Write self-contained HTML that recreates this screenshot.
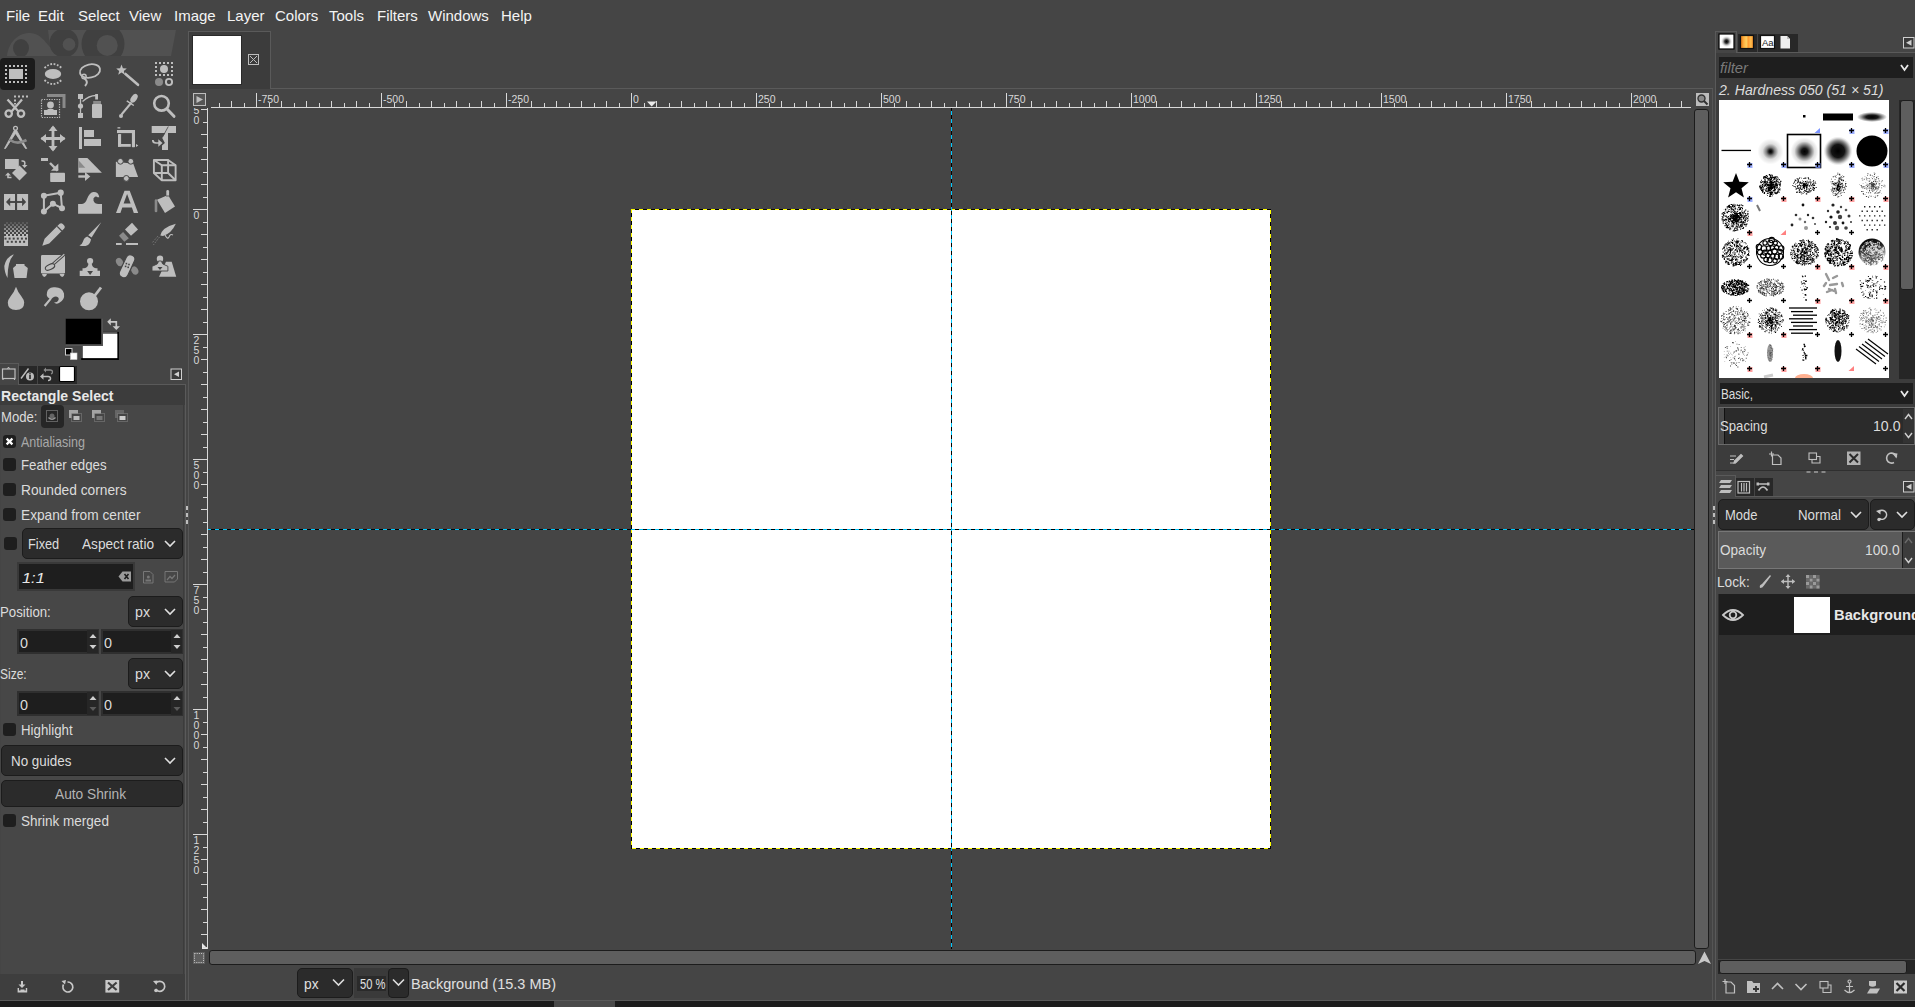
<!DOCTYPE html>
<html><head><meta charset="utf-8">
<style>
*{margin:0;padding:0;box-sizing:border-box}
html,body{width:1915px;height:1007px;overflow:hidden;background:#454545;font-family:"Liberation Sans",sans-serif;color:#dcdcdc;position:relative}
.a{position:absolute}
svg.a{overflow:visible}
.t{position:absolute;white-space:nowrap;font-size:15px;line-height:17px}
.menu span{position:absolute;top:7px;font-size:15px;line-height:18px;color:#f4f4f4}
</style></head><body>
<div class="menu">
<span style="left:6px">File</span>
<span style="left:38px">Edit</span>
<span style="left:78px">Select</span>
<span style="left:129px">View</span>
<span style="left:174px">Image</span>
<span style="left:227px">Layer</span>
<span style="left:275px">Colors</span>
<span style="left:329px">Tools</span>
<span style="left:377px">Filters</span>
<span style="left:428px">Windows</span>
<span style="left:501px">Help</span>
</div>
<div class="a" style="left:185px;top:384px;width:1px;height:616px;background:#5a5a5a"></div>
<div class="a" style="left:188px;top:31px;width:1px;height:969px;background:#575757"></div>

<div class="a" style="left:188px;top:31px;width:83px;height:58px;background:#3c3c3c;border:1px solid #5a5a5a;border-bottom:none"></div><div class="a" style="left:270px;top:88px;width:1443px;height:1px;background:#5a5a5a"></div><div class="a" style="left:193px;top:36px;width:48px;height:48px;background:#fff;box-shadow:0 0 0 1px #2a2a2a"></div><svg class="a" style="left:247px;top:53px" width="13" height="13"><rect x="1.5" y="1.5" width="10" height="10" fill="none" stroke="#bdbdbd" stroke-width="1"/><path d="M3 3L10 10M10 3L3 10" stroke="#bdbdbd" stroke-width="1"/></svg><svg class="a" style="left:193px;top:93px" width="13" height="13"><rect x="0.5" y="0.5" width="12" height="12" fill="#555" stroke="#bdbdbd"/><path d="M3.5 3L10 6.5L3.5 10Z" fill="#bdbdbd"/></svg><svg class="a" style="left:1696px;top:93px" width="13" height="13"><rect x="0" y="0" width="13" height="13" fill="#bdbdbd"/><circle cx="5.5" cy="5.5" r="3.5" fill="#8a8a8a" stroke="#333" stroke-width="1.4"/><path d="M8 8L11.5 11.5" stroke="#333" stroke-width="2"/></svg><svg class="a" style="left:0;top:0" width="1915" height="1007"><path d="M202,943 L208,949 L202,949Z" fill="#e8e8e8"/><path d="M647,101.5 L656.5,101.5 L651.7,106.5Z" fill="#e8e8e8"/><defs><clipPath id="vclip"><rect x="189" y="108" width="20" height="842"/></clipPath></defs><g fill="#d8d8d8"><rect x="219" y="103" width="1" height="4"/><rect x="231" y="101" width="1" height="6"/><rect x="244" y="103" width="1" height="4"/><rect x="256" y="93" width="1" height="14"/><rect x="269" y="103" width="1" height="4"/><rect x="281" y="101" width="1" height="6"/><rect x="294" y="103" width="1" height="4"/><rect x="306" y="101" width="1" height="6"/><rect x="319" y="103" width="1" height="4"/><rect x="331" y="101" width="1" height="6"/><rect x="344" y="103" width="1" height="4"/><rect x="356" y="101" width="1" height="6"/><rect x="369" y="103" width="1" height="4"/><rect x="381" y="93" width="1" height="14"/><rect x="394" y="103" width="1" height="4"/><rect x="406" y="101" width="1" height="6"/><rect x="419" y="103" width="1" height="4"/><rect x="431" y="101" width="1" height="6"/><rect x="444" y="103" width="1" height="4"/><rect x="456" y="101" width="1" height="6"/><rect x="469" y="103" width="1" height="4"/><rect x="481" y="101" width="1" height="6"/><rect x="494" y="103" width="1" height="4"/><rect x="506" y="93" width="1" height="14"/><rect x="519" y="103" width="1" height="4"/><rect x="531" y="101" width="1" height="6"/><rect x="544" y="103" width="1" height="4"/><rect x="556" y="101" width="1" height="6"/><rect x="569" y="103" width="1" height="4"/><rect x="581" y="101" width="1" height="6"/><rect x="594" y="103" width="1" height="4"/><rect x="606" y="101" width="1" height="6"/><rect x="619" y="103" width="1" height="4"/><rect x="631" y="93" width="1" height="14"/><rect x="644" y="103" width="1" height="4"/><rect x="656" y="101" width="1" height="6"/><rect x="669" y="103" width="1" height="4"/><rect x="681" y="101" width="1" height="6"/><rect x="694" y="103" width="1" height="4"/><rect x="706" y="101" width="1" height="6"/><rect x="719" y="103" width="1" height="4"/><rect x="731" y="101" width="1" height="6"/><rect x="744" y="103" width="1" height="4"/><rect x="756" y="93" width="1" height="14"/><rect x="769" y="103" width="1" height="4"/><rect x="781" y="101" width="1" height="6"/><rect x="794" y="103" width="1" height="4"/><rect x="806" y="101" width="1" height="6"/><rect x="819" y="103" width="1" height="4"/><rect x="831" y="101" width="1" height="6"/><rect x="844" y="103" width="1" height="4"/><rect x="856" y="101" width="1" height="6"/><rect x="869" y="103" width="1" height="4"/><rect x="881" y="93" width="1" height="14"/><rect x="894" y="103" width="1" height="4"/><rect x="906" y="101" width="1" height="6"/><rect x="919" y="103" width="1" height="4"/><rect x="931" y="101" width="1" height="6"/><rect x="944" y="103" width="1" height="4"/><rect x="956" y="101" width="1" height="6"/><rect x="969" y="103" width="1" height="4"/><rect x="981" y="101" width="1" height="6"/><rect x="994" y="103" width="1" height="4"/><rect x="1006" y="93" width="1" height="14"/><rect x="1019" y="103" width="1" height="4"/><rect x="1031" y="101" width="1" height="6"/><rect x="1044" y="103" width="1" height="4"/><rect x="1056" y="101" width="1" height="6"/><rect x="1069" y="103" width="1" height="4"/><rect x="1081" y="101" width="1" height="6"/><rect x="1094" y="103" width="1" height="4"/><rect x="1106" y="101" width="1" height="6"/><rect x="1119" y="103" width="1" height="4"/><rect x="1131" y="93" width="1" height="14"/><rect x="1144" y="103" width="1" height="4"/><rect x="1156" y="101" width="1" height="6"/><rect x="1169" y="103" width="1" height="4"/><rect x="1181" y="101" width="1" height="6"/><rect x="1194" y="103" width="1" height="4"/><rect x="1206" y="101" width="1" height="6"/><rect x="1219" y="103" width="1" height="4"/><rect x="1231" y="101" width="1" height="6"/><rect x="1244" y="103" width="1" height="4"/><rect x="1256" y="93" width="1" height="14"/><rect x="1269" y="103" width="1" height="4"/><rect x="1281" y="101" width="1" height="6"/><rect x="1294" y="103" width="1" height="4"/><rect x="1306" y="101" width="1" height="6"/><rect x="1319" y="103" width="1" height="4"/><rect x="1331" y="101" width="1" height="6"/><rect x="1344" y="103" width="1" height="4"/><rect x="1356" y="101" width="1" height="6"/><rect x="1369" y="103" width="1" height="4"/><rect x="1381" y="93" width="1" height="14"/><rect x="1394" y="103" width="1" height="4"/><rect x="1406" y="101" width="1" height="6"/><rect x="1419" y="103" width="1" height="4"/><rect x="1431" y="101" width="1" height="6"/><rect x="1444" y="103" width="1" height="4"/><rect x="1456" y="101" width="1" height="6"/><rect x="1469" y="103" width="1" height="4"/><rect x="1481" y="101" width="1" height="6"/><rect x="1494" y="103" width="1" height="4"/><rect x="1506" y="93" width="1" height="14"/><rect x="1519" y="103" width="1" height="4"/><rect x="1531" y="101" width="1" height="6"/><rect x="1544" y="103" width="1" height="4"/><rect x="1556" y="101" width="1" height="6"/><rect x="1569" y="103" width="1" height="4"/><rect x="1581" y="101" width="1" height="6"/><rect x="1594" y="103" width="1" height="4"/><rect x="1606" y="101" width="1" height="6"/><rect x="1619" y="103" width="1" height="4"/><rect x="1631" y="93" width="1" height="14"/><rect x="1644" y="103" width="1" height="4"/><rect x="1656" y="101" width="1" height="6"/><rect x="1669" y="103" width="1" height="4"/><rect x="1681" y="101" width="1" height="6"/><rect x="211" y="107" width="1480" height="1"/><rect x="201" y="109" width="6" height="1"/><rect x="203" y="122" width="4" height="1"/><rect x="201" y="134" width="6" height="1"/><rect x="203" y="147" width="4" height="1"/><rect x="201" y="159" width="6" height="1"/><rect x="203" y="172" width="4" height="1"/><rect x="201" y="184" width="6" height="1"/><rect x="203" y="197" width="4" height="1"/><rect x="193" y="209" width="14" height="1"/><rect x="203" y="222" width="4" height="1"/><rect x="201" y="234" width="6" height="1"/><rect x="203" y="247" width="4" height="1"/><rect x="201" y="259" width="6" height="1"/><rect x="203" y="272" width="4" height="1"/><rect x="201" y="284" width="6" height="1"/><rect x="203" y="297" width="4" height="1"/><rect x="201" y="309" width="6" height="1"/><rect x="203" y="322" width="4" height="1"/><rect x="193" y="334" width="14" height="1"/><rect x="203" y="347" width="4" height="1"/><rect x="201" y="359" width="6" height="1"/><rect x="203" y="372" width="4" height="1"/><rect x="201" y="384" width="6" height="1"/><rect x="203" y="397" width="4" height="1"/><rect x="201" y="409" width="6" height="1"/><rect x="203" y="422" width="4" height="1"/><rect x="201" y="434" width="6" height="1"/><rect x="203" y="447" width="4" height="1"/><rect x="193" y="459" width="14" height="1"/><rect x="203" y="472" width="4" height="1"/><rect x="201" y="484" width="6" height="1"/><rect x="203" y="497" width="4" height="1"/><rect x="201" y="509" width="6" height="1"/><rect x="203" y="522" width="4" height="1"/><rect x="201" y="534" width="6" height="1"/><rect x="203" y="547" width="4" height="1"/><rect x="201" y="559" width="6" height="1"/><rect x="203" y="572" width="4" height="1"/><rect x="193" y="584" width="14" height="1"/><rect x="203" y="597" width="4" height="1"/><rect x="201" y="609" width="6" height="1"/><rect x="203" y="622" width="4" height="1"/><rect x="201" y="634" width="6" height="1"/><rect x="203" y="647" width="4" height="1"/><rect x="201" y="659" width="6" height="1"/><rect x="203" y="672" width="4" height="1"/><rect x="201" y="684" width="6" height="1"/><rect x="203" y="697" width="4" height="1"/><rect x="193" y="709" width="14" height="1"/><rect x="203" y="722" width="4" height="1"/><rect x="201" y="734" width="6" height="1"/><rect x="203" y="747" width="4" height="1"/><rect x="201" y="759" width="6" height="1"/><rect x="203" y="772" width="4" height="1"/><rect x="201" y="784" width="6" height="1"/><rect x="203" y="797" width="4" height="1"/><rect x="201" y="809" width="6" height="1"/><rect x="203" y="822" width="4" height="1"/><rect x="193" y="834" width="14" height="1"/><rect x="203" y="847" width="4" height="1"/><rect x="201" y="859" width="6" height="1"/><rect x="203" y="872" width="4" height="1"/><rect x="201" y="884" width="6" height="1"/><rect x="203" y="897" width="4" height="1"/><rect x="201" y="909" width="6" height="1"/><rect x="203" y="922" width="4" height="1"/><rect x="201" y="934" width="6" height="1"/><rect x="203" y="947" width="4" height="1"/><rect x="207" y="108" width="1" height="841"/></g><g fill="#d8d8d8" font-family="Liberation Sans" font-size="10.5px"><text x="258" y="103">-750</text><text x="383" y="103">-500</text><text x="508" y="103">-250</text><text x="633" y="103">0</text><text x="758" y="103">250</text><text x="883" y="103">500</text><text x="1008" y="103">750</text><text x="1133" y="103">1000</text><text x="1258" y="103">1250</text><text x="1383" y="103">1500</text><text x="1508" y="103">1750</text><text x="1633" y="103">2000</text><text x="193.5" y="219">0</text><text x="193.5" y="344">2</text><text x="193.5" y="354">5</text><text x="193.5" y="364">0</text><text x="193.5" y="469">5</text><text x="193.5" y="479">0</text><text x="193.5" y="489">0</text><text x="193.5" y="594">7</text><text x="193.5" y="604">5</text><text x="193.5" y="614">0</text><text x="193.5" y="719">1</text><text x="193.5" y="729">0</text><text x="193.5" y="739">0</text><text x="193.5" y="749">0</text><text x="193.5" y="844">1</text><text x="193.5" y="854">2</text><text x="193.5" y="864">5</text><text x="193.5" y="874">0</text><text x="193.5" y="94" clip-path="url(#vclip)">-</text><text x="193.5" y="104" clip-path="url(#vclip)">2</text><text x="193.5" y="114" clip-path="url(#vclip)">5</text><text x="193.5" y="124" clip-path="url(#vclip)">0</text></g></svg><div class="a" style="left:631px;top:209px;width:640px;height:640px;background:#fff"></div><svg class="a" style="left:0;top:0" width="1915" height="1007"><g stroke-width="1" fill="none"><path d="M631,209.5 L1271,209.5 M631.5,209 L631.5,849 M631,848.5 L1271,848.5 M1270.5,209 L1270.5,849" stroke="#ffff00"/><path d="M631,209.5 L1271,209.5 M631.5,209 L631.5,849" stroke="#000" stroke-dasharray="4 4" stroke-dashoffset="4"/><path d="M631,848.5 L1271,848.5 M1270.5,209 L1270.5,849" stroke="#000" stroke-dasharray="4 4" stroke-dashoffset="3"/></g><line x1="951.5" y1="108" x2="951.5" y2="949" stroke="#00c8ff" stroke-width="1"/><line x1="951.5" y1="108" x2="951.5" y2="949" stroke="#000" stroke-width="1" stroke-dasharray="4 4" stroke-dashoffset="1"/><line x1="208" y1="529.5" x2="1694" y2="529.5" stroke="#00c8ff" stroke-width="1"/><line x1="208" y1="529.5" x2="1694" y2="529.5" stroke="#000" stroke-width="1" stroke-dasharray="4 4" stroke-dashoffset="5"/></svg><div class="a" style="left:1694px;top:109px;width:15px;height:840px;background:#5e5e5e;border:1px solid #1c1c1c;border-radius:3px"></div><div class="a" style="left:209px;top:950px;width:1487px;height:15px;background:#5e5e5e;border:1px solid #1c1c1c;border-radius:3px"></div><svg class="a" style="left:193px;top:952px" width="12" height="12"><rect x="0" y="0" width="12" height="12" fill="#5e5e5e"/><rect x="1.5" y="1.5" width="9" height="9" fill="none" stroke="#cfcfcf" stroke-dasharray="1 1.2"/></svg><svg class="a" style="left:1697px;top:951px" width="15" height="14"><path d="M7.5 0.5L14 13L7.5 10L1 13Z" fill="#c8c8c8"/></svg><div class="a" style="left:297px;top:968px;width:56px;height:30px;background:#2b2b2b;border:1px solid #1c1c1c;border-radius:5px"></div><div class="t" style="left:303.5px;top:975.80px;font-size:15px;line-height:15px;color:#e0e0e0;font-weight:400;font-style:normal;transform:scaleX(0.9152);transform-origin:0 0;">px</div><svg class="a" style="left:332px;top:978px" width="13" height="9"><path d="M1 1.5L6.5 7L12 1.5" fill="none" stroke="#dcdcdc" stroke-width="1.6"/></svg><div class="a" style="left:354px;top:968px;width:35px;height:30px;background:#3a3a3a"></div><div class="a" style="left:357px;top:976px;width:29px;height:15px;background:#2a2a2a"></div><div class="t" style="left:359.6px;top:977.15px;font-size:14px;line-height:14px;color:#e0e0e0;font-weight:400;font-style:normal;transform:scaleX(0.7988);transform-origin:0 0;">50 %</div><div class="a" style="left:388px;top:968px;width:21px;height:30px;background:#2b2b2b;border:1px solid #1c1c1c;border-radius:4px"></div><svg class="a" style="left:392px;top:978px" width="13" height="9"><path d="M1 1.5L6.5 7L12 1.5" fill="none" stroke="#dcdcdc" stroke-width="1.6"/></svg><div class="t" style="left:411.1px;top:976.10px;font-size:15px;line-height:15px;color:#e0e0e0;font-weight:400;font-style:normal;transform:scaleX(0.9662);transform-origin:0 0;">Background (15.3 MB)</div><div class="a" style="left:1712px;top:89px;width:1px;height:911px;background:#555"></div>
<svg class="a" style="left:0;top:0" width="190" height="60"><defs><clipPath id="wb"><rect x="0" y="30" width="190" height="26"/></clipPath></defs><g clip-path="url(#wb)"><path d="M7,56 C9,40 20,33 30,33 C40,33 45,42 50,47 L48,30 L176,30 L171,56 Z" fill="#515151"/><ellipse cx="21" cy="48" rx="8" ry="9" fill="#404040"/><circle cx="64" cy="43" r="14.5" fill="#404040"/><circle cx="69" cy="44.4" r="6.3" fill="#515151"/><circle cx="103" cy="44" r="21.5" fill="#404040"/><circle cx="107.2" cy="45.4" r="10.5" fill="#515151"/></g></svg><svg class="a" style="left:0;top:0" width="190" height="320"><rect x="0" y="58" width="35" height="32" rx="4" fill="#1c1c1c"/><g fill="#bebebe"><rect x="5" y="65" width="2" height="2"/><rect x="5" y="81" width="2" height="2"/><rect x="9" y="65" width="2" height="2"/><rect x="9" y="81" width="2" height="2"/><rect x="13" y="65" width="2" height="2"/><rect x="13" y="81" width="2" height="2"/><rect x="17" y="65" width="2" height="2"/><rect x="17" y="81" width="2" height="2"/><rect x="21" y="65" width="2" height="2"/><rect x="21" y="81" width="2" height="2"/><rect x="25" y="65" width="2" height="2"/><rect x="25" y="81" width="2" height="2"/><rect x="5" y="69" width="2" height="2"/><rect x="25" y="69" width="2" height="2"/><rect x="5" y="73" width="2" height="2"/><rect x="25" y="73" width="2" height="2"/><rect x="5" y="77" width="2" height="2"/><rect x="25" y="77" width="2" height="2"/></g><rect x="9" y="69" width="14" height="10" fill="#bebebe"/><path d="M44.5,68 Q53,60 61.5,68 M44.5,80 Q53,88 61.5,80" fill="none" stroke="#bebebe" stroke-width="1.9" stroke-dasharray="1.8 1.6"/><ellipse cx="53" cy="74" rx="8.2" ry="5" fill="#bebebe"/><ellipse cx="90" cy="71" rx="10.2" ry="6.6" transform="rotate(-12 90 71)" fill="none" stroke="#bebebe" stroke-width="1.8"/><circle cx="84" cy="76.5" r="2.2" fill="none" stroke="#bebebe" stroke-width="1.4"/><path d="M84.5,78.5 Q89,82 85,86" fill="none" stroke="#bebebe" stroke-width="2"/><path d="M121.5,64.5 L122.9,68.3 L126.8,68.4 L123.8,70.9 L124.8,74.8 L121.5,72.6 L118.2,74.8 L119.2,70.9 L116.2,68.4 L120.1,68.3Z" fill="#bebebe"/><path d="M125.5,74 L138,84.8" stroke="#bebebe" stroke-width="2.6" stroke-linecap="round"/><g fill="#bebebe"><rect x="155" y="62" width="2" height="2"/><rect x="155" y="74" width="2" height="2"/><rect x="159" y="62" width="2" height="2"/><rect x="159" y="74" width="2" height="2"/><rect x="163" y="62" width="2" height="2"/><rect x="163" y="74" width="2" height="2"/><rect x="167" y="62" width="2" height="2"/><rect x="167" y="74" width="2" height="2"/><rect x="171" y="62" width="2" height="2"/><rect x="171" y="74" width="2" height="2"/><rect x="155" y="66" width="2" height="2"/><rect x="171" y="66" width="2" height="2"/><rect x="155" y="70" width="2" height="2"/><rect x="171" y="70" width="2" height="2"/></g><circle cx="164" cy="69" r="4" fill="#bebebe"/><circle cx="159" cy="82" r="4" fill="#8a8a8a"/><circle cx="169" cy="82" r="3.1" fill="none" stroke="#bebebe" stroke-width="1.9"/><g fill="#bebebe"><rect x="14" y="95.5" width="2" height="2"/><rect x="18" y="95.5" width="2" height="2"/><rect x="22" y="95.5" width="2" height="2"/><rect x="26" y="95.5" width="2" height="2"/><rect x="14" y="99.5" width="2" height="2"/><rect x="14" y="103" width="2" height="1.5"/></g><path d="M7.5,99.5 L18.5,111.5 M22,99.5 L11.5,111.5" stroke="#bebebe" stroke-width="2.3"/><circle cx="8.7" cy="113.6" r="3.2" fill="none" stroke="#bebebe" stroke-width="2.3"/><circle cx="21" cy="113.6" r="3.2" fill="none" stroke="#bebebe" stroke-width="2.3"/><path d="M47,95.5 L64,95.5 L64,108" fill="none" stroke="#8a8a8a" stroke-width="3"/><rect x="41.5" y="99.5" width="18" height="18" fill="none" stroke="#bebebe" stroke-width="1.2" stroke-dasharray="1.2 1.3"/><circle cx="50.5" cy="105" r="3.4" fill="#bebebe"/><path d="M44,115 L44,110 L47.5,110 L47.5,109 L53.5,109 L53.5,110 L57,110 L57,115Z" fill="#bebebe"/><g fill="#bebebe"><rect x="78" y="94" width="5" height="5"/><rect x="78" y="113" width="5" height="5"/><circle cx="80.5" cy="106" r="2.6"/></g><path d="M80.5,98 L80.5,113 M82.5,101.5 Q89,95.5 96,95.5" fill="none" stroke="#bebebe" stroke-width="1.3"/><rect x="95.2" y="94" width="2.8" height="5.5" fill="#bebebe"/><rect x="93.2" y="101" width="7.8" height="3" fill="#8a8a8a"/><rect x="92" y="104" width="10" height="14" rx="1" fill="#bebebe"/><ellipse cx="134" cy="98.3" rx="2.9" ry="4.8" transform="rotate(35 134 98.3)" fill="#bebebe"/><path d="M126.8,100.8 L133.8,105.5" stroke="#bebebe" stroke-width="1.5"/><path d="M131.5,102.5 L121.5,114.5" stroke="#bebebe" stroke-width="2"/><circle cx="121" cy="116" r="2" fill="#bebebe"/><circle cx="161.5" cy="103.3" r="7.3" fill="none" stroke="#bebebe" stroke-width="2.6"/><path d="M167,109 L174,116.3" stroke="#bebebe" stroke-width="3" stroke-linecap="round"/><circle cx="15.5" cy="128.3" r="1.9" fill="none" stroke="#bebebe" stroke-width="1.3"/><path d="M14.3,130.5 L4.5,148.5 L5.5,148.5 L15.5,133.5 L25.5,148.5 L26.7,148.5 L16.7,130.5Z" fill="#bebebe" stroke="#bebebe" stroke-width="0.8"/><path d="M9.5,139.5 Q17,145.5 26.5,140" fill="none" stroke="#8a8a8a" stroke-width="2.6"/><path d="M53,127 L53,150 M41.5,138.5 L64.5,138.5" stroke="#bebebe" stroke-width="2.8"/><path d="M53,125.5 L57.5,131 L48.5,131Z M53,151.5 L57.5,146 L48.5,146Z M40.5,138.5 L46,134 L46,143Z M65.5,138.5 L60,134 L60,143Z" fill="#bebebe"/><g fill="#bebebe"><rect x="79" y="127" width="3" height="22"/><rect x="84" y="130" width="10" height="7"/><rect x="84" y="139" width="17" height="7"/></g><g fill="#bebebe"><rect x="117" y="130" width="18" height="3.1"/><rect x="131.9" y="130" width="3.1" height="17.2" rx="0.6"/><rect x="118" y="134" width="3.1" height="12.8" rx="0.6"/><rect x="118" y="144" width="12.8" height="2.8"/><rect x="117.5" y="127.2" width="2.8" height="1.3"/><path d="M136,144 L138.3,145.5 L136,147Z"/></g><path d="M151.7,126 L176,126 L176,133 L168,133 L168,150 L162,150 L162,145.4 L164.9,142.9 L162.1,137.7 L165.3,133 L151.7,133Z" fill="#bebebe"/><path d="M168.3,126.5 L162.3,137.5" stroke="#454545" stroke-width="0.8"/><path d="M152.8,140 Q152.8,143 156,143 L159,143" fill="none" stroke="#bebebe" stroke-width="1.7"/><path d="M158.3,139.3 L162.5,143 L158.3,146.7Z" fill="#bebebe"/><g fill="#bebebe"><rect x="5" y="159" width="13.8" height="10"/><path d="M19.5,165.5 L27,173 L19.5,180.5 L12,173Z"/></g><path d="M21.5,161 Q26,160.5 24.5,165" fill="none" stroke="#bebebe" stroke-width="1.6"/><path d="M22,165 L27.5,165 L24.5,168Z" fill="#bebebe"/><path d="M11.5,177.5 L8,177.5 L8,175" fill="none" stroke="#bebebe" stroke-width="1.6"/><path d="M5,175.5 L8,172.5 L11,175.5Z" fill="#bebebe"/><g fill="#bebebe"><rect x="41" y="158" width="7" height="3"/><rect x="50.2" y="172.8" width="14.8" height="9.2" rx="0.8"/><path d="M50,163 L57.6,170.6" stroke="#bebebe" stroke-width="2.4"/><path d="M58.3,163.5 L58.3,170.8 L51,170.8Z"/></g><path d="M78.3,158 L87.4,158 L101.9,172.8 L78.3,172.8Z" fill="#bebebe"/><path d="M78.3,160 L85.3,167.8 L78.3,167.8Z" fill="#8a8a8a"/><path d="M78.3,176.5 L86,176.5" stroke="#bebebe" stroke-width="2.4"/><path d="M85,172 L90.3,176.5 L85,181Z" fill="#bebebe"/><path d="M115.9,161.7 L133.3,163.8 L138.1,177 L115.9,177Z" fill="#bebebe"/><g fill="#bebebe" stroke="#454545" stroke-width="1"><circle cx="120.4" cy="161.3" r="2.9"/><circle cx="130.8" cy="161.3" r="2.9"/><circle cx="126.3" cy="178.4" r="2.9"/></g><g fill="none" stroke="#bebebe" stroke-width="1.9" stroke-linejoin="round"><rect x="161.8" y="165.3" width="13.8" height="15"/><rect x="153.9" y="160" width="14.2" height="13"/><path d="M153.9,160 L161.8,165.3 M168.1,160 L175.6,165.3 M153.9,173 L161.8,180.3 M168.1,173 L175.6,180.3"/></g><g fill="#bebebe"><rect x="4" y="194" width="11" height="16"/><rect x="17.1" y="194" width="11" height="16"/></g><path d="M9,202 L23.5,202" stroke="#454545" stroke-width="1.9"/><path d="M6,202 L10.2,197.6 L10.2,206.3Z M26.1,202 L22.1,197.6 L22.1,206.3Z" fill="#454545"/><path d="M43.9,195.7 L60.7,192.7 L62,208.2 L52.9,203.7 L43.9,211.5Z" fill="none" stroke="#bebebe" stroke-width="2"/><g fill="#bebebe"><circle cx="43.9" cy="195.7" r="3"/><circle cx="60.7" cy="192.7" r="3.1"/><circle cx="62" cy="208.2" r="3"/><circle cx="52.9" cy="203.7" r="3"/><circle cx="43.9" cy="211.5" r="3"/></g><path d="M78.1,213.7 L78.1,204 L82,204 Q85.5,203.5 87,199 Q89.5,192.3 93.5,192 Q98.5,191.8 99.3,197.3 L97.5,197.3 Q96.5,196.2 95,196.8 Q92.8,198 93.5,200.8 Q94.8,204 98.5,204 L102,204 L102,213.7Z" fill="#bebebe"/><path d="M116,213 L124.5,190.7 L129.7,190.7 L138.2,213 L133.8,213 L131.9,207.5 L122.3,207.5 L120.4,213Z M123.6,203.5 L130.6,203.5 L127.1,194Z" fill="#bebebe" fill-rule="evenodd"/><path d="M157,199.8 L168,195 L175,206.5 L165,213Z" fill="#bebebe"/><rect x="166.3" y="190" width="2.8" height="12" rx="1.4" fill="#bebebe"/><path d="M166,196 L169.5,196" stroke="#454545" stroke-width="0.8"/><path d="M156,200.5 L156,211" stroke="#8a8a8a" stroke-width="2.6" stroke-linecap="round"/><g fill="#bebebe"><rect x="6" y="222" width="2" height="2" opacity="0.18"/><rect x="10" y="222" width="2" height="2" opacity="0.18"/><rect x="14" y="222" width="2" height="2" opacity="0.18"/><rect x="18" y="222" width="2" height="2" opacity="0.18"/><rect x="22" y="222" width="2" height="2" opacity="0.18"/><rect x="26" y="222" width="2" height="2" opacity="0.18"/><rect x="4" y="224" width="2" height="2" opacity="0.32"/><rect x="8" y="224" width="2" height="2" opacity="0.32"/><rect x="12" y="224" width="2" height="2" opacity="0.32"/><rect x="16" y="224" width="2" height="2" opacity="0.32"/><rect x="20" y="224" width="2" height="2" opacity="0.32"/><rect x="24" y="224" width="2" height="2" opacity="0.32"/><rect x="6" y="226" width="2" height="2" opacity="0.45"/><rect x="10" y="226" width="2" height="2" opacity="0.45"/><rect x="14" y="226" width="2" height="2" opacity="0.45"/><rect x="18" y="226" width="2" height="2" opacity="0.45"/><rect x="22" y="226" width="2" height="2" opacity="0.45"/><rect x="26" y="226" width="2" height="2" opacity="0.45"/><rect x="4" y="228" width="2" height="2" opacity="0.59"/><rect x="8" y="228" width="2" height="2" opacity="0.59"/><rect x="12" y="228" width="2" height="2" opacity="0.59"/><rect x="16" y="228" width="2" height="2" opacity="0.59"/><rect x="20" y="228" width="2" height="2" opacity="0.59"/><rect x="24" y="228" width="2" height="2" opacity="0.59"/><rect x="6" y="230" width="2" height="2" opacity="0.73"/><rect x="10" y="230" width="2" height="2" opacity="0.73"/><rect x="14" y="230" width="2" height="2" opacity="0.73"/><rect x="18" y="230" width="2" height="2" opacity="0.73"/><rect x="22" y="230" width="2" height="2" opacity="0.73"/><rect x="26" y="230" width="2" height="2" opacity="0.73"/><rect x="4" y="232" width="2" height="2" opacity="0.86"/><rect x="8" y="232" width="2" height="2" opacity="0.86"/><rect x="12" y="232" width="2" height="2" opacity="0.86"/><rect x="16" y="232" width="2" height="2" opacity="0.86"/><rect x="20" y="232" width="2" height="2" opacity="0.86"/><rect x="24" y="232" width="2" height="2" opacity="0.86"/><rect x="6" y="234" width="2" height="2" opacity="1.00"/><rect x="10" y="234" width="2" height="2" opacity="1.00"/><rect x="14" y="234" width="2" height="2" opacity="1.00"/><rect x="18" y="234" width="2" height="2" opacity="1.00"/><rect x="22" y="234" width="2" height="2" opacity="1.00"/><rect x="26" y="234" width="2" height="2" opacity="1.00"/></g><rect x="4" y="236" width="24" height="10" rx="0.5" fill="#bebebe"/><g fill="#454545"><rect x="4.5" y="237.6" width="2" height="2"/><rect x="8.6" y="237.6" width="2" height="2"/><rect x="12.7" y="237.6" width="2" height="2"/><rect x="16.8" y="237.6" width="2" height="2"/><rect x="20.9" y="237.6" width="2" height="2"/><rect x="25.0" y="237.6" width="2" height="2"/><rect x="6.7" y="240.8" width="2" height="2"/><rect x="10.8" y="240.8" width="2" height="2"/><rect x="14.9" y="240.8" width="2" height="2"/><rect x="19.0" y="240.8" width="2" height="2"/><rect x="23.1" y="240.8" width="2" height="2"/></g><path d="M42.3,245.7 L44.6,238.8 L59.6,223.8 Q61.2,222.4 62.8,224 L64.2,225.4 Q65.6,227 64.2,228.5 L49.2,243.4Z" fill="#bebebe"/><path d="M57.2,226.4 L61.8,231" stroke="#454545" stroke-width="1.2"/><path d="M101.2,222.3 L91.6,237.6 L88.2,235.3Z" fill="#bebebe"/><path d="M87.3,236.5 L91,239 Q90.5,243.5 87.5,245.2 Q84,246.8 79.4,245.4 Q82.2,244.5 83,241.5 Q84,237.5 87.3,236.5Z" fill="#bebebe"/><path d="M87.6,236 L91,238.4" stroke="#454545" stroke-width="0.9"/><path d="M132,222.8 L138,229.4 L131,235.8 L125,229.4Z" fill="#bebebe"/><path d="M123.1,232 L128.8,238.3 L124.4,241.8 L119,235.8Z" fill="#8a8a8a"/><g fill="#bebebe"><rect x="116" y="243" width="5.7" height="2"/><rect x="126" y="243" width="12" height="2"/></g><path d="M160.3,235.5 Q162,227.5 175.8,223.8 Q171.5,233.5 163,236Z" fill="#bebebe"/><path d="M165,235 Q167.5,240 169,237 Q170,233.5 173,235" fill="none" stroke="#bebebe" stroke-width="1.1"/><path d="M159.5,237 L153,245.5 M158,236 L152,243" stroke="#bebebe" stroke-width="0.7" stroke-dasharray="1 1.2" opacity="0.7"/><path d="M14,254.2 Q6,257 4.3,266 Q4.5,273 7.5,277.9 Q7.5,270 9,264 Q10.5,258 14,254.2Z" fill="#bebebe"/><path d="M16,263.9 L24.5,263.9 L24.5,265.5 L27.8,268 L26.5,277.9 L14.5,277.9 L13,268 L16,265.5Z" fill="#bebebe"/><rect x="41" y="255" width="24" height="18.5" rx="1.2" fill="#bebebe"/><g fill="#bebebe"><path d="M42,274 L47,274 Q46,277 44.3,277 Q42.5,277 42,274Z"/><path d="M59.5,274 L64.5,274 Q64,277 62.2,277 Q60.5,277 59.5,274Z"/></g><path d="M64.3,254.3 L51.5,265.5" stroke="#454545" stroke-width="3"/><path d="M64.3,254.3 L51.5,265.5" stroke="#bebebe" stroke-width="1.2"/><ellipse cx="50" cy="267" rx="5" ry="2.6" transform="rotate(-25 50 267)" fill="#bebebe" stroke="#454545" stroke-width="1.1"/><circle cx="90.1" cy="261" r="3.1" fill="#bebebe"/><path d="M88.5,263.5 L91.7,263.5 Q92,267.5 96,268.3 L97.5,268.3 L97.5,270.7 L100,270.7 L100,276.1 L79.7,276.1 L79.7,270.7 L82.5,270.7 L82.5,268.3 L84.2,268.3 Q88.2,267.5 88.5,263.5Z" fill="#bebebe"/><path d="M87.2,271 L93,271 L90.1,274.9Z" fill="#454545"/><ellipse cx="119.5" cy="262" rx="3.3" ry="4.3" transform="rotate(-30 119.5 262)" fill="#8a8a8a"/><ellipse cx="134.8" cy="270.5" rx="3.3" ry="4.3" transform="rotate(-30 134.8 270.5)" fill="#8a8a8a"/><rect x="122.6" y="254" width="9" height="24.5" rx="4.5" transform="rotate(25 127.1 266.2)" fill="#bebebe" stroke="#454545" stroke-width="1.2"/><g fill="#454545"><rect x="125.6" y="262.8" width="1.6" height="1.6"/><rect x="128.2" y="263.7" width="1.6" height="1.6"/><rect x="124.8" y="265.6" width="1.6" height="1.6"/><rect x="127.4" y="266.5" width="1.6" height="1.6"/></g><path d="M166,261.8 L171.7,261.8 L176.2,276.8 L159,276.8Z" fill="#bebebe"/><circle cx="160" cy="258.7" r="3.2" fill="#bebebe"/><path d="M158.5,261 L161.5,261 Q161.8,264.5 165,265 L167.9,266.3 L167.9,271 L152,271 L152,266.3 L155,265 Q158.2,264.5 158.5,261Z" fill="#bebebe" stroke="#454545" stroke-width="0.9"/><path d="M157.5,267 L162.5,267 L160,270Z" fill="#454545"/><path d="M16,286.8 Q17.5,291.5 21.5,296.5 Q24.2,300 24.2,302.5 Q24.2,310 16,310 Q7.8,310 7.8,302.5 Q7.8,300 10.5,296.5 Q14.5,291.5 16,286.8Z" fill="#bebebe"/><path d="M47,292.5 Q47.5,288 53.5,287.3 Q62,286.5 64,293.5 Q65,300 59,303 Q56,304.5 54,302.5 Q57.5,302.5 58.5,300 Q59.5,297 56,296.5 Q52.5,296.5 51,300 L45.5,306.8 L43.8,305.3 L49.5,298.5 Q46,297 47,292.5Z" fill="#bebebe"/><circle cx="89" cy="301.3" r="9" fill="#bebebe"/><path d="M94.5,296 L101,287.5" stroke="#bebebe" stroke-width="2.8"/></svg><svg class="a" style="left:0;top:0" width="190" height="370"><rect x="81.2" y="331.9" width="37.7" height="28.1" fill="#000"/><rect x="81.2" y="331.9" width="36.1" height="26.2" fill="#555"/><rect x="82.9" y="333.8" width="34.4" height="24.3" fill="#fff"/><rect x="65.7" y="318.7" width="37.3" height="27.3" fill="#555"/><rect x="65.7" y="318.7" width="35.5" height="25.5" fill="#000"/><rect x="65.5" y="348.5" width="6.5" height="6.5" fill="#000" stroke="#ccc" stroke-width="1"/><rect x="70.5" y="353" width="6.5" height="6.5" fill="#fff" stroke="#ccc" stroke-width="0.6"/><path d="M109.5,321.8 L116.3,321.8 L116.3,327.5" fill="none" stroke="#c8c8c8" stroke-width="1.7"/><path d="M107.2,321.8 L110.8,318.2 L110.8,325.4Z M116.3,330 L112.6,326.2 L120,326.2Z" fill="#c8c8c8"/></svg><div class="a" style="left:0px;top:363px;width:19px;height:22px;background:#454545;border-radius:0px;border-top:1px solid #5a5a5a;border-right:1px solid #5a5a5a"></div><div class="a" style="left:19px;top:366px;width:18px;height:18px;background:#282828;border-radius:0px;"></div><div class="a" style="left:38px;top:366px;width:19px;height:18px;background:#282828;border-radius:0px;"></div><div class="a" style="left:57px;top:366px;width:20px;height:18px;background:#282828;border-radius:0px;"></div><div class="a" style="left:18px;top:384px;width:167px;height:1px;background:#5a5a5a;border-radius:0px;"></div><svg class="a" style="left:0;top:360" width="90" height="30"><rect x="2.5" y="9" width="12.5" height="9.5" fill="none" stroke="#bdbdbd" stroke-width="1.2"/><path d="M7.5,9 L8.5,7 L9.5,9" fill="none" stroke="#bdbdbd" stroke-width="1"/><path d="M3,18.5 L3,20 M14.5,18.5 L14.5,20" stroke="#bdbdbd" stroke-width="1.2"/><path d="M21,18.5 L28.5,8.5" stroke="#bdbdbd" stroke-width="1.4"/><circle cx="30" cy="16.5" r="4" fill="#bdbdbd"/><rect x="29.2" y="15" width="1.6" height="4" fill="#282828"/><rect x="29.2" y="13.2" width="1.6" height="1.2" fill="#282828"/><path d="M45.5,10 L50,10 Q52.5,10 52.5,12 Q52.5,13.5 51,14" fill="none" stroke="#8a8a8a" stroke-width="1.3"/><path d="M43.5,10 L46,7.5 L46,12.5Z" fill="#8a8a8a"/><path d="M42.5,16.5 L48,16.5 Q50.5,16.5 50.5,18.5 Q50.5,20.5 48,20.5" fill="none" stroke="#bdbdbd" stroke-width="1.5"/><path d="M40,16.5 L43.5,13.3 L43.5,19.7Z" fill="#bdbdbd"/><rect x="59.5" y="6.5" width="15" height="15" fill="#fff" stroke="#000" stroke-width="1.2" rx="1"/></svg><svg class="a" style="left:170px;top:368px" width="13" height="13"><rect x="1" y="1" width="10.5" height="10.5" fill="#3a3a3a" stroke="#cfcfcf" stroke-width="1"/><path d="M4,6.3 L9,3.5 L9,9Z" fill="#cfcfcf"/></svg><div class="a" style="left:0px;top:385px;width:185px;height:20px;background:#3c3c3c;border-radius:0px;"></div><div class="t" style="left:0.6px;top:388.98px;font-size:14.2px;line-height:14.2px;color:#e8e8e8;font-weight:700;font-style:normal;transform:scaleX(0.9906);transform-origin:0 0;">Rectangle Select</div><div class="a" style="left:1px;top:405px;width:182px;height:569px;background:#474747;border-radius:0px;"></div><div class="a" style="left:0px;top:974px;width:185px;height:26px;background:#3e3e3e;border-radius:0px;"></div><div class="a" style="left:183px;top:405px;width:1px;height:569px;background:#3c3c3c;border-radius:0px;"></div><div class="t" style="left:0.6px;top:409.10px;font-size:15px;line-height:15px;color:#dcdcdc;font-weight:400;font-style:normal;transform:scaleX(0.8752);transform-origin:0 0;">Mode:</div><div class="a" style="left:41px;top:405px;width:23px;height:23px;background:#262626;border-radius:4px;"></div><svg class="a" style="left:40px;top:405px" width="95" height="25"><rect x="6.5" y="5.5" width="11" height="11" fill="none" stroke="#aaa" stroke-width="0.9" stroke-dasharray="1 1"/><path d="M8.5,12.5 Q12,16 15.5,12.5" fill="none" stroke="#999" stroke-width="1.5"/><circle cx="12" cy="11" r="2.5" fill="#666"/><g fill="#999"><rect x="29" y="5" width="9" height="8" fill="#bbb" opacity="0.8"/><rect x="31.5" y="8.5" width="10" height="8" fill="#454545" stroke="#999" stroke-dasharray="1 1" stroke-width="0.8"/><rect x="33.5" y="11" width="6" height="4" fill="#bbb"/></g><g><rect x="52" y="5" width="9" height="8" fill="#bbb" opacity="0.8"/><rect x="54.5" y="8.5" width="10" height="8" fill="#454545" stroke="#999" stroke-dasharray="1 1" stroke-width="0.8"/><rect x="56.5" y="11" width="6" height="4" fill="#777"/></g><g><rect x="75" y="5" width="9" height="8" fill="#666"/><rect x="77.5" y="8.5" width="10" height="8" fill="#454545" stroke="#999" stroke-dasharray="1 1" stroke-width="0.8"/><rect x="79.5" y="11" width="6" height="4" fill="#ccc"/></g></svg><div class="a" style="left:3px;top:435px;width:13px;height:13px;background:#1e1e1e;border-radius:3px;"></div><svg class="a" style="left:3px;top:435px" width="13" height="13"><path d="M3.6,3.6 L9.4,9.4 M9.4,3.6 L3.6,9.4" stroke="#fff" stroke-width="2.2"/></svg><div class="t" style="left:20.5px;top:434.30px;font-size:15px;line-height:15px;color:#a9a9a9;font-weight:400;font-style:normal;transform:scaleX(0.8342);transform-origin:0 0;">Antialiasing</div><div class="a" style="left:3px;top:458px;width:13px;height:13px;background:#1e1e1e;border-radius:3px;"></div><div class="t" style="left:20.5px;top:457.00px;font-size:15px;line-height:15px;color:#dcdcdc;font-weight:400;font-style:normal;transform:scaleX(0.8849);transform-origin:0 0;">Feather edges</div><div class="a" style="left:3px;top:483px;width:13px;height:13px;background:#1e1e1e;border-radius:3px;"></div><div class="t" style="left:20.5px;top:481.80px;font-size:15px;line-height:15px;color:#dcdcdc;font-weight:400;font-style:normal;transform:scaleX(0.9176);transform-origin:0 0;">Rounded corners</div><div class="a" style="left:3px;top:508px;width:13px;height:13px;background:#1e1e1e;border-radius:3px;"></div><div class="t" style="left:20.5px;top:506.70px;font-size:15px;line-height:15px;color:#dcdcdc;font-weight:400;font-style:normal;transform:scaleX(0.9129);transform-origin:0 0;">Expand from center</div><div class="a" style="left:4px;top:537px;width:13px;height:13px;background:#1e1e1e;border-radius:3px;"></div><div class="a" style="left:22px;top:528px;width:161px;height:31px;background:#2b2b2b;border:1px solid #1c1c1c;border-radius:5px;"></div><div class="t" style="left:28.4px;top:536.10px;font-size:15px;line-height:15px;color:#dcdcdc;font-weight:400;font-style:normal;transform:scaleX(0.8504);transform-origin:0 0;">Fixed</div><div class="t" style="left:81.9px;top:536.10px;font-size:15px;line-height:15px;color:#dcdcdc;font-weight:400;font-style:normal;transform:scaleX(0.9089);transform-origin:0 0;">Aspect ratio</div><svg class="a" style="left:164px;top:540px" width="12" height="8"><path d="M1,1 L6.0,6 L11,1" fill="none" stroke="#e0e0e0" stroke-width="1.6"/></svg><div class="a" style="left:17px;top:562px;width:118px;height:29px;background:#393939;border-radius:0px;"></div><div class="a" style="left:19px;top:564px;width:114px;height:25px;background:#1e1e1e;border-radius:0px;"></div><div class="t" style="left:21.9px;top:569.80px;font-size:15px;line-height:15px;color:#e8e8e8;font-weight:400;font-style:italic;transform:scaleX(1.0930);transform-origin:0 0;">1:1</div><svg class="a" style="left:117px;top:570px" width="16" height="14"><path d="M1.5,6.5 L5.5,1.5 L14,1.5 L14,11.5 L5.5,11.5Z" fill="#9a9a9a"/><path d="M7.5,4 L11.5,9 M11.5,4 L7.5,9" stroke="#1e1e1e" stroke-width="1.6"/></svg><svg class="a" style="left:142px;top:570px" width="40" height="15"><path d="M1.5,1.5 L8,1.5 L11,4.5 L11,13 L1.5,13Z" fill="none" stroke="#777" stroke-width="1"/><circle cx="6.3" cy="7" r="1.5" fill="#777"/><rect x="3.5" y="9.5" width="5.5" height="2" fill="#777"/><path d="M23,1.5 L35.5,1.5 L35.5,9 L32.5,12 L23,12Z" fill="none" stroke="#777" stroke-width="1"/><path d="M25,10 L28,6.5 L30,8.5 L33,5" fill="none" stroke="#777" stroke-width="1.2"/></svg><div class="t" style="left:0.4px;top:604.10px;font-size:15px;line-height:15px;color:#dcdcdc;font-weight:400;font-style:normal;transform:scaleX(0.8828);transform-origin:0 0;">Position:</div><div class="a" style="left:128px;top:596px;width:55px;height:31px;background:#2b2b2b;border:1px solid #1c1c1c;border-radius:5px;"></div><div class="t" style="left:134.5px;top:604.10px;font-size:15px;line-height:15px;color:#dcdcdc;font-weight:400;font-style:normal;transform:scaleX(0.9467);transform-origin:0 0;">px</div><svg class="a" style="left:164px;top:608px" width="12" height="8"><path d="M1,1 L6.0,6 L11,1" fill="none" stroke="#e0e0e0" stroke-width="1.6"/></svg><div class="a" style="left:17px;top:629px;width:82px;height:25px;background:#2f2f2f;border-radius:0px;"></div><div class="a" style="left:19px;top:631px;width:68px;height:21px;background:#1e1e1e;border-radius:0px;"></div><div class="a" style="left:87px;top:630px;width:11px;height:23px;background:#262626;border-radius:0px;"></div><div class="t" style="left:20.1px;top:634.80px;font-size:15px;line-height:15px;color:#dcdcdc;font-weight:400;font-style:normal;transform:scaleX(0.9588);transform-origin:0 0;">0</div><svg class="a" style="left:88px;top:629px" width="10" height="25"><path d="M1.5,9 L5,5 L8.5,9Z" fill="#cfcfcf"/><path d="M1.5,16 L5,20 L8.5,16Z" fill="#cfcfcf"/></svg><div class="a" style="left:101px;top:629px;width:82px;height:25px;background:#2f2f2f;border-radius:0px;"></div><div class="a" style="left:103px;top:631px;width:68px;height:21px;background:#1e1e1e;border-radius:0px;"></div><div class="a" style="left:171px;top:630px;width:11px;height:23px;background:#262626;border-radius:0px;"></div><div class="t" style="left:104.1px;top:634.80px;font-size:15px;line-height:15px;color:#dcdcdc;font-weight:400;font-style:normal;transform:scaleX(0.9588);transform-origin:0 0;">0</div><svg class="a" style="left:172px;top:629px" width="10" height="25"><path d="M1.5,9 L5,5 L8.5,9Z" fill="#cfcfcf"/><path d="M1.5,16 L5,20 L8.5,16Z" fill="#cfcfcf"/></svg><div class="t" style="left:0.4px;top:666.30px;font-size:15px;line-height:15px;color:#dcdcdc;font-weight:400;font-style:normal;transform:scaleX(0.8004);transform-origin:0 0;">Size:</div><div class="a" style="left:128px;top:658px;width:55px;height:31px;background:#2b2b2b;border:1px solid #1c1c1c;border-radius:5px;"></div><div class="t" style="left:134.5px;top:666.30px;font-size:15px;line-height:15px;color:#dcdcdc;font-weight:400;font-style:normal;transform:scaleX(0.9467);transform-origin:0 0;">px</div><svg class="a" style="left:164px;top:670px" width="12" height="8"><path d="M1,1 L6.0,6 L11,1" fill="none" stroke="#e0e0e0" stroke-width="1.6"/></svg><div class="a" style="left:17px;top:691px;width:82px;height:25px;background:#2f2f2f;border-radius:0px;"></div><div class="a" style="left:19px;top:693px;width:68px;height:21px;background:#1e1e1e;border-radius:0px;"></div><div class="a" style="left:87px;top:692px;width:11px;height:23px;background:#262626;border-radius:0px;"></div><div class="t" style="left:20.1px;top:696.80px;font-size:15px;line-height:15px;color:#dcdcdc;font-weight:400;font-style:normal;transform:scaleX(0.9588);transform-origin:0 0;">0</div><svg class="a" style="left:88px;top:691px" width="10" height="25"><path d="M1.5,9 L5,5 L8.5,9Z" fill="#cfcfcf"/><path d="M1.5,16 L5,20 L8.5,16Z" fill="#5a5a5a"/></svg><div class="a" style="left:101px;top:691px;width:82px;height:25px;background:#2f2f2f;border-radius:0px;"></div><div class="a" style="left:103px;top:693px;width:68px;height:21px;background:#1e1e1e;border-radius:0px;"></div><div class="a" style="left:171px;top:692px;width:11px;height:23px;background:#262626;border-radius:0px;"></div><div class="t" style="left:104.1px;top:696.80px;font-size:15px;line-height:15px;color:#dcdcdc;font-weight:400;font-style:normal;transform:scaleX(0.9588);transform-origin:0 0;">0</div><svg class="a" style="left:172px;top:691px" width="10" height="25"><path d="M1.5,9 L5,5 L8.5,9Z" fill="#cfcfcf"/><path d="M1.5,16 L5,20 L8.5,16Z" fill="#5a5a5a"/></svg><div class="a" style="left:3px;top:723px;width:13px;height:13px;background:#1e1e1e;border-radius:3px;"></div><div class="t" style="left:20.5px;top:722.00px;font-size:15px;line-height:15px;color:#dcdcdc;font-weight:400;font-style:normal;transform:scaleX(0.8839);transform-origin:0 0;">Highlight</div><div class="a" style="left:1px;top:745px;width:182px;height:31px;background:#2b2b2b;border:1px solid #1c1c1c;border-radius:5px;"></div><div class="t" style="left:11.1px;top:753.10px;font-size:15px;line-height:15px;color:#dcdcdc;font-weight:400;font-style:normal;transform:scaleX(0.8942);transform-origin:0 0;">No guides</div><svg class="a" style="left:164px;top:757px" width="12" height="8"><path d="M1,1 L6.0,6 L11,1" fill="none" stroke="#e0e0e0" stroke-width="1.6"/></svg><div class="a" style="left:1px;top:780px;width:182px;height:27px;background:#2b2b2b;border:1px solid #1c1c1c;border-radius:5px;"></div><div class="t" style="left:55.1px;top:785.80px;font-size:15px;line-height:15px;color:#b4b4b4;font-weight:400;font-style:normal;transform:scaleX(0.9156);transform-origin:0 0;">Auto Shrink</div><div class="a" style="left:3px;top:814px;width:13px;height:13px;background:#1e1e1e;border-radius:3px;"></div><div class="t" style="left:20.5px;top:812.90px;font-size:15px;line-height:15px;color:#dcdcdc;font-weight:400;font-style:normal;transform:scaleX(0.9011);transform-origin:0 0;">Shrink merged</div><svg class="a" style="left:0;top:975px" width="185" height="25"><g fill="#c8c8c8"><rect x="21" y="6" width="2" height="6"/><path d="M18.5,9.5 L22,13 L25.5,9.5Z"/><path d="M17.6,13 L19,13 L19,15.5 L25.8,15.5 L25.8,13 L27.2,13 L27.2,17.6 L17.6,17.6Z"/><rect x="20.5" y="14.5" width="4" height="1.5"/></g><path d="M63.5,9.5 A5,5 0 1 0 67.5,7" fill="none" stroke="#c8c8c8" stroke-width="1.7"/><path d="M61.5,6 L66,5 L65,9.5Z" fill="#c8c8c8"/><rect x="105.4" y="5" width="13.8" height="12.6" fill="#c8c8c8"/><path d="M108,7.5 L116.6,15 M116.6,7.5 L108,15" stroke="#3e3e3e" stroke-width="2.2"/><path d="M156,8 A5,5 0 1 1 155.5,14" fill="none" stroke="#c8c8c8" stroke-width="1.7"/><path d="M153,6 L157.5,5.5 L156.5,10Z" fill="#c8c8c8"/><circle cx="156" cy="15.5" r="1.8" fill="#c8c8c8"/></svg><svg class="a" style="left:186px;top:506px" width="2" height="18"><g fill="#bdbdbd"><rect x="0" y="0" width="2" height="4"/><rect x="0" y="7" width="2" height="4"/><rect x="0" y="14" width="2" height="4"/></g></svg>
<div class="a" style="left:1715px;top:31px;width:1px;height:969px;background:#5a5a5a;border-radius:0px;"></div><div class="a" style="left:1716px;top:31px;width:21px;height:22px;background:#454545;border-radius:0px;border-top:1px solid #5a5a5a;border-right:1px solid #5a5a5a"></div><div class="a" style="left:1738px;top:34px;width:19px;height:18px;background:#282828;border-radius:0px;"></div><div class="a" style="left:1758px;top:34px;width:20px;height:18px;background:#282828;border-radius:0px;"></div><div class="a" style="left:1778px;top:34px;width:20px;height:18px;background:#282828;border-radius:0px;"></div><div class="a" style="left:1737px;top:52px;width:178px;height:1px;background:#5a5a5a;border-radius:0px;"></div><svg class="a" style="left:1716px;top:31px" width="90" height="22"><defs><radialGradient id="tbr"><stop offset="0" stop-color="#000"/><stop offset="0.3" stop-color="#000" stop-opacity="0.8"/><stop offset="1" stop-color="#fff" stop-opacity="0"/></radialGradient><linearGradient id="tgr" x1="0" x2="1"><stop offset="0" stop-color="#e07010"/><stop offset="0.25" stop-color="#ffb040"/><stop offset="0.45" stop-color="#ffd060"/><stop offset="0.6" stop-color="#ff9a30"/><stop offset="0.8" stop-color="#ffc050"/><stop offset="1" stop-color="#f08020"/></linearGradient></defs><rect x="3" y="3" width="15" height="15" fill="#fff" stroke="#000" stroke-width="1.2"/><circle cx="10.5" cy="10.5" r="6" fill="url(#tbr)"/><rect x="24.5" y="4.5" width="13" height="13" fill="url(#tgr)" stroke="#111" stroke-width="1.2"/><rect x="44.5" y="4.5" width="14" height="13" fill="#fff" stroke="#111" stroke-width="1.2"/><text x="46" y="15" font-family="Liberation Sans" font-size="9.5" fill="#222">Aa</text><path d="M64.5,5 L71,5 L74,8 L74,17.5 L64.5,17.5Z" fill="#eee"/><path d="M71,5 L71,8 L74,8" fill="#bbb"/></svg><svg class="a" style="left:1903px;top:37px" width="12" height="12"><rect x="0.5" y="0.5" width="10.5" height="10.5" fill="#3a3a3a" stroke="#cfcfcf" stroke-width="1"/><path d="M3,5.8 L8.5,2.8 L8.5,8.8Z" fill="#cfcfcf"/></svg><div class="a" style="left:1716px;top:53px;width:199px;height:417px;background:#3c3c3c;border-radius:0px;"></div><div class="a" style="left:1719px;top:57px;width:194px;height:21px;background:#1e1e1e;border-radius:0px;"></div><div class="t" style="left:1720.1px;top:60.30px;font-size:15px;line-height:15px;color:#7a7a7a;font-weight:400;font-style:italic;transform:scaleX(0.9879);transform-origin:0 0;">filter</div><svg class="a" style="left:1900px;top:64px" width="9" height="8"><path d="M1,1 L4.5,6 L8,1" fill="none" stroke="#e8e8e8" stroke-width="1.8"/></svg><div class="t" style="left:1718.6px;top:81.70px;font-size:15px;line-height:15px;color:#dcdcdc;font-weight:400;font-style:italic;transform:scaleX(0.9416);transform-origin:0 0;">2. Hardness 050 (51 × 51)</div><svg class="a" style="left:0;top:0" width="1915" height="1007"><defs><radialGradient id="bd1"><stop offset="0" stop-color="#000"/><stop offset="0.12" stop-color="#000" stop-opacity="0.92"/><stop offset="0.32" stop-color="#000" stop-opacity="0.5"/><stop offset="0.6" stop-color="#000" stop-opacity="0.13"/><stop offset="1" stop-color="#000" stop-opacity="0"/></radialGradient><radialGradient id="bd2"><stop offset="0" stop-color="#000"/><stop offset="0.22" stop-color="#000" stop-opacity="0.92"/><stop offset="0.45" stop-color="#000" stop-opacity="0.55"/><stop offset="0.72" stop-color="#000" stop-opacity="0.13"/><stop offset="1" stop-color="#000" stop-opacity="0"/></radialGradient><radialGradient id="bd3"><stop offset="0" stop-color="#000"/><stop offset="0.45" stop-color="#000" stop-opacity="0.92"/><stop offset="0.7" stop-color="#000" stop-opacity="0.5"/><stop offset="0.9" stop-color="#000" stop-opacity="0.1"/><stop offset="1" stop-color="#000" stop-opacity="0"/></radialGradient><radialGradient id="bd4"><stop offset="0" stop-color="#000"/><stop offset="0.4" stop-color="#000" stop-opacity="0.9"/><stop offset="0.75" stop-color="#000" stop-opacity="0.35"/><stop offset="1" stop-color="#000" stop-opacity="0"/></radialGradient><clipPath id="bclip"><rect x="1719" y="100" width="170" height="278"/></clipPath></defs><rect x="1719" y="100" width="170" height="278" fill="#fff"/><g clip-path="url(#bclip)"><rect x="1803" y="115" width="2.5" height="2.5" fill="#000"/><path d="M1820,128 L1820,133 L1814.5,133Z" fill="#7b93ff"/><rect x="1823" y="113.5" width="30" height="7" fill="#000"/><rect x="1849.5" y="129" width="5" height="5" fill="#7b93ff" opacity="0.75"/><path d="M1849,130.5 L1854,130.5 M1851.5,128 L1851.5,133" stroke="#000" stroke-width="1.3"/><ellipse cx="1872" cy="117" rx="15" ry="5" fill="url(#bd4)"/><rect x="1883.5" y="129" width="5" height="5" fill="#7b93ff" opacity="0.75"/><path d="M1883,130.5 L1888,130.5 M1885.5,128 L1885.5,133" stroke="#000" stroke-width="1.3"/><rect x="1721.5" y="149.8" width="29.5" height="1.3" fill="#000"/><rect x="1747.5" y="163" width="5" height="5" fill="#7b93ff" opacity="0.75"/><path d="M1747,164.5 L1752,164.5 M1749.5,162 L1749.5,167" stroke="#000" stroke-width="1.3"/><circle cx="1770.5" cy="151.5" r="13" fill="url(#bd1)"/><rect x="1781.5" y="163" width="5" height="5" fill="#7b93ff" opacity="0.75"/><path d="M1781,164.5 L1786,164.5 M1783.5,162 L1783.5,167" stroke="#000" stroke-width="1.3"/><circle cx="1804.5" cy="151.5" r="14" fill="url(#bd2)"/><rect x="1787.5" y="134.5" width="33" height="33" fill="none" stroke="#000" stroke-width="1.6"/><rect x="1815.5" y="163" width="5" height="5" fill="#7b93ff" opacity="0.75"/><path d="M1815,164.5 L1820,164.5 M1817.5,162 L1817.5,167" stroke="#000" stroke-width="1.3"/><circle cx="1838" cy="151" r="14.5" fill="url(#bd3)"/><rect x="1849.5" y="163" width="5" height="5" fill="#7b93ff" opacity="0.75"/><path d="M1849,164.5 L1854,164.5 M1851.5,162 L1851.5,167" stroke="#000" stroke-width="1.3"/><circle cx="1872" cy="151" r="15.5" fill="#000"/><rect x="1883.5" y="163" width="5" height="5" fill="#7b93ff" opacity="0.75"/><path d="M1883,164.5 L1888,164.5 M1885.5,162 L1885.5,167" stroke="#000" stroke-width="1.3"/><polygon points="1736.0,173.0 1739.4,181.8 1748.8,182.3 1741.5,188.3 1743.9,197.4 1736.0,192.3 1728.1,197.4 1730.5,188.3 1723.2,182.3 1732.6,181.8" fill="#000"/><rect x="1747.5" y="197" width="5" height="5" fill="#7b93ff" opacity="0.75"/><path d="M1747,198.5 L1752,198.5 M1749.5,196 L1749.5,201" stroke="#000" stroke-width="1.3"/><path fill="#000" opacity="1.0" d="M1768.9 187.2h1.0v1.0h-1.0zM1776.0 187.9h0.8v0.8h-0.8zM1776.0 187.3h0.5v0.5h-0.5zM1768.8 185.5h0.6v0.6h-0.6zM1761.6 189.3h0.6v0.6h-0.6zM1771.3 192.5h1.3v1.3h-1.3zM1765.4 182.6h1.3v1.3h-1.3zM1779.3 187.8h0.7v0.7h-0.7zM1771.2 186.6h0.8v0.8h-0.8zM1771.1 182.4h1.0v1.0h-1.0zM1766.8 181.2h0.9v0.9h-0.9zM1771.1 185.4h0.7v0.7h-0.7zM1767.6 179.9h0.8v0.8h-0.8zM1765.0 182.0h0.8v0.8h-0.8zM1772.3 177.1h0.7v0.7h-0.7zM1764.1 182.0h1.2v1.2h-1.2zM1769.5 181.0h1.3v1.3h-1.3zM1774.0 188.7h1.1v1.1h-1.1zM1773.6 190.1h0.5v0.5h-0.5zM1765.6 177.3h1.0v1.0h-1.0zM1773.1 181.9h1.1v1.1h-1.1zM1764.1 181.0h0.9v0.9h-0.9zM1775.6 176.1h0.9v0.9h-0.9zM1769.4 184.0h1.1v1.1h-1.1zM1763.4 176.3h1.2v1.2h-1.2zM1768.9 190.0h1.0v1.0h-1.0zM1775.9 185.8h0.6v0.6h-0.6zM1770.8 185.8h1.1v1.1h-1.1zM1772.5 187.6h0.8v0.8h-0.8zM1771.0 183.9h0.9v0.9h-0.9zM1760.5 182.0h1.2v1.2h-1.2zM1772.6 182.0h0.8v0.8h-0.8zM1763.7 192.7h1.3v1.3h-1.3zM1771.6 187.2h0.7v0.7h-0.7zM1770.6 191.1h1.0v1.0h-1.0zM1770.0 185.1h0.8v0.8h-0.8zM1765.2 190.1h1.3v1.3h-1.3zM1767.6 179.0h1.0v1.0h-1.0zM1769.5 184.0h1.2v1.2h-1.2zM1771.8 175.3h1.1v1.1h-1.1zM1765.9 188.3h0.6v0.6h-0.6zM1769.2 184.1h0.6v0.6h-0.6zM1770.7 187.5h0.8v0.8h-0.8zM1770.0 185.0h0.6v0.6h-0.6zM1773.9 187.9h0.5v0.5h-0.5zM1775.2 179.7h0.6v0.6h-0.6zM1769.9 189.7h0.8v0.8h-0.8zM1776.9 191.7h1.3v1.3h-1.3zM1764.0 186.3h0.6v0.6h-0.6zM1773.7 187.8h0.7v0.7h-0.7zM1771.2 182.8h0.5v0.5h-0.5zM1776.3 183.0h0.6v0.6h-0.6zM1769.4 184.8h0.9v0.9h-0.9zM1779.7 183.7h1.1v1.1h-1.1zM1769.7 189.9h0.6v0.6h-0.6zM1770.9 178.4h1.1v1.1h-1.1zM1768.4 187.9h1.1v1.1h-1.1zM1779.6 184.1h1.1v1.1h-1.1zM1773.6 177.1h0.7v0.7h-0.7zM1765.2 184.5h0.5v0.5h-0.5zM1773.9 185.7h0.7v0.7h-0.7zM1766.2 175.1h0.9v0.9h-0.9zM1780.1 180.8h1.3v1.3h-1.3zM1767.8 187.5h0.7v0.7h-0.7zM1771.0 187.9h1.0v1.0h-1.0zM1777.8 179.4h0.9v0.9h-0.9zM1764.7 177.5h0.6v0.6h-0.6zM1764.6 176.4h1.1v1.1h-1.1zM1770.0 178.9h0.7v0.7h-0.7zM1771.1 180.6h1.1v1.1h-1.1zM1775.2 184.1h0.8v0.8h-0.8zM1778.0 182.2h0.7v0.7h-0.7zM1771.7 186.7h1.2v1.2h-1.2zM1770.8 182.8h1.2v1.2h-1.2zM1777.8 184.0h0.8v0.8h-0.8zM1767.9 184.3h0.5v0.5h-0.5zM1777.7 183.6h0.9v0.9h-0.9zM1775.2 182.7h1.2v1.2h-1.2zM1771.5 182.2h0.7v0.7h-0.7zM1769.1 188.4h1.0v1.0h-1.0zM1769.7 190.5h0.6v0.6h-0.6zM1774.0 182.4h0.9v0.9h-0.9zM1761.2 179.9h0.8v0.8h-0.8zM1775.5 181.9h0.9v0.9h-0.9zM1769.5 184.9h0.9v0.9h-0.9zM1770.1 185.1h1.1v1.1h-1.1zM1772.8 190.3h1.1v1.1h-1.1zM1765.8 183.4h0.9v0.9h-0.9zM1761.5 181.9h0.6v0.6h-0.6zM1766.6 183.7h0.7v0.7h-0.7zM1770.9 178.7h1.0v1.0h-1.0zM1770.6 174.8h0.9v0.9h-0.9zM1765.2 180.9h0.9v0.9h-0.9zM1767.9 179.5h0.9v0.9h-0.9zM1759.6 186.4h1.1v1.1h-1.1zM1777.5 177.7h0.7v0.7h-0.7zM1760.2 181.2h1.2v1.2h-1.2zM1771.3 186.5h0.9v0.9h-0.9zM1773.2 186.5h0.6v0.6h-0.6zM1765.6 177.1h1.2v1.2h-1.2zM1774.8 191.9h1.0v1.0h-1.0zM1776.2 192.8h1.3v1.3h-1.3zM1772.0 195.4h0.8v0.8h-0.8zM1759.1 185.9h1.2v1.2h-1.2zM1773.0 189.8h0.9v0.9h-0.9zM1768.4 187.5h0.8v0.8h-0.8zM1769.9 184.5h0.9v0.9h-0.9zM1769.6 185.2h0.8v0.8h-0.8zM1765.4 180.5h0.6v0.6h-0.6zM1779.1 184.1h1.3v1.3h-1.3zM1773.0 187.3h0.5v0.5h-0.5zM1770.7 181.2h0.6v0.6h-0.6zM1761.0 189.8h1.2v1.2h-1.2zM1769.9 187.4h1.2v1.2h-1.2zM1762.5 181.4h0.6v0.6h-0.6zM1777.6 187.9h0.8v0.8h-0.8zM1779.4 189.6h1.0v1.0h-1.0zM1770.5 183.6h1.2v1.2h-1.2zM1778.9 189.0h0.9v0.9h-0.9zM1766.4 190.8h1.2v1.2h-1.2zM1769.8 187.1h0.9v0.9h-0.9zM1770.1 186.9h0.6v0.6h-0.6zM1772.9 186.0h0.8v0.8h-0.8zM1767.0 193.3h0.7v0.7h-0.7zM1767.2 185.0h0.8v0.8h-0.8zM1773.6 185.4h0.5v0.5h-0.5zM1769.3 178.2h0.7v0.7h-0.7zM1759.7 186.6h0.6v0.6h-0.6zM1772.4 179.9h0.9v0.9h-0.9zM1772.6 180.5h0.9v0.9h-0.9zM1765.9 175.0h0.8v0.8h-0.8zM1774.1 177.8h1.0v1.0h-1.0zM1766.1 187.7h0.6v0.6h-0.6zM1770.9 186.0h1.1v1.1h-1.1zM1769.9 187.6h0.6v0.6h-0.6zM1775.3 176.7h1.0v1.0h-1.0zM1769.3 188.5h0.7v0.7h-0.7zM1767.6 185.6h0.9v0.9h-0.9zM1769.1 195.6h1.3v1.3h-1.3zM1766.6 184.0h1.3v1.3h-1.3zM1768.2 189.5h0.5v0.5h-0.5zM1765.5 189.1h0.9v0.9h-0.9zM1771.9 191.1h0.5v0.5h-0.5zM1769.9 186.6h0.8v0.8h-0.8zM1770.5 185.1h0.8v0.8h-0.8zM1770.8 192.1h0.9v0.9h-0.9zM1770.0 177.1h1.1v1.1h-1.1zM1773.8 181.4h0.8v0.8h-0.8zM1772.4 184.8h1.1v1.1h-1.1zM1769.4 184.3h1.2v1.2h-1.2zM1775.9 180.2h1.1v1.1h-1.1zM1770.9 182.9h0.9v0.9h-0.9zM1760.5 184.7h1.1v1.1h-1.1zM1773.3 178.7h1.2v1.2h-1.2zM1766.6 177.5h0.7v0.7h-0.7zM1772.1 185.4h0.8v0.8h-0.8zM1777.5 190.8h1.0v1.0h-1.0zM1764.7 179.6h1.0v1.0h-1.0zM1769.9 185.0h1.1v1.1h-1.1zM1769.9 178.7h0.9v0.9h-0.9zM1769.3 183.9h1.1v1.1h-1.1zM1770.0 186.4h0.7v0.7h-0.7zM1769.6 181.9h1.1v1.1h-1.1zM1776.2 184.0h0.8v0.8h-0.8zM1762.0 186.1h1.1v1.1h-1.1zM1764.3 179.8h0.6v0.6h-0.6zM1772.2 187.9h1.1v1.1h-1.1zM1767.7 191.6h0.5v0.5h-0.5zM1773.6 186.4h1.0v1.0h-1.0zM1767.1 177.5h0.7v0.7h-0.7zM1764.1 184.4h0.9v0.9h-0.9zM1777.4 191.8h0.7v0.7h-0.7zM1780.3 183.6h0.5v0.5h-0.5zM1760.9 187.4h1.3v1.3h-1.3zM1766.3 186.2h0.7v0.7h-0.7zM1773.0 183.9h1.0v1.0h-1.0zM1774.1 190.1h1.3v1.3h-1.3zM1776.3 191.9h0.9v0.9h-0.9zM1776.3 179.6h0.7v0.7h-0.7zM1774.9 181.3h0.5v0.5h-0.5zM1776.2 185.1h0.9v0.9h-0.9zM1769.3 187.2h0.8v0.8h-0.8zM1766.1 193.8h0.5v0.5h-0.5zM1770.0 175.4h0.6v0.6h-0.6zM1777.5 181.3h1.2v1.2h-1.2zM1768.8 189.8h0.8v0.8h-0.8zM1777.2 184.9h0.8v0.8h-0.8zM1766.5 186.7h0.6v0.6h-0.6zM1777.6 190.7h0.7v0.7h-0.7zM1773.3 183.6h0.7v0.7h-0.7zM1767.1 184.8h0.8v0.8h-0.8zM1779.6 182.3h1.1v1.1h-1.1zM1763.0 177.5h1.2v1.2h-1.2zM1761.9 182.4h0.6v0.6h-0.6zM1769.4 179.2h1.1v1.1h-1.1zM1767.5 181.8h0.6v0.6h-0.6zM1771.9 184.1h0.9v0.9h-0.9zM1767.7 188.5h1.1v1.1h-1.1zM1773.7 184.4h1.0v1.0h-1.0zM1767.8 191.5h0.8v0.8h-0.8zM1771.3 187.2h0.7v0.7h-0.7zM1775.2 181.5h0.7v0.7h-0.7zM1779.1 178.9h0.9v0.9h-0.9zM1771.9 187.3h0.6v0.6h-0.6zM1769.1 186.4h0.7v0.7h-0.7zM1769.6 192.0h1.2v1.2h-1.2zM1770.0 179.6h0.8v0.8h-0.8zM1765.0 184.2h0.8v0.8h-0.8zM1773.6 186.5h1.3v1.3h-1.3zM1774.5 189.5h1.0v1.0h-1.0zM1772.1 182.6h0.7v0.7h-0.7zM1770.1 190.3h0.9v0.9h-0.9zM1779.2 182.2h1.2v1.2h-1.2zM1770.7 185.1h1.1v1.1h-1.1zM1774.8 181.3h1.0v1.0h-1.0zM1775.2 185.0h1.2v1.2h-1.2zM1774.4 176.4h1.3v1.3h-1.3zM1770.0 186.9h0.6v0.6h-0.6zM1762.0 183.9h1.3v1.3h-1.3zM1768.6 177.4h1.1v1.1h-1.1zM1763.4 186.8h0.5v0.5h-0.5zM1770.7 181.6h1.2v1.2h-1.2zM1767.4 181.6h0.6v0.6h-0.6zM1769.9 192.7h1.1v1.1h-1.1zM1771.0 185.9h0.9v0.9h-0.9zM1765.5 182.4h0.7v0.7h-0.7zM1769.8 184.8h0.8v0.8h-0.8zM1759.7 187.6h1.0v1.0h-1.0zM1774.5 181.0h0.7v0.7h-0.7zM1770.2 195.7h1.1v1.1h-1.1zM1769.8 185.5h0.9v0.9h-0.9zM1767.5 180.1h0.7v0.7h-0.7zM1764.9 176.0h0.7v0.7h-0.7zM1774.5 186.0h0.8v0.8h-0.8zM1768.8 182.3h1.1v1.1h-1.1zM1769.6 178.6h0.7v0.7h-0.7zM1774.3 184.2h1.2v1.2h-1.2zM1770.4 188.3h1.1v1.1h-1.1zM1767.1 195.2h0.9v0.9h-0.9zM1771.3 188.1h0.8v0.8h-0.8zM1764.6 175.9h0.6v0.6h-0.6zM1767.5 187.0h1.3v1.3h-1.3zM1770.6 185.8h0.6v0.6h-0.6zM1762.1 191.3h1.2v1.2h-1.2zM1768.8 174.1h1.2v1.2h-1.2zM1768.6 187.5h1.2v1.2h-1.2zM1770.0 184.3h1.0v1.0h-1.0zM1766.4 188.5h0.8v0.8h-0.8zM1770.0 185.1h0.7v0.7h-0.7zM1763.7 193.5h0.6v0.6h-0.6zM1773.0 184.3h0.8v0.8h-0.8zM1774.1 176.5h0.9v0.9h-0.9zM1775.8 186.8h0.8v0.8h-0.8zM1772.6 183.6h0.8v0.8h-0.8zM1770.5 184.6h0.8v0.8h-0.8zM1773.4 176.8h0.6v0.6h-0.6zM1771.2 185.3h1.2v1.2h-1.2zM1769.6 193.7h1.2v1.2h-1.2zM1767.9 188.3h1.3v1.3h-1.3zM1767.2 182.5h1.1v1.1h-1.1zM1768.4 188.6h0.5v0.5h-0.5zM1770.4 174.7h1.0v1.0h-1.0zM1770.5 184.8h0.7v0.7h-0.7zM1759.5 186.6h1.3v1.3h-1.3zM1767.2 187.4h0.9v0.9h-0.9zM1759.6 185.4h0.7v0.7h-0.7zM1772.8 176.8h1.2v1.2h-1.2zM1771.1 177.7h0.8v0.8h-0.8zM1767.9 189.4h1.1v1.1h-1.1zM1772.6 186.4h1.1v1.1h-1.1zM1770.0 186.2h0.5v0.5h-0.5zM1765.8 183.5h1.3v1.3h-1.3zM1778.1 177.7h0.7v0.7h-0.7zM1771.5 185.9h0.9v0.9h-0.9zM1768.6 179.4h0.7v0.7h-0.7zM1763.5 188.7h1.0v1.0h-1.0zM1769.9 175.4h1.0v1.0h-1.0zM1776.9 191.6h0.7v0.7h-0.7zM1765.4 183.0h1.1v1.1h-1.1zM1771.1 188.4h0.7v0.7h-0.7zM1775.7 193.2h1.0v1.0h-1.0zM1767.6 189.7h1.3v1.3h-1.3zM1766.6 184.8h1.1v1.1h-1.1zM1763.8 176.0h0.6v0.6h-0.6zM1760.7 186.5h1.2v1.2h-1.2zM1770.7 184.6h0.7v0.7h-0.7zM1772.1 187.0h1.3v1.3h-1.3zM1761.0 179.8h0.8v0.8h-0.8zM1773.9 180.7h0.7v0.7h-0.7zM1771.8 174.6h0.6v0.6h-0.6zM1763.8 180.7h0.7v0.7h-0.7zM1768.4 186.7h0.7v0.7h-0.7zM1769.8 192.3h1.0v1.0h-1.0zM1770.1 185.3h0.8v0.8h-0.8zM1768.8 182.4h0.8v0.8h-0.8zM1772.6 193.8h0.9v0.9h-0.9zM1771.6 185.7h0.8v0.8h-0.8zM1762.7 182.6h0.6v0.6h-0.6zM1774.2 192.0h0.8v0.8h-0.8zM1769.1 189.2h1.3v1.3h-1.3zM1767.3 191.5h0.8v0.8h-0.8zM1761.5 189.9h1.3v1.3h-1.3zM1768.0 187.3h1.1v1.1h-1.1zM1770.1 185.2h1.2v1.2h-1.2zM1761.7 189.3h0.8v0.8h-0.8zM1774.4 181.0h0.6v0.6h-0.6zM1776.8 185.6h1.0v1.0h-1.0zM1771.3 184.1h1.0v1.0h-1.0zM1765.6 189.6h0.6v0.6h-0.6zM1768.6 191.4h1.2v1.2h-1.2zM1774.8 188.9h1.1v1.1h-1.1zM1772.9 184.4h0.6v0.6h-0.6zM1780.1 181.2h0.9v0.9h-0.9zM1779.8 188.4h0.8v0.8h-0.8zM1776.2 180.7h1.2v1.2h-1.2zM1774.8 192.7h0.7v0.7h-0.7zM1762.1 190.4h1.2v1.2h-1.2zM1771.3 188.0h0.8v0.8h-0.8zM1764.9 184.4h0.6v0.6h-0.6zM1770.2 193.5h1.2v1.2h-1.2zM1776.7 186.8h1.1v1.1h-1.1zM1779.3 187.3h0.6v0.6h-0.6zM1764.5 181.0h1.0v1.0h-1.0zM1768.1 190.2h1.0v1.0h-1.0zM1763.0 188.5h0.9v0.9h-0.9zM1769.5 185.2h1.0v1.0h-1.0zM1766.6 185.2h1.1v1.1h-1.1zM1771.1 179.2h0.7v0.7h-0.7zM1768.2 185.3h0.6v0.6h-0.6zM1768.5 185.7h0.9v0.9h-0.9zM1769.2 184.9h1.0v1.0h-1.0zM1777.5 189.2h1.1v1.1h-1.1zM1768.9 184.9h0.9v0.9h-0.9zM1762.4 192.3h0.6v0.6h-0.6zM1776.8 176.4h1.1v1.1h-1.1zM1771.2 182.3h1.3v1.3h-1.3zM1759.4 185.5h1.2v1.2h-1.2zM1774.6 192.8h1.2v1.2h-1.2zM1774.4 186.9h1.1v1.1h-1.1zM1775.5 193.5h0.7v0.7h-0.7zM1770.9 182.9h0.9v0.9h-0.9zM1772.7 183.5h0.7v0.7h-0.7zM1765.6 184.8h0.5v0.5h-0.5zM1771.1 187.3h1.2v1.2h-1.2zM1765.7 175.9h0.6v0.6h-0.6zM1770.4 183.1h0.9v0.9h-0.9zM1766.8 181.3h1.2v1.2h-1.2zM1763.3 182.6h1.2v1.2h-1.2zM1778.7 191.7h1.0v1.0h-1.0zM1762.8 190.7h0.7v0.7h-0.7zM1777.1 184.6h0.8v0.8h-0.8zM1770.5 179.3h0.7v0.7h-0.7zM1770.0 184.0h1.2v1.2h-1.2zM1769.8 192.7h1.3v1.3h-1.3zM1763.2 180.9h0.8v0.8h-0.8zM1770.7 185.0h0.6v0.6h-0.6zM1765.8 181.3h0.9v0.9h-0.9zM1771.7 183.7h0.7v0.7h-0.7zM1769.7 184.6h0.5v0.5h-0.5zM1768.9 186.4h0.8v0.8h-0.8zM1771.2 192.1h1.0v1.0h-1.0zM1772.1 192.2h0.9v0.9h-0.9zM1776.9 192.8h0.7v0.7h-0.7zM1771.0 186.4h1.0v1.0h-1.0zM1776.2 178.5h0.8v0.8h-0.8zM1770.0 185.3h1.0v1.0h-1.0zM1765.6 183.2h1.0v1.0h-1.0zM1760.2 188.6h1.1v1.1h-1.1zM1770.1 195.1h0.6v0.6h-0.6zM1764.8 183.9h0.7v0.7h-0.7zM1778.4 188.2h0.5v0.5h-0.5zM1760.1 181.7h0.6v0.6h-0.6zM1772.3 192.0h0.9v0.9h-0.9zM1764.1 177.8h0.7v0.7h-0.7zM1768.5 188.9h0.6v0.6h-0.6zM1776.9 179.2h1.1v1.1h-1.1zM1779.6 185.4h1.1v1.1h-1.1zM1761.5 186.9h0.9v0.9h-0.9zM1770.3 186.8h0.7v0.7h-0.7zM1774.5 186.1h1.1v1.1h-1.1zM1766.7 175.9h1.1v1.1h-1.1zM1769.3 191.8h0.9v0.9h-0.9zM1771.6 178.6h0.7v0.7h-0.7zM1763.3 176.7h0.7v0.7h-0.7zM1770.3 184.7h0.7v0.7h-0.7zM1770.8 193.6h1.3v1.3h-1.3zM1769.9 180.5h1.2v1.2h-1.2zM1768.3 188.1h1.2v1.2h-1.2zM1764.4 179.0h1.0v1.0h-1.0zM1776.0 184.2h1.2v1.2h-1.2zM1766.9 175.8h0.9v0.9h-0.9zM1768.9 178.1h0.8v0.8h-0.8zM1771.8 192.3h0.6v0.6h-0.6zM1772.0 183.8h0.5v0.5h-0.5zM1778.1 191.4h0.8v0.8h-0.8zM1770.4 185.5h0.6v0.6h-0.6zM1767.3 177.9h1.1v1.1h-1.1zM1769.9 183.8h1.0v1.0h-1.0zM1763.9 192.1h1.2v1.2h-1.2zM1771.0 184.2h1.2v1.2h-1.2zM1779.0 179.6h0.6v0.6h-0.6zM1770.5 186.8h0.5v0.5h-0.5zM1775.4 177.4h1.0v1.0h-1.0zM1773.5 178.2h0.7v0.7h-0.7zM1771.4 186.0h1.1v1.1h-1.1zM1771.2 189.2h0.8v0.8h-0.8zM1773.7 185.5h0.7v0.7h-0.7zM1768.9 180.2h0.8v0.8h-0.8zM1776.2 183.6h1.2v1.2h-1.2zM1769.5 184.5h0.8v0.8h-0.8zM1761.8 188.5h0.8v0.8h-0.8zM1768.1 178.6h0.7v0.7h-0.7zM1771.0 183.8h1.2v1.2h-1.2zM1770.0 185.0h0.7v0.7h-0.7zM1770.8 174.2h0.5v0.5h-0.5zM1763.8 185.4h1.1v1.1h-1.1zM1772.5 190.7h0.8v0.8h-0.8zM1771.8 181.7h1.3v1.3h-1.3zM1769.3 188.1h1.1v1.1h-1.1zM1768.1 185.0h1.0v1.0h-1.0zM1777.9 189.4h1.1v1.1h-1.1zM1771.7 177.6h0.8v0.8h-0.8zM1765.7 188.0h1.2v1.2h-1.2zM1778.6 190.2h0.5v0.5h-0.5zM1771.0 188.6h1.2v1.2h-1.2zM1764.9 185.0h1.2v1.2h-1.2zM1770.6 190.9h0.9v0.9h-0.9zM1770.2 176.2h1.0v1.0h-1.0zM1767.4 188.7h0.6v0.6h-0.6zM1774.4 178.4h1.1v1.1h-1.1zM1772.8 190.0h1.1v1.1h-1.1zM1768.2 184.0h0.9v0.9h-0.9zM1772.6 182.7h0.7v0.7h-0.7zM1767.4 192.9h1.2v1.2h-1.2zM1771.4 187.1h0.7v0.7h-0.7zM1767.0 190.8h0.6v0.6h-0.6zM1768.6 187.6h1.3v1.3h-1.3zM1769.8 183.2h1.3v1.3h-1.3zM1774.1 188.1h1.3v1.3h-1.3zM1772.4 176.8h0.9v0.9h-0.9zM1772.5 192.2h0.6v0.6h-0.6zM1771.4 190.0h0.5v0.5h-0.5zM1762.7 190.4h1.1v1.1h-1.1zM1762.4 185.0h0.9v0.9h-0.9zM1774.6 190.7h0.8v0.8h-0.8zM1769.4 174.8h0.9v0.9h-0.9zM1762.2 181.1h0.8v0.8h-0.8zM1771.1 193.4h1.2v1.2h-1.2zM1771.2 176.8h1.2v1.2h-1.2zM1766.7 178.0h0.9v0.9h-0.9zM1767.1 192.0h0.6v0.6h-0.6zM1762.1 189.4h1.1v1.1h-1.1zM1767.5 182.4h0.8v0.8h-0.8zM1762.8 187.1h0.8v0.8h-0.8zM1765.3 175.7h0.7v0.7h-0.7zM1764.9 177.6h0.8v0.8h-0.8zM1759.2 185.7h0.5v0.5h-0.5zM1767.5 184.3h1.1v1.1h-1.1zM1776.1 182.6h0.6v0.6h-0.6zM1764.0 182.0h1.1v1.1h-1.1zM1762.3 184.4h1.2v1.2h-1.2zM1764.7 184.3h1.3v1.3h-1.3z"/><rect x="1781.5" y="197" width="5" height="5" fill="#ff8080" opacity="0.75"/><path d="M1781,198.5 L1786,198.5 M1783.5,196 L1783.5,201" stroke="#000" stroke-width="1.3"/><path fill="#000" opacity="1.0" d="M1806.1 191.2h0.8v0.8h-0.8zM1804.1 183.6h1.2v1.2h-1.2zM1803.4 185.5h0.7v0.7h-0.7zM1803.8 185.1h0.8v0.8h-0.8zM1796.4 188.1h0.7v0.7h-0.7zM1803.7 187.3h1.0v1.0h-1.0zM1810.3 183.1h0.6v0.6h-0.6zM1805.6 181.3h0.6v0.6h-0.6zM1810.6 190.2h1.1v1.1h-1.1zM1800.0 181.6h0.9v0.9h-0.9zM1805.7 193.6h0.7v0.7h-0.7zM1797.6 179.2h1.1v1.1h-1.1zM1800.1 185.6h0.9v0.9h-0.9zM1811.2 190.4h0.7v0.7h-0.7zM1806.2 182.8h0.7v0.7h-0.7zM1803.9 189.2h0.6v0.6h-0.6zM1812.9 185.1h0.7v0.7h-0.7zM1804.1 188.1h0.8v0.8h-0.8zM1796.8 187.6h0.9v0.9h-0.9zM1796.7 191.4h1.1v1.1h-1.1zM1813.5 187.7h1.1v1.1h-1.1zM1804.4 183.5h1.1v1.1h-1.1zM1803.8 184.8h0.5v0.5h-0.5zM1811.8 183.2h0.7v0.7h-0.7zM1805.7 185.9h0.6v0.6h-0.6zM1804.8 181.6h0.6v0.6h-0.6zM1812.0 180.9h0.6v0.6h-0.6zM1809.9 181.4h1.0v1.0h-1.0zM1798.7 177.9h1.0v1.0h-1.0zM1805.5 183.2h1.0v1.0h-1.0zM1795.0 183.7h0.8v0.8h-0.8zM1809.2 181.4h0.7v0.7h-0.7zM1804.2 186.5h0.8v0.8h-0.8zM1809.6 186.6h0.6v0.6h-0.6zM1797.6 185.3h0.9v0.9h-0.9zM1804.1 184.9h1.1v1.1h-1.1zM1797.0 186.1h0.9v0.9h-0.9zM1806.7 181.9h0.8v0.8h-0.8zM1805.1 184.8h0.9v0.9h-0.9zM1803.7 184.7h0.9v0.9h-0.9zM1799.4 177.3h0.7v0.7h-0.7zM1810.5 184.4h0.8v0.8h-0.8zM1804.5 184.7h1.0v1.0h-1.0zM1800.8 182.6h1.1v1.1h-1.1zM1799.9 188.4h0.8v0.8h-0.8zM1804.4 182.8h0.8v0.8h-0.8zM1797.8 187.5h1.1v1.1h-1.1zM1801.3 192.3h0.8v0.8h-0.8zM1800.3 184.9h0.8v0.8h-0.8zM1812.1 184.0h1.0v1.0h-1.0zM1801.9 187.8h0.7v0.7h-0.7zM1797.2 181.9h1.0v1.0h-1.0zM1812.7 186.7h1.1v1.1h-1.1zM1803.2 184.8h0.7v0.7h-0.7zM1806.7 185.1h1.1v1.1h-1.1zM1797.6 181.1h1.0v1.0h-1.0zM1810.5 181.9h0.9v0.9h-0.9zM1797.9 180.4h0.9v0.9h-0.9zM1802.7 183.0h1.0v1.0h-1.0zM1794.9 186.8h0.5v0.5h-0.5zM1804.3 185.4h1.0v1.0h-1.0zM1811.0 181.8h0.7v0.7h-0.7zM1808.3 178.5h0.9v0.9h-0.9zM1803.8 188.1h0.8v0.8h-0.8zM1801.7 188.8h0.9v0.9h-0.9zM1804.8 184.7h0.9v0.9h-0.9zM1805.7 185.3h1.1v1.1h-1.1zM1794.1 181.2h0.8v0.8h-0.8zM1809.1 185.3h0.9v0.9h-0.9zM1814.9 181.6h0.8v0.8h-0.8zM1802.7 185.6h0.9v0.9h-0.9zM1804.5 186.6h0.5v0.5h-0.5zM1812.5 185.2h0.6v0.6h-0.6zM1805.3 184.8h1.1v1.1h-1.1zM1804.2 185.2h1.0v1.0h-1.0zM1804.4 191.8h0.6v0.6h-0.6zM1813.1 187.2h1.0v1.0h-1.0zM1809.6 179.7h0.5v0.5h-0.5zM1797.9 180.2h0.8v0.8h-0.8zM1807.2 183.9h1.2v1.2h-1.2zM1804.0 184.8h0.5v0.5h-0.5zM1798.2 178.9h0.5v0.5h-0.5zM1800.6 191.3h0.6v0.6h-0.6zM1808.0 181.4h0.5v0.5h-0.5zM1799.1 189.0h0.8v0.8h-0.8zM1803.1 183.6h1.0v1.0h-1.0zM1798.7 189.6h0.9v0.9h-0.9zM1799.6 186.9h1.0v1.0h-1.0zM1813.1 182.5h0.9v0.9h-0.9zM1803.7 185.7h1.2v1.2h-1.2zM1801.1 177.7h0.7v0.7h-0.7zM1794.7 179.6h1.1v1.1h-1.1zM1800.6 183.1h0.8v0.8h-0.8zM1807.8 182.6h1.0v1.0h-1.0zM1795.3 180.1h1.1v1.1h-1.1zM1804.0 185.0h0.7v0.7h-0.7zM1797.4 187.6h1.1v1.1h-1.1zM1804.5 184.7h1.1v1.1h-1.1zM1808.0 177.7h0.9v0.9h-0.9zM1802.5 192.7h1.1v1.1h-1.1zM1799.6 177.4h0.7v0.7h-0.7zM1810.1 187.7h1.0v1.0h-1.0zM1806.8 191.6h1.1v1.1h-1.1zM1804.8 190.7h1.0v1.0h-1.0zM1801.2 185.5h0.7v0.7h-0.7zM1804.1 177.7h0.8v0.8h-0.8zM1812.4 188.9h1.0v1.0h-1.0zM1804.8 190.5h1.1v1.1h-1.1zM1809.0 181.7h0.8v0.8h-0.8zM1801.7 183.9h0.6v0.6h-0.6zM1807.7 190.9h0.7v0.7h-0.7zM1799.1 183.4h0.8v0.8h-0.8zM1804.4 185.4h1.2v1.2h-1.2zM1802.9 185.9h0.9v0.9h-0.9zM1804.5 183.4h0.9v0.9h-0.9zM1800.3 189.1h0.5v0.5h-0.5zM1815.6 186.9h1.1v1.1h-1.1zM1796.8 185.5h0.7v0.7h-0.7zM1805.0 180.9h1.1v1.1h-1.1zM1805.1 177.5h1.2v1.2h-1.2zM1804.0 185.5h0.6v0.6h-0.6zM1804.5 185.9h0.5v0.5h-0.5zM1794.1 182.2h0.8v0.8h-0.8zM1814.4 182.3h0.5v0.5h-0.5zM1799.7 182.7h0.6v0.6h-0.6zM1807.4 184.3h0.9v0.9h-0.9zM1796.7 178.3h1.0v1.0h-1.0zM1799.4 187.7h0.6v0.6h-0.6zM1815.6 183.1h0.6v0.6h-0.6zM1807.4 185.6h0.7v0.7h-0.7zM1813.0 180.3h1.1v1.1h-1.1zM1813.2 187.1h1.0v1.0h-1.0zM1796.8 177.9h0.5v0.5h-0.5zM1809.7 190.5h1.1v1.1h-1.1zM1802.2 182.3h0.9v0.9h-0.9zM1804.1 183.8h0.7v0.7h-0.7zM1803.9 186.4h0.8v0.8h-0.8zM1805.6 187.2h0.6v0.6h-0.6zM1803.9 184.8h1.0v1.0h-1.0zM1804.2 185.4h1.1v1.1h-1.1zM1806.1 193.3h1.1v1.1h-1.1zM1805.6 184.0h0.8v0.8h-0.8zM1813.2 189.8h1.1v1.1h-1.1zM1799.9 181.8h0.7v0.7h-0.7zM1806.7 180.9h0.9v0.9h-0.9zM1805.9 186.8h0.5v0.5h-0.5zM1802.4 179.9h0.6v0.6h-0.6zM1806.5 183.0h0.8v0.8h-0.8zM1806.1 187.3h1.1v1.1h-1.1zM1802.8 186.6h0.8v0.8h-0.8zM1799.5 192.5h0.6v0.6h-0.6zM1804.9 184.9h1.1v1.1h-1.1zM1802.5 183.1h0.8v0.8h-0.8zM1803.2 187.6h0.6v0.6h-0.6zM1796.2 191.7h1.2v1.2h-1.2zM1805.3 184.5h0.7v0.7h-0.7zM1804.7 184.6h1.0v1.0h-1.0zM1800.8 193.5h0.5v0.5h-0.5zM1805.6 181.8h0.6v0.6h-0.6zM1814.2 185.1h0.9v0.9h-0.9zM1806.2 188.9h1.1v1.1h-1.1zM1805.4 190.3h0.6v0.6h-0.6zM1808.0 191.4h1.0v1.0h-1.0zM1804.4 185.9h0.5v0.5h-0.5zM1799.0 182.0h0.7v0.7h-0.7zM1806.1 190.6h1.0v1.0h-1.0zM1806.8 179.9h0.6v0.6h-0.6zM1812.3 187.7h0.8v0.8h-0.8zM1803.8 184.3h1.1v1.1h-1.1zM1798.8 191.6h1.1v1.1h-1.1zM1803.7 185.0h1.1v1.1h-1.1zM1793.5 186.2h0.7v0.7h-0.7zM1808.0 192.0h0.7v0.7h-0.7zM1806.5 188.2h0.9v0.9h-0.9zM1810.7 185.1h0.8v0.8h-0.8zM1802.2 184.9h1.0v1.0h-1.0zM1808.3 177.8h0.7v0.7h-0.7zM1802.8 181.3h1.0v1.0h-1.0zM1813.8 188.0h1.2v1.2h-1.2zM1797.4 185.2h0.9v0.9h-0.9zM1803.6 184.9h1.2v1.2h-1.2zM1804.4 186.9h0.5v0.5h-0.5zM1804.0 192.5h0.5v0.5h-0.5zM1811.1 188.7h0.6v0.6h-0.6zM1811.5 185.6h0.9v0.9h-0.9zM1795.4 184.1h0.5v0.5h-0.5zM1810.1 180.1h0.5v0.5h-0.5zM1808.5 188.3h0.8v0.8h-0.8zM1803.7 186.3h0.8v0.8h-0.8zM1808.9 189.3h1.1v1.1h-1.1zM1808.4 189.4h1.0v1.0h-1.0zM1809.2 191.5h1.1v1.1h-1.1zM1799.8 187.7h1.1v1.1h-1.1zM1798.9 184.4h1.1v1.1h-1.1zM1804.8 181.7h0.6v0.6h-0.6zM1801.1 188.7h1.2v1.2h-1.2zM1807.7 177.2h1.1v1.1h-1.1zM1804.5 184.5h0.8v0.8h-0.8zM1814.9 182.8h0.7v0.7h-0.7zM1797.0 187.8h0.7v0.7h-0.7zM1802.9 184.8h0.8v0.8h-0.8zM1803.6 185.0h0.6v0.6h-0.6zM1813.4 183.6h1.1v1.1h-1.1zM1797.4 179.5h1.1v1.1h-1.1zM1804.4 184.7h0.9v0.9h-0.9zM1803.2 191.3h0.7v0.7h-0.7zM1793.2 182.8h0.9v0.9h-0.9zM1804.0 190.0h0.8v0.8h-0.8zM1807.7 184.1h0.7v0.7h-0.7zM1802.9 183.9h0.9v0.9h-0.9zM1810.3 183.7h0.7v0.7h-0.7zM1797.3 186.1h0.6v0.6h-0.6zM1805.4 186.0h0.7v0.7h-0.7zM1800.7 186.6h0.6v0.6h-0.6zM1809.9 187.7h1.1v1.1h-1.1zM1798.4 181.5h0.9v0.9h-0.9zM1806.7 191.3h0.8v0.8h-0.8zM1796.6 183.3h0.8v0.8h-0.8zM1802.8 187.3h0.6v0.6h-0.6zM1799.0 184.7h0.9v0.9h-0.9zM1808.7 185.3h1.1v1.1h-1.1zM1804.5 190.3h0.8v0.8h-0.8zM1801.4 193.7h0.7v0.7h-0.7zM1804.3 183.3h0.5v0.5h-0.5zM1808.0 181.9h0.5v0.5h-0.5zM1799.6 187.8h1.0v1.0h-1.0zM1806.4 186.5h1.2v1.2h-1.2zM1803.8 183.3h0.7v0.7h-0.7zM1798.9 190.1h0.9v0.9h-0.9zM1809.9 178.9h0.8v0.8h-0.8zM1803.4 178.1h1.0v1.0h-1.0zM1794.5 186.1h1.0v1.0h-1.0zM1805.6 184.3h1.1v1.1h-1.1zM1813.4 185.2h0.9v0.9h-0.9zM1792.4 185.1h0.9v0.9h-0.9zM1795.6 188.6h1.1v1.1h-1.1zM1800.1 182.6h0.8v0.8h-0.8zM1795.3 186.8h0.7v0.7h-0.7zM1798.5 188.4h0.7v0.7h-0.7zM1799.8 191.5h1.1v1.1h-1.1zM1798.2 185.0h0.6v0.6h-0.6zM1803.3 186.5h0.9v0.9h-0.9z"/><rect x="1815.5" y="197" width="5" height="5" fill="#ff8080" opacity="0.75"/><path d="M1815,198.5 L1820,198.5 M1817.5,196 L1817.5,201" stroke="#000" stroke-width="1.3"/><path fill="#000" opacity="1.0" d="M1837.4 184.4h1.0v1.0h-1.0zM1835.0 194.8h1.0v1.0h-1.0zM1839.6 184.3h0.7v0.7h-0.7zM1838.1 184.9h0.5v0.5h-0.5zM1834.3 182.4h1.0v1.0h-1.0zM1838.6 178.1h1.1v1.1h-1.1zM1833.9 184.3h0.9v0.9h-0.9zM1835.8 188.0h0.8v0.8h-0.8zM1833.5 194.9h0.9v0.9h-0.9zM1837.2 184.8h0.7v0.7h-0.7zM1834.4 189.3h0.8v0.8h-0.8zM1843.6 176.4h0.7v0.7h-0.7zM1833.4 188.0h1.1v1.1h-1.1zM1835.7 190.7h1.0v1.0h-1.0zM1839.2 188.6h1.1v1.1h-1.1zM1839.9 179.1h0.5v0.5h-0.5zM1842.4 179.5h1.0v1.0h-1.0zM1845.1 184.3h0.7v0.7h-0.7zM1839.3 188.1h0.8v0.8h-0.8zM1836.5 184.9h0.6v0.6h-0.6zM1834.7 179.3h0.7v0.7h-0.7zM1843.1 184.7h0.5v0.5h-0.5zM1832.6 190.4h0.6v0.6h-0.6zM1838.0 185.0h0.6v0.6h-0.6zM1840.6 178.6h0.9v0.9h-0.9zM1839.3 191.1h0.8v0.8h-0.8zM1837.5 193.4h0.8v0.8h-0.8zM1842.6 184.9h0.7v0.7h-0.7zM1838.9 186.4h0.9v0.9h-0.9zM1838.6 185.8h0.5v0.5h-0.5zM1831.5 183.5h0.8v0.8h-0.8zM1838.2 184.2h0.4v0.4h-0.4zM1838.3 180.8h0.9v0.9h-0.9zM1837.2 186.7h0.6v0.6h-0.6zM1843.9 191.9h0.8v0.8h-0.8zM1835.9 189.8h0.7v0.7h-0.7zM1844.7 188.9h0.8v0.8h-0.8zM1841.4 183.6h0.8v0.8h-0.8zM1838.0 185.6h1.0v1.0h-1.0zM1839.5 181.8h1.0v1.0h-1.0zM1839.0 181.4h0.8v0.8h-0.8zM1841.8 183.4h1.0v1.0h-1.0zM1838.1 190.1h0.9v0.9h-0.9zM1838.4 189.0h1.0v1.0h-1.0zM1831.7 186.0h0.6v0.6h-0.6zM1839.3 189.1h0.6v0.6h-0.6zM1840.3 184.3h0.8v0.8h-0.8zM1841.2 189.6h0.7v0.7h-0.7zM1837.6 185.5h0.5v0.5h-0.5zM1839.3 180.9h0.6v0.6h-0.6zM1838.8 188.4h0.6v0.6h-0.6zM1843.2 186.9h0.7v0.7h-0.7zM1841.1 192.6h0.5v0.5h-0.5zM1837.2 195.8h0.5v0.5h-0.5zM1831.7 188.8h1.0v1.0h-1.0zM1839.5 188.9h0.9v0.9h-0.9zM1832.5 193.7h0.6v0.6h-0.6zM1841.8 183.0h0.6v0.6h-0.6zM1837.0 185.5h0.9v0.9h-0.9zM1837.5 196.7h0.8v0.8h-0.8zM1836.7 187.4h0.8v0.8h-0.8zM1839.6 196.0h0.5v0.5h-0.5zM1833.7 184.4h0.6v0.6h-0.6zM1838.4 180.0h0.9v0.9h-0.9zM1835.7 183.3h0.7v0.7h-0.7zM1839.2 186.2h1.0v1.0h-1.0zM1835.7 192.8h0.5v0.5h-0.5zM1835.3 183.2h0.8v0.8h-0.8zM1837.8 185.8h0.6v0.6h-0.6zM1838.1 186.6h0.9v0.9h-0.9zM1837.3 190.1h1.0v1.0h-1.0zM1839.1 173.7h1.0v1.0h-1.0zM1839.5 187.7h0.5v0.5h-0.5zM1835.7 177.2h0.7v0.7h-0.7zM1833.5 189.5h0.9v0.9h-0.9zM1838.1 196.0h0.7v0.7h-0.7zM1837.0 183.3h0.5v0.5h-0.5zM1843.0 180.0h0.9v0.9h-0.9zM1838.3 185.1h0.5v0.5h-0.5zM1838.8 188.7h0.7v0.7h-0.7zM1840.4 186.0h0.8v0.8h-0.8zM1840.9 194.9h0.8v0.8h-0.8zM1837.6 181.8h0.7v0.7h-0.7zM1836.9 180.8h0.4v0.4h-0.4zM1841.1 176.3h0.6v0.6h-0.6zM1844.6 188.0h0.8v0.8h-0.8zM1839.9 185.9h0.5v0.5h-0.5zM1838.4 182.4h1.0v1.0h-1.0zM1838.0 183.9h0.9v0.9h-0.9zM1833.3 191.0h1.0v1.0h-1.0zM1837.9 186.1h1.0v1.0h-1.0zM1831.4 190.6h0.9v0.9h-0.9zM1837.5 174.2h0.8v0.8h-0.8zM1837.6 185.2h0.9v0.9h-0.9zM1834.3 187.9h1.0v1.0h-1.0zM1842.2 192.1h0.5v0.5h-0.5zM1836.1 175.0h0.6v0.6h-0.6zM1830.6 181.4h0.8v0.8h-0.8zM1836.1 184.1h0.5v0.5h-0.5zM1835.9 189.2h0.6v0.6h-0.6zM1837.6 186.6h0.9v0.9h-0.9zM1837.1 182.3h0.6v0.6h-0.6zM1834.5 184.4h1.0v1.0h-1.0zM1836.6 188.1h1.0v1.0h-1.0zM1840.8 190.7h0.6v0.6h-0.6zM1839.8 178.5h0.9v0.9h-0.9zM1840.6 192.6h0.8v0.8h-0.8zM1832.1 187.4h1.0v1.0h-1.0zM1839.7 187.5h0.7v0.7h-0.7zM1838.1 185.8h0.6v0.6h-0.6zM1839.8 193.6h0.7v0.7h-0.7zM1840.0 187.7h0.7v0.7h-0.7zM1837.1 186.7h0.5v0.5h-0.5zM1845.9 185.9h0.9v0.9h-0.9zM1843.0 189.7h1.1v1.1h-1.1zM1837.2 184.4h0.7v0.7h-0.7zM1836.6 186.0h0.8v0.8h-0.8zM1845.3 185.6h0.8v0.8h-0.8zM1832.8 176.3h0.9v0.9h-0.9zM1838.0 188.2h0.5v0.5h-0.5zM1844.1 186.7h1.0v1.0h-1.0zM1837.6 187.3h0.8v0.8h-0.8zM1842.2 175.1h0.5v0.5h-0.5zM1839.4 174.5h0.9v0.9h-0.9zM1837.3 187.1h1.0v1.0h-1.0zM1836.7 189.3h0.8v0.8h-0.8zM1833.5 192.9h0.6v0.6h-0.6zM1842.4 186.9h0.8v0.8h-0.8zM1840.4 176.7h1.0v1.0h-1.0zM1841.7 182.8h0.8v0.8h-0.8zM1839.3 188.3h0.8v0.8h-0.8zM1842.8 189.3h0.5v0.5h-0.5zM1830.7 189.4h0.5v0.5h-0.5zM1841.4 186.4h0.6v0.6h-0.6zM1838.0 185.0h1.0v1.0h-1.0zM1841.9 176.9h0.7v0.7h-0.7zM1836.9 193.4h0.8v0.8h-0.8zM1835.6 187.1h0.7v0.7h-0.7zM1834.7 175.7h1.0v1.0h-1.0zM1839.2 188.3h0.7v0.7h-0.7zM1835.4 183.2h0.6v0.6h-0.6zM1840.2 187.1h0.7v0.7h-0.7zM1845.2 182.9h1.0v1.0h-1.0zM1845.6 183.0h0.8v0.8h-0.8zM1838.2 184.3h0.9v0.9h-0.9zM1836.2 182.6h0.8v0.8h-0.8zM1841.7 183.2h0.9v0.9h-0.9zM1837.2 189.3h1.0v1.0h-1.0zM1839.5 185.4h0.9v0.9h-0.9zM1837.4 185.4h0.9v0.9h-0.9zM1834.8 190.4h0.7v0.7h-0.7zM1833.6 183.6h0.7v0.7h-0.7zM1839.1 186.5h1.0v1.0h-1.0zM1837.1 184.6h1.0v1.0h-1.0zM1838.0 186.2h0.8v0.8h-0.8zM1838.0 191.4h0.8v0.8h-0.8zM1838.7 192.4h0.5v0.5h-0.5zM1833.3 184.4h0.5v0.5h-0.5zM1837.5 185.5h0.7v0.7h-0.7zM1840.9 179.6h0.9v0.9h-0.9zM1838.0 183.5h1.1v1.1h-1.1zM1837.9 183.7h1.0v1.0h-1.0zM1836.9 186.4h1.1v1.1h-1.1zM1832.3 181.1h0.5v0.5h-0.5zM1838.1 184.3h0.6v0.6h-0.6zM1837.9 185.1h0.8v0.8h-0.8zM1838.6 188.8h0.9v0.9h-0.9zM1831.6 190.2h0.8v0.8h-0.8zM1841.1 179.7h1.0v1.0h-1.0zM1838.9 183.4h0.9v0.9h-0.9zM1834.7 193.3h0.9v0.9h-0.9zM1838.4 183.6h0.7v0.7h-0.7zM1837.4 172.7h0.9v0.9h-0.9zM1842.7 187.1h0.5v0.5h-0.5zM1831.9 181.8h0.5v0.5h-0.5zM1842.8 181.0h0.6v0.6h-0.6zM1839.2 190.4h1.0v1.0h-1.0zM1837.2 184.3h0.4v0.4h-0.4zM1842.9 191.7h0.6v0.6h-0.6zM1835.8 183.7h0.9v0.9h-0.9zM1837.2 186.3h1.0v1.0h-1.0zM1832.6 182.9h1.0v1.0h-1.0zM1838.1 184.9h0.7v0.7h-0.7zM1840.3 190.3h1.0v1.0h-1.0zM1838.1 184.6h0.6v0.6h-0.6zM1840.3 177.0h0.7v0.7h-0.7zM1836.7 185.3h1.0v1.0h-1.0zM1832.5 192.0h0.8v0.8h-0.8zM1840.3 187.0h0.6v0.6h-0.6zM1841.7 180.3h0.5v0.5h-0.5zM1839.4 189.1h0.7v0.7h-0.7zM1835.3 182.7h0.7v0.7h-0.7zM1842.6 185.3h0.6v0.6h-0.6zM1841.6 185.8h1.1v1.1h-1.1zM1839.1 185.5h0.9v0.9h-0.9zM1837.7 188.5h0.8v0.8h-0.8zM1837.7 192.4h0.8v0.8h-0.8zM1845.6 181.6h0.5v0.5h-0.5zM1832.3 181.3h1.0v1.0h-1.0zM1838.8 176.9h0.8v0.8h-0.8zM1836.5 187.8h0.9v0.9h-0.9zM1843.2 176.3h0.9v0.9h-0.9zM1836.0 194.4h0.9v0.9h-0.9zM1832.9 184.5h0.7v0.7h-0.7zM1834.9 183.3h0.5v0.5h-0.5zM1836.7 188.6h1.1v1.1h-1.1zM1835.1 185.6h0.6v0.6h-0.6zM1838.3 189.5h0.5v0.5h-0.5zM1845.0 185.5h0.7v0.7h-0.7zM1833.7 187.5h0.6v0.6h-0.6zM1838.3 185.8h0.6v0.6h-0.6zM1835.9 193.8h0.8v0.8h-0.8zM1840.5 183.3h1.0v1.0h-1.0zM1837.4 184.5h0.5v0.5h-0.5zM1831.1 178.8h0.7v0.7h-0.7zM1838.5 179.5h1.0v1.0h-1.0zM1841.5 187.6h1.0v1.0h-1.0zM1837.7 188.3h0.4v0.4h-0.4zM1839.1 188.0h0.9v0.9h-0.9zM1838.6 190.1h0.6v0.6h-0.6z"/><rect x="1849.5" y="197" width="5" height="5" fill="#ff8080" opacity="0.75"/><path d="M1849,198.5 L1854,198.5 M1851.5,196 L1851.5,201" stroke="#000" stroke-width="1.3"/><path fill="#000" opacity="0.75" d="M1863.8 178.8h0.9v0.9h-0.9zM1874.6 192.5h1.1v1.1h-1.1zM1871.8 184.9h1.0v1.0h-1.0zM1873.7 183.4h0.5v0.5h-0.5zM1873.8 189.4h1.0v1.0h-1.0zM1864.7 176.2h0.6v0.6h-0.6zM1868.2 192.3h0.9v0.9h-0.9zM1866.2 188.9h0.7v0.7h-0.7zM1875.0 186.1h0.5v0.5h-0.5zM1870.4 183.4h0.8v0.8h-0.8zM1870.8 184.1h0.7v0.7h-0.7zM1883.4 186.0h0.8v0.8h-0.8zM1872.1 185.0h0.8v0.8h-0.8zM1871.6 182.8h0.5v0.5h-0.5zM1872.3 185.5h0.9v0.9h-0.9zM1879.9 190.0h0.7v0.7h-0.7zM1866.6 183.7h0.8v0.8h-0.8zM1868.8 180.2h0.6v0.6h-0.6zM1871.9 183.5h0.9v0.9h-0.9zM1872.7 176.4h0.6v0.6h-0.6zM1873.8 172.6h0.7v0.7h-0.7zM1871.2 189.5h1.0v1.0h-1.0zM1872.0 185.0h0.7v0.7h-0.7zM1867.2 177.9h0.7v0.7h-0.7zM1873.2 184.9h0.9v0.9h-0.9zM1872.0 185.0h0.5v0.5h-0.5zM1876.0 186.6h0.8v0.8h-0.8zM1876.9 195.7h0.7v0.7h-0.7zM1872.5 185.7h0.9v0.9h-0.9zM1872.6 184.7h0.5v0.5h-0.5zM1872.2 183.7h1.1v1.1h-1.1zM1865.7 185.0h0.7v0.7h-0.7zM1873.2 181.4h0.6v0.6h-0.6zM1872.3 184.8h0.9v0.9h-0.9zM1877.9 187.6h0.7v0.7h-0.7zM1872.1 184.9h0.8v0.8h-0.8zM1862.4 191.1h1.0v1.0h-1.0zM1871.2 184.1h0.6v0.6h-0.6zM1871.7 188.4h0.6v0.6h-0.6zM1874.4 193.0h0.8v0.8h-0.8zM1868.1 197.3h0.6v0.6h-0.6zM1871.4 184.7h1.0v1.0h-1.0zM1873.1 183.8h0.9v0.9h-0.9zM1872.8 183.5h0.6v0.6h-0.6zM1861.2 186.0h0.5v0.5h-0.5zM1869.7 179.8h0.7v0.7h-0.7zM1862.6 179.9h0.6v0.6h-0.6zM1873.9 183.3h0.9v0.9h-0.9zM1872.6 184.4h1.0v1.0h-1.0zM1873.9 184.9h0.4v0.4h-0.4zM1881.5 193.0h0.4v0.4h-0.4zM1872.5 184.7h0.9v0.9h-0.9zM1872.6 185.4h0.9v0.9h-0.9zM1873.9 186.2h1.0v1.0h-1.0zM1869.8 174.6h1.1v1.1h-1.1zM1873.3 185.3h0.9v0.9h-0.9zM1872.0 184.9h0.8v0.8h-0.8zM1872.4 188.4h0.5v0.5h-0.5zM1884.7 186.6h0.6v0.6h-0.6zM1872.3 184.7h0.7v0.7h-0.7zM1874.2 187.5h0.5v0.5h-0.5zM1871.8 184.4h0.9v0.9h-0.9zM1871.6 185.0h0.7v0.7h-0.7zM1860.7 185.3h0.7v0.7h-0.7zM1874.7 197.0h1.0v1.0h-1.0zM1871.8 183.4h0.5v0.5h-0.5zM1872.0 185.2h0.5v0.5h-0.5zM1868.9 184.8h0.8v0.8h-0.8zM1872.0 185.0h0.9v0.9h-0.9zM1869.2 181.0h0.8v0.8h-0.8zM1867.4 173.2h1.0v1.0h-1.0zM1871.4 182.1h0.6v0.6h-0.6zM1861.1 191.1h0.7v0.7h-0.7zM1869.7 187.1h0.5v0.5h-0.5zM1872.0 185.0h0.8v0.8h-0.8zM1873.3 184.3h0.8v0.8h-0.8zM1871.0 185.9h0.6v0.6h-0.6zM1879.4 191.6h0.9v0.9h-0.9zM1872.1 184.9h0.9v0.9h-0.9zM1869.1 190.8h0.8v0.8h-0.8zM1867.0 196.4h0.4v0.4h-0.4zM1871.8 174.9h0.8v0.8h-0.8zM1861.2 177.9h0.6v0.6h-0.6zM1866.4 179.1h0.7v0.7h-0.7zM1871.3 182.2h0.8v0.8h-0.8zM1866.7 180.5h0.6v0.6h-0.6zM1868.6 181.5h0.6v0.6h-0.6zM1870.8 184.0h1.0v1.0h-1.0zM1864.4 186.3h0.8v0.8h-0.8zM1870.8 185.2h0.5v0.5h-0.5zM1876.2 182.9h0.8v0.8h-0.8zM1862.8 183.4h0.6v0.6h-0.6zM1876.5 193.4h0.7v0.7h-0.7zM1865.9 177.6h1.0v1.0h-1.0zM1872.1 184.9h0.7v0.7h-0.7zM1876.6 176.8h0.5v0.5h-0.5zM1872.8 186.2h0.5v0.5h-0.5zM1866.3 192.2h0.8v0.8h-0.8zM1871.7 185.1h0.7v0.7h-0.7zM1879.3 184.9h0.7v0.7h-0.7zM1863.0 186.2h0.9v0.9h-0.9zM1876.1 190.7h0.7v0.7h-0.7zM1870.7 184.8h0.7v0.7h-0.7zM1870.5 187.3h0.4v0.4h-0.4zM1873.6 190.0h0.5v0.5h-0.5zM1875.3 191.9h0.6v0.6h-0.6zM1871.4 186.2h1.0v1.0h-1.0zM1877.3 188.4h1.0v1.0h-1.0zM1873.0 188.1h0.9v0.9h-0.9zM1870.0 183.2h0.5v0.5h-0.5zM1869.6 185.9h0.9v0.9h-0.9zM1871.1 188.0h0.9v0.9h-0.9zM1872.9 182.7h0.7v0.7h-0.7zM1861.9 179.6h0.6v0.6h-0.6zM1879.4 183.6h0.7v0.7h-0.7zM1870.9 183.1h0.5v0.5h-0.5zM1872.1 182.2h0.8v0.8h-0.8zM1861.0 185.2h0.9v0.9h-0.9zM1877.6 185.9h0.7v0.7h-0.7zM1862.4 187.3h0.7v0.7h-0.7zM1861.4 186.8h0.7v0.7h-0.7zM1867.6 185.2h1.0v1.0h-1.0zM1868.1 177.9h0.7v0.7h-0.7zM1878.8 186.8h0.8v0.8h-0.8zM1873.0 176.5h0.5v0.5h-0.5zM1872.0 185.2h1.0v1.0h-1.0zM1872.2 185.2h0.9v0.9h-0.9zM1871.9 185.0h0.9v0.9h-0.9zM1871.0 181.1h0.5v0.5h-0.5zM1870.8 182.0h0.8v0.8h-0.8zM1881.4 184.9h1.0v1.0h-1.0zM1873.4 186.8h0.8v0.8h-0.8zM1884.8 185.5h0.6v0.6h-0.6zM1871.8 187.0h0.6v0.6h-0.6zM1875.2 181.1h0.8v0.8h-0.8zM1871.9 185.1h0.6v0.6h-0.6zM1878.1 178.2h1.0v1.0h-1.0zM1872.0 186.0h0.5v0.5h-0.5zM1869.4 184.4h0.7v0.7h-0.7zM1866.5 185.4h0.7v0.7h-0.7zM1872.3 184.1h1.0v1.0h-1.0zM1871.9 185.0h0.6v0.6h-0.6zM1869.0 184.4h0.8v0.8h-0.8zM1871.3 186.5h0.9v0.9h-0.9zM1870.1 192.3h1.0v1.0h-1.0zM1868.9 183.0h1.0v1.0h-1.0zM1862.1 188.6h0.5v0.5h-0.5zM1866.2 187.6h0.5v0.5h-0.5zM1872.1 184.9h0.8v0.8h-0.8zM1876.9 195.3h0.8v0.8h-0.8zM1873.3 181.0h0.9v0.9h-0.9zM1871.2 183.4h0.6v0.6h-0.6zM1872.3 184.5h1.0v1.0h-1.0zM1872.1 185.3h0.5v0.5h-0.5zM1874.6 173.3h0.7v0.7h-0.7zM1871.2 183.8h1.0v1.0h-1.0zM1871.7 184.4h0.5v0.5h-0.5zM1872.0 184.9h1.0v1.0h-1.0zM1871.7 186.2h0.8v0.8h-0.8zM1869.8 189.7h0.5v0.5h-0.5zM1873.8 183.9h1.0v1.0h-1.0zM1877.3 192.4h1.1v1.1h-1.1zM1872.0 185.0h0.7v0.7h-0.7zM1871.3 184.1h0.8v0.8h-0.8zM1875.2 187.1h0.9v0.9h-0.9zM1865.7 188.0h0.5v0.5h-0.5zM1872.2 184.6h1.0v1.0h-1.0zM1883.8 184.7h0.8v0.8h-0.8zM1871.4 187.3h0.9v0.9h-0.9zM1860.4 185.3h0.5v0.5h-0.5zM1861.8 186.0h0.8v0.8h-0.8zM1871.7 184.9h0.5v0.5h-0.5zM1870.6 195.8h1.0v1.0h-1.0zM1873.6 196.3h0.5v0.5h-0.5zM1862.0 177.8h0.7v0.7h-0.7zM1878.2 182.7h0.5v0.5h-0.5zM1870.2 188.1h0.6v0.6h-0.6zM1872.0 184.2h0.9v0.9h-0.9zM1871.9 185.2h0.8v0.8h-0.8zM1876.1 187.8h0.9v0.9h-0.9zM1868.9 182.9h0.5v0.5h-0.5zM1871.7 185.0h0.9v0.9h-0.9zM1875.7 189.0h0.7v0.7h-0.7zM1867.2 189.8h0.5v0.5h-0.5zM1877.7 195.3h0.6v0.6h-0.6zM1877.7 176.2h0.7v0.7h-0.7zM1872.2 185.2h1.0v1.0h-1.0zM1875.1 187.8h0.8v0.8h-0.8zM1874.9 187.6h0.5v0.5h-0.5zM1867.7 184.0h0.7v0.7h-0.7zM1873.0 187.9h0.6v0.6h-0.6zM1872.9 185.9h1.0v1.0h-1.0zM1861.2 184.9h0.4v0.4h-0.4zM1875.9 183.6h0.9v0.9h-0.9zM1865.5 181.9h0.6v0.6h-0.6zM1872.0 184.4h0.6v0.6h-0.6zM1874.9 185.6h0.8v0.8h-0.8zM1869.2 195.4h0.5v0.5h-0.5zM1870.9 184.4h0.8v0.8h-0.8zM1873.6 177.6h0.5v0.5h-0.5zM1872.2 190.7h1.1v1.1h-1.1zM1877.8 186.5h0.9v0.9h-0.9zM1872.9 182.9h1.0v1.0h-1.0zM1860.9 187.7h0.4v0.4h-0.4zM1874.9 183.8h0.7v0.7h-0.7zM1873.2 185.7h0.9v0.9h-0.9zM1871.7 184.4h0.7v0.7h-0.7zM1872.6 185.8h0.6v0.6h-0.6zM1865.9 195.9h1.1v1.1h-1.1zM1873.0 181.1h0.8v0.8h-0.8zM1874.0 174.0h0.9v0.9h-0.9zM1871.4 184.3h0.8v0.8h-0.8zM1877.0 177.7h0.5v0.5h-0.5zM1871.5 182.6h0.5v0.5h-0.5zM1878.7 183.5h0.9v0.9h-0.9zM1878.4 192.2h1.0v1.0h-1.0zM1878.7 180.4h1.0v1.0h-1.0zM1873.8 179.7h0.7v0.7h-0.7zM1876.0 177.2h1.0v1.0h-1.0zM1868.3 196.6h0.8v0.8h-0.8zM1872.4 184.9h1.1v1.1h-1.1zM1872.3 183.6h1.0v1.0h-1.0zM1872.1 186.0h0.7v0.7h-0.7zM1872.4 189.2h1.0v1.0h-1.0zM1869.0 178.1h0.7v0.7h-0.7zM1873.9 176.2h0.9v0.9h-0.9zM1880.9 181.6h0.7v0.7h-0.7zM1877.6 188.4h1.0v1.0h-1.0zM1869.0 189.8h1.0v1.0h-1.0zM1872.0 185.0h0.7v0.7h-0.7zM1872.4 185.0h1.0v1.0h-1.0zM1866.9 187.8h0.7v0.7h-0.7zM1871.4 185.9h0.7v0.7h-0.7zM1875.4 180.0h0.6v0.6h-0.6zM1873.4 185.8h0.9v0.9h-0.9zM1865.7 187.4h1.0v1.0h-1.0zM1877.1 189.9h0.5v0.5h-0.5zM1872.4 184.2h0.6v0.6h-0.6zM1874.5 184.3h0.6v0.6h-0.6zM1876.5 181.2h1.0v1.0h-1.0zM1868.6 187.6h1.1v1.1h-1.1zM1859.2 184.5h0.6v0.6h-0.6zM1872.3 184.4h0.8v0.8h-0.8zM1872.8 185.0h1.0v1.0h-1.0zM1863.1 187.6h0.6v0.6h-0.6zM1871.8 185.3h0.8v0.8h-0.8zM1874.9 181.6h0.7v0.7h-0.7zM1881.8 180.3h0.9v0.9h-0.9zM1877.4 187.8h0.7v0.7h-0.7zM1874.5 184.3h0.9v0.9h-0.9zM1870.2 183.0h0.8v0.8h-0.8zM1867.0 175.0h0.8v0.8h-0.8zM1863.8 194.4h0.5v0.5h-0.5zM1875.6 178.9h0.8v0.8h-0.8zM1864.2 187.7h1.0v1.0h-1.0zM1870.9 176.9h0.5v0.5h-0.5zM1871.8 185.5h1.0v1.0h-1.0zM1872.5 184.6h0.8v0.8h-0.8zM1871.9 185.0h0.7v0.7h-0.7zM1871.9 178.6h0.6v0.6h-0.6zM1872.1 183.2h0.8v0.8h-0.8zM1861.0 191.0h0.9v0.9h-0.9zM1874.4 178.5h0.7v0.7h-0.7zM1879.3 183.3h0.9v0.9h-0.9zM1871.9 185.7h0.8v0.8h-0.8zM1876.1 177.0h0.7v0.7h-0.7zM1874.9 188.5h1.0v1.0h-1.0zM1876.2 191.8h0.5v0.5h-0.5zM1872.0 185.1h0.6v0.6h-0.6zM1862.9 193.3h1.1v1.1h-1.1zM1872.8 186.8h1.0v1.0h-1.0zM1872.7 187.0h0.7v0.7h-0.7zM1873.2 185.9h0.7v0.7h-0.7zM1862.8 193.1h0.6v0.6h-0.6zM1875.2 195.7h0.7v0.7h-0.7zM1875.3 179.6h0.9v0.9h-0.9zM1871.7 185.6h0.9v0.9h-0.9zM1867.0 186.0h0.9v0.9h-0.9zM1872.0 183.3h0.7v0.7h-0.7zM1876.1 182.7h0.6v0.6h-0.6zM1871.0 183.9h0.9v0.9h-0.9zM1881.3 187.5h0.8v0.8h-0.8zM1864.9 194.4h0.6v0.6h-0.6zM1872.0 185.2h0.8v0.8h-0.8zM1872.2 178.0h0.7v0.7h-0.7zM1872.1 184.6h0.6v0.6h-0.6z"/><rect x="1883.5" y="197" width="5" height="5" fill="#ff8080" opacity="0.75"/><path d="M1883,198.5 L1888,198.5 M1885.5,196 L1885.5,201" stroke="#000" stroke-width="1.3"/><path fill="#000" opacity="1.0" d="M1726.7 206.3h1.0v1.0h-1.0zM1731.0 206.6h0.8v0.8h-0.8zM1745.0 213.1h0.8v0.8h-0.8zM1726.0 224.2h0.8v0.8h-0.8zM1739.9 228.4h0.9v0.9h-0.9zM1725.3 215.7h1.2v1.2h-1.2zM1738.5 220.9h0.6v0.6h-0.6zM1728.6 220.9h1.2v1.2h-1.2zM1730.8 209.6h0.8v0.8h-0.8zM1731.1 215.1h1.2v1.2h-1.2zM1737.9 205.4h0.6v0.6h-0.6zM1729.9 207.4h0.9v0.9h-0.9zM1745.2 209.4h1.1v1.1h-1.1zM1739.1 208.4h1.2v1.2h-1.2zM1741.9 224.5h1.1v1.1h-1.1zM1731.7 214.2h0.6v0.6h-0.6zM1725.6 209.9h0.7v0.7h-0.7zM1735.8 220.5h0.6v0.6h-0.6zM1728.9 204.8h1.1v1.1h-1.1zM1728.5 224.8h0.6v0.6h-0.6zM1737.7 212.7h0.5v0.5h-0.5zM1733.4 215.3h0.7v0.7h-0.7zM1741.3 219.5h0.9v0.9h-0.9zM1735.3 216.3h1.2v1.2h-1.2zM1737.8 219.3h1.0v1.0h-1.0zM1732.2 221.4h1.0v1.0h-1.0zM1737.3 228.1h0.7v0.7h-0.7zM1741.2 207.2h0.9v0.9h-0.9zM1746.0 219.1h0.5v0.5h-0.5zM1728.5 216.8h0.6v0.6h-0.6zM1727.8 209.4h1.0v1.0h-1.0zM1728.8 221.5h1.0v1.0h-1.0zM1736.8 229.2h1.3v1.3h-1.3zM1739.5 204.3h0.8v0.8h-0.8zM1736.3 216.9h0.9v0.9h-0.9zM1739.6 222.1h1.0v1.0h-1.0zM1733.2 210.3h0.8v0.8h-0.8zM1737.3 222.7h0.7v0.7h-0.7zM1738.6 227.0h0.9v0.9h-0.9zM1732.0 218.2h1.1v1.1h-1.1zM1736.4 221.0h1.0v1.0h-1.0zM1730.9 204.0h1.1v1.1h-1.1zM1747.3 212.9h1.1v1.1h-1.1zM1734.8 215.9h0.7v0.7h-0.7zM1747.2 218.0h1.1v1.1h-1.1zM1732.1 213.9h0.8v0.8h-0.8zM1739.8 224.9h1.3v1.3h-1.3zM1734.7 217.8h0.7v0.7h-0.7zM1727.2 227.0h1.1v1.1h-1.1zM1733.3 217.5h0.6v0.6h-0.6zM1741.3 226.2h0.9v0.9h-0.9zM1747.9 216.2h1.1v1.1h-1.1zM1723.4 218.7h0.6v0.6h-0.6zM1741.5 222.3h0.9v0.9h-0.9zM1736.0 220.9h0.5v0.5h-0.5zM1743.6 211.4h1.3v1.3h-1.3zM1741.6 216.2h1.1v1.1h-1.1zM1726.3 224.7h1.2v1.2h-1.2zM1735.2 217.2h0.7v0.7h-0.7zM1730.0 214.0h0.5v0.5h-0.5zM1740.5 207.1h0.9v0.9h-0.9zM1747.1 220.4h0.9v0.9h-0.9zM1739.6 219.2h1.0v1.0h-1.0zM1740.5 212.2h1.0v1.0h-1.0zM1736.1 220.8h1.2v1.2h-1.2zM1733.6 218.2h1.0v1.0h-1.0zM1737.3 219.3h0.9v0.9h-0.9zM1727.0 212.2h1.1v1.1h-1.1zM1733.8 217.5h1.1v1.1h-1.1zM1741.7 219.4h0.8v0.8h-0.8zM1730.2 207.9h0.7v0.7h-0.7zM1729.1 208.9h0.9v0.9h-0.9zM1743.1 227.0h1.0v1.0h-1.0zM1738.6 218.5h1.3v1.3h-1.3zM1735.8 223.0h1.1v1.1h-1.1zM1739.2 208.7h1.1v1.1h-1.1zM1736.6 217.4h1.3v1.3h-1.3zM1735.2 216.3h0.6v0.6h-0.6zM1735.8 230.1h0.7v0.7h-0.7zM1728.8 205.4h1.0v1.0h-1.0zM1738.7 215.0h0.6v0.6h-0.6zM1745.8 218.2h0.6v0.6h-0.6zM1745.1 215.3h0.7v0.7h-0.7zM1736.0 214.4h0.9v0.9h-0.9zM1743.9 224.0h1.2v1.2h-1.2zM1735.1 217.0h1.2v1.2h-1.2zM1724.0 213.0h0.9v0.9h-0.9zM1728.6 211.0h1.1v1.1h-1.1zM1735.9 217.5h0.9v0.9h-0.9zM1733.4 222.9h0.5v0.5h-0.5zM1735.0 216.5h1.2v1.2h-1.2zM1737.6 210.6h0.6v0.6h-0.6zM1733.0 214.3h0.9v0.9h-0.9zM1745.5 225.8h0.9v0.9h-0.9zM1734.0 218.3h1.1v1.1h-1.1zM1742.1 207.2h0.6v0.6h-0.6zM1731.8 220.5h1.1v1.1h-1.1zM1740.3 224.1h1.3v1.3h-1.3zM1735.0 216.8h0.6v0.6h-0.6zM1742.6 223.6h1.0v1.0h-1.0zM1728.2 216.1h0.8v0.8h-0.8zM1727.7 210.9h1.2v1.2h-1.2zM1733.8 205.7h1.2v1.2h-1.2zM1740.4 208.1h0.5v0.5h-0.5zM1729.9 206.0h0.9v0.9h-0.9zM1737.2 214.9h1.3v1.3h-1.3zM1725.4 220.7h0.7v0.7h-0.7zM1733.3 222.2h0.8v0.8h-0.8zM1740.6 220.8h1.3v1.3h-1.3zM1727.5 206.2h1.1v1.1h-1.1zM1742.2 205.1h1.1v1.1h-1.1zM1734.4 221.0h0.8v0.8h-0.8zM1738.7 217.5h1.2v1.2h-1.2zM1739.5 214.5h1.1v1.1h-1.1zM1737.0 204.6h1.1v1.1h-1.1zM1733.2 216.6h1.2v1.2h-1.2zM1731.4 225.5h0.8v0.8h-0.8zM1721.8 213.9h0.6v0.6h-0.6zM1725.7 215.2h0.9v0.9h-0.9zM1740.8 214.6h1.2v1.2h-1.2zM1730.0 204.4h0.6v0.6h-0.6zM1736.1 221.4h1.2v1.2h-1.2zM1739.2 217.4h1.1v1.1h-1.1zM1737.9 216.8h0.9v0.9h-0.9zM1731.1 207.7h1.1v1.1h-1.1zM1735.1 213.0h0.7v0.7h-0.7zM1744.9 218.7h0.7v0.7h-0.7zM1734.2 230.5h1.0v1.0h-1.0zM1726.9 211.8h1.0v1.0h-1.0zM1733.4 212.5h0.6v0.6h-0.6zM1735.3 217.1h0.8v0.8h-0.8zM1736.2 218.5h0.9v0.9h-0.9zM1744.8 215.1h0.7v0.7h-0.7zM1735.4 214.1h0.6v0.6h-0.6zM1732.9 222.9h1.1v1.1h-1.1zM1725.1 220.6h0.6v0.6h-0.6zM1739.9 214.8h1.2v1.2h-1.2zM1746.6 219.3h0.7v0.7h-0.7zM1742.0 207.9h1.0v1.0h-1.0zM1735.0 217.2h0.7v0.7h-0.7zM1737.2 215.5h1.0v1.0h-1.0zM1726.8 212.0h0.7v0.7h-0.7zM1736.1 218.3h1.3v1.3h-1.3zM1727.9 223.4h1.0v1.0h-1.0zM1735.2 218.2h0.5v0.5h-0.5zM1736.3 215.2h1.3v1.3h-1.3zM1728.2 224.9h0.6v0.6h-0.6zM1736.0 213.1h0.8v0.8h-0.8zM1733.1 216.7h0.7v0.7h-0.7zM1736.3 212.7h0.8v0.8h-0.8zM1735.3 213.4h0.7v0.7h-0.7zM1736.1 222.8h0.8v0.8h-0.8zM1730.5 211.5h1.2v1.2h-1.2zM1744.2 220.0h1.2v1.2h-1.2zM1735.1 217.6h0.9v0.9h-0.9zM1740.2 221.6h1.1v1.1h-1.1zM1736.7 218.1h0.9v0.9h-0.9zM1736.7 220.3h0.9v0.9h-0.9zM1735.9 217.8h0.8v0.8h-0.8zM1722.0 219.5h0.9v0.9h-0.9zM1738.3 218.6h1.1v1.1h-1.1zM1723.6 212.2h1.3v1.3h-1.3zM1736.2 215.5h1.3v1.3h-1.3zM1731.2 216.4h0.7v0.7h-0.7zM1737.3 214.4h0.6v0.6h-0.6zM1733.7 230.0h0.9v0.9h-0.9zM1734.8 215.7h0.9v0.9h-0.9zM1733.6 220.1h1.0v1.0h-1.0zM1733.7 218.6h1.3v1.3h-1.3zM1732.0 217.3h0.5v0.5h-0.5zM1730.6 210.7h0.5v0.5h-0.5zM1724.5 219.0h0.9v0.9h-0.9zM1735.7 224.5h1.0v1.0h-1.0zM1733.6 215.0h1.1v1.1h-1.1zM1745.1 213.4h1.2v1.2h-1.2zM1726.4 226.4h0.7v0.7h-0.7zM1736.3 225.7h1.2v1.2h-1.2zM1738.1 218.7h0.5v0.5h-0.5zM1732.8 217.9h0.7v0.7h-0.7zM1734.9 208.4h1.2v1.2h-1.2zM1726.9 222.7h0.5v0.5h-0.5zM1738.6 215.8h0.9v0.9h-0.9zM1721.7 216.0h0.9v0.9h-0.9zM1744.1 216.5h0.7v0.7h-0.7zM1736.7 214.1h1.3v1.3h-1.3zM1731.5 218.0h1.3v1.3h-1.3zM1732.3 222.6h0.8v0.8h-0.8zM1734.8 216.6h0.8v0.8h-0.8zM1741.2 227.1h0.5v0.5h-0.5zM1731.8 214.4h0.9v0.9h-0.9zM1725.5 213.1h0.6v0.6h-0.6zM1735.1 219.1h1.3v1.3h-1.3zM1736.4 218.9h0.9v0.9h-0.9zM1724.0 210.9h0.6v0.6h-0.6zM1735.3 219.8h1.0v1.0h-1.0zM1729.0 218.8h1.2v1.2h-1.2zM1728.6 206.6h1.3v1.3h-1.3zM1733.4 230.2h0.8v0.8h-0.8zM1747.2 221.1h0.6v0.6h-0.6zM1739.6 217.5h0.7v0.7h-0.7zM1747.1 214.4h0.8v0.8h-0.8zM1723.1 214.8h1.1v1.1h-1.1zM1730.6 210.7h0.6v0.6h-0.6zM1735.4 226.6h1.0v1.0h-1.0zM1739.0 204.9h1.3v1.3h-1.3zM1735.5 218.3h1.2v1.2h-1.2zM1732.3 215.7h1.1v1.1h-1.1zM1734.9 220.8h0.8v0.8h-0.8zM1725.3 215.5h0.6v0.6h-0.6zM1734.5 207.9h0.9v0.9h-0.9zM1729.6 206.9h0.5v0.5h-0.5zM1725.3 218.5h1.1v1.1h-1.1zM1733.2 214.6h1.3v1.3h-1.3zM1735.8 213.3h0.9v0.9h-0.9zM1738.3 216.1h0.8v0.8h-0.8zM1747.4 214.0h0.7v0.7h-0.7zM1734.5 211.4h1.0v1.0h-1.0zM1735.2 214.8h0.7v0.7h-0.7zM1735.9 221.1h0.5v0.5h-0.5zM1739.1 221.7h0.8v0.8h-0.8zM1742.6 221.0h1.3v1.3h-1.3zM1730.1 214.4h1.1v1.1h-1.1zM1732.3 218.1h0.9v0.9h-0.9zM1744.8 218.1h0.6v0.6h-0.6zM1725.8 226.9h1.1v1.1h-1.1zM1739.8 208.9h1.0v1.0h-1.0zM1731.2 204.0h0.7v0.7h-0.7zM1735.5 212.3h0.7v0.7h-0.7zM1738.8 209.0h1.2v1.2h-1.2zM1741.2 210.9h0.7v0.7h-0.7zM1742.9 217.8h1.1v1.1h-1.1zM1734.8 218.3h0.5v0.5h-0.5zM1739.7 225.9h0.5v0.5h-0.5zM1735.5 221.2h1.1v1.1h-1.1zM1735.4 217.0h0.6v0.6h-0.6zM1747.5 211.6h0.6v0.6h-0.6zM1731.0 223.7h0.8v0.8h-0.8zM1728.7 220.6h0.7v0.7h-0.7zM1736.4 217.5h0.6v0.6h-0.6zM1742.7 222.0h1.1v1.1h-1.1zM1734.1 228.3h1.1v1.1h-1.1zM1731.0 223.2h0.7v0.7h-0.7zM1742.5 213.4h0.6v0.6h-0.6zM1740.7 225.3h0.8v0.8h-0.8zM1734.2 213.4h1.1v1.1h-1.1zM1735.5 215.4h1.0v1.0h-1.0zM1738.7 226.6h1.1v1.1h-1.1zM1736.0 213.4h0.6v0.6h-0.6zM1730.7 209.8h0.6v0.6h-0.6zM1738.0 225.1h0.6v0.6h-0.6zM1732.4 214.1h0.7v0.7h-0.7zM1728.0 220.7h1.1v1.1h-1.1zM1745.3 219.0h0.7v0.7h-0.7zM1732.6 226.1h1.1v1.1h-1.1zM1725.4 208.6h0.7v0.7h-0.7zM1731.4 226.0h0.7v0.7h-0.7zM1737.0 220.1h1.1v1.1h-1.1zM1739.8 207.8h1.3v1.3h-1.3zM1736.3 212.3h0.8v0.8h-0.8zM1734.8 216.0h1.0v1.0h-1.0zM1735.8 217.5h0.9v0.9h-0.9zM1742.6 227.7h1.2v1.2h-1.2zM1731.8 217.8h0.6v0.6h-0.6zM1727.2 216.7h0.8v0.8h-0.8zM1733.3 209.3h1.1v1.1h-1.1zM1736.0 217.8h0.8v0.8h-0.8zM1731.0 217.4h1.0v1.0h-1.0zM1735.9 221.9h0.9v0.9h-0.9zM1732.4 206.2h0.8v0.8h-0.8zM1722.6 221.3h1.2v1.2h-1.2zM1733.6 215.8h0.9v0.9h-0.9zM1732.1 213.6h0.5v0.5h-0.5zM1747.8 215.5h0.6v0.6h-0.6zM1726.1 218.9h0.8v0.8h-0.8zM1744.8 221.5h1.1v1.1h-1.1zM1733.6 217.6h0.8v0.8h-0.8zM1746.2 224.5h0.6v0.6h-0.6zM1732.4 227.7h0.6v0.6h-0.6zM1736.0 217.8h0.6v0.6h-0.6zM1723.4 214.6h0.6v0.6h-0.6zM1740.1 226.8h0.8v0.8h-0.8zM1733.9 218.8h0.7v0.7h-0.7zM1737.0 216.6h0.7v0.7h-0.7zM1734.3 204.4h1.2v1.2h-1.2zM1721.7 219.3h1.0v1.0h-1.0zM1733.3 223.8h1.1v1.1h-1.1zM1734.8 214.8h0.7v0.7h-0.7zM1736.8 216.5h1.2v1.2h-1.2zM1732.9 220.4h0.7v0.7h-0.7zM1721.4 219.7h0.6v0.6h-0.6zM1738.1 213.0h0.7v0.7h-0.7zM1734.8 211.7h0.7v0.7h-0.7zM1724.8 222.8h1.2v1.2h-1.2zM1734.8 216.9h1.1v1.1h-1.1zM1725.0 209.1h1.3v1.3h-1.3zM1729.4 227.7h1.2v1.2h-1.2zM1734.4 222.6h0.8v0.8h-0.8zM1731.5 221.7h0.6v0.6h-0.6zM1736.8 229.7h0.8v0.8h-0.8zM1726.7 207.5h1.1v1.1h-1.1zM1735.5 230.0h1.1v1.1h-1.1zM1745.5 216.4h1.1v1.1h-1.1zM1736.6 213.2h1.0v1.0h-1.0zM1726.2 225.2h0.6v0.6h-0.6zM1729.9 215.7h1.2v1.2h-1.2zM1728.2 226.9h1.2v1.2h-1.2zM1736.7 215.4h1.2v1.2h-1.2zM1734.6 207.2h1.0v1.0h-1.0zM1746.8 220.7h0.9v0.9h-0.9zM1729.9 218.5h1.1v1.1h-1.1zM1737.5 204.9h0.7v0.7h-0.7zM1732.8 220.4h0.6v0.6h-0.6zM1734.8 217.5h1.1v1.1h-1.1zM1735.2 218.3h0.6v0.6h-0.6zM1734.8 213.7h0.9v0.9h-0.9zM1725.6 223.6h1.3v1.3h-1.3zM1731.6 225.6h1.2v1.2h-1.2zM1722.5 219.3h1.1v1.1h-1.1zM1730.3 228.5h1.0v1.0h-1.0zM1741.8 222.4h1.2v1.2h-1.2zM1727.8 216.2h0.8v0.8h-0.8zM1742.1 210.4h0.7v0.7h-0.7zM1731.3 221.3h1.3v1.3h-1.3zM1734.3 215.0h1.2v1.2h-1.2zM1743.5 218.9h0.9v0.9h-0.9zM1733.7 210.6h0.6v0.6h-0.6zM1723.4 215.3h1.1v1.1h-1.1zM1732.8 219.8h1.1v1.1h-1.1zM1736.1 213.6h1.2v1.2h-1.2zM1741.6 216.7h0.8v0.8h-0.8zM1731.7 204.3h0.7v0.7h-0.7zM1733.4 221.9h1.1v1.1h-1.1zM1738.1 224.5h0.9v0.9h-0.9zM1733.8 214.9h1.3v1.3h-1.3zM1743.3 217.0h1.1v1.1h-1.1zM1740.2 228.8h0.9v0.9h-0.9zM1735.7 204.7h0.8v0.8h-0.8zM1738.0 215.4h0.5v0.5h-0.5zM1722.3 216.8h1.2v1.2h-1.2zM1742.3 214.9h1.2v1.2h-1.2zM1732.7 216.1h1.0v1.0h-1.0zM1737.1 210.9h1.0v1.0h-1.0zM1734.7 221.4h0.8v0.8h-0.8zM1728.0 216.4h0.6v0.6h-0.6zM1740.3 217.2h1.1v1.1h-1.1zM1735.0 213.2h0.7v0.7h-0.7zM1732.1 216.7h1.0v1.0h-1.0zM1737.7 215.1h1.0v1.0h-1.0zM1733.0 206.4h1.1v1.1h-1.1zM1733.9 212.8h1.2v1.2h-1.2zM1735.9 216.6h1.3v1.3h-1.3zM1733.6 217.5h0.6v0.6h-0.6zM1737.9 207.6h0.6v0.6h-0.6zM1725.9 219.3h1.3v1.3h-1.3zM1729.3 226.4h0.7v0.7h-0.7zM1735.9 219.6h0.8v0.8h-0.8zM1731.5 213.8h0.6v0.6h-0.6zM1735.3 218.5h0.7v0.7h-0.7zM1732.0 223.9h0.7v0.7h-0.7zM1728.4 217.8h1.3v1.3h-1.3zM1721.7 218.1h0.9v0.9h-0.9zM1737.8 225.3h0.6v0.6h-0.6zM1735.6 218.2h1.1v1.1h-1.1zM1741.1 215.7h0.8v0.8h-0.8zM1730.1 219.5h1.1v1.1h-1.1zM1733.0 218.6h1.2v1.2h-1.2zM1734.9 216.9h1.2v1.2h-1.2zM1734.3 211.5h1.0v1.0h-1.0zM1740.4 214.0h0.9v0.9h-0.9zM1732.5 224.9h1.0v1.0h-1.0zM1733.7 203.7h0.6v0.6h-0.6zM1726.9 226.0h1.1v1.1h-1.1zM1726.7 211.7h0.8v0.8h-0.8zM1742.7 214.2h0.8v0.8h-0.8zM1735.8 218.8h1.2v1.2h-1.2zM1735.2 216.5h0.8v0.8h-0.8zM1727.6 218.0h0.8v0.8h-0.8zM1739.3 213.7h0.9v0.9h-0.9zM1743.5 213.0h0.9v0.9h-0.9zM1732.0 222.2h1.0v1.0h-1.0zM1735.9 212.9h0.8v0.8h-0.8zM1730.7 220.6h1.2v1.2h-1.2zM1730.7 215.9h0.8v0.8h-0.8zM1736.2 214.6h1.1v1.1h-1.1zM1738.2 217.4h0.6v0.6h-0.6zM1735.9 214.7h0.7v0.7h-0.7zM1738.9 218.5h1.1v1.1h-1.1zM1732.6 204.4h1.3v1.3h-1.3zM1722.6 212.9h0.6v0.6h-0.6zM1740.9 214.0h0.7v0.7h-0.7zM1734.9 204.8h0.8v0.8h-0.8zM1745.3 223.8h1.1v1.1h-1.1zM1723.8 209.2h0.5v0.5h-0.5zM1737.0 217.7h0.5v0.5h-0.5zM1732.6 208.1h0.6v0.6h-0.6zM1736.6 219.6h1.0v1.0h-1.0zM1728.6 205.0h0.8v0.8h-0.8zM1741.6 216.1h0.8v0.8h-0.8zM1734.9 220.8h1.3v1.3h-1.3zM1745.2 216.7h0.7v0.7h-0.7zM1736.1 219.3h0.8v0.8h-0.8zM1734.9 215.9h0.9v0.9h-0.9zM1734.7 216.4h0.9v0.9h-0.9zM1737.2 208.8h0.9v0.9h-0.9zM1741.5 211.0h0.8v0.8h-0.8zM1724.5 225.1h1.2v1.2h-1.2zM1742.2 212.8h0.6v0.6h-0.6zM1737.7 222.3h1.1v1.1h-1.1zM1746.5 217.3h1.1v1.1h-1.1zM1734.9 217.0h1.1v1.1h-1.1zM1726.6 222.0h1.0v1.0h-1.0zM1734.2 210.8h1.3v1.3h-1.3zM1747.6 213.4h1.0v1.0h-1.0zM1732.6 222.3h0.7v0.7h-0.7zM1744.3 210.5h1.1v1.1h-1.1zM1741.0 204.5h1.1v1.1h-1.1zM1730.5 226.9h0.7v0.7h-0.7zM1733.0 215.3h1.2v1.2h-1.2zM1730.6 217.3h1.2v1.2h-1.2zM1746.4 223.5h1.1v1.1h-1.1zM1741.5 225.8h1.0v1.0h-1.0zM1742.2 212.2h0.9v0.9h-0.9zM1736.4 216.4h1.1v1.1h-1.1zM1738.5 219.7h0.6v0.6h-0.6zM1739.6 212.1h1.1v1.1h-1.1zM1734.6 227.5h1.0v1.0h-1.0zM1741.1 221.3h1.1v1.1h-1.1zM1737.1 226.3h0.7v0.7h-0.7zM1726.1 226.4h1.3v1.3h-1.3zM1741.5 216.9h1.0v1.0h-1.0zM1738.9 206.8h0.9v0.9h-0.9zM1739.0 212.3h1.3v1.3h-1.3zM1733.0 217.3h1.1v1.1h-1.1zM1741.1 224.8h0.6v0.6h-0.6zM1743.0 216.4h1.1v1.1h-1.1zM1741.3 223.8h0.8v0.8h-0.8zM1735.1 228.6h0.5v0.5h-0.5zM1733.5 217.2h1.2v1.2h-1.2zM1735.5 216.6h0.9v0.9h-0.9zM1724.8 219.0h1.1v1.1h-1.1zM1727.7 228.0h0.7v0.7h-0.7zM1742.6 225.8h0.6v0.6h-0.6zM1737.9 223.9h0.8v0.8h-0.8zM1741.8 228.2h0.9v0.9h-0.9zM1735.9 213.1h1.2v1.2h-1.2zM1737.3 229.6h1.0v1.0h-1.0zM1745.9 215.0h1.0v1.0h-1.0zM1723.1 214.5h0.9v0.9h-0.9zM1745.5 224.5h1.1v1.1h-1.1zM1730.6 207.2h0.7v0.7h-0.7zM1723.6 219.7h1.3v1.3h-1.3zM1737.4 215.7h1.1v1.1h-1.1zM1729.1 214.9h0.6v0.6h-0.6zM1739.6 222.4h0.9v0.9h-0.9zM1734.4 222.7h0.9v0.9h-0.9zM1735.6 208.3h0.6v0.6h-0.6zM1739.3 213.3h1.3v1.3h-1.3zM1737.4 216.7h1.0v1.0h-1.0zM1740.8 215.8h0.9v0.9h-0.9zM1734.8 217.5h0.7v0.7h-0.7zM1738.2 220.2h1.0v1.0h-1.0zM1722.7 211.9h1.1v1.1h-1.1zM1726.3 227.2h1.0v1.0h-1.0zM1723.2 213.7h1.0v1.0h-1.0zM1729.3 223.8h0.8v0.8h-0.8zM1738.9 216.2h1.3v1.3h-1.3zM1735.2 217.1h0.9v0.9h-0.9zM1737.1 224.3h0.6v0.6h-0.6zM1740.1 208.7h1.1v1.1h-1.1zM1747.5 210.8h1.0v1.0h-1.0zM1735.0 217.0h0.6v0.6h-0.6zM1722.8 223.1h0.8v0.8h-0.8zM1734.8 216.9h0.8v0.8h-0.8zM1742.1 212.0h1.2v1.2h-1.2zM1738.3 217.3h0.7v0.7h-0.7zM1735.9 215.4h1.2v1.2h-1.2zM1733.6 229.4h0.9v0.9h-0.9zM1729.0 229.2h0.8v0.8h-0.8zM1734.6 215.8h1.2v1.2h-1.2zM1736.9 216.8h1.1v1.1h-1.1zM1734.7 219.5h0.8v0.8h-0.8zM1727.9 205.6h1.3v1.3h-1.3zM1744.1 216.6h1.0v1.0h-1.0zM1740.6 225.9h0.9v0.9h-0.9zM1726.9 226.9h0.7v0.7h-0.7zM1736.7 219.1h0.6v0.6h-0.6zM1725.3 210.9h0.6v0.6h-0.6zM1726.5 216.9h1.0v1.0h-1.0zM1728.1 221.2h0.5v0.5h-0.5zM1741.0 219.3h0.7v0.7h-0.7zM1735.2 213.1h1.2v1.2h-1.2zM1735.1 218.6h0.9v0.9h-0.9zM1731.0 220.4h1.1v1.1h-1.1zM1736.7 226.6h1.2v1.2h-1.2zM1727.8 219.2h1.2v1.2h-1.2zM1732.6 215.2h0.6v0.6h-0.6zM1739.5 219.6h0.6v0.6h-0.6zM1731.2 211.8h0.8v0.8h-0.8zM1721.8 216.0h0.7v0.7h-0.7zM1737.7 221.0h0.8v0.8h-0.8zM1743.6 211.5h0.9v0.9h-0.9zM1735.4 217.7h0.6v0.6h-0.6zM1740.4 209.2h0.6v0.6h-0.6zM1734.2 216.2h0.9v0.9h-0.9zM1734.1 218.5h1.1v1.1h-1.1zM1733.4 209.5h0.6v0.6h-0.6zM1731.8 211.2h1.0v1.0h-1.0zM1745.7 223.9h0.5v0.5h-0.5zM1736.0 223.0h0.7v0.7h-0.7zM1743.5 222.2h1.3v1.3h-1.3zM1732.8 220.7h1.0v1.0h-1.0zM1736.1 223.1h1.1v1.1h-1.1zM1732.6 218.1h0.6v0.6h-0.6zM1721.6 213.3h1.2v1.2h-1.2zM1741.1 221.4h0.9v0.9h-0.9zM1738.4 226.2h0.9v0.9h-0.9zM1736.7 212.7h1.2v1.2h-1.2zM1737.8 210.4h0.6v0.6h-0.6zM1732.8 217.2h1.1v1.1h-1.1zM1732.2 208.9h1.3v1.3h-1.3zM1744.9 219.9h1.1v1.1h-1.1zM1738.8 220.3h0.6v0.6h-0.6zM1725.9 211.8h0.8v0.8h-0.8zM1733.1 211.7h1.1v1.1h-1.1zM1732.7 230.5h0.9v0.9h-0.9zM1736.6 217.0h1.1v1.1h-1.1zM1741.2 210.0h0.6v0.6h-0.6zM1742.2 209.5h0.6v0.6h-0.6zM1727.8 223.7h0.5v0.5h-0.5zM1740.3 218.4h1.2v1.2h-1.2zM1740.0 216.9h1.2v1.2h-1.2zM1737.8 205.0h1.0v1.0h-1.0zM1744.2 215.2h1.3v1.3h-1.3zM1732.0 215.7h0.9v0.9h-0.9zM1729.8 217.6h0.8v0.8h-0.8zM1726.3 216.4h0.7v0.7h-0.7zM1733.7 224.4h0.9v0.9h-0.9zM1726.5 221.7h0.7v0.7h-0.7zM1730.7 216.1h1.1v1.1h-1.1zM1731.8 206.3h0.9v0.9h-0.9zM1735.1 230.1h0.9v0.9h-0.9zM1731.7 220.2h0.8v0.8h-0.8zM1732.0 205.7h0.9v0.9h-0.9zM1734.6 213.5h0.9v0.9h-0.9zM1732.0 220.8h0.8v0.8h-0.8zM1735.3 206.4h0.7v0.7h-0.7zM1736.1 228.2h1.0v1.0h-1.0zM1730.8 208.7h1.1v1.1h-1.1zM1734.8 218.1h0.8v0.8h-0.8zM1748.2 219.7h0.9v0.9h-0.9zM1728.5 205.1h1.1v1.1h-1.1zM1735.7 222.2h0.6v0.6h-0.6zM1738.0 206.8h0.9v0.9h-0.9zM1732.1 220.2h0.9v0.9h-0.9zM1732.0 204.7h1.2v1.2h-1.2zM1739.5 212.1h0.8v0.8h-0.8zM1729.6 229.6h0.7v0.7h-0.7zM1737.4 220.7h1.2v1.2h-1.2zM1738.1 212.9h1.2v1.2h-1.2zM1740.0 212.9h0.7v0.7h-0.7zM1735.8 211.3h0.6v0.6h-0.6zM1740.5 213.2h0.8v0.8h-0.8zM1731.6 214.7h0.5v0.5h-0.5zM1730.5 220.7h0.5v0.5h-0.5zM1727.4 224.9h0.8v0.8h-0.8zM1731.1 208.7h0.7v0.7h-0.7zM1744.7 218.3h1.0v1.0h-1.0zM1734.1 220.2h1.2v1.2h-1.2zM1738.2 215.0h1.0v1.0h-1.0zM1730.5 214.7h0.5v0.5h-0.5zM1730.7 225.4h1.0v1.0h-1.0zM1732.9 216.9h0.7v0.7h-0.7z"/><rect x="1747.5" y="231" width="5" height="5" fill="#ff8080" opacity="0.75"/><path d="M1747,232.5 L1752,232.5 M1749.5,230 L1749.5,235" stroke="#000" stroke-width="1.3"/><path d="M1757,205 L1760,211" stroke="#777" stroke-width="2"/><path d="M1786,230 L1786,235 L1780.5,235Z" fill="#ff8080"/><circle cx="1803" cy="205" r="1.4" fill="#111"/><circle cx="1796" cy="215" r="1.3" fill="#333"/><circle cx="1808" cy="215" r="1.2" fill="#222"/><circle cx="1800" cy="219" r="1.5" fill="#888"/><circle cx="1805" cy="222" r="1.2" fill="#666"/><circle cx="1792" cy="225" r="1.4" fill="#222"/><circle cx="1813" cy="218" r="1.3" fill="#333"/><circle cx="1806" cy="228" r="2" fill="#999"/><circle cx="1815" cy="224" r="1" fill="#444"/><path d="M1815,232.5 L1820,232.5 M1817.5,230 L1817.5,235" stroke="#000" stroke-width="1.3"/><circle cx="1833" cy="205" r="1.6" fill="#222"/><circle cx="1841" cy="207" r="1.2" fill="#444"/><circle cx="1828" cy="211" r="1.2" fill="#333"/><circle cx="1838" cy="212" r="1.8" fill="#222"/><circle cx="1846" cy="210" r="1.3" fill="#555"/><circle cx="1831" cy="217" r="1.6" fill="#111"/><circle cx="1840" cy="217" r="2.2" fill="#444"/><circle cx="1849" cy="216" r="1.5" fill="#333"/><circle cx="1826" cy="222" r="1.2" fill="#222"/><circle cx="1835" cy="223" r="2.0" fill="#333"/><circle cx="1843" cy="223" r="1.4" fill="#111"/><circle cx="1837" cy="228" r="2.2" fill="#555"/><circle cx="1846" cy="228" r="1.8" fill="#444"/><circle cx="1830" cy="227" r="1.1" fill="#222"/><circle cx="1851" cy="222" r="1.0" fill="#333"/><path d="M1849,232.5 L1854,232.5 M1851.5,230 L1851.5,235" stroke="#000" stroke-width="1.3"/><path fill="#222" d="M1861.5 210.6h1.4v1.4h-1.4zM1859.0 215.2h1.4v1.4h-1.4zM1861.5 219.8h1.4v1.4h-1.4zM1864.0 206.0h1.4v1.4h-1.4zM1866.5 210.6h1.4v1.4h-1.4zM1864.0 215.2h1.4v1.4h-1.4zM1866.5 219.8h1.4v1.4h-1.4zM1864.0 224.4h1.4v1.4h-1.4zM1866.5 229.0h1.4v1.4h-1.4zM1869.0 206.0h1.4v1.4h-1.4zM1871.5 210.6h1.4v1.4h-1.4zM1869.0 215.2h1.4v1.4h-1.4zM1871.5 219.8h1.4v1.4h-1.4zM1869.0 224.4h1.4v1.4h-1.4zM1871.5 229.0h1.4v1.4h-1.4zM1874.0 206.0h1.4v1.4h-1.4zM1876.5 210.6h1.4v1.4h-1.4zM1874.0 215.2h1.4v1.4h-1.4zM1876.5 219.8h1.4v1.4h-1.4zM1874.0 224.4h1.4v1.4h-1.4zM1876.5 229.0h1.4v1.4h-1.4zM1879.0 206.0h1.4v1.4h-1.4zM1881.5 210.6h1.4v1.4h-1.4zM1879.0 215.2h1.4v1.4h-1.4zM1881.5 219.8h1.4v1.4h-1.4zM1879.0 224.4h1.4v1.4h-1.4zM1884.0 215.2h1.4v1.4h-1.4zM1884.0 224.4h1.4v1.4h-1.4z"/><path fill="#000" opacity="1.0" d="M1731.6 260.4h0.8v0.8h-0.8zM1738.9 249.3h1.3v1.3h-1.3zM1735.8 264.9h0.7v0.7h-0.7zM1727.7 247.5h0.5v0.5h-0.5zM1738.6 239.9h0.7v0.7h-0.7zM1736.6 242.4h1.3v1.3h-1.3zM1743.1 254.9h0.7v0.7h-0.7zM1726.3 243.3h1.2v1.2h-1.2zM1726.7 249.4h1.1v1.1h-1.1zM1740.7 256.4h1.1v1.1h-1.1zM1722.0 257.1h0.6v0.6h-0.6zM1728.7 253.5h0.5v0.5h-0.5zM1738.5 254.3h0.8v0.8h-0.8zM1725.9 256.1h0.7v0.7h-0.7zM1732.0 242.4h1.3v1.3h-1.3zM1739.9 260.7h0.9v0.9h-0.9zM1726.0 261.4h0.7v0.7h-0.7zM1741.0 246.2h0.8v0.8h-0.8zM1727.1 245.1h0.7v0.7h-0.7zM1746.8 258.9h0.8v0.8h-0.8zM1743.5 259.5h0.9v0.9h-0.9zM1731.2 259.1h1.2v1.2h-1.2zM1730.2 259.7h1.3v1.3h-1.3zM1729.3 258.8h0.6v0.6h-0.6zM1729.0 242.3h0.9v0.9h-0.9zM1729.4 255.8h1.1v1.1h-1.1zM1722.7 255.4h0.8v0.8h-0.8zM1734.8 249.6h0.7v0.7h-0.7zM1746.2 249.2h1.0v1.0h-1.0zM1725.4 252.2h0.7v0.7h-0.7zM1740.2 262.0h1.1v1.1h-1.1zM1734.4 263.2h0.6v0.6h-0.6zM1730.6 248.2h0.9v0.9h-0.9zM1730.9 261.6h0.6v0.6h-0.6zM1724.1 253.1h0.6v0.6h-0.6zM1730.8 262.8h0.9v0.9h-0.9zM1725.8 243.7h1.0v1.0h-1.0zM1736.6 261.2h1.2v1.2h-1.2zM1723.9 247.1h0.8v0.8h-0.8zM1721.9 256.4h1.2v1.2h-1.2zM1732.4 248.3h1.0v1.0h-1.0zM1748.2 254.8h1.3v1.3h-1.3zM1734.0 244.8h1.2v1.2h-1.2zM1740.6 263.4h0.9v0.9h-0.9zM1748.1 253.3h0.9v0.9h-0.9zM1740.6 241.8h0.9v0.9h-0.9zM1739.1 247.2h1.2v1.2h-1.2zM1733.8 253.9h0.8v0.8h-0.8zM1738.4 253.5h1.0v1.0h-1.0zM1739.1 255.9h0.7v0.7h-0.7zM1732.6 265.2h1.2v1.2h-1.2zM1744.5 241.9h0.9v0.9h-0.9zM1737.1 244.9h1.2v1.2h-1.2zM1739.5 240.9h0.7v0.7h-0.7zM1746.3 259.3h0.9v0.9h-0.9zM1725.1 243.6h0.6v0.6h-0.6zM1732.0 242.9h1.1v1.1h-1.1zM1729.0 253.7h1.3v1.3h-1.3zM1732.6 263.9h1.2v1.2h-1.2zM1735.2 263.7h0.8v0.8h-0.8zM1736.1 258.4h1.3v1.3h-1.3zM1728.2 259.4h0.9v0.9h-0.9zM1747.0 254.0h1.1v1.1h-1.1zM1740.9 246.1h0.7v0.7h-0.7zM1728.1 261.8h1.0v1.0h-1.0zM1726.6 257.6h0.6v0.6h-0.6zM1743.4 247.3h0.9v0.9h-0.9zM1736.4 245.9h1.1v1.1h-1.1zM1727.4 262.1h0.6v0.6h-0.6zM1733.2 263.0h0.9v0.9h-0.9zM1727.4 259.4h0.7v0.7h-0.7zM1734.4 252.2h1.1v1.1h-1.1zM1734.7 264.8h0.9v0.9h-0.9zM1726.1 245.4h0.6v0.6h-0.6zM1736.3 244.5h1.2v1.2h-1.2zM1737.6 240.8h1.2v1.2h-1.2zM1724.4 256.5h1.3v1.3h-1.3zM1736.7 256.1h0.8v0.8h-0.8zM1729.6 251.7h0.7v0.7h-0.7zM1740.8 245.5h0.6v0.6h-0.6zM1739.4 261.7h0.7v0.7h-0.7zM1724.9 253.6h0.9v0.9h-0.9zM1722.2 251.7h0.5v0.5h-0.5zM1740.7 249.3h0.5v0.5h-0.5zM1736.2 241.5h0.9v0.9h-0.9zM1737.5 264.1h0.8v0.8h-0.8zM1734.0 245.4h1.0v1.0h-1.0zM1729.9 245.2h0.9v0.9h-0.9zM1745.3 256.5h1.1v1.1h-1.1zM1740.9 260.5h1.1v1.1h-1.1zM1745.3 259.6h1.2v1.2h-1.2zM1741.6 254.2h0.6v0.6h-0.6zM1734.9 256.1h0.9v0.9h-0.9zM1735.0 259.7h0.9v0.9h-0.9zM1726.4 261.0h1.1v1.1h-1.1zM1740.0 256.3h0.5v0.5h-0.5zM1732.8 256.0h1.1v1.1h-1.1zM1737.6 238.3h0.7v0.7h-0.7zM1746.9 254.8h0.8v0.8h-0.8zM1743.0 248.3h0.8v0.8h-0.8zM1747.2 258.0h0.9v0.9h-0.9zM1726.4 255.4h1.1v1.1h-1.1zM1739.7 243.6h0.7v0.7h-0.7zM1724.0 259.3h0.8v0.8h-0.8zM1729.4 243.1h0.9v0.9h-0.9zM1728.8 248.9h1.0v1.0h-1.0zM1737.6 249.0h0.8v0.8h-0.8zM1745.1 242.6h0.5v0.5h-0.5zM1727.2 244.0h1.2v1.2h-1.2zM1730.0 252.9h0.8v0.8h-0.8zM1732.2 240.4h0.7v0.7h-0.7zM1727.9 243.1h1.0v1.0h-1.0zM1744.2 253.3h0.8v0.8h-0.8zM1728.3 247.3h0.6v0.6h-0.6zM1731.4 245.4h1.1v1.1h-1.1zM1731.5 261.7h1.1v1.1h-1.1zM1744.0 259.9h0.6v0.6h-0.6zM1737.0 251.1h1.1v1.1h-1.1zM1731.0 256.4h0.8v0.8h-0.8zM1726.0 251.9h0.6v0.6h-0.6zM1727.4 250.9h1.3v1.3h-1.3zM1728.1 258.2h0.7v0.7h-0.7zM1742.8 250.5h1.0v1.0h-1.0zM1739.4 244.4h1.1v1.1h-1.1zM1734.2 256.6h0.6v0.6h-0.6zM1722.6 256.1h0.7v0.7h-0.7zM1723.6 256.5h0.7v0.7h-0.7zM1740.8 260.3h0.8v0.8h-0.8zM1747.3 247.0h0.7v0.7h-0.7zM1726.6 248.6h0.5v0.5h-0.5zM1722.4 256.6h0.8v0.8h-0.8zM1724.9 245.9h0.6v0.6h-0.6zM1739.1 249.9h0.8v0.8h-0.8zM1734.6 250.1h0.8v0.8h-0.8zM1741.7 258.9h0.5v0.5h-0.5zM1738.8 257.4h0.6v0.6h-0.6zM1740.2 255.3h0.9v0.9h-0.9zM1743.3 261.6h0.8v0.8h-0.8zM1734.9 258.9h1.2v1.2h-1.2zM1746.5 255.5h0.6v0.6h-0.6zM1743.4 248.9h1.0v1.0h-1.0zM1737.9 248.6h0.6v0.6h-0.6zM1731.3 241.9h1.1v1.1h-1.1zM1733.3 261.7h0.7v0.7h-0.7zM1728.1 254.9h1.0v1.0h-1.0zM1732.8 259.0h1.0v1.0h-1.0zM1745.8 258.4h0.9v0.9h-0.9zM1735.6 256.7h0.9v0.9h-0.9zM1723.1 251.7h0.8v0.8h-0.8zM1723.7 258.9h0.7v0.7h-0.7zM1748.1 250.4h1.3v1.3h-1.3zM1741.7 249.5h1.2v1.2h-1.2zM1730.2 247.9h1.3v1.3h-1.3zM1727.4 241.9h1.0v1.0h-1.0zM1746.4 258.2h0.7v0.7h-0.7zM1734.4 263.0h0.7v0.7h-0.7zM1723.5 254.8h0.6v0.6h-0.6zM1732.6 248.2h0.9v0.9h-0.9zM1728.1 242.6h0.6v0.6h-0.6zM1740.0 264.8h0.8v0.8h-0.8zM1727.4 255.9h1.1v1.1h-1.1zM1734.3 240.7h0.8v0.8h-0.8zM1725.9 247.7h0.7v0.7h-0.7zM1748.1 247.7h1.1v1.1h-1.1zM1744.5 251.6h1.2v1.2h-1.2zM1735.7 264.0h1.1v1.1h-1.1zM1746.8 247.2h1.2v1.2h-1.2zM1733.6 264.3h0.9v0.9h-0.9zM1731.7 259.9h1.1v1.1h-1.1zM1742.1 241.3h1.0v1.0h-1.0zM1737.7 256.8h1.0v1.0h-1.0zM1736.9 259.9h0.6v0.6h-0.6zM1741.7 261.8h0.7v0.7h-0.7zM1739.6 245.4h1.2v1.2h-1.2zM1732.6 258.8h0.8v0.8h-0.8zM1744.2 252.7h0.8v0.8h-0.8zM1748.0 253.0h0.8v0.8h-0.8zM1748.7 252.0h0.7v0.7h-0.7zM1735.0 254.2h0.6v0.6h-0.6zM1732.3 241.7h0.9v0.9h-0.9zM1735.2 259.5h1.3v1.3h-1.3zM1725.3 262.0h1.2v1.2h-1.2zM1744.1 261.1h0.5v0.5h-0.5zM1731.9 239.8h1.1v1.1h-1.1zM1723.0 248.1h0.6v0.6h-0.6zM1728.0 250.2h0.8v0.8h-0.8zM1739.2 263.0h1.0v1.0h-1.0zM1737.0 241.1h1.0v1.0h-1.0zM1746.1 246.1h1.0v1.0h-1.0zM1728.8 264.0h0.8v0.8h-0.8zM1741.5 256.8h1.1v1.1h-1.1zM1745.2 247.3h1.0v1.0h-1.0zM1746.4 247.3h0.9v0.9h-0.9zM1723.1 254.9h0.8v0.8h-0.8zM1743.5 259.0h1.1v1.1h-1.1zM1735.1 263.6h1.2v1.2h-1.2zM1738.6 255.7h0.9v0.9h-0.9zM1728.1 263.8h1.3v1.3h-1.3zM1723.3 256.2h1.0v1.0h-1.0zM1741.4 264.2h0.7v0.7h-0.7zM1743.4 256.3h0.5v0.5h-0.5zM1726.1 253.1h1.3v1.3h-1.3zM1723.9 258.7h1.1v1.1h-1.1zM1729.2 248.5h0.8v0.8h-0.8zM1726.2 252.5h1.0v1.0h-1.0zM1727.0 251.7h1.0v1.0h-1.0zM1741.3 251.9h0.8v0.8h-0.8zM1739.3 252.3h0.6v0.6h-0.6zM1723.7 258.0h1.1v1.1h-1.1zM1747.5 249.3h1.0v1.0h-1.0zM1733.6 251.2h0.8v0.8h-0.8zM1734.2 263.0h0.6v0.6h-0.6zM1726.7 249.7h0.9v0.9h-0.9zM1731.3 254.5h1.1v1.1h-1.1zM1738.4 241.7h0.6v0.6h-0.6zM1724.4 244.4h1.3v1.3h-1.3zM1735.2 249.0h1.2v1.2h-1.2zM1731.3 245.7h1.2v1.2h-1.2zM1741.1 240.2h0.7v0.7h-0.7zM1727.4 248.0h0.7v0.7h-0.7zM1735.8 241.0h0.8v0.8h-0.8zM1722.0 248.4h1.0v1.0h-1.0zM1744.0 246.6h1.3v1.3h-1.3zM1744.3 253.7h0.9v0.9h-0.9zM1733.0 238.4h1.0v1.0h-1.0zM1724.0 253.5h0.9v0.9h-0.9zM1731.2 238.9h0.5v0.5h-0.5zM1729.4 263.8h0.6v0.6h-0.6zM1735.6 249.6h1.0v1.0h-1.0zM1737.1 245.5h0.8v0.8h-0.8zM1736.7 263.6h0.9v0.9h-0.9zM1728.7 247.1h1.0v1.0h-1.0zM1746.9 248.5h1.3v1.3h-1.3zM1735.2 262.1h0.8v0.8h-0.8zM1727.9 262.3h0.7v0.7h-0.7zM1723.5 247.6h1.2v1.2h-1.2zM1742.2 252.9h0.9v0.9h-0.9zM1740.2 249.8h1.2v1.2h-1.2zM1726.7 258.2h1.2v1.2h-1.2zM1742.4 255.2h0.6v0.6h-0.6zM1740.1 257.7h1.1v1.1h-1.1zM1730.7 249.6h1.1v1.1h-1.1zM1729.7 251.8h1.2v1.2h-1.2zM1737.8 246.1h1.2v1.2h-1.2zM1737.5 245.8h0.5v0.5h-0.5zM1743.6 242.6h0.6v0.6h-0.6zM1736.3 239.8h1.0v1.0h-1.0zM1741.9 239.9h0.8v0.8h-0.8zM1741.8 240.4h0.8v0.8h-0.8zM1730.3 241.4h1.2v1.2h-1.2zM1728.3 249.0h0.7v0.7h-0.7zM1730.0 250.6h1.2v1.2h-1.2zM1740.3 247.6h1.1v1.1h-1.1zM1732.7 247.7h1.1v1.1h-1.1zM1735.8 244.3h0.6v0.6h-0.6zM1732.6 264.1h0.9v0.9h-0.9zM1737.2 246.9h0.6v0.6h-0.6zM1727.3 262.7h0.6v0.6h-0.6zM1745.9 257.4h0.6v0.6h-0.6zM1733.0 248.5h0.7v0.7h-0.7zM1728.2 240.8h0.8v0.8h-0.8zM1732.7 252.8h0.8v0.8h-0.8zM1735.6 264.4h1.1v1.1h-1.1zM1737.2 242.0h1.1v1.1h-1.1zM1741.1 258.2h0.7v0.7h-0.7zM1732.6 263.8h0.7v0.7h-0.7zM1731.6 258.6h1.2v1.2h-1.2zM1728.7 244.6h0.8v0.8h-0.8zM1747.0 245.6h0.9v0.9h-0.9zM1723.1 246.7h0.7v0.7h-0.7zM1734.8 256.5h0.9v0.9h-0.9zM1735.6 246.5h0.9v0.9h-0.9zM1744.7 251.4h0.8v0.8h-0.8zM1742.0 240.8h0.8v0.8h-0.8zM1743.0 259.8h1.1v1.1h-1.1zM1745.1 246.7h0.8v0.8h-0.8zM1727.5 251.3h0.9v0.9h-0.9zM1721.9 254.7h1.2v1.2h-1.2zM1743.7 247.7h1.3v1.3h-1.3zM1743.6 262.3h1.0v1.0h-1.0zM1741.3 245.5h1.3v1.3h-1.3zM1747.7 254.0h1.2v1.2h-1.2zM1726.0 261.1h0.7v0.7h-0.7zM1735.2 242.4h0.8v0.8h-0.8zM1739.1 263.8h1.1v1.1h-1.1zM1746.7 259.3h0.7v0.7h-0.7zM1728.6 258.4h1.0v1.0h-1.0zM1745.5 243.3h1.0v1.0h-1.0zM1732.0 255.4h0.6v0.6h-0.6zM1724.4 250.7h0.9v0.9h-0.9zM1743.9 251.0h0.8v0.8h-0.8zM1729.9 254.9h1.2v1.2h-1.2zM1726.3 246.4h0.8v0.8h-0.8zM1735.0 259.9h0.9v0.9h-0.9zM1721.9 256.6h1.0v1.0h-1.0zM1735.9 255.1h0.6v0.6h-0.6zM1728.0 262.2h1.2v1.2h-1.2zM1736.1 264.3h0.9v0.9h-0.9zM1725.1 249.6h0.6v0.6h-0.6zM1745.5 256.6h1.1v1.1h-1.1zM1725.2 261.2h1.2v1.2h-1.2zM1733.8 255.4h0.9v0.9h-0.9zM1731.2 246.5h0.6v0.6h-0.6zM1732.4 252.2h1.1v1.1h-1.1zM1729.8 246.8h0.9v0.9h-0.9zM1735.6 258.0h0.7v0.7h-0.7zM1738.8 243.4h1.1v1.1h-1.1zM1727.8 262.3h1.0v1.0h-1.0zM1730.0 244.8h1.0v1.0h-1.0zM1740.0 264.9h1.0v1.0h-1.0zM1724.0 249.7h0.6v0.6h-0.6zM1731.6 257.8h1.2v1.2h-1.2zM1744.3 252.8h1.2v1.2h-1.2zM1737.4 240.4h0.8v0.8h-0.8zM1736.3 263.7h0.8v0.8h-0.8zM1733.6 243.8h1.1v1.1h-1.1zM1723.7 246.4h1.3v1.3h-1.3zM1724.9 261.6h0.5v0.5h-0.5zM1736.7 250.3h0.9v0.9h-0.9zM1725.6 259.9h0.8v0.8h-0.8zM1738.2 264.0h0.9v0.9h-0.9zM1735.3 242.2h0.5v0.5h-0.5zM1735.9 245.5h0.9v0.9h-0.9zM1742.1 252.0h1.0v1.0h-1.0zM1736.0 240.9h0.9v0.9h-0.9zM1733.8 240.6h0.7v0.7h-0.7zM1724.4 249.6h1.1v1.1h-1.1zM1737.5 259.4h0.8v0.8h-0.8zM1741.8 256.7h1.1v1.1h-1.1zM1729.9 249.3h1.1v1.1h-1.1zM1744.0 260.1h0.6v0.6h-0.6zM1740.8 256.0h0.9v0.9h-0.9zM1733.3 265.1h1.2v1.2h-1.2zM1732.5 263.9h1.1v1.1h-1.1zM1728.4 249.4h1.3v1.3h-1.3zM1736.5 251.6h0.8v0.8h-0.8zM1732.3 257.6h0.9v0.9h-0.9zM1736.7 250.7h1.2v1.2h-1.2zM1734.4 253.5h1.2v1.2h-1.2zM1734.1 258.4h0.6v0.6h-0.6zM1731.7 255.6h0.7v0.7h-0.7zM1735.0 262.6h0.9v0.9h-0.9zM1731.6 261.6h1.1v1.1h-1.1zM1733.7 243.9h1.2v1.2h-1.2zM1737.7 241.9h0.9v0.9h-0.9zM1732.5 256.5h1.2v1.2h-1.2zM1731.6 249.2h1.2v1.2h-1.2zM1736.9 250.3h1.1v1.1h-1.1zM1735.8 262.2h1.2v1.2h-1.2zM1729.2 260.0h1.0v1.0h-1.0zM1738.9 262.4h0.8v0.8h-0.8zM1741.0 251.3h1.1v1.1h-1.1zM1742.1 253.9h0.6v0.6h-0.6zM1741.0 260.2h0.7v0.7h-0.7zM1736.2 247.8h1.0v1.0h-1.0zM1738.2 248.2h0.7v0.7h-0.7zM1735.9 242.4h1.2v1.2h-1.2zM1730.4 259.5h1.3v1.3h-1.3zM1727.3 263.4h1.2v1.2h-1.2zM1738.2 261.8h1.3v1.3h-1.3zM1744.5 260.7h1.1v1.1h-1.1zM1735.0 241.1h0.6v0.6h-0.6zM1739.3 250.8h1.1v1.1h-1.1z"/><path d="M1747,266.5 L1752,266.5 M1749.5,264 L1749.5,269" stroke="#000" stroke-width="1.3"/><circle cx="1770" cy="252" r="13.5" fill="none" stroke="#000" stroke-width="1.1"/><g fill="none" stroke="#000" stroke-width="1.1"><circle cx="1758.9" cy="247.1" r="2.7"/><circle cx="1763.9" cy="248.5" r="2.8"/><circle cx="1760.1" cy="252.3" r="2.6"/><circle cx="1763.3" cy="255.4" r="2.7"/><circle cx="1765.0" cy="242.9" r="2.1"/><circle cx="1768.5" cy="248.2" r="2.2"/><circle cx="1764.8" cy="252.6" r="2.5"/><circle cx="1767.8" cy="255.6" r="2.3"/><circle cx="1766.1" cy="259.6" r="2.3"/><circle cx="1771.7" cy="240.1" r="2.7"/><circle cx="1770.4" cy="242.9" r="2.6"/><circle cx="1772.3" cy="247.8" r="2.1"/><circle cx="1770.0" cy="252.5" r="2.1"/><circle cx="1772.9" cy="256.1" r="2.2"/><circle cx="1769.6" cy="260.3" r="2.5"/><circle cx="1775.4" cy="243.1" r="2.0"/><circle cx="1776.6" cy="247.5" r="2.1"/><circle cx="1774.5" cy="251.3" r="2.7"/><circle cx="1776.9" cy="256.8" r="2.6"/><circle cx="1775.0" cy="260.8" r="2.2"/><circle cx="1781.3" cy="248.3" r="2.6"/><circle cx="1780.0" cy="251.4" r="2.2"/><circle cx="1780.9" cy="256.6" r="2.6"/></g><path d="M1781,266.5 L1786,266.5 M1783.5,264 L1783.5,269" stroke="#000" stroke-width="1.3"/><path fill="#000" opacity="1.0" d="M1797.1 255.2h1.3v1.3h-1.3zM1805.0 252.6h1.1v1.1h-1.1zM1797.2 256.9h1.0v1.0h-1.0zM1800.0 256.1h0.5v0.5h-0.5zM1813.5 243.1h0.7v0.7h-0.7zM1797.1 253.4h0.6v0.6h-0.6zM1813.8 244.7h0.7v0.7h-0.7zM1803.7 262.5h1.1v1.1h-1.1zM1796.2 253.4h0.7v0.7h-0.7zM1807.8 240.6h1.2v1.2h-1.2zM1811.7 258.3h1.3v1.3h-1.3zM1802.1 244.0h0.6v0.6h-0.6zM1814.8 256.0h0.6v0.6h-0.6zM1808.0 242.5h0.9v0.9h-0.9zM1814.4 244.1h1.0v1.0h-1.0zM1812.3 257.5h0.8v0.8h-0.8zM1804.0 264.4h1.1v1.1h-1.1zM1808.2 255.7h0.8v0.8h-0.8zM1797.6 249.1h0.9v0.9h-0.9zM1806.0 247.7h1.1v1.1h-1.1zM1797.4 263.0h1.3v1.3h-1.3zM1799.2 260.5h0.6v0.6h-0.6zM1795.1 257.2h1.0v1.0h-1.0zM1803.0 253.4h0.6v0.6h-0.6zM1799.5 250.3h0.8v0.8h-0.8zM1794.3 243.7h0.9v0.9h-0.9zM1803.7 261.4h0.7v0.7h-0.7zM1804.9 247.8h0.7v0.7h-0.7zM1791.8 256.6h0.6v0.6h-0.6zM1805.5 255.6h0.7v0.7h-0.7zM1800.0 258.5h1.1v1.1h-1.1zM1796.6 256.7h0.8v0.8h-0.8zM1806.0 239.9h0.8v0.8h-0.8zM1809.4 249.3h1.3v1.3h-1.3zM1793.0 250.4h0.8v0.8h-0.8zM1803.4 255.9h1.2v1.2h-1.2zM1796.8 260.1h0.9v0.9h-0.9zM1798.6 251.2h0.7v0.7h-0.7zM1798.3 260.8h0.9v0.9h-0.9zM1815.4 252.2h0.9v0.9h-0.9zM1809.7 254.4h0.7v0.7h-0.7zM1808.3 243.9h0.8v0.8h-0.8zM1804.1 258.2h0.7v0.7h-0.7zM1797.1 261.3h1.1v1.1h-1.1zM1799.8 240.6h1.0v1.0h-1.0zM1805.6 253.3h0.6v0.6h-0.6zM1803.5 260.9h1.2v1.2h-1.2zM1796.8 248.0h0.7v0.7h-0.7zM1815.7 250.7h0.8v0.8h-0.8zM1817.3 255.7h0.7v0.7h-0.7zM1806.2 249.1h1.0v1.0h-1.0zM1795.9 261.5h0.7v0.7h-0.7zM1808.3 254.9h1.1v1.1h-1.1zM1814.6 250.7h1.0v1.0h-1.0zM1802.7 257.8h0.6v0.6h-0.6zM1806.1 251.8h1.0v1.0h-1.0zM1801.0 255.8h0.9v0.9h-0.9zM1809.5 249.6h0.6v0.6h-0.6zM1796.5 244.7h0.9v0.9h-0.9zM1809.5 262.8h0.6v0.6h-0.6zM1806.7 256.9h0.9v0.9h-0.9zM1794.3 253.3h1.1v1.1h-1.1zM1811.0 246.9h0.6v0.6h-0.6zM1804.6 251.0h0.8v0.8h-0.8zM1810.4 259.5h1.1v1.1h-1.1zM1808.6 256.5h1.2v1.2h-1.2zM1802.6 248.8h1.1v1.1h-1.1zM1806.2 244.7h0.6v0.6h-0.6zM1800.2 246.5h0.6v0.6h-0.6zM1808.1 258.5h0.6v0.6h-0.6zM1796.6 258.0h0.9v0.9h-0.9zM1793.9 258.5h0.6v0.6h-0.6zM1797.5 262.9h1.2v1.2h-1.2zM1814.5 246.7h0.9v0.9h-0.9zM1806.3 243.0h0.6v0.6h-0.6zM1803.9 255.2h1.2v1.2h-1.2zM1800.4 258.8h0.9v0.9h-0.9zM1813.2 258.2h1.1v1.1h-1.1zM1807.7 240.5h0.8v0.8h-0.8zM1811.3 260.7h1.1v1.1h-1.1zM1798.9 256.9h0.6v0.6h-0.6zM1808.3 244.9h1.1v1.1h-1.1zM1800.2 257.6h0.9v0.9h-0.9zM1803.6 239.9h0.8v0.8h-0.8zM1801.2 244.9h1.2v1.2h-1.2zM1804.6 242.9h0.8v0.8h-0.8zM1802.1 263.9h1.1v1.1h-1.1zM1802.9 254.8h0.7v0.7h-0.7zM1806.0 251.6h1.1v1.1h-1.1zM1794.3 250.4h0.9v0.9h-0.9zM1795.7 256.9h0.6v0.6h-0.6zM1807.1 250.4h0.6v0.6h-0.6zM1799.0 243.2h1.1v1.1h-1.1zM1799.3 240.3h0.6v0.6h-0.6zM1809.9 252.4h1.1v1.1h-1.1zM1809.5 259.3h1.1v1.1h-1.1zM1809.3 259.4h1.2v1.2h-1.2zM1803.9 244.5h0.9v0.9h-0.9zM1801.6 264.5h1.1v1.1h-1.1zM1801.1 246.2h1.1v1.1h-1.1zM1791.8 252.9h0.8v0.8h-0.8zM1812.2 245.0h0.9v0.9h-0.9zM1792.7 247.6h0.9v0.9h-0.9zM1804.7 251.8h1.2v1.2h-1.2zM1802.0 243.7h1.2v1.2h-1.2zM1808.3 257.5h1.1v1.1h-1.1zM1807.4 245.6h1.3v1.3h-1.3zM1802.7 250.4h0.6v0.6h-0.6zM1812.9 256.3h0.8v0.8h-0.8zM1803.4 260.0h0.6v0.6h-0.6zM1814.6 245.7h1.0v1.0h-1.0zM1797.5 254.2h1.0v1.0h-1.0zM1796.1 262.5h1.3v1.3h-1.3zM1802.2 240.5h0.6v0.6h-0.6zM1809.3 256.8h0.6v0.6h-0.6zM1791.7 258.0h1.2v1.2h-1.2zM1809.5 250.7h0.7v0.7h-0.7zM1810.4 252.9h0.6v0.6h-0.6zM1797.3 250.9h1.0v1.0h-1.0zM1794.5 248.4h0.8v0.8h-0.8zM1802.9 241.6h1.1v1.1h-1.1zM1795.3 253.5h0.7v0.7h-0.7zM1812.6 254.0h1.0v1.0h-1.0zM1809.0 262.9h1.2v1.2h-1.2zM1811.5 242.8h0.9v0.9h-0.9zM1806.9 257.3h1.1v1.1h-1.1zM1807.7 251.7h0.5v0.5h-0.5zM1799.5 257.5h1.0v1.0h-1.0zM1813.6 259.6h0.8v0.8h-0.8zM1810.0 248.4h0.8v0.8h-0.8zM1810.2 263.4h1.0v1.0h-1.0zM1805.2 249.8h0.9v0.9h-0.9zM1802.5 239.2h1.2v1.2h-1.2zM1810.2 256.4h1.3v1.3h-1.3zM1790.7 249.2h0.7v0.7h-0.7zM1817.4 254.0h0.7v0.7h-0.7zM1797.0 249.4h1.0v1.0h-1.0zM1816.4 246.9h1.2v1.2h-1.2zM1803.5 263.5h0.5v0.5h-0.5zM1792.3 258.3h0.7v0.7h-0.7zM1797.2 259.0h0.7v0.7h-0.7zM1801.2 242.3h0.6v0.6h-0.6zM1806.5 250.7h1.1v1.1h-1.1zM1801.5 255.3h0.6v0.6h-0.6zM1816.2 251.8h0.9v0.9h-0.9zM1807.8 239.7h1.2v1.2h-1.2zM1797.7 250.8h0.9v0.9h-0.9zM1815.5 250.7h1.0v1.0h-1.0zM1808.5 245.7h1.0v1.0h-1.0zM1807.1 248.0h1.2v1.2h-1.2zM1813.5 253.4h1.0v1.0h-1.0zM1812.1 261.8h0.9v0.9h-0.9zM1807.3 259.0h1.0v1.0h-1.0zM1803.6 252.2h0.6v0.6h-0.6zM1803.0 248.2h0.7v0.7h-0.7zM1808.5 240.9h1.2v1.2h-1.2zM1804.3 252.5h1.1v1.1h-1.1zM1797.8 247.9h0.5v0.5h-0.5zM1798.6 254.3h1.0v1.0h-1.0zM1809.4 251.4h0.6v0.6h-0.6zM1802.7 248.8h0.7v0.7h-0.7zM1791.1 256.8h0.8v0.8h-0.8zM1800.4 259.6h0.6v0.6h-0.6zM1794.8 258.0h0.8v0.8h-0.8zM1805.5 247.5h0.6v0.6h-0.6zM1797.9 246.2h1.2v1.2h-1.2zM1813.3 258.7h1.0v1.0h-1.0zM1801.2 254.8h1.0v1.0h-1.0zM1804.5 243.7h0.9v0.9h-0.9zM1799.9 243.1h0.8v0.8h-0.8zM1807.4 259.5h0.9v0.9h-0.9zM1815.1 244.2h1.0v1.0h-1.0zM1801.3 256.6h1.0v1.0h-1.0zM1803.6 246.4h1.1v1.1h-1.1zM1812.0 252.0h1.2v1.2h-1.2zM1794.0 255.9h1.2v1.2h-1.2zM1806.1 258.6h1.3v1.3h-1.3zM1810.3 254.5h0.9v0.9h-0.9zM1803.7 242.1h1.2v1.2h-1.2zM1803.9 251.8h0.6v0.6h-0.6zM1812.2 253.8h0.5v0.5h-0.5zM1793.5 250.4h0.7v0.7h-0.7zM1809.1 246.0h1.3v1.3h-1.3zM1797.4 259.6h0.9v0.9h-0.9zM1803.0 263.2h0.5v0.5h-0.5zM1804.0 258.6h1.2v1.2h-1.2zM1802.1 252.0h0.8v0.8h-0.8zM1794.5 244.7h0.6v0.6h-0.6zM1805.5 244.7h0.9v0.9h-0.9zM1796.5 255.8h1.3v1.3h-1.3zM1815.6 246.0h1.1v1.1h-1.1zM1802.7 248.2h0.5v0.5h-0.5zM1809.4 243.0h1.0v1.0h-1.0zM1801.6 257.4h1.2v1.2h-1.2zM1802.7 251.8h0.8v0.8h-0.8zM1802.4 254.1h1.3v1.3h-1.3zM1814.1 245.4h0.5v0.5h-0.5zM1800.7 253.7h1.1v1.1h-1.1zM1808.4 241.5h1.1v1.1h-1.1zM1804.8 252.7h0.6v0.6h-0.6zM1810.9 242.3h0.9v0.9h-0.9zM1805.2 263.8h0.6v0.6h-0.6zM1803.9 252.3h1.3v1.3h-1.3zM1793.7 257.7h1.1v1.1h-1.1zM1791.9 245.7h1.1v1.1h-1.1zM1816.3 246.4h0.6v0.6h-0.6zM1804.0 246.7h0.8v0.8h-0.8zM1796.4 262.8h0.6v0.6h-0.6zM1800.3 253.5h1.3v1.3h-1.3zM1792.7 252.3h0.9v0.9h-0.9zM1804.8 245.3h0.8v0.8h-0.8zM1803.6 241.5h1.2v1.2h-1.2zM1799.4 263.0h1.1v1.1h-1.1zM1796.7 248.6h1.0v1.0h-1.0zM1807.1 253.5h0.8v0.8h-0.8zM1805.6 253.5h1.1v1.1h-1.1zM1802.8 242.3h0.7v0.7h-0.7zM1801.8 240.6h1.0v1.0h-1.0zM1805.4 261.1h0.8v0.8h-0.8zM1803.5 256.1h1.2v1.2h-1.2zM1795.0 242.8h0.7v0.7h-0.7zM1803.2 260.6h0.6v0.6h-0.6zM1800.9 260.5h0.9v0.9h-0.9zM1812.5 247.0h1.0v1.0h-1.0zM1793.6 246.3h0.8v0.8h-0.8zM1817.8 252.0h1.1v1.1h-1.1zM1806.6 254.5h0.7v0.7h-0.7zM1801.7 248.8h0.5v0.5h-0.5zM1803.3 252.0h0.7v0.7h-0.7zM1800.0 255.4h0.5v0.5h-0.5zM1803.6 257.6h0.8v0.8h-0.8zM1797.5 255.6h0.8v0.8h-0.8zM1816.5 253.4h1.1v1.1h-1.1zM1803.6 252.0h0.7v0.7h-0.7zM1811.1 247.2h0.7v0.7h-0.7zM1809.6 241.0h0.6v0.6h-0.6zM1794.1 251.9h0.6v0.6h-0.6zM1799.6 260.8h1.0v1.0h-1.0zM1796.7 244.9h0.8v0.8h-0.8zM1805.1 252.5h1.2v1.2h-1.2zM1812.7 242.8h0.6v0.6h-0.6zM1804.6 247.5h0.8v0.8h-0.8zM1807.9 263.3h1.2v1.2h-1.2zM1807.9 245.7h1.2v1.2h-1.2zM1803.4 261.3h1.0v1.0h-1.0zM1804.8 259.3h0.6v0.6h-0.6zM1805.5 247.5h0.6v0.6h-0.6zM1802.1 261.8h1.0v1.0h-1.0zM1791.4 250.2h1.1v1.1h-1.1zM1806.4 260.6h0.7v0.7h-0.7zM1804.2 256.1h0.6v0.6h-0.6zM1796.3 261.8h1.0v1.0h-1.0zM1808.8 254.7h1.0v1.0h-1.0zM1802.4 251.7h0.6v0.6h-0.6zM1794.6 248.1h0.6v0.6h-0.6zM1804.8 246.5h1.0v1.0h-1.0zM1796.8 250.7h1.3v1.3h-1.3zM1797.4 256.7h0.9v0.9h-0.9zM1811.4 241.1h1.1v1.1h-1.1zM1792.9 249.4h1.0v1.0h-1.0zM1817.3 248.8h1.1v1.1h-1.1zM1806.1 261.1h0.9v0.9h-0.9zM1805.4 263.1h0.7v0.7h-0.7zM1801.7 243.8h0.9v0.9h-0.9zM1800.9 241.7h1.3v1.3h-1.3zM1816.2 251.9h0.7v0.7h-0.7zM1799.5 244.5h1.2v1.2h-1.2zM1796.9 254.3h0.5v0.5h-0.5zM1794.6 253.7h0.8v0.8h-0.8zM1811.1 257.2h0.6v0.6h-0.6zM1808.1 259.0h0.8v0.8h-0.8zM1794.4 252.0h0.8v0.8h-0.8zM1804.9 252.9h1.0v1.0h-1.0zM1810.4 250.9h0.8v0.8h-0.8zM1799.1 261.9h0.9v0.9h-0.9zM1804.2 251.5h0.6v0.6h-0.6zM1806.1 258.9h0.8v0.8h-0.8zM1793.7 260.4h0.9v0.9h-0.9zM1791.8 246.2h1.0v1.0h-1.0zM1793.6 245.5h0.8v0.8h-0.8zM1817.3 254.8h0.9v0.9h-0.9zM1801.6 250.7h1.1v1.1h-1.1zM1796.5 259.1h0.7v0.7h-0.7zM1810.7 248.5h0.7v0.7h-0.7zM1808.5 248.7h0.7v0.7h-0.7zM1790.2 253.1h0.6v0.6h-0.6zM1807.0 263.0h0.6v0.6h-0.6zM1793.6 257.8h1.1v1.1h-1.1zM1805.0 248.5h1.2v1.2h-1.2zM1796.3 261.0h0.9v0.9h-0.9zM1811.0 246.7h0.7v0.7h-0.7zM1809.4 258.9h0.6v0.6h-0.6zM1810.6 262.3h1.0v1.0h-1.0zM1806.9 248.8h0.9v0.9h-0.9zM1800.4 252.7h0.7v0.7h-0.7zM1814.2 247.0h0.9v0.9h-0.9zM1794.1 244.5h1.3v1.3h-1.3zM1802.1 250.8h1.2v1.2h-1.2zM1807.0 256.7h0.6v0.6h-0.6zM1793.9 251.3h0.9v0.9h-0.9zM1799.8 252.8h1.1v1.1h-1.1zM1797.3 250.5h1.2v1.2h-1.2zM1816.4 247.4h1.3v1.3h-1.3zM1811.2 255.1h0.9v0.9h-0.9zM1803.5 262.9h1.2v1.2h-1.2zM1810.0 258.6h1.3v1.3h-1.3zM1810.6 246.8h0.6v0.6h-0.6zM1794.9 254.4h1.1v1.1h-1.1zM1806.5 257.6h1.3v1.3h-1.3zM1814.4 252.7h0.6v0.6h-0.6zM1804.0 244.2h1.2v1.2h-1.2zM1806.2 263.9h0.7v0.7h-0.7zM1807.1 252.9h0.6v0.6h-0.6zM1793.5 260.2h0.8v0.8h-0.8zM1803.6 250.3h0.9v0.9h-0.9zM1800.6 251.2h1.0v1.0h-1.0zM1797.2 254.2h1.2v1.2h-1.2zM1802.6 248.6h0.6v0.6h-0.6zM1810.0 253.9h1.0v1.0h-1.0zM1817.5 249.5h1.2v1.2h-1.2zM1812.6 260.0h1.1v1.1h-1.1zM1790.2 254.2h1.0v1.0h-1.0zM1808.1 255.5h0.6v0.6h-0.6zM1795.9 245.7h1.2v1.2h-1.2zM1804.9 252.1h1.3v1.3h-1.3zM1803.5 257.8h1.2v1.2h-1.2zM1813.3 259.3h1.2v1.2h-1.2zM1794.4 248.3h0.5v0.5h-0.5zM1795.8 246.0h1.1v1.1h-1.1zM1800.2 251.6h0.7v0.7h-0.7zM1802.2 249.7h0.6v0.6h-0.6zM1803.9 263.3h0.9v0.9h-0.9zM1795.5 262.0h1.0v1.0h-1.0zM1804.7 261.2h1.2v1.2h-1.2zM1798.2 257.8h1.0v1.0h-1.0zM1814.7 251.2h0.7v0.7h-0.7zM1797.8 248.8h0.9v0.9h-0.9zM1803.7 250.8h0.9v0.9h-0.9zM1800.0 260.8h1.2v1.2h-1.2zM1793.6 254.0h0.7v0.7h-0.7zM1803.6 260.7h0.9v0.9h-0.9zM1806.0 262.9h0.9v0.9h-0.9zM1800.2 256.5h1.2v1.2h-1.2zM1815.0 244.8h0.7v0.7h-0.7zM1813.6 256.3h0.5v0.5h-0.5zM1810.9 243.9h0.8v0.8h-0.8zM1793.6 255.7h0.6v0.6h-0.6zM1796.0 260.4h1.0v1.0h-1.0zM1800.9 250.3h0.7v0.7h-0.7zM1803.9 253.6h1.0v1.0h-1.0zM1792.0 246.5h0.9v0.9h-0.9zM1811.7 248.0h0.9v0.9h-0.9zM1802.3 260.0h1.2v1.2h-1.2zM1803.6 252.0h0.8v0.8h-0.8zM1807.4 261.3h0.9v0.9h-0.9zM1790.8 253.9h1.1v1.1h-1.1zM1805.5 252.8h1.1v1.1h-1.1zM1795.1 246.3h0.9v0.9h-0.9zM1812.5 253.8h1.2v1.2h-1.2zM1802.3 250.8h0.6v0.6h-0.6zM1812.0 246.9h0.6v0.6h-0.6zM1800.4 240.1h1.2v1.2h-1.2zM1796.5 243.0h0.6v0.6h-0.6zM1792.0 254.6h0.8v0.8h-0.8zM1811.9 261.4h1.1v1.1h-1.1zM1806.7 252.1h1.0v1.0h-1.0zM1814.0 249.2h1.2v1.2h-1.2zM1811.9 257.7h0.7v0.7h-0.7zM1801.8 255.6h0.9v0.9h-0.9zM1814.4 254.9h1.0v1.0h-1.0zM1813.9 245.7h0.6v0.6h-0.6zM1810.6 245.4h1.2v1.2h-1.2zM1800.9 252.1h1.1v1.1h-1.1zM1810.4 263.4h0.9v0.9h-0.9zM1811.5 247.1h0.8v0.8h-0.8zM1798.0 243.0h0.9v0.9h-0.9zM1802.7 259.6h1.1v1.1h-1.1zM1804.6 256.3h0.9v0.9h-0.9zM1802.5 249.9h0.7v0.7h-0.7zM1810.2 251.0h1.1v1.1h-1.1zM1802.9 254.8h0.9v0.9h-0.9zM1812.2 243.8h0.6v0.6h-0.6zM1801.0 242.6h0.9v0.9h-0.9zM1799.2 244.4h0.7v0.7h-0.7zM1802.6 248.4h0.8v0.8h-0.8zM1809.9 244.6h0.9v0.9h-0.9zM1801.7 243.8h0.8v0.8h-0.8zM1802.6 251.6h0.8v0.8h-0.8zM1817.5 255.2h1.2v1.2h-1.2zM1801.4 248.5h1.2v1.2h-1.2zM1801.5 263.2h1.0v1.0h-1.0zM1794.8 245.3h0.7v0.7h-0.7zM1808.9 244.2h1.1v1.1h-1.1zM1807.3 247.2h0.8v0.8h-0.8zM1802.1 254.1h1.2v1.2h-1.2zM1800.4 244.2h0.9v0.9h-0.9zM1806.1 250.2h0.8v0.8h-0.8zM1800.3 243.8h0.9v0.9h-0.9zM1803.7 257.3h1.0v1.0h-1.0zM1796.7 262.5h1.2v1.2h-1.2zM1810.4 250.9h0.9v0.9h-0.9zM1810.0 256.3h0.6v0.6h-0.6zM1790.4 251.9h1.1v1.1h-1.1zM1799.8 256.5h1.2v1.2h-1.2zM1816.0 255.8h1.2v1.2h-1.2zM1816.3 257.3h1.0v1.0h-1.0zM1797.6 257.0h1.0v1.0h-1.0zM1791.3 250.0h1.2v1.2h-1.2zM1803.6 252.7h1.1v1.1h-1.1zM1797.5 243.9h0.6v0.6h-0.6zM1815.7 257.6h0.8v0.8h-0.8zM1790.4 254.2h0.7v0.7h-0.7zM1802.3 250.2h1.0v1.0h-1.0zM1803.7 247.7h1.1v1.1h-1.1zM1816.2 249.7h1.1v1.1h-1.1zM1814.8 248.5h0.9v0.9h-0.9zM1809.5 241.8h1.0v1.0h-1.0zM1801.6 248.0h0.8v0.8h-0.8zM1798.2 262.6h1.1v1.1h-1.1zM1800.5 264.5h0.6v0.6h-0.6zM1810.6 254.5h0.6v0.6h-0.6zM1811.2 249.8h0.8v0.8h-0.8zM1809.9 245.0h1.0v1.0h-1.0zM1795.8 255.0h1.3v1.3h-1.3zM1802.4 260.7h0.9v0.9h-0.9zM1806.8 255.2h0.9v0.9h-0.9zM1806.5 244.5h0.6v0.6h-0.6zM1807.9 250.4h1.2v1.2h-1.2zM1814.4 254.8h0.6v0.6h-0.6zM1803.5 259.7h1.1v1.1h-1.1zM1796.4 255.1h0.8v0.8h-0.8zM1797.5 251.2h1.3v1.3h-1.3zM1805.5 255.6h0.9v0.9h-0.9zM1797.2 260.6h0.5v0.5h-0.5zM1800.6 245.6h1.2v1.2h-1.2zM1801.4 259.5h0.8v0.8h-0.8zM1797.6 250.7h1.0v1.0h-1.0zM1794.3 257.6h0.7v0.7h-0.7zM1794.5 254.5h1.1v1.1h-1.1zM1799.2 245.6h0.6v0.6h-0.6zM1807.4 254.7h0.7v0.7h-0.7zM1808.4 261.3h0.8v0.8h-0.8zM1808.9 249.0h0.7v0.7h-0.7zM1805.8 255.7h1.0v1.0h-1.0zM1798.6 249.3h1.1v1.1h-1.1zM1800.2 245.0h1.0v1.0h-1.0zM1799.3 245.4h0.6v0.6h-0.6zM1795.1 261.5h0.8v0.8h-0.8zM1801.9 249.7h1.1v1.1h-1.1zM1809.1 246.6h0.8v0.8h-0.8zM1797.9 251.5h0.7v0.7h-0.7zM1811.7 259.5h0.9v0.9h-0.9zM1817.2 248.5h1.2v1.2h-1.2zM1815.8 248.0h0.5v0.5h-0.5zM1813.5 261.3h1.2v1.2h-1.2zM1796.2 245.5h0.9v0.9h-0.9zM1800.1 253.9h0.9v0.9h-0.9zM1803.4 255.6h1.2v1.2h-1.2zM1792.5 246.6h0.7v0.7h-0.7zM1798.3 249.2h1.2v1.2h-1.2zM1806.7 261.7h0.9v0.9h-0.9zM1802.6 254.5h0.9v0.9h-0.9z"/><rect x="1815.5" y="265" width="5" height="5" fill="#ff8080" opacity="0.75"/><path d="M1815,266.5 L1820,266.5 M1817.5,264 L1817.5,269" stroke="#000" stroke-width="1.3"/><path fill="#000" opacity="1.0" d="M1825.3 250.2h0.7v0.7h-0.7zM1841.2 259.5h1.2v1.2h-1.2zM1839.3 263.3h0.6v0.6h-0.6zM1848.4 257.9h1.0v1.0h-1.0zM1845.6 258.5h1.4v1.4h-1.4zM1829.7 258.8h0.9v0.9h-0.9zM1834.6 251.9h1.3v1.3h-1.3zM1830.4 247.8h0.8v0.8h-0.8zM1843.2 264.5h1.3v1.3h-1.3zM1829.9 259.7h1.0v1.0h-1.0zM1838.9 254.9h1.2v1.2h-1.2zM1843.6 261.2h0.6v0.6h-0.6zM1844.2 252.8h1.1v1.1h-1.1zM1827.4 242.9h1.1v1.1h-1.1zM1836.0 251.7h1.4v1.4h-1.4zM1825.0 252.9h0.6v0.6h-0.6zM1843.1 243.4h0.7v0.7h-0.7zM1834.4 254.4h1.1v1.1h-1.1zM1840.3 263.7h0.7v0.7h-0.7zM1833.8 241.5h1.2v1.2h-1.2zM1845.7 249.5h1.1v1.1h-1.1zM1827.4 260.0h1.3v1.3h-1.3zM1839.0 240.9h0.8v0.8h-0.8zM1849.6 244.5h1.4v1.4h-1.4zM1831.3 262.9h1.1v1.1h-1.1zM1844.8 241.3h0.9v0.9h-0.9zM1828.0 259.7h1.1v1.1h-1.1zM1825.2 248.8h0.6v0.6h-0.6zM1847.9 252.8h0.6v0.6h-0.6zM1840.6 248.1h1.3v1.3h-1.3zM1838.9 257.6h1.2v1.2h-1.2zM1833.9 243.6h1.1v1.1h-1.1zM1825.1 247.5h1.0v1.0h-1.0zM1828.4 249.6h0.9v0.9h-0.9zM1836.1 247.1h1.1v1.1h-1.1zM1849.2 246.6h1.0v1.0h-1.0zM1835.0 255.9h0.6v0.6h-0.6zM1825.2 248.8h1.3v1.3h-1.3zM1843.0 263.2h1.2v1.2h-1.2zM1825.0 253.6h0.7v0.7h-0.7zM1832.7 260.9h1.2v1.2h-1.2zM1830.2 254.6h1.3v1.3h-1.3zM1830.6 257.9h0.7v0.7h-0.7zM1826.1 253.3h0.9v0.9h-0.9zM1832.7 243.3h0.6v0.6h-0.6zM1845.8 250.1h1.0v1.0h-1.0zM1844.7 250.2h0.6v0.6h-0.6zM1839.7 257.8h1.3v1.3h-1.3zM1834.7 251.6h0.8v0.8h-0.8zM1831.6 251.6h0.8v0.8h-0.8zM1846.0 246.5h0.8v0.8h-0.8zM1833.7 249.0h1.0v1.0h-1.0zM1835.2 248.2h1.0v1.0h-1.0zM1833.5 263.4h1.1v1.1h-1.1zM1847.4 246.0h0.7v0.7h-0.7zM1842.7 263.0h1.2v1.2h-1.2zM1846.7 255.6h0.8v0.8h-0.8zM1825.1 254.7h1.0v1.0h-1.0zM1837.5 239.6h0.8v0.8h-0.8zM1831.4 245.9h1.0v1.0h-1.0zM1826.5 249.8h0.7v0.7h-0.7zM1841.2 246.8h0.8v0.8h-0.8zM1846.1 240.7h0.9v0.9h-0.9zM1841.0 251.1h1.4v1.4h-1.4zM1838.9 254.9h1.2v1.2h-1.2zM1844.5 262.5h0.6v0.6h-0.6zM1844.3 258.2h0.6v0.6h-0.6zM1829.5 253.6h1.2v1.2h-1.2zM1824.2 252.6h1.3v1.3h-1.3zM1844.4 263.8h1.3v1.3h-1.3zM1828.4 247.8h0.7v0.7h-0.7zM1834.9 258.4h0.7v0.7h-0.7zM1831.6 246.5h1.2v1.2h-1.2zM1826.5 246.3h0.6v0.6h-0.6zM1843.9 243.5h1.1v1.1h-1.1zM1838.9 263.9h0.9v0.9h-0.9zM1836.0 241.2h0.7v0.7h-0.7zM1834.1 263.7h0.6v0.6h-0.6zM1830.8 244.1h1.2v1.2h-1.2zM1833.2 260.8h1.0v1.0h-1.0zM1838.0 247.7h1.0v1.0h-1.0zM1837.3 263.0h0.8v0.8h-0.8zM1840.0 259.0h1.3v1.3h-1.3zM1829.3 262.0h1.2v1.2h-1.2zM1836.7 262.7h0.6v0.6h-0.6zM1848.4 247.3h0.7v0.7h-0.7zM1827.9 250.8h1.1v1.1h-1.1zM1834.7 265.0h1.1v1.1h-1.1zM1849.5 257.6h1.3v1.3h-1.3zM1834.0 263.3h1.3v1.3h-1.3zM1841.1 249.1h1.3v1.3h-1.3zM1838.1 264.7h1.1v1.1h-1.1zM1824.9 254.9h1.2v1.2h-1.2zM1851.7 251.5h1.0v1.0h-1.0zM1836.9 240.4h0.9v0.9h-0.9zM1827.7 252.1h0.7v0.7h-0.7zM1837.1 264.9h1.3v1.3h-1.3zM1834.2 240.8h1.0v1.0h-1.0zM1827.5 246.8h0.6v0.6h-0.6zM1825.0 256.8h0.7v0.7h-0.7zM1833.7 252.9h0.8v0.8h-0.8zM1839.3 249.3h1.2v1.2h-1.2zM1841.9 239.5h0.8v0.8h-0.8zM1846.2 248.3h0.9v0.9h-0.9zM1848.1 248.8h1.1v1.1h-1.1zM1839.0 252.8h0.8v0.8h-0.8zM1848.1 259.9h0.8v0.8h-0.8zM1849.3 248.9h0.7v0.7h-0.7zM1836.0 243.9h1.0v1.0h-1.0zM1849.5 257.9h1.2v1.2h-1.2zM1827.6 246.2h0.8v0.8h-0.8zM1843.9 258.1h1.2v1.2h-1.2zM1832.8 249.8h0.8v0.8h-0.8zM1835.9 252.3h0.6v0.6h-0.6zM1832.6 253.8h1.3v1.3h-1.3zM1846.5 260.9h1.2v1.2h-1.2zM1833.8 261.7h1.4v1.4h-1.4zM1831.2 245.9h1.4v1.4h-1.4zM1837.2 265.7h0.8v0.8h-0.8zM1830.7 255.9h1.1v1.1h-1.1zM1846.8 244.0h0.7v0.7h-0.7zM1850.1 251.3h1.0v1.0h-1.0zM1841.0 247.8h1.1v1.1h-1.1zM1840.8 239.8h1.1v1.1h-1.1zM1847.3 255.8h0.8v0.8h-0.8zM1830.8 246.2h0.9v0.9h-0.9zM1827.3 249.4h1.3v1.3h-1.3zM1836.4 259.7h0.7v0.7h-0.7zM1847.9 260.4h1.3v1.3h-1.3zM1844.2 258.3h1.3v1.3h-1.3zM1847.1 241.5h1.4v1.4h-1.4zM1836.6 255.9h0.8v0.8h-0.8zM1835.9 252.0h0.8v0.8h-0.8zM1826.4 254.0h0.7v0.7h-0.7zM1844.1 257.9h0.6v0.6h-0.6zM1841.6 255.5h1.2v1.2h-1.2zM1840.5 249.7h1.2v1.2h-1.2zM1844.4 242.4h0.8v0.8h-0.8zM1839.9 247.9h0.6v0.6h-0.6zM1844.8 250.0h1.3v1.3h-1.3zM1838.1 248.5h0.6v0.6h-0.6zM1834.4 247.3h1.1v1.1h-1.1zM1834.6 245.6h1.0v1.0h-1.0zM1841.1 264.8h1.1v1.1h-1.1zM1833.9 241.5h0.6v0.6h-0.6zM1847.4 243.8h1.0v1.0h-1.0zM1829.4 246.5h1.2v1.2h-1.2zM1830.3 250.4h1.0v1.0h-1.0zM1838.3 253.2h1.0v1.0h-1.0zM1846.3 243.2h0.7v0.7h-0.7zM1827.0 251.4h1.0v1.0h-1.0zM1828.0 254.6h1.1v1.1h-1.1zM1845.6 244.9h1.2v1.2h-1.2zM1835.7 247.1h0.8v0.8h-0.8zM1834.6 260.1h1.0v1.0h-1.0zM1834.1 265.4h1.2v1.2h-1.2zM1829.8 260.6h1.3v1.3h-1.3zM1844.1 261.6h1.4v1.4h-1.4zM1828.6 261.3h1.2v1.2h-1.2zM1835.5 257.3h1.2v1.2h-1.2zM1830.5 256.4h1.0v1.0h-1.0zM1836.2 238.8h1.3v1.3h-1.3zM1838.7 245.6h0.9v0.9h-0.9zM1844.8 252.3h0.8v0.8h-0.8zM1842.4 261.0h0.7v0.7h-0.7zM1832.6 244.3h0.8v0.8h-0.8zM1834.7 244.2h0.6v0.6h-0.6zM1844.5 241.5h1.3v1.3h-1.3zM1835.9 259.4h1.1v1.1h-1.1zM1846.4 263.0h1.1v1.1h-1.1zM1834.5 250.9h0.8v0.8h-0.8zM1825.7 258.4h0.7v0.7h-0.7zM1834.3 249.6h1.4v1.4h-1.4zM1837.8 239.3h1.2v1.2h-1.2zM1841.2 258.7h0.6v0.6h-0.6zM1833.7 250.6h0.7v0.7h-0.7zM1844.2 264.0h1.2v1.2h-1.2zM1834.9 265.5h0.7v0.7h-0.7zM1843.8 259.0h1.2v1.2h-1.2zM1848.2 259.3h1.0v1.0h-1.0zM1840.6 243.8h0.6v0.6h-0.6zM1847.8 259.0h1.0v1.0h-1.0zM1838.6 245.3h0.8v0.8h-0.8zM1841.1 264.6h1.2v1.2h-1.2zM1844.8 262.0h0.6v0.6h-0.6zM1830.6 253.6h1.2v1.2h-1.2zM1835.7 240.4h0.7v0.7h-0.7zM1849.0 255.0h1.1v1.1h-1.1zM1850.9 252.8h1.3v1.3h-1.3zM1831.3 260.0h1.1v1.1h-1.1zM1848.3 246.8h1.0v1.0h-1.0zM1839.2 241.9h0.6v0.6h-0.6zM1829.0 249.2h0.8v0.8h-0.8zM1832.4 256.4h0.8v0.8h-0.8zM1837.8 238.7h0.9v0.9h-0.9zM1841.1 247.5h1.0v1.0h-1.0zM1837.6 239.5h0.9v0.9h-0.9zM1844.8 264.0h1.1v1.1h-1.1zM1833.0 244.9h0.7v0.7h-0.7zM1829.6 248.0h1.3v1.3h-1.3zM1831.6 241.4h1.0v1.0h-1.0zM1838.1 246.3h1.4v1.4h-1.4zM1828.3 246.6h0.7v0.7h-0.7zM1848.1 258.5h1.2v1.2h-1.2zM1834.2 245.4h1.0v1.0h-1.0zM1839.3 240.6h1.3v1.3h-1.3zM1848.6 258.6h0.6v0.6h-0.6zM1830.5 244.5h0.6v0.6h-0.6zM1827.8 257.7h1.3v1.3h-1.3zM1847.1 256.8h1.2v1.2h-1.2zM1847.9 260.9h1.4v1.4h-1.4zM1834.2 257.8h0.7v0.7h-0.7zM1839.8 261.3h1.2v1.2h-1.2zM1847.9 247.8h1.4v1.4h-1.4zM1827.6 257.1h0.6v0.6h-0.6zM1835.8 253.2h0.7v0.7h-0.7zM1839.9 247.1h0.8v0.8h-0.8zM1827.7 250.3h0.6v0.6h-0.6zM1847.0 259.5h0.9v0.9h-0.9zM1846.4 257.5h0.9v0.9h-0.9zM1841.6 252.0h0.7v0.7h-0.7zM1847.6 256.8h1.4v1.4h-1.4zM1838.9 246.9h1.0v1.0h-1.0zM1829.3 262.8h1.2v1.2h-1.2zM1832.0 247.4h0.9v0.9h-0.9zM1829.1 250.5h1.0v1.0h-1.0zM1846.0 257.1h1.4v1.4h-1.4zM1829.7 258.1h1.2v1.2h-1.2zM1842.7 240.7h0.9v0.9h-0.9zM1836.4 245.4h1.1v1.1h-1.1zM1844.6 252.7h0.7v0.7h-0.7zM1830.7 261.8h0.6v0.6h-0.6zM1841.4 248.6h1.4v1.4h-1.4zM1848.7 248.5h1.3v1.3h-1.3zM1847.1 248.5h1.3v1.3h-1.3zM1850.2 254.7h1.1v1.1h-1.1zM1839.0 246.1h0.6v0.6h-0.6zM1826.9 250.4h1.1v1.1h-1.1zM1842.7 261.8h1.4v1.4h-1.4zM1837.8 264.8h1.4v1.4h-1.4zM1833.5 243.4h0.9v0.9h-0.9zM1832.6 253.1h0.6v0.6h-0.6zM1836.8 258.3h1.3v1.3h-1.3zM1829.5 262.0h1.0v1.0h-1.0zM1848.7 244.0h1.2v1.2h-1.2zM1831.0 254.4h1.0v1.0h-1.0zM1833.1 263.9h0.6v0.6h-0.6zM1832.4 245.5h0.9v0.9h-0.9zM1824.6 248.3h1.4v1.4h-1.4zM1829.4 262.7h1.4v1.4h-1.4zM1827.3 250.2h0.7v0.7h-0.7zM1840.5 242.2h1.2v1.2h-1.2zM1848.0 246.7h1.1v1.1h-1.1zM1832.7 250.3h0.9v0.9h-0.9zM1844.0 254.5h1.4v1.4h-1.4zM1833.8 255.9h0.9v0.9h-0.9zM1848.4 256.1h0.8v0.8h-0.8zM1840.3 263.2h1.3v1.3h-1.3zM1850.0 253.0h1.1v1.1h-1.1zM1828.5 252.8h0.6v0.6h-0.6zM1831.8 260.4h0.8v0.8h-0.8zM1846.6 251.7h1.3v1.3h-1.3zM1842.7 240.3h1.0v1.0h-1.0zM1825.0 252.0h0.7v0.7h-0.7zM1838.3 254.0h1.0v1.0h-1.0zM1824.9 256.0h1.3v1.3h-1.3zM1829.5 257.7h0.7v0.7h-0.7zM1838.2 241.6h0.7v0.7h-0.7zM1840.4 249.6h0.7v0.7h-0.7zM1824.2 254.0h0.7v0.7h-0.7zM1836.7 264.5h0.8v0.8h-0.8zM1840.1 251.0h0.8v0.8h-0.8zM1833.2 264.1h0.6v0.6h-0.6zM1831.9 240.2h1.4v1.4h-1.4zM1839.3 248.6h1.0v1.0h-1.0zM1839.1 257.3h0.8v0.8h-0.8zM1837.0 241.1h0.7v0.7h-0.7zM1837.1 256.0h1.3v1.3h-1.3zM1838.3 242.0h1.4v1.4h-1.4zM1844.8 251.1h0.8v0.8h-0.8zM1842.1 262.6h1.1v1.1h-1.1zM1825.6 250.6h1.0v1.0h-1.0zM1833.4 262.7h1.4v1.4h-1.4zM1847.6 255.1h0.7v0.7h-0.7zM1837.8 242.4h1.3v1.3h-1.3zM1831.3 240.0h1.0v1.0h-1.0zM1826.6 244.2h1.2v1.2h-1.2zM1835.4 256.3h1.3v1.3h-1.3zM1850.4 257.3h1.3v1.3h-1.3zM1830.8 240.4h1.1v1.1h-1.1zM1837.7 240.9h0.7v0.7h-0.7zM1848.8 257.8h0.9v0.9h-0.9zM1845.6 259.6h0.8v0.8h-0.8zM1837.0 265.2h1.1v1.1h-1.1zM1837.9 239.2h0.9v0.9h-0.9zM1828.8 254.9h0.9v0.9h-0.9zM1840.4 239.0h0.8v0.8h-0.8zM1836.3 245.2h0.6v0.6h-0.6zM1833.1 240.5h0.8v0.8h-0.8zM1850.1 251.6h0.8v0.8h-0.8zM1838.8 239.1h0.7v0.7h-0.7zM1846.2 246.9h0.8v0.8h-0.8zM1830.4 259.3h1.0v1.0h-1.0zM1836.9 255.8h1.1v1.1h-1.1zM1835.6 240.4h0.9v0.9h-0.9zM1839.4 250.2h0.7v0.7h-0.7zM1848.7 253.2h1.0v1.0h-1.0zM1839.5 262.4h0.6v0.6h-0.6zM1851.4 255.1h1.3v1.3h-1.3zM1848.5 256.9h1.0v1.0h-1.0zM1825.4 248.9h1.1v1.1h-1.1zM1849.0 247.7h1.3v1.3h-1.3zM1847.5 260.6h0.8v0.8h-0.8zM1849.1 246.0h1.4v1.4h-1.4zM1838.3 242.8h1.0v1.0h-1.0zM1838.8 248.2h1.0v1.0h-1.0zM1827.0 247.0h0.8v0.8h-0.8zM1828.4 244.5h0.9v0.9h-0.9zM1832.4 239.8h0.9v0.9h-0.9zM1828.0 250.3h1.3v1.3h-1.3zM1837.0 259.9h0.9v0.9h-0.9zM1834.5 247.1h1.4v1.4h-1.4zM1825.8 251.8h0.9v0.9h-0.9zM1847.0 253.6h1.0v1.0h-1.0zM1849.7 259.5h1.1v1.1h-1.1zM1835.3 252.7h0.8v0.8h-0.8zM1832.0 261.8h0.7v0.7h-0.7zM1830.3 252.7h1.0v1.0h-1.0zM1834.1 242.4h1.2v1.2h-1.2zM1834.7 248.8h1.1v1.1h-1.1zM1825.7 253.3h1.4v1.4h-1.4zM1830.2 262.5h0.8v0.8h-0.8zM1837.2 250.9h1.3v1.3h-1.3zM1828.7 255.3h1.0v1.0h-1.0zM1833.0 257.2h1.1v1.1h-1.1zM1835.4 249.3h0.8v0.8h-0.8zM1845.2 248.7h0.8v0.8h-0.8zM1830.1 247.8h1.4v1.4h-1.4zM1843.5 251.4h0.8v0.8h-0.8zM1842.6 260.5h0.8v0.8h-0.8zM1831.9 240.2h0.6v0.6h-0.6zM1843.2 252.9h0.8v0.8h-0.8zM1844.4 259.2h0.9v0.9h-0.9zM1836.0 238.3h1.4v1.4h-1.4zM1827.9 257.5h0.7v0.7h-0.7zM1827.8 243.5h1.3v1.3h-1.3zM1842.0 256.8h1.3v1.3h-1.3zM1834.0 240.3h0.6v0.6h-0.6zM1836.1 250.3h1.2v1.2h-1.2zM1840.3 243.9h0.6v0.6h-0.6zM1836.5 238.1h1.1v1.1h-1.1zM1832.3 258.3h1.2v1.2h-1.2zM1846.7 250.3h0.7v0.7h-0.7zM1847.5 251.8h0.9v0.9h-0.9zM1833.5 263.2h1.4v1.4h-1.4zM1825.2 254.5h0.9v0.9h-0.9zM1826.8 258.0h1.4v1.4h-1.4zM1838.4 240.0h1.3v1.3h-1.3zM1850.0 245.3h1.0v1.0h-1.0zM1836.9 253.0h1.0v1.0h-1.0zM1837.8 252.3h1.4v1.4h-1.4zM1833.2 264.7h0.6v0.6h-0.6zM1830.0 261.7h1.1v1.1h-1.1zM1833.3 243.0h0.6v0.6h-0.6zM1844.1 241.2h1.0v1.0h-1.0zM1826.3 247.2h1.0v1.0h-1.0zM1828.0 253.5h1.2v1.2h-1.2zM1837.2 243.5h1.2v1.2h-1.2zM1829.7 260.3h0.9v0.9h-0.9zM1849.0 243.9h1.2v1.2h-1.2zM1831.6 257.9h0.9v0.9h-0.9zM1835.6 250.1h1.0v1.0h-1.0zM1841.7 250.2h1.3v1.3h-1.3zM1825.4 245.9h1.2v1.2h-1.2zM1835.6 239.9h0.9v0.9h-0.9zM1847.6 260.8h1.3v1.3h-1.3zM1836.7 245.1h1.0v1.0h-1.0zM1829.2 251.2h1.0v1.0h-1.0zM1824.6 255.7h1.1v1.1h-1.1zM1851.3 250.0h0.7v0.7h-0.7zM1839.2 243.0h1.1v1.1h-1.1zM1826.7 247.3h0.8v0.8h-0.8zM1834.1 244.0h1.2v1.2h-1.2zM1826.5 252.5h1.4v1.4h-1.4zM1837.8 253.2h1.3v1.3h-1.3zM1826.6 250.2h1.3v1.3h-1.3zM1845.0 246.2h1.4v1.4h-1.4zM1828.6 259.7h1.3v1.3h-1.3zM1831.8 259.2h0.9v0.9h-0.9zM1832.9 259.9h1.3v1.3h-1.3zM1850.9 257.2h1.2v1.2h-1.2zM1827.3 247.8h0.8v0.8h-0.8zM1839.2 238.9h0.9v0.9h-0.9zM1830.9 252.0h0.8v0.8h-0.8zM1844.9 242.8h0.9v0.9h-0.9zM1833.8 246.9h0.6v0.6h-0.6zM1831.2 260.5h0.7v0.7h-0.7zM1829.8 249.8h0.8v0.8h-0.8zM1837.4 243.2h1.2v1.2h-1.2zM1838.0 243.0h0.6v0.6h-0.6zM1843.9 243.1h1.1v1.1h-1.1zM1833.8 242.2h1.3v1.3h-1.3zM1851.8 252.8h1.1v1.1h-1.1zM1826.8 259.4h1.3v1.3h-1.3zM1836.6 251.0h1.1v1.1h-1.1zM1828.7 257.7h1.3v1.3h-1.3zM1846.8 261.6h0.8v0.8h-0.8zM1838.0 255.2h0.7v0.7h-0.7zM1836.8 262.4h1.4v1.4h-1.4zM1841.8 259.1h0.9v0.9h-0.9zM1832.4 245.2h1.1v1.1h-1.1zM1840.0 254.8h1.0v1.0h-1.0zM1837.1 246.4h0.6v0.6h-0.6zM1836.0 248.4h1.3v1.3h-1.3zM1835.8 246.3h0.9v0.9h-0.9zM1842.4 253.6h0.9v0.9h-0.9zM1847.6 242.7h1.2v1.2h-1.2zM1830.9 243.6h1.0v1.0h-1.0z"/><rect x="1849.5" y="265" width="5" height="5" fill="#ff8080" opacity="0.75"/><path d="M1849,266.5 L1854,266.5 M1851.5,264 L1851.5,269" stroke="#000" stroke-width="1.3"/><defs><linearGradient id="bg44" x1="0" y1="0" x2="0.3" y2="1"><stop offset="0" stop-color="#000"/><stop offset="0.45" stop-color="#222"/><stop offset="1" stop-color="#fff"/></linearGradient></defs><circle cx="1872" cy="252" r="13.5" fill="url(#bg44)"/><path fill="#fff" opacity="0.8" d="M1867.9 245.9h1.0v1.0h-1.0zM1874.7 247.6h1.0v1.0h-1.0zM1867.0 241.4h0.9v0.9h-0.9zM1866.2 254.6h0.8v0.8h-0.8zM1865.8 260.0h0.8v0.8h-0.8zM1867.1 252.7h1.1v1.1h-1.1zM1872.4 249.4h1.0v1.0h-1.0zM1875.4 260.2h1.2v1.2h-1.2zM1872.8 256.2h0.9v0.9h-0.9zM1866.8 261.8h1.4v1.4h-1.4zM1873.6 246.0h1.0v1.0h-1.0zM1874.1 258.6h1.5v1.5h-1.5zM1877.3 255.4h0.8v0.8h-0.8zM1874.9 247.7h1.0v1.0h-1.0zM1880.8 255.0h1.1v1.1h-1.1zM1875.0 242.9h1.3v1.3h-1.3zM1871.6 256.5h1.1v1.1h-1.1zM1882.9 255.5h1.3v1.3h-1.3zM1866.1 252.2h0.7v0.7h-0.7zM1862.6 248.6h0.7v0.7h-0.7zM1879.5 257.4h1.0v1.0h-1.0zM1873.7 245.8h1.5v1.5h-1.5zM1875.8 248.1h1.1v1.1h-1.1zM1866.1 248.4h1.3v1.3h-1.3zM1869.1 242.0h0.8v0.8h-0.8zM1864.2 251.8h1.1v1.1h-1.1zM1882.3 253.0h1.0v1.0h-1.0zM1877.8 261.0h1.1v1.1h-1.1zM1871.4 242.3h1.2v1.2h-1.2zM1873.4 251.2h0.9v0.9h-0.9zM1876.5 259.5h0.8v0.8h-0.8zM1874.9 252.5h0.8v0.8h-0.8zM1865.3 250.3h1.0v1.0h-1.0zM1879.7 252.6h0.8v0.8h-0.8zM1873.4 252.9h0.7v0.7h-0.7zM1869.2 254.0h1.0v1.0h-1.0zM1877.0 260.3h1.4v1.4h-1.4zM1871.2 253.7h1.5v1.5h-1.5zM1879.7 256.5h1.3v1.3h-1.3zM1861.0 253.2h0.7v0.7h-0.7zM1869.9 241.0h1.4v1.4h-1.4zM1875.9 246.5h1.1v1.1h-1.1zM1875.5 247.0h0.8v0.8h-0.8zM1875.9 252.8h0.7v0.7h-0.7zM1876.8 249.7h0.9v0.9h-0.9zM1881.1 250.5h1.0v1.0h-1.0zM1876.7 255.6h0.9v0.9h-0.9zM1878.2 249.9h1.5v1.5h-1.5zM1871.8 253.4h1.4v1.4h-1.4zM1881.0 256.6h1.1v1.1h-1.1zM1869.8 262.3h1.0v1.0h-1.0zM1879.9 251.2h1.5v1.5h-1.5zM1877.5 249.4h1.2v1.2h-1.2zM1870.8 243.2h0.6v0.6h-0.6zM1868.2 242.8h0.8v0.8h-0.8zM1873.5 253.0h1.1v1.1h-1.1zM1880.4 258.6h1.0v1.0h-1.0zM1881.7 251.7h1.0v1.0h-1.0zM1874.7 258.0h1.2v1.2h-1.2zM1879.1 243.5h0.9v0.9h-0.9zM1880.9 253.3h1.2v1.2h-1.2zM1865.8 243.8h1.3v1.3h-1.3zM1864.6 244.6h0.7v0.7h-0.7zM1880.5 249.0h0.7v0.7h-0.7zM1876.3 259.7h0.9v0.9h-0.9zM1876.5 250.1h1.0v1.0h-1.0zM1860.5 251.7h0.9v0.9h-0.9zM1879.5 246.0h1.1v1.1h-1.1zM1882.4 248.3h1.3v1.3h-1.3zM1870.7 251.6h0.8v0.8h-0.8zM1870.4 249.8h1.2v1.2h-1.2zM1868.5 257.1h1.4v1.4h-1.4zM1877.3 243.8h1.0v1.0h-1.0zM1860.4 249.3h1.4v1.4h-1.4zM1870.4 250.7h1.4v1.4h-1.4zM1874.6 252.8h1.2v1.2h-1.2zM1875.3 261.3h1.2v1.2h-1.2zM1877.7 261.7h1.5v1.5h-1.5zM1865.5 242.1h1.3v1.3h-1.3zM1861.7 253.8h1.5v1.5h-1.5zM1871.3 250.0h0.9v0.9h-0.9zM1870.3 246.3h0.8v0.8h-0.8zM1869.1 252.8h1.0v1.0h-1.0zM1879.8 257.6h0.8v0.8h-0.8zM1874.3 251.0h1.2v1.2h-1.2zM1869.6 249.0h1.2v1.2h-1.2zM1863.9 249.4h0.8v0.8h-0.8zM1861.5 253.5h1.2v1.2h-1.2zM1872.2 257.6h1.4v1.4h-1.4zM1878.8 254.3h1.1v1.1h-1.1zM1871.8 252.1h0.7v0.7h-0.7zM1875.8 246.2h0.9v0.9h-0.9zM1870.5 252.5h0.7v0.7h-0.7zM1876.7 243.3h0.8v0.8h-0.8zM1871.2 253.8h0.9v0.9h-0.9zM1862.2 250.7h1.1v1.1h-1.1zM1878.9 242.2h1.1v1.1h-1.1zM1874.8 252.8h1.2v1.2h-1.2zM1879.6 260.1h0.7v0.7h-0.7zM1883.2 256.1h1.0v1.0h-1.0zM1864.1 249.2h0.7v0.7h-0.7zM1868.9 257.1h1.3v1.3h-1.3zM1873.9 242.9h0.8v0.8h-0.8zM1861.0 254.7h0.8v0.8h-0.8zM1867.0 258.9h1.5v1.5h-1.5zM1881.1 253.5h1.0v1.0h-1.0zM1861.5 250.1h0.7v0.7h-0.7zM1867.6 248.9h1.3v1.3h-1.3zM1870.6 245.7h0.7v0.7h-0.7zM1872.9 242.7h1.1v1.1h-1.1zM1871.7 240.4h0.8v0.8h-0.8zM1868.2 242.4h0.8v0.8h-0.8zM1876.4 249.0h1.5v1.5h-1.5zM1861.8 246.2h1.4v1.4h-1.4zM1873.2 246.1h1.0v1.0h-1.0zM1863.2 246.6h1.0v1.0h-1.0zM1875.3 249.6h1.1v1.1h-1.1zM1874.1 254.8h0.9v0.9h-0.9zM1879.7 254.4h1.2v1.2h-1.2zM1863.9 258.2h1.1v1.1h-1.1zM1871.1 250.0h0.9v0.9h-0.9zM1875.3 252.4h1.4v1.4h-1.4zM1877.5 258.3h0.9v0.9h-0.9zM1866.9 242.4h1.4v1.4h-1.4zM1883.4 249.4h1.0v1.0h-1.0zM1881.9 251.3h0.9v0.9h-0.9zM1868.4 258.7h1.4v1.4h-1.4zM1881.0 258.5h1.2v1.2h-1.2zM1866.7 248.5h1.0v1.0h-1.0zM1864.1 257.3h1.0v1.0h-1.0zM1869.5 241.3h0.7v0.7h-0.7zM1883.4 253.4h0.8v0.8h-0.8zM1874.5 246.1h0.8v0.8h-0.8zM1878.6 252.5h1.1v1.1h-1.1zM1872.5 252.2h0.9v0.9h-0.9zM1879.2 245.3h0.8v0.8h-0.8zM1866.7 255.7h1.2v1.2h-1.2zM1870.7 257.7h1.1v1.1h-1.1zM1872.5 258.6h1.3v1.3h-1.3zM1870.4 252.0h0.9v0.9h-0.9zM1868.1 250.2h1.0v1.0h-1.0zM1866.5 249.8h0.8v0.8h-0.8zM1873.3 250.7h1.4v1.4h-1.4zM1878.6 256.5h1.1v1.1h-1.1zM1864.7 256.7h1.4v1.4h-1.4zM1871.3 253.5h0.8v0.8h-0.8zM1878.1 246.2h1.3v1.3h-1.3zM1867.8 255.5h1.2v1.2h-1.2zM1861.8 247.3h0.8v0.8h-0.8zM1866.9 259.7h1.4v1.4h-1.4zM1862.1 254.1h0.7v0.7h-0.7zM1868.5 247.8h1.2v1.2h-1.2zM1870.9 255.5h0.8v0.8h-0.8zM1870.4 242.7h1.4v1.4h-1.4zM1870.5 252.9h1.3v1.3h-1.3zM1871.6 261.5h1.0v1.0h-1.0zM1871.0 252.4h0.8v0.8h-0.8zM1871.9 245.0h1.4v1.4h-1.4zM1874.7 244.8h1.5v1.5h-1.5zM1878.3 252.1h1.1v1.1h-1.1zM1882.3 255.6h0.7v0.7h-0.7zM1867.8 249.7h1.0v1.0h-1.0zM1867.1 253.1h0.8v0.8h-0.8zM1867.7 244.5h0.7v0.7h-0.7zM1874.5 251.6h0.8v0.8h-0.8zM1870.8 257.8h1.0v1.0h-1.0zM1874.0 250.6h1.1v1.1h-1.1zM1868.7 248.7h0.9v0.9h-0.9zM1861.6 255.7h1.3v1.3h-1.3zM1870.2 252.2h0.9v0.9h-0.9zM1874.7 245.9h1.0v1.0h-1.0zM1871.2 251.0h1.2v1.2h-1.2zM1871.0 249.6h1.0v1.0h-1.0zM1874.9 248.3h1.1v1.1h-1.1zM1867.5 258.5h1.0v1.0h-1.0zM1865.7 261.4h1.2v1.2h-1.2zM1877.6 252.0h1.0v1.0h-1.0zM1864.8 260.1h0.9v0.9h-0.9zM1870.5 248.8h1.1v1.1h-1.1zM1870.6 263.2h0.9v0.9h-0.9zM1879.7 249.6h0.9v0.9h-0.9zM1861.2 248.4h1.2v1.2h-1.2zM1875.6 244.8h1.2v1.2h-1.2zM1878.7 260.1h1.2v1.2h-1.2zM1868.9 247.8h1.3v1.3h-1.3zM1866.7 251.1h1.5v1.5h-1.5zM1873.3 242.9h1.4v1.4h-1.4zM1870.0 246.2h1.5v1.5h-1.5zM1879.5 246.9h1.0v1.0h-1.0zM1870.6 252.0h1.4v1.4h-1.4zM1876.1 244.7h1.0v1.0h-1.0zM1872.3 251.2h1.0v1.0h-1.0zM1872.0 260.5h0.9v0.9h-0.9zM1863.3 245.1h1.0v1.0h-1.0zM1872.4 252.4h1.4v1.4h-1.4zM1865.4 253.3h0.6v0.6h-0.6zM1872.1 252.0h1.4v1.4h-1.4zM1877.2 253.6h1.0v1.0h-1.0zM1868.2 250.1h1.2v1.2h-1.2zM1864.4 242.9h0.7v0.7h-0.7zM1871.3 254.3h0.9v0.9h-0.9zM1872.2 253.0h1.3v1.3h-1.3zM1870.4 261.6h1.3v1.3h-1.3zM1872.3 251.1h1.1v1.1h-1.1zM1877.2 245.0h1.2v1.2h-1.2zM1862.7 256.7h1.1v1.1h-1.1zM1867.6 257.9h1.0v1.0h-1.0zM1875.5 260.4h1.4v1.4h-1.4zM1871.7 251.6h1.0v1.0h-1.0zM1872.3 249.1h1.1v1.1h-1.1zM1868.9 244.9h0.9v0.9h-0.9zM1881.3 253.0h0.8v0.8h-0.8zM1865.9 247.5h1.3v1.3h-1.3zM1881.0 259.6h1.3v1.3h-1.3zM1874.6 249.4h1.3v1.3h-1.3zM1865.2 258.5h1.2v1.2h-1.2zM1862.3 258.3h1.0v1.0h-1.0zM1862.7 254.0h0.7v0.7h-0.7zM1876.4 248.6h1.4v1.4h-1.4zM1873.7 254.2h1.1v1.1h-1.1zM1872.4 258.7h0.8v0.8h-0.8zM1870.4 242.4h1.2v1.2h-1.2zM1872.9 253.1h1.1v1.1h-1.1zM1880.3 256.7h1.1v1.1h-1.1zM1881.5 247.7h1.2v1.2h-1.2zM1875.5 245.4h0.9v0.9h-0.9zM1880.7 255.5h1.2v1.2h-1.2zM1866.9 246.4h1.0v1.0h-1.0zM1877.3 249.1h0.7v0.7h-0.7zM1881.5 249.0h1.4v1.4h-1.4zM1878.7 251.4h0.7v0.7h-0.7zM1864.7 252.3h1.0v1.0h-1.0zM1873.0 247.6h1.5v1.5h-1.5zM1873.2 256.8h1.4v1.4h-1.4zM1873.0 261.5h0.9v0.9h-0.9zM1866.1 255.8h0.8v0.8h-0.8zM1877.1 241.7h1.4v1.4h-1.4zM1872.5 252.8h1.0v1.0h-1.0zM1871.5 244.1h1.5v1.5h-1.5zM1881.2 251.3h0.8v0.8h-0.8zM1870.6 253.0h1.0v1.0h-1.0zM1872.0 246.6h0.8v0.8h-0.8zM1861.2 249.3h1.2v1.2h-1.2zM1877.1 256.2h0.8v0.8h-0.8zM1874.5 246.0h1.0v1.0h-1.0zM1875.7 248.4h1.0v1.0h-1.0zM1877.2 251.4h1.1v1.1h-1.1zM1868.7 247.5h1.2v1.2h-1.2zM1862.7 257.0h1.1v1.1h-1.1zM1870.8 244.0h1.2v1.2h-1.2zM1869.6 254.0h0.9v0.9h-0.9zM1871.7 252.5h1.3v1.3h-1.3zM1864.9 250.9h1.2v1.2h-1.2zM1874.6 253.1h1.3v1.3h-1.3zM1882.5 254.8h1.1v1.1h-1.1zM1882.6 249.8h1.0v1.0h-1.0zM1868.3 257.6h1.3v1.3h-1.3zM1862.7 254.3h1.5v1.5h-1.5zM1871.9 244.5h1.3v1.3h-1.3zM1863.8 252.3h1.0v1.0h-1.0zM1882.9 247.3h1.1v1.1h-1.1zM1869.7 251.1h1.1v1.1h-1.1zM1876.0 250.1h1.3v1.3h-1.3zM1871.7 261.5h0.9v0.9h-0.9zM1863.7 246.3h0.6v0.6h-0.6zM1876.1 245.6h0.8v0.8h-0.8zM1869.2 259.4h1.3v1.3h-1.3zM1872.8 253.7h0.8v0.8h-0.8zM1867.8 247.3h1.3v1.3h-1.3zM1871.1 246.1h1.1v1.1h-1.1zM1877.2 258.7h1.2v1.2h-1.2zM1872.8 261.0h0.7v0.7h-0.7zM1879.8 250.6h1.4v1.4h-1.4zM1870.0 248.4h1.3v1.3h-1.3zM1867.4 248.0h1.2v1.2h-1.2zM1872.6 242.9h0.8v0.8h-0.8zM1883.0 249.6h1.0v1.0h-1.0zM1882.7 246.7h0.9v0.9h-0.9zM1873.6 256.2h1.0v1.0h-1.0zM1874.7 255.5h1.3v1.3h-1.3zM1880.5 253.0h1.0v1.0h-1.0zM1870.8 247.5h1.0v1.0h-1.0zM1872.2 252.6h1.4v1.4h-1.4zM1868.6 255.8h1.5v1.5h-1.5zM1866.7 257.7h0.7v0.7h-0.7zM1862.7 257.8h1.4v1.4h-1.4z"/><path fill="#000" opacity="0.6" d="M1876.2 252.1h0.7v0.7h-0.7zM1874.0 258.4h1.0v1.0h-1.0zM1867.2 257.1h1.1v1.1h-1.1zM1873.4 262.6h0.8v0.8h-0.8zM1877.7 262.4h0.7v0.7h-0.7zM1874.7 252.7h0.9v0.9h-0.9zM1869.0 258.6h0.6v0.6h-0.6zM1870.4 255.0h1.0v1.0h-1.0zM1869.4 259.8h0.6v0.6h-0.6zM1872.4 254.4h0.6v0.6h-0.6zM1873.7 256.9h0.7v0.7h-0.7zM1875.8 261.7h1.1v1.1h-1.1zM1882.1 259.3h1.1v1.1h-1.1zM1874.7 254.9h0.9v0.9h-0.9zM1875.1 259.3h1.2v1.2h-1.2zM1869.8 264.3h1.2v1.2h-1.2zM1874.0 257.3h0.8v0.8h-0.8zM1874.2 255.6h0.7v0.7h-0.7zM1878.6 258.5h0.9v0.9h-0.9zM1872.9 260.3h1.0v1.0h-1.0zM1876.2 263.1h1.2v1.2h-1.2zM1870.1 258.7h1.0v1.0h-1.0zM1871.5 259.1h1.1v1.1h-1.1zM1868.4 257.1h0.7v0.7h-0.7zM1870.3 251.6h0.8v0.8h-0.8zM1869.2 256.9h0.9v0.9h-0.9zM1868.3 256.7h1.0v1.0h-1.0zM1871.1 257.9h0.6v0.6h-0.6zM1870.0 258.8h0.9v0.9h-0.9zM1865.7 255.3h1.2v1.2h-1.2zM1865.0 254.4h0.6v0.6h-0.6zM1879.2 253.3h1.0v1.0h-1.0zM1875.2 254.2h0.9v0.9h-0.9zM1875.3 261.3h1.1v1.1h-1.1zM1874.8 251.8h0.9v0.9h-0.9zM1876.7 256.9h0.5v0.5h-0.5zM1866.0 259.9h1.1v1.1h-1.1zM1872.1 258.4h1.1v1.1h-1.1zM1875.5 263.7h1.0v1.0h-1.0zM1876.3 261.1h1.1v1.1h-1.1zM1873.7 264.7h0.6v0.6h-0.6zM1876.3 261.7h1.0v1.0h-1.0zM1863.7 254.1h0.7v0.7h-0.7zM1878.4 259.2h0.8v0.8h-0.8zM1867.8 260.0h1.2v1.2h-1.2zM1870.2 263.1h1.0v1.0h-1.0zM1869.8 264.4h0.7v0.7h-0.7zM1871.1 259.8h1.1v1.1h-1.1zM1870.3 255.1h0.6v0.6h-0.6zM1868.2 256.3h0.9v0.9h-0.9zM1872.0 258.0h0.6v0.6h-0.6zM1876.1 252.3h0.6v0.6h-0.6zM1872.9 261.5h1.2v1.2h-1.2zM1868.2 264.3h0.6v0.6h-0.6zM1872.9 257.6h1.0v1.0h-1.0zM1880.3 257.0h1.2v1.2h-1.2zM1865.7 263.4h1.2v1.2h-1.2zM1870.6 263.6h1.2v1.2h-1.2zM1873.2 261.2h1.1v1.1h-1.1zM1862.8 255.1h0.9v0.9h-0.9zM1869.5 258.5h0.7v0.7h-0.7zM1874.7 256.3h1.2v1.2h-1.2zM1874.3 253.8h0.8v0.8h-0.8zM1874.0 258.0h1.2v1.2h-1.2zM1882.3 256.3h0.7v0.7h-0.7zM1877.3 256.6h0.8v0.8h-0.8zM1879.9 254.8h1.0v1.0h-1.0zM1871.6 259.1h0.7v0.7h-0.7zM1871.8 259.9h1.0v1.0h-1.0zM1870.7 259.9h1.2v1.2h-1.2zM1871.9 258.1h0.5v0.5h-0.5zM1871.4 257.9h1.0v1.0h-1.0zM1877.9 258.6h1.0v1.0h-1.0zM1868.9 257.5h1.2v1.2h-1.2zM1881.2 257.0h1.2v1.2h-1.2zM1876.9 257.4h0.9v0.9h-0.9zM1864.2 261.0h0.6v0.6h-0.6zM1872.9 261.7h0.9v0.9h-0.9zM1876.6 257.8h0.5v0.5h-0.5zM1864.5 262.1h0.6v0.6h-0.6zM1864.7 257.5h1.2v1.2h-1.2zM1868.6 262.2h1.3v1.3h-1.3zM1878.9 257.2h0.8v0.8h-0.8zM1867.0 253.6h1.0v1.0h-1.0zM1869.7 255.1h1.1v1.1h-1.1zM1870.0 259.7h0.6v0.6h-0.6zM1869.5 257.4h0.7v0.7h-0.7zM1870.5 261.0h0.8v0.8h-0.8zM1878.5 257.3h0.9v0.9h-0.9zM1866.5 260.5h1.2v1.2h-1.2zM1865.6 257.4h0.8v0.8h-0.8zM1873.3 259.9h0.6v0.6h-0.6zM1871.8 258.5h0.8v0.8h-0.8zM1870.3 257.5h1.1v1.1h-1.1zM1864.8 259.4h0.9v0.9h-0.9zM1874.2 253.1h0.6v0.6h-0.6zM1868.4 257.3h1.1v1.1h-1.1zM1869.7 259.5h0.5v0.5h-0.5zM1874.0 257.9h0.7v0.7h-0.7zM1872.9 257.7h0.8v0.8h-0.8zM1864.6 260.1h1.1v1.1h-1.1zM1876.3 257.6h0.6v0.6h-0.6zM1872.0 258.1h0.7v0.7h-0.7zM1864.7 253.6h0.6v0.6h-0.6zM1870.9 264.3h1.0v1.0h-1.0zM1870.9 258.5h0.6v0.6h-0.6zM1873.5 262.7h0.6v0.6h-0.6zM1862.6 257.9h0.5v0.5h-0.5zM1870.7 261.4h1.0v1.0h-1.0zM1871.3 252.9h0.9v0.9h-0.9zM1868.0 262.1h0.9v0.9h-0.9zM1878.0 256.2h1.0v1.0h-1.0zM1868.9 254.6h0.9v0.9h-0.9zM1868.2 254.0h1.3v1.3h-1.3zM1869.9 261.7h1.3v1.3h-1.3zM1874.7 254.0h0.8v0.8h-0.8zM1874.4 261.1h0.8v0.8h-0.8zM1868.6 259.0h0.9v0.9h-0.9zM1870.4 257.5h1.0v1.0h-1.0zM1871.3 256.2h0.7v0.7h-0.7zM1877.9 258.9h1.0v1.0h-1.0zM1865.9 260.4h1.0v1.0h-1.0zM1873.0 258.2h0.9v0.9h-0.9zM1879.4 255.6h0.9v0.9h-0.9zM1871.9 259.4h1.0v1.0h-1.0zM1872.5 254.7h0.6v0.6h-0.6zM1870.6 263.2h1.1v1.1h-1.1zM1863.9 261.7h0.8v0.8h-0.8zM1875.1 258.3h1.2v1.2h-1.2zM1871.6 257.0h0.7v0.7h-0.7zM1867.2 260.4h0.5v0.5h-0.5zM1877.8 256.0h0.7v0.7h-0.7zM1878.9 258.9h1.2v1.2h-1.2zM1870.1 251.9h1.2v1.2h-1.2zM1871.4 257.4h0.8v0.8h-0.8zM1867.3 256.3h0.7v0.7h-0.7zM1880.9 260.6h1.0v1.0h-1.0zM1870.2 261.6h1.2v1.2h-1.2zM1876.7 261.8h0.7v0.7h-0.7zM1879.6 254.7h1.3v1.3h-1.3zM1867.3 260.7h0.8v0.8h-0.8zM1865.7 263.4h1.3v1.3h-1.3zM1882.2 257.8h0.9v0.9h-0.9zM1866.6 252.5h0.9v0.9h-0.9zM1880.0 255.1h0.7v0.7h-0.7zM1866.8 262.0h0.6v0.6h-0.6zM1871.9 259.9h0.6v0.6h-0.6zM1881.2 254.2h1.2v1.2h-1.2zM1863.3 257.9h1.1v1.1h-1.1zM1865.9 259.5h0.6v0.6h-0.6zM1872.2 261.0h0.8v0.8h-0.8zM1870.1 256.1h0.7v0.7h-0.7zM1878.4 253.9h1.2v1.2h-1.2zM1872.5 256.1h0.9v0.9h-0.9zM1876.7 252.9h0.7v0.7h-0.7zM1864.8 258.5h0.5v0.5h-0.5zM1872.3 263.5h1.0v1.0h-1.0zM1865.4 259.5h0.9v0.9h-0.9zM1871.1 258.8h1.1v1.1h-1.1zM1872.8 254.4h1.1v1.1h-1.1zM1875.8 253.4h1.1v1.1h-1.1zM1872.8 257.9h1.3v1.3h-1.3zM1863.4 259.7h1.1v1.1h-1.1zM1877.8 260.7h0.6v0.6h-0.6zM1871.5 255.1h0.8v0.8h-0.8zM1870.7 263.9h1.0v1.0h-1.0zM1869.4 263.3h0.7v0.7h-0.7zM1874.4 253.6h1.1v1.1h-1.1zM1863.9 253.4h1.1v1.1h-1.1zM1865.0 259.0h1.0v1.0h-1.0zM1871.1 260.6h1.1v1.1h-1.1zM1876.4 251.8h1.1v1.1h-1.1zM1866.8 257.9h1.1v1.1h-1.1zM1865.8 252.6h1.1v1.1h-1.1zM1869.1 259.7h0.6v0.6h-0.6zM1873.1 254.5h0.8v0.8h-0.8z"/><rect x="1883.5" y="265" width="5" height="5" fill="#ff8080" opacity="0.75"/><path d="M1883,266.5 L1888,266.5 M1885.5,264 L1885.5,269" stroke="#000" stroke-width="1.3"/><path fill="#000" opacity="1.0" d="M1744.3 288.8h1.3v1.3h-1.3zM1732.9 293.8h1.2v1.2h-1.2zM1729.2 281.8h0.8v0.8h-0.8zM1730.1 281.6h1.4v1.4h-1.4zM1726.7 286.5h1.3v1.3h-1.3zM1729.2 283.7h1.1v1.1h-1.1zM1738.5 289.8h1.3v1.3h-1.3zM1722.8 288.6h0.7v0.7h-0.7zM1728.3 287.7h1.2v1.2h-1.2zM1727.8 284.1h0.9v0.9h-0.9zM1736.5 290.6h1.1v1.1h-1.1zM1733.3 289.4h0.9v0.9h-0.9zM1721.7 289.3h0.9v0.9h-0.9zM1723.7 291.5h1.2v1.2h-1.2zM1726.5 288.3h0.8v0.8h-0.8zM1740.5 291.5h1.1v1.1h-1.1zM1742.6 290.4h0.7v0.7h-0.7zM1728.4 284.2h1.1v1.1h-1.1zM1736.8 282.0h0.9v0.9h-0.9zM1740.7 288.7h1.1v1.1h-1.1zM1736.8 284.2h1.4v1.4h-1.4zM1742.3 284.5h1.0v1.0h-1.0zM1731.2 282.9h0.9v0.9h-0.9zM1733.3 281.5h0.9v0.9h-0.9zM1730.6 286.0h1.0v1.0h-1.0zM1733.4 290.1h1.0v1.0h-1.0zM1732.0 281.5h1.0v1.0h-1.0zM1730.6 282.5h1.4v1.4h-1.4zM1735.3 287.7h1.0v1.0h-1.0zM1732.1 282.3h0.9v0.9h-0.9zM1731.2 290.3h1.2v1.2h-1.2zM1739.8 283.8h1.0v1.0h-1.0zM1730.1 287.7h1.2v1.2h-1.2zM1721.3 285.4h1.3v1.3h-1.3zM1740.9 284.7h0.7v0.7h-0.7zM1736.7 284.6h1.1v1.1h-1.1zM1740.3 293.0h0.6v0.6h-0.6zM1746.1 290.9h1.0v1.0h-1.0zM1721.9 289.4h1.2v1.2h-1.2zM1736.8 293.6h0.9v0.9h-0.9zM1727.4 288.0h0.8v0.8h-0.8zM1732.6 291.0h0.7v0.7h-0.7zM1741.0 283.5h1.0v1.0h-1.0zM1739.3 280.9h0.7v0.7h-0.7zM1747.9 284.7h1.3v1.3h-1.3zM1728.9 293.4h1.1v1.1h-1.1zM1743.4 288.0h1.1v1.1h-1.1zM1721.9 284.9h1.2v1.2h-1.2zM1742.2 280.2h0.9v0.9h-0.9zM1735.6 286.8h1.2v1.2h-1.2zM1743.4 290.0h0.9v0.9h-0.9zM1745.1 289.8h1.2v1.2h-1.2zM1736.1 290.9h1.2v1.2h-1.2zM1733.1 286.8h0.8v0.8h-0.8zM1741.9 285.5h0.8v0.8h-0.8zM1722.4 289.3h1.2v1.2h-1.2zM1726.4 291.3h0.6v0.6h-0.6zM1742.8 288.9h1.1v1.1h-1.1zM1736.8 288.3h1.3v1.3h-1.3zM1736.3 288.7h0.6v0.6h-0.6zM1741.6 289.0h1.0v1.0h-1.0zM1730.8 283.4h1.0v1.0h-1.0zM1729.7 292.3h0.7v0.7h-0.7zM1734.8 286.9h1.3v1.3h-1.3zM1737.6 292.8h0.7v0.7h-0.7zM1728.2 288.4h1.1v1.1h-1.1zM1737.4 279.8h1.4v1.4h-1.4zM1725.0 288.6h0.9v0.9h-0.9zM1732.6 292.5h1.4v1.4h-1.4zM1746.4 289.4h0.8v0.8h-0.8zM1729.1 284.6h1.2v1.2h-1.2zM1727.2 287.1h0.9v0.9h-0.9zM1739.4 287.1h1.3v1.3h-1.3zM1742.7 289.5h1.1v1.1h-1.1zM1748.2 288.7h0.7v0.7h-0.7zM1744.0 285.8h1.1v1.1h-1.1zM1731.7 285.6h1.0v1.0h-1.0zM1735.0 279.9h1.2v1.2h-1.2zM1732.9 284.4h0.9v0.9h-0.9zM1732.2 286.9h1.2v1.2h-1.2zM1743.4 290.6h0.8v0.8h-0.8zM1742.1 293.7h1.1v1.1h-1.1zM1733.8 280.8h1.0v1.0h-1.0zM1737.5 285.6h0.9v0.9h-0.9zM1737.1 293.1h0.9v0.9h-0.9zM1740.9 285.2h0.8v0.8h-0.8zM1745.3 283.6h0.9v0.9h-0.9zM1726.6 291.9h0.7v0.7h-0.7zM1733.8 283.2h1.2v1.2h-1.2zM1747.0 290.4h1.3v1.3h-1.3zM1740.5 287.5h1.3v1.3h-1.3zM1738.2 283.1h1.2v1.2h-1.2zM1728.9 285.1h1.1v1.1h-1.1zM1730.5 288.5h1.3v1.3h-1.3zM1733.6 283.1h0.9v0.9h-0.9zM1731.5 282.6h0.8v0.8h-0.8zM1721.5 285.7h0.6v0.6h-0.6zM1734.9 292.6h1.4v1.4h-1.4zM1736.3 287.0h1.1v1.1h-1.1zM1739.1 289.8h0.7v0.7h-0.7zM1721.0 287.0h1.4v1.4h-1.4zM1726.1 292.6h1.1v1.1h-1.1zM1746.9 290.4h0.8v0.8h-0.8zM1740.0 286.6h1.3v1.3h-1.3zM1725.0 286.5h0.7v0.7h-0.7zM1722.8 287.5h1.0v1.0h-1.0zM1745.2 286.3h1.3v1.3h-1.3zM1743.0 292.1h1.1v1.1h-1.1zM1741.0 283.9h1.0v1.0h-1.0zM1737.7 283.3h0.9v0.9h-0.9zM1741.4 281.7h1.0v1.0h-1.0zM1747.2 287.7h0.9v0.9h-0.9zM1735.7 292.0h0.7v0.7h-0.7zM1741.8 281.0h1.4v1.4h-1.4zM1732.4 284.1h0.9v0.9h-0.9zM1735.4 287.0h0.8v0.8h-0.8zM1738.4 289.7h0.8v0.8h-0.8zM1732.3 285.6h1.3v1.3h-1.3zM1729.7 288.4h0.6v0.6h-0.6zM1726.8 286.3h1.0v1.0h-1.0zM1741.5 290.0h1.0v1.0h-1.0zM1743.6 289.9h1.3v1.3h-1.3zM1730.7 285.5h1.1v1.1h-1.1zM1739.6 288.5h0.6v0.6h-0.6zM1729.2 286.4h0.8v0.8h-0.8zM1744.6 292.2h0.7v0.7h-0.7zM1729.3 280.6h0.9v0.9h-0.9zM1728.0 284.7h1.3v1.3h-1.3zM1733.5 284.9h1.2v1.2h-1.2zM1741.2 291.3h0.7v0.7h-0.7zM1723.7 287.6h1.2v1.2h-1.2zM1733.5 288.7h0.9v0.9h-0.9zM1743.9 284.0h1.1v1.1h-1.1zM1736.1 280.6h1.4v1.4h-1.4zM1746.5 285.1h1.2v1.2h-1.2zM1739.5 290.2h1.2v1.2h-1.2zM1723.6 283.4h1.2v1.2h-1.2zM1732.2 289.9h1.1v1.1h-1.1zM1742.6 290.6h0.8v0.8h-0.8zM1725.8 290.8h1.1v1.1h-1.1zM1732.5 285.7h1.3v1.3h-1.3zM1731.3 279.7h1.1v1.1h-1.1zM1727.0 281.0h1.2v1.2h-1.2zM1733.1 285.8h0.6v0.6h-0.6zM1732.3 279.8h0.9v0.9h-0.9zM1737.3 292.2h1.3v1.3h-1.3zM1735.2 284.1h0.7v0.7h-0.7zM1738.2 293.7h0.8v0.8h-0.8zM1741.9 283.7h0.7v0.7h-0.7zM1730.5 288.5h1.3v1.3h-1.3zM1743.9 287.7h0.9v0.9h-0.9zM1741.4 287.9h1.4v1.4h-1.4zM1740.7 283.0h1.3v1.3h-1.3zM1745.9 283.0h1.2v1.2h-1.2zM1725.9 284.7h1.2v1.2h-1.2zM1723.9 282.3h0.7v0.7h-0.7zM1744.8 282.9h0.9v0.9h-0.9zM1739.3 283.5h0.9v0.9h-0.9zM1722.8 283.3h0.8v0.8h-0.8zM1741.5 281.7h1.3v1.3h-1.3zM1731.5 293.2h1.3v1.3h-1.3zM1743.7 282.5h1.3v1.3h-1.3zM1728.1 282.6h0.7v0.7h-0.7zM1721.3 286.1h1.4v1.4h-1.4zM1742.4 288.2h0.8v0.8h-0.8zM1738.3 284.1h1.2v1.2h-1.2zM1737.7 291.4h1.4v1.4h-1.4zM1742.5 291.3h0.8v0.8h-0.8zM1735.1 284.9h1.1v1.1h-1.1zM1734.4 294.8h0.8v0.8h-0.8zM1733.8 285.8h1.4v1.4h-1.4zM1726.1 281.3h1.2v1.2h-1.2zM1746.2 289.5h0.9v0.9h-0.9zM1739.0 294.2h1.1v1.1h-1.1zM1732.8 288.7h1.1v1.1h-1.1zM1741.4 288.4h0.6v0.6h-0.6zM1740.7 293.1h0.8v0.8h-0.8zM1742.4 286.6h1.2v1.2h-1.2zM1734.0 280.6h1.1v1.1h-1.1zM1743.1 292.6h1.3v1.3h-1.3zM1729.1 286.3h0.6v0.6h-0.6zM1734.5 294.9h0.8v0.8h-0.8zM1733.1 292.7h0.6v0.6h-0.6zM1738.0 280.2h0.8v0.8h-0.8zM1748.0 288.4h1.2v1.2h-1.2zM1735.6 283.3h1.4v1.4h-1.4zM1733.4 285.9h1.4v1.4h-1.4zM1733.1 283.7h1.3v1.3h-1.3zM1725.8 283.3h0.6v0.6h-0.6zM1737.8 293.9h0.6v0.6h-0.6zM1736.3 289.0h1.1v1.1h-1.1zM1743.0 292.4h0.9v0.9h-0.9zM1737.7 279.5h1.4v1.4h-1.4zM1738.0 291.5h1.2v1.2h-1.2zM1728.3 293.7h0.8v0.8h-0.8zM1730.0 284.1h1.2v1.2h-1.2zM1733.1 292.1h1.2v1.2h-1.2zM1737.5 284.4h0.7v0.7h-0.7zM1737.9 293.8h1.1v1.1h-1.1zM1732.4 280.0h0.8v0.8h-0.8zM1734.0 287.0h0.9v0.9h-0.9zM1729.2 284.6h1.2v1.2h-1.2zM1737.2 292.2h1.1v1.1h-1.1zM1737.0 293.4h0.9v0.9h-0.9zM1739.3 287.8h1.1v1.1h-1.1zM1740.1 281.1h1.3v1.3h-1.3zM1728.8 280.9h1.3v1.3h-1.3zM1726.6 283.7h0.7v0.7h-0.7zM1735.4 289.3h0.7v0.7h-0.7zM1729.1 289.7h1.0v1.0h-1.0zM1738.4 283.3h1.3v1.3h-1.3zM1738.1 284.0h1.1v1.1h-1.1zM1736.2 288.9h0.7v0.7h-0.7zM1735.3 287.7h0.6v0.6h-0.6zM1739.6 280.0h1.3v1.3h-1.3zM1736.9 287.5h1.3v1.3h-1.3zM1729.2 290.3h1.2v1.2h-1.2zM1727.1 286.1h0.7v0.7h-0.7zM1743.9 291.5h1.3v1.3h-1.3zM1741.4 287.9h1.0v1.0h-1.0zM1734.0 292.6h1.0v1.0h-1.0zM1734.6 289.7h0.9v0.9h-0.9zM1736.9 284.2h1.0v1.0h-1.0zM1738.9 281.4h0.9v0.9h-0.9zM1746.1 283.9h1.4v1.4h-1.4zM1732.0 292.3h0.9v0.9h-0.9zM1740.9 281.7h1.0v1.0h-1.0zM1721.8 286.3h0.9v0.9h-0.9zM1739.0 289.5h0.8v0.8h-0.8zM1746.4 291.5h1.0v1.0h-1.0zM1737.8 281.9h1.0v1.0h-1.0zM1737.0 294.5h0.9v0.9h-0.9zM1725.0 290.8h1.3v1.3h-1.3zM1744.7 286.9h0.9v0.9h-0.9zM1739.2 282.4h0.7v0.7h-0.7zM1727.3 287.6h0.8v0.8h-0.8zM1736.2 282.3h1.1v1.1h-1.1zM1733.5 289.6h1.2v1.2h-1.2zM1736.8 280.4h1.1v1.1h-1.1zM1739.5 292.0h1.3v1.3h-1.3zM1737.3 281.0h1.1v1.1h-1.1zM1736.6 288.7h1.3v1.3h-1.3zM1742.0 287.5h0.9v0.9h-0.9zM1731.4 280.6h1.3v1.3h-1.3zM1741.6 285.2h0.8v0.8h-0.8zM1740.8 290.2h0.6v0.6h-0.6zM1745.3 285.5h1.0v1.0h-1.0zM1747.5 289.7h0.8v0.8h-0.8zM1735.8 283.4h0.8v0.8h-0.8zM1741.7 291.4h0.8v0.8h-0.8zM1724.3 284.1h0.8v0.8h-0.8zM1741.8 291.2h0.9v0.9h-0.9zM1727.0 288.6h0.7v0.7h-0.7zM1743.6 291.8h1.1v1.1h-1.1zM1730.7 281.1h1.0v1.0h-1.0zM1739.4 294.2h1.0v1.0h-1.0zM1728.1 288.1h0.9v0.9h-0.9zM1743.9 286.4h1.2v1.2h-1.2zM1742.7 291.4h0.8v0.8h-0.8zM1735.8 291.4h0.9v0.9h-0.9zM1729.5 283.0h1.3v1.3h-1.3zM1742.3 293.1h0.9v0.9h-0.9zM1737.3 282.2h0.8v0.8h-0.8zM1743.8 283.1h1.2v1.2h-1.2zM1723.3 286.0h1.4v1.4h-1.4zM1734.2 279.1h0.9v0.9h-0.9zM1731.1 294.2h1.3v1.3h-1.3zM1742.1 283.6h0.9v0.9h-0.9zM1741.0 285.8h0.7v0.7h-0.7zM1738.6 290.9h0.9v0.9h-0.9zM1728.0 290.6h0.6v0.6h-0.6zM1729.5 291.8h0.6v0.6h-0.6zM1721.8 287.9h1.1v1.1h-1.1zM1747.2 284.5h1.0v1.0h-1.0zM1738.4 287.3h1.0v1.0h-1.0zM1739.4 283.2h0.7v0.7h-0.7zM1735.6 281.1h1.0v1.0h-1.0zM1742.2 291.3h1.0v1.0h-1.0zM1731.7 279.6h0.6v0.6h-0.6zM1738.9 283.0h0.9v0.9h-0.9zM1728.0 293.0h0.9v0.9h-0.9zM1743.7 289.4h0.7v0.7h-0.7zM1738.1 287.2h0.9v0.9h-0.9zM1734.7 287.1h0.7v0.7h-0.7zM1743.4 283.6h1.4v1.4h-1.4zM1721.8 284.9h1.1v1.1h-1.1zM1732.6 288.2h0.7v0.7h-0.7zM1738.0 280.7h0.8v0.8h-0.8zM1740.8 292.5h1.3v1.3h-1.3zM1735.1 295.0h1.0v1.0h-1.0zM1736.6 290.3h1.2v1.2h-1.2zM1740.7 285.4h0.8v0.8h-0.8zM1739.0 289.9h0.8v0.8h-0.8zM1729.1 288.9h1.1v1.1h-1.1zM1735.5 291.1h0.9v0.9h-0.9zM1736.5 288.6h0.6v0.6h-0.6zM1746.5 287.2h0.6v0.6h-0.6zM1721.9 288.0h1.1v1.1h-1.1zM1731.9 291.8h0.9v0.9h-0.9zM1733.6 288.7h0.7v0.7h-0.7zM1739.0 289.9h0.8v0.8h-0.8zM1743.8 290.8h0.7v0.7h-0.7zM1723.4 286.6h1.0v1.0h-1.0zM1734.3 279.9h0.9v0.9h-0.9zM1735.7 288.6h1.1v1.1h-1.1zM1729.9 290.2h0.6v0.6h-0.6zM1740.6 293.8h1.0v1.0h-1.0zM1742.4 281.0h0.8v0.8h-0.8zM1737.0 294.4h0.8v0.8h-0.8zM1724.0 282.5h1.0v1.0h-1.0zM1722.8 290.6h1.3v1.3h-1.3zM1745.6 284.0h0.8v0.8h-0.8zM1737.0 287.3h1.3v1.3h-1.3zM1722.3 285.0h1.4v1.4h-1.4zM1736.1 294.9h0.8v0.8h-0.8zM1738.1 290.8h1.4v1.4h-1.4zM1742.7 285.2h1.0v1.0h-1.0zM1740.6 280.6h1.3v1.3h-1.3zM1730.6 289.9h1.0v1.0h-1.0zM1745.0 284.5h1.3v1.3h-1.3zM1738.3 292.4h1.3v1.3h-1.3zM1723.7 283.9h1.2v1.2h-1.2zM1724.1 289.3h1.1v1.1h-1.1zM1725.6 289.1h1.2v1.2h-1.2zM1745.2 281.6h0.9v0.9h-0.9zM1730.3 281.7h1.3v1.3h-1.3zM1735.6 292.5h0.8v0.8h-0.8zM1738.9 280.6h0.6v0.6h-0.6zM1739.1 288.9h1.1v1.1h-1.1zM1736.3 282.4h0.6v0.6h-0.6zM1725.6 283.8h0.9v0.9h-0.9zM1733.9 291.7h0.8v0.8h-0.8zM1738.3 282.4h1.2v1.2h-1.2zM1728.6 285.8h0.8v0.8h-0.8zM1728.8 280.5h1.3v1.3h-1.3zM1739.0 290.4h0.6v0.6h-0.6zM1738.2 291.6h1.2v1.2h-1.2zM1744.3 283.9h0.7v0.7h-0.7zM1731.2 289.1h0.8v0.8h-0.8zM1726.2 284.4h0.7v0.7h-0.7zM1732.8 294.5h1.1v1.1h-1.1zM1728.6 284.3h0.8v0.8h-0.8zM1735.1 286.0h1.1v1.1h-1.1zM1745.7 285.3h0.6v0.6h-0.6zM1747.1 288.5h0.7v0.7h-0.7zM1725.0 290.0h1.1v1.1h-1.1zM1732.3 293.4h1.3v1.3h-1.3zM1726.4 288.0h1.1v1.1h-1.1zM1743.1 282.3h1.3v1.3h-1.3zM1737.7 279.3h0.8v0.8h-0.8zM1732.0 283.8h0.7v0.7h-0.7zM1727.6 293.5h0.8v0.8h-0.8zM1730.1 294.2h1.4v1.4h-1.4zM1735.4 282.3h1.3v1.3h-1.3zM1736.3 287.3h0.6v0.6h-0.6zM1731.5 290.4h1.3v1.3h-1.3zM1722.8 289.4h1.0v1.0h-1.0zM1729.3 290.4h0.6v0.6h-0.6zM1721.9 289.2h1.4v1.4h-1.4zM1739.0 286.0h0.9v0.9h-0.9zM1737.8 284.3h0.6v0.6h-0.6zM1736.1 289.2h1.2v1.2h-1.2zM1731.8 279.3h0.6v0.6h-0.6z"/><path d="M1747,300.5 L1752,300.5 M1749.5,298 L1749.5,303" stroke="#000" stroke-width="1.3"/><path fill="#000" opacity="0.8" d="M1766.4 279.3h0.5v0.5h-0.5zM1782.2 291.2h0.9v0.9h-0.9zM1775.5 288.6h0.9v0.9h-0.9zM1774.4 292.2h0.5v0.5h-0.5zM1778.2 290.4h0.8v0.8h-0.8zM1770.5 286.5h0.7v0.7h-0.7zM1779.4 289.9h0.5v0.5h-0.5zM1763.3 294.7h0.9v0.9h-0.9zM1764.7 280.9h0.6v0.6h-0.6zM1764.5 278.9h0.5v0.5h-0.5zM1774.4 282.5h0.6v0.6h-0.6zM1762.8 280.1h0.5v0.5h-0.5zM1773.2 293.0h0.6v0.6h-0.6zM1756.1 286.6h0.4v0.4h-0.4zM1764.3 288.8h0.5v0.5h-0.5zM1758.4 282.4h0.7v0.7h-0.7zM1759.1 284.3h1.0v1.0h-1.0zM1777.9 285.9h0.5v0.5h-0.5zM1779.4 283.5h1.0v1.0h-1.0zM1777.5 293.4h0.5v0.5h-0.5zM1773.3 289.3h0.7v0.7h-0.7zM1760.2 290.7h1.0v1.0h-1.0zM1760.4 289.9h0.7v0.7h-0.7zM1764.7 290.1h0.4v0.4h-0.4zM1769.6 294.6h0.9v0.9h-0.9zM1766.4 281.5h0.7v0.7h-0.7zM1772.6 291.1h1.1v1.1h-1.1zM1762.4 284.0h0.8v0.8h-0.8zM1762.4 287.2h0.7v0.7h-0.7zM1758.0 290.6h1.0v1.0h-1.0zM1767.8 292.9h0.6v0.6h-0.6zM1774.9 286.0h0.7v0.7h-0.7zM1779.5 287.5h0.7v0.7h-0.7zM1775.4 287.3h0.8v0.8h-0.8zM1762.4 287.8h0.5v0.5h-0.5zM1766.3 291.7h0.5v0.5h-0.5zM1764.7 284.5h0.8v0.8h-0.8zM1769.6 286.0h0.8v0.8h-0.8zM1761.4 280.5h0.9v0.9h-0.9zM1776.0 280.8h0.6v0.6h-0.6zM1774.7 279.8h0.7v0.7h-0.7zM1772.8 286.1h1.0v1.0h-1.0zM1763.6 292.2h0.9v0.9h-0.9zM1774.9 292.5h0.4v0.4h-0.4zM1783.3 289.0h0.6v0.6h-0.6zM1765.6 288.4h1.0v1.0h-1.0zM1757.1 286.6h0.6v0.6h-0.6zM1763.2 288.0h0.8v0.8h-0.8zM1767.2 280.4h0.8v0.8h-0.8zM1765.0 295.2h0.4v0.4h-0.4zM1775.7 293.4h1.1v1.1h-1.1zM1774.0 283.3h1.0v1.0h-1.0zM1759.8 288.8h0.9v0.9h-0.9zM1760.3 281.3h1.0v1.0h-1.0zM1764.7 294.8h0.6v0.6h-0.6zM1767.8 283.7h0.8v0.8h-0.8zM1765.6 295.5h0.9v0.9h-0.9zM1759.6 292.7h0.5v0.5h-0.5zM1769.8 279.8h0.4v0.4h-0.4zM1765.4 287.8h1.1v1.1h-1.1zM1779.0 291.2h0.8v0.8h-0.8zM1779.6 293.2h0.8v0.8h-0.8zM1764.7 283.9h0.5v0.5h-0.5zM1768.8 288.5h0.6v0.6h-0.6zM1761.3 287.1h0.9v0.9h-0.9zM1774.0 290.2h0.8v0.8h-0.8zM1767.0 282.3h0.6v0.6h-0.6zM1776.0 290.8h0.7v0.7h-0.7zM1772.0 282.8h0.7v0.7h-0.7zM1769.8 282.9h0.5v0.5h-0.5zM1783.2 285.5h0.6v0.6h-0.6zM1768.0 293.0h0.6v0.6h-0.6zM1773.0 278.8h0.9v0.9h-0.9zM1759.6 291.9h1.0v1.0h-1.0zM1774.6 293.7h0.5v0.5h-0.5zM1782.4 286.3h0.7v0.7h-0.7zM1769.6 282.1h0.5v0.5h-0.5zM1766.2 286.8h0.7v0.7h-0.7zM1776.4 281.5h0.6v0.6h-0.6zM1772.5 293.5h0.8v0.8h-0.8zM1774.8 284.9h0.7v0.7h-0.7zM1761.9 288.8h0.6v0.6h-0.6zM1762.3 291.4h0.6v0.6h-0.6zM1765.6 292.9h1.0v1.0h-1.0zM1761.8 287.6h0.5v0.5h-0.5zM1761.8 286.4h0.5v0.5h-0.5zM1759.2 288.1h0.7v0.7h-0.7zM1769.0 279.9h0.5v0.5h-0.5zM1779.7 289.0h0.8v0.8h-0.8zM1763.7 285.5h0.7v0.7h-0.7zM1768.2 281.4h0.8v0.8h-0.8zM1771.5 294.1h0.7v0.7h-0.7zM1782.2 287.1h1.0v1.0h-1.0zM1783.5 286.3h0.9v0.9h-0.9zM1762.9 288.0h0.9v0.9h-0.9zM1763.1 289.5h0.5v0.5h-0.5zM1760.7 282.3h0.9v0.9h-0.9zM1773.6 290.3h0.8v0.8h-0.8zM1779.0 293.2h1.0v1.0h-1.0zM1765.1 283.6h0.8v0.8h-0.8zM1770.8 281.7h0.9v0.9h-0.9zM1759.3 281.9h0.9v0.9h-0.9zM1765.0 281.2h1.0v1.0h-1.0zM1760.7 282.5h0.6v0.6h-0.6zM1778.2 291.2h0.6v0.6h-0.6zM1776.5 286.2h1.0v1.0h-1.0zM1766.9 290.4h0.8v0.8h-0.8zM1763.9 295.1h0.8v0.8h-0.8zM1776.3 290.0h0.5v0.5h-0.5zM1759.8 287.3h0.6v0.6h-0.6zM1765.6 281.7h1.0v1.0h-1.0zM1766.9 282.9h1.0v1.0h-1.0zM1776.7 287.8h0.5v0.5h-0.5zM1779.8 285.0h1.0v1.0h-1.0zM1774.2 286.8h1.0v1.0h-1.0zM1781.6 288.0h0.9v0.9h-0.9zM1760.1 292.6h0.9v0.9h-0.9zM1762.6 287.1h0.5v0.5h-0.5zM1779.1 290.1h0.8v0.8h-0.8zM1773.9 293.1h0.5v0.5h-0.5zM1766.3 294.0h0.5v0.5h-0.5zM1764.9 286.5h1.0v1.0h-1.0zM1773.2 295.4h1.0v1.0h-1.0zM1777.3 285.9h0.9v0.9h-0.9zM1782.5 290.8h0.9v0.9h-0.9zM1775.1 287.8h0.5v0.5h-0.5zM1762.2 294.1h0.9v0.9h-0.9zM1764.2 294.2h0.4v0.4h-0.4zM1761.6 285.4h0.5v0.5h-0.5zM1779.9 283.5h1.1v1.1h-1.1zM1763.0 281.5h0.5v0.5h-0.5zM1756.9 288.3h0.8v0.8h-0.8zM1763.9 282.3h0.7v0.7h-0.7zM1776.5 287.3h0.6v0.6h-0.6zM1772.7 288.1h0.9v0.9h-0.9zM1781.7 286.8h1.0v1.0h-1.0zM1773.2 295.0h0.7v0.7h-0.7zM1774.2 283.5h0.6v0.6h-0.6zM1763.5 286.3h0.6v0.6h-0.6zM1768.2 279.1h1.1v1.1h-1.1zM1765.3 282.6h0.7v0.7h-0.7zM1760.8 283.4h1.0v1.0h-1.0zM1757.5 283.4h0.7v0.7h-0.7zM1767.8 287.5h0.6v0.6h-0.6zM1768.5 287.1h0.7v0.7h-0.7zM1775.4 290.1h1.0v1.0h-1.0zM1774.1 285.5h0.8v0.8h-0.8zM1766.8 287.2h0.6v0.6h-0.6zM1761.1 285.7h0.8v0.8h-0.8zM1780.0 289.8h0.8v0.8h-0.8zM1773.9 293.3h1.0v1.0h-1.0zM1778.5 282.5h0.8v0.8h-0.8zM1770.0 280.9h0.9v0.9h-0.9zM1762.7 291.8h0.9v0.9h-0.9zM1760.6 283.4h0.7v0.7h-0.7zM1763.3 292.9h0.7v0.7h-0.7zM1762.0 289.0h0.6v0.6h-0.6zM1760.8 281.0h0.6v0.6h-0.6zM1764.0 281.7h0.8v0.8h-0.8zM1765.4 282.1h0.4v0.4h-0.4zM1763.4 291.9h0.8v0.8h-0.8zM1780.2 283.8h0.9v0.9h-0.9zM1762.6 293.5h0.5v0.5h-0.5zM1777.4 282.8h0.7v0.7h-0.7zM1766.3 280.8h1.1v1.1h-1.1zM1772.6 288.6h0.8v0.8h-0.8zM1771.0 291.2h1.1v1.1h-1.1zM1762.5 286.1h0.7v0.7h-0.7zM1771.1 291.5h0.5v0.5h-0.5zM1781.9 285.9h0.7v0.7h-0.7zM1780.7 292.6h1.0v1.0h-1.0zM1780.8 291.7h0.8v0.8h-0.8zM1779.2 286.4h0.7v0.7h-0.7zM1780.6 287.4h0.6v0.6h-0.6zM1774.9 284.1h1.0v1.0h-1.0zM1763.7 294.0h0.9v0.9h-0.9zM1779.7 284.2h0.7v0.7h-0.7zM1769.5 291.3h0.5v0.5h-0.5zM1767.6 291.8h1.0v1.0h-1.0zM1779.9 287.3h0.8v0.8h-0.8zM1776.4 293.3h0.6v0.6h-0.6zM1769.8 283.3h1.0v1.0h-1.0zM1768.4 289.6h0.5v0.5h-0.5zM1771.4 290.1h0.6v0.6h-0.6zM1778.4 286.0h0.7v0.7h-0.7zM1770.1 284.6h0.5v0.5h-0.5zM1775.5 283.2h0.5v0.5h-0.5zM1774.9 294.1h1.1v1.1h-1.1zM1760.5 291.5h0.7v0.7h-0.7zM1772.2 291.8h0.7v0.7h-0.7zM1770.0 295.0h0.5v0.5h-0.5zM1760.9 292.1h0.5v0.5h-0.5zM1780.7 285.4h0.9v0.9h-0.9zM1772.2 290.8h1.0v1.0h-1.0zM1771.7 286.8h1.0v1.0h-1.0zM1771.2 289.4h0.8v0.8h-0.8zM1780.6 291.6h1.0v1.0h-1.0zM1768.8 290.3h0.8v0.8h-0.8zM1770.0 285.2h0.9v0.9h-0.9zM1776.1 290.9h0.5v0.5h-0.5zM1778.9 290.2h0.6v0.6h-0.6zM1781.3 282.5h0.9v0.9h-0.9zM1758.8 286.5h0.6v0.6h-0.6zM1759.8 288.3h0.7v0.7h-0.7zM1757.9 289.8h1.1v1.1h-1.1zM1768.9 278.7h0.6v0.6h-0.6zM1775.9 288.9h0.8v0.8h-0.8zM1771.1 279.3h1.0v1.0h-1.0zM1771.4 282.2h0.5v0.5h-0.5zM1762.0 287.6h1.0v1.0h-1.0zM1778.5 283.3h0.9v0.9h-0.9zM1768.5 280.6h0.7v0.7h-0.7zM1782.0 284.7h0.8v0.8h-0.8zM1775.4 286.7h0.9v0.9h-0.9zM1762.5 285.4h0.5v0.5h-0.5zM1758.6 282.9h0.5v0.5h-0.5zM1781.2 281.7h0.6v0.6h-0.6zM1760.8 285.0h0.6v0.6h-0.6zM1775.3 290.2h1.0v1.0h-1.0zM1777.3 279.6h0.8v0.8h-0.8zM1766.5 287.0h0.7v0.7h-0.7zM1757.8 282.6h0.5v0.5h-0.5zM1768.3 285.4h1.1v1.1h-1.1zM1773.5 294.2h0.8v0.8h-0.8zM1772.6 292.9h0.7v0.7h-0.7zM1773.8 292.1h0.5v0.5h-0.5zM1766.4 278.4h0.8v0.8h-0.8zM1761.9 290.8h0.5v0.5h-0.5zM1769.2 279.5h0.5v0.5h-0.5zM1766.5 289.2h0.9v0.9h-0.9zM1783.0 287.8h0.5v0.5h-0.5zM1773.1 283.6h0.8v0.8h-0.8zM1766.8 278.5h1.0v1.0h-1.0zM1776.8 293.2h0.7v0.7h-0.7zM1774.7 292.3h1.0v1.0h-1.0zM1781.6 287.9h0.8v0.8h-0.8zM1777.1 282.8h0.6v0.6h-0.6zM1772.7 284.6h0.9v0.9h-0.9zM1769.1 289.0h0.5v0.5h-0.5zM1773.3 284.1h1.0v1.0h-1.0zM1778.1 293.9h0.5v0.5h-0.5zM1764.5 281.5h0.8v0.8h-0.8zM1775.9 285.1h1.1v1.1h-1.1zM1758.6 283.6h0.6v0.6h-0.6zM1781.9 286.9h0.7v0.7h-0.7zM1772.7 295.3h0.8v0.8h-0.8zM1783.1 286.4h0.9v0.9h-0.9zM1769.0 283.4h1.0v1.0h-1.0zM1769.0 284.3h0.5v0.5h-0.5zM1775.3 289.5h0.9v0.9h-0.9zM1771.3 279.5h0.7v0.7h-0.7zM1775.0 285.7h0.6v0.6h-0.6zM1763.3 288.7h0.9v0.9h-0.9zM1776.1 280.3h0.6v0.6h-0.6zM1763.1 284.6h0.8v0.8h-0.8zM1764.6 286.3h1.0v1.0h-1.0zM1774.7 279.7h0.5v0.5h-0.5zM1771.2 294.8h1.0v1.0h-1.0zM1760.0 281.1h0.7v0.7h-0.7zM1771.4 293.1h0.6v0.6h-0.6zM1760.9 292.4h0.6v0.6h-0.6zM1767.5 280.3h0.4v0.4h-0.4zM1757.0 286.4h0.9v0.9h-0.9zM1776.6 281.2h1.1v1.1h-1.1zM1778.9 288.4h0.6v0.6h-0.6zM1770.3 282.1h0.9v0.9h-0.9zM1769.0 286.0h0.8v0.8h-0.8zM1766.6 291.0h0.9v0.9h-0.9zM1765.6 283.9h0.9v0.9h-0.9zM1772.9 288.0h1.0v1.0h-1.0zM1782.3 283.2h1.1v1.1h-1.1zM1769.4 280.2h0.8v0.8h-0.8zM1756.7 285.1h1.1v1.1h-1.1zM1764.2 288.6h0.8v0.8h-0.8zM1758.8 290.8h1.0v1.0h-1.0zM1767.1 285.2h0.8v0.8h-0.8zM1777.1 291.8h1.0v1.0h-1.0zM1765.6 281.6h0.5v0.5h-0.5zM1781.9 283.5h0.7v0.7h-0.7zM1780.9 289.4h0.7v0.7h-0.7zM1763.1 290.3h0.6v0.6h-0.6zM1777.2 292.6h0.8v0.8h-0.8zM1759.0 290.3h0.8v0.8h-0.8zM1773.8 291.0h0.8v0.8h-0.8zM1764.4 280.8h0.9v0.9h-0.9zM1762.3 293.1h0.8v0.8h-0.8zM1769.9 290.2h0.8v0.8h-0.8zM1777.8 279.8h1.0v1.0h-1.0zM1774.8 280.8h0.6v0.6h-0.6zM1766.3 295.0h0.6v0.6h-0.6zM1759.7 287.7h0.4v0.4h-0.4zM1774.8 289.6h0.9v0.9h-0.9zM1770.9 284.4h0.5v0.5h-0.5zM1775.7 286.7h1.0v1.0h-1.0zM1758.8 282.7h0.9v0.9h-0.9zM1780.1 291.5h0.9v0.9h-0.9zM1783.1 289.3h0.6v0.6h-0.6zM1760.1 288.4h0.8v0.8h-0.8zM1766.8 286.0h1.0v1.0h-1.0zM1765.7 286.6h0.8v0.8h-0.8zM1773.4 292.5h0.9v0.9h-0.9zM1770.1 283.4h0.6v0.6h-0.6zM1780.9 285.6h0.6v0.6h-0.6zM1764.6 284.1h0.5v0.5h-0.5zM1767.4 284.5h0.5v0.5h-0.5zM1764.0 279.0h0.5v0.5h-0.5zM1770.0 283.6h0.5v0.5h-0.5zM1772.0 287.1h0.9v0.9h-0.9zM1771.3 286.4h0.5v0.5h-0.5zM1778.5 288.7h0.6v0.6h-0.6zM1774.5 294.6h0.5v0.5h-0.5zM1766.4 284.5h0.9v0.9h-0.9zM1774.3 289.9h1.1v1.1h-1.1zM1769.0 293.0h0.9v0.9h-0.9zM1780.4 287.0h0.5v0.5h-0.5zM1764.3 280.5h0.8v0.8h-0.8zM1760.5 292.4h0.5v0.5h-0.5zM1760.1 285.1h1.0v1.0h-1.0zM1771.3 282.7h0.7v0.7h-0.7zM1762.9 283.9h0.5v0.5h-0.5zM1779.4 286.7h0.5v0.5h-0.5zM1771.0 287.9h1.0v1.0h-1.0zM1776.7 292.2h1.0v1.0h-1.0zM1771.2 280.1h0.6v0.6h-0.6zM1764.2 279.8h0.6v0.6h-0.6zM1771.2 292.7h0.8v0.8h-0.8zM1778.3 282.6h0.6v0.6h-0.6zM1769.2 283.6h0.5v0.5h-0.5zM1780.6 287.4h0.8v0.8h-0.8zM1759.8 288.5h0.6v0.6h-0.6zM1772.6 293.7h0.7v0.7h-0.7zM1756.6 287.0h0.7v0.7h-0.7zM1769.9 284.8h0.7v0.7h-0.7zM1775.9 288.3h0.6v0.6h-0.6zM1765.8 289.4h1.0v1.0h-1.0zM1767.6 291.7h0.5v0.5h-0.5zM1761.6 292.8h0.8v0.8h-0.8zM1778.6 282.6h0.8v0.8h-0.8zM1758.5 290.6h0.7v0.7h-0.7zM1774.2 290.3h0.9v0.9h-0.9zM1775.6 288.4h0.8v0.8h-0.8zM1766.1 281.4h0.9v0.9h-0.9zM1760.6 290.3h0.5v0.5h-0.5zM1758.2 291.7h0.8v0.8h-0.8zM1764.0 293.0h1.1v1.1h-1.1zM1761.2 288.2h1.0v1.0h-1.0zM1773.9 283.5h0.9v0.9h-0.9zM1767.5 292.1h1.0v1.0h-1.0zM1761.3 293.5h0.7v0.7h-0.7zM1773.4 284.6h0.7v0.7h-0.7zM1782.7 288.8h1.0v1.0h-1.0zM1760.5 287.5h1.1v1.1h-1.1zM1764.1 290.3h0.5v0.5h-0.5zM1780.9 283.1h0.8v0.8h-0.8zM1768.4 278.8h0.9v0.9h-0.9zM1778.8 291.6h1.0v1.0h-1.0zM1761.0 287.9h0.8v0.8h-0.8zM1772.4 291.0h0.9v0.9h-0.9zM1774.7 286.9h0.9v0.9h-0.9zM1767.3 287.0h0.5v0.5h-0.5zM1766.0 294.0h0.5v0.5h-0.5zM1762.3 292.1h0.9v0.9h-0.9zM1782.8 286.8h0.6v0.6h-0.6z"/><path d="M1781,300.5 L1786,300.5 M1783.5,298 L1783.5,303" stroke="#000" stroke-width="1.3"/><path fill="#000" opacity="1.0" d="M1801.4 283.4h1.1v1.1h-1.1zM1802.3 282.9h0.8v0.8h-0.8zM1802.2 276.0h1.2v1.2h-1.2zM1801.9 275.6h0.8v0.8h-0.8zM1800.9 281.4h1.2v1.2h-1.2zM1806.5 287.1h1.3v1.3h-1.3zM1804.6 294.0h1.5v1.5h-1.5zM1801.5 289.6h1.1v1.1h-1.1zM1805.4 280.5h1.4v1.4h-1.4zM1803.4 279.9h1.2v1.2h-1.2zM1803.8 288.7h1.0v1.0h-1.0zM1805.6 288.7h1.4v1.4h-1.4zM1805.3 286.2h0.8v0.8h-0.8zM1802.6 293.4h0.7v0.7h-0.7zM1804.4 283.4h1.1v1.1h-1.1zM1803.6 297.2h0.7v0.7h-0.7zM1800.4 287.5h0.6v0.6h-0.6zM1804.2 289.1h1.4v1.4h-1.4zM1803.3 282.4h1.4v1.4h-1.4zM1805.1 294.5h1.3v1.3h-1.3zM1803.5 285.8h0.6v0.6h-0.6zM1805.5 299.3h1.4v1.4h-1.4zM1803.9 288.6h1.2v1.2h-1.2zM1805.2 299.2h1.4v1.4h-1.4zM1804.7 275.5h1.3v1.3h-1.3zM1805.0 280.8h1.3v1.3h-1.3z"/><rect x="1815.5" y="299" width="5" height="5" fill="#ff8080" opacity="0.75"/><path d="M1815,300.5 L1820,300.5 M1817.5,298 L1817.5,303" stroke="#000" stroke-width="1.3"/><g stroke="#999" stroke-width="2.4" stroke-linecap="round" fill="none"><path d="M1826,274 L1829,280"/><path d="M1833,278 L1837,276"/><path d="M1830,285 L1837,284"/><path d="M1824,286 L1826,283"/><path d="M1827,292 L1832,290"/><path d="M1835,289 L1836,293"/><path d="M1842,283 L1843,286"/><path d="M1829,289 L1834,291"/></g><rect x="1849.5" y="299" width="5" height="5" fill="#ff8080" opacity="0.75"/><path d="M1849,300.5 L1854,300.5 M1851.5,298 L1851.5,303" stroke="#000" stroke-width="1.3"/><path fill="#000" opacity="1.0" d="M1884.5 287.8h0.9v0.9h-0.9zM1885.2 286.0h0.9v0.9h-0.9zM1868.9 278.2h1.0v1.0h-1.0zM1879.1 287.3h0.7v0.7h-0.7zM1867.9 276.0h1.0v1.0h-1.0zM1872.6 277.4h0.6v0.6h-0.6zM1871.6 296.1h1.1v1.1h-1.1zM1861.1 291.9h0.8v0.8h-0.8zM1869.6 291.5h0.8v0.8h-0.8zM1867.6 285.1h1.2v1.2h-1.2zM1884.8 287.5h0.8v0.8h-0.8zM1879.4 284.6h0.5v0.5h-0.5zM1868.6 280.1h1.2v1.2h-1.2zM1867.0 280.1h1.0v1.0h-1.0zM1868.4 280.8h0.7v0.7h-0.7zM1865.6 279.6h0.6v0.6h-0.6zM1877.2 293.7h0.6v0.6h-0.6zM1862.7 285.8h0.7v0.7h-0.7zM1872.1 276.7h0.6v0.6h-0.6zM1859.7 280.2h1.0v1.0h-1.0zM1879.2 286.5h0.7v0.7h-0.7zM1868.6 292.1h0.6v0.6h-0.6zM1871.7 295.5h1.1v1.1h-1.1zM1872.4 284.6h1.1v1.1h-1.1zM1867.0 282.3h0.5v0.5h-0.5zM1875.5 283.6h0.7v0.7h-0.7zM1867.5 297.1h1.3v1.3h-1.3zM1883.9 281.4h1.2v1.2h-1.2zM1868.5 287.5h0.7v0.7h-0.7zM1875.2 290.2h0.6v0.6h-0.6zM1870.6 289.4h0.7v0.7h-0.7zM1876.5 282.3h0.9v0.9h-0.9zM1873.1 285.8h1.1v1.1h-1.1zM1869.5 286.4h1.2v1.2h-1.2zM1873.3 283.3h1.3v1.3h-1.3zM1861.4 282.5h0.7v0.7h-0.7zM1884.4 288.9h1.1v1.1h-1.1zM1873.2 289.0h1.0v1.0h-1.0zM1868.9 293.6h1.2v1.2h-1.2zM1867.3 285.4h1.1v1.1h-1.1zM1869.9 278.1h1.3v1.3h-1.3zM1860.0 288.5h0.6v0.6h-0.6zM1869.4 293.2h0.9v0.9h-0.9zM1866.9 286.7h1.1v1.1h-1.1zM1879.1 289.0h1.0v1.0h-1.0zM1880.5 288.0h1.1v1.1h-1.1zM1870.9 279.7h0.6v0.6h-0.6zM1872.0 275.8h0.6v0.6h-0.6zM1862.3 291.4h1.1v1.1h-1.1zM1876.0 297.4h1.0v1.0h-1.0zM1876.4 275.9h1.0v1.0h-1.0zM1868.1 281.3h0.7v0.7h-0.7zM1862.5 294.7h1.0v1.0h-1.0zM1869.5 298.2h0.9v0.9h-0.9zM1884.0 285.7h1.1v1.1h-1.1zM1863.6 296.9h0.9v0.9h-0.9zM1867.6 280.2h0.9v0.9h-0.9zM1876.1 293.5h0.8v0.8h-0.8zM1871.7 282.2h0.7v0.7h-0.7zM1865.6 280.5h1.2v1.2h-1.2zM1881.9 288.0h1.2v1.2h-1.2zM1872.3 279.9h0.9v0.9h-0.9zM1871.2 287.5h0.6v0.6h-0.6zM1873.9 298.1h0.7v0.7h-0.7zM1869.5 295.7h1.1v1.1h-1.1zM1867.0 281.6h0.8v0.8h-0.8zM1885.3 287.9h0.8v0.8h-0.8zM1870.2 292.3h0.9v0.9h-0.9zM1877.0 292.5h0.6v0.6h-0.6zM1876.0 295.1h0.8v0.8h-0.8zM1882.9 294.0h0.6v0.6h-0.6zM1865.1 290.4h0.6v0.6h-0.6zM1869.2 294.6h1.1v1.1h-1.1zM1871.5 294.4h1.2v1.2h-1.2zM1865.4 281.0h0.7v0.7h-0.7zM1875.2 275.7h0.7v0.7h-0.7zM1877.4 281.1h0.9v0.9h-0.9zM1879.3 288.0h0.7v0.7h-0.7zM1876.0 297.4h1.3v1.3h-1.3zM1866.4 296.8h0.8v0.8h-0.8zM1866.2 284.4h1.2v1.2h-1.2zM1860.5 286.1h1.1v1.1h-1.1zM1861.6 285.8h1.1v1.1h-1.1zM1860.8 288.5h0.8v0.8h-0.8zM1876.1 291.6h1.3v1.3h-1.3zM1870.3 286.1h0.7v0.7h-0.7zM1862.7 282.7h1.3v1.3h-1.3zM1875.3 285.2h1.1v1.1h-1.1zM1884.9 285.9h1.3v1.3h-1.3zM1863.3 293.5h1.1v1.1h-1.1zM1875.7 277.3h1.2v1.2h-1.2zM1865.0 296.1h1.0v1.0h-1.0zM1880.3 285.4h1.0v1.0h-1.0zM1880.4 279.0h1.1v1.1h-1.1zM1875.6 290.8h0.8v0.8h-0.8zM1870.4 285.2h1.0v1.0h-1.0zM1876.8 290.6h0.7v0.7h-0.7zM1859.9 283.9h1.3v1.3h-1.3zM1872.6 290.5h1.2v1.2h-1.2z"/><rect x="1883.5" y="299" width="5" height="5" fill="#ff8080" opacity="0.75"/><path d="M1883,300.5 L1888,300.5 M1885.5,298 L1885.5,303" stroke="#000" stroke-width="1.3"/><path fill="#000" opacity="0.8" d="M1722.9 312.8h0.9v0.9h-0.9zM1741.2 326.1h0.6v0.6h-0.6zM1727.4 322.3h1.0v1.0h-1.0zM1740.2 316.3h1.1v1.1h-1.1zM1744.1 318.0h1.0v1.0h-1.0zM1747.1 316.0h0.7v0.7h-0.7zM1726.0 311.1h0.7v0.7h-0.7zM1730.6 320.6h0.5v0.5h-0.5zM1737.4 312.5h0.9v0.9h-0.9zM1723.6 325.1h0.6v0.6h-0.6zM1745.5 325.9h0.6v0.6h-0.6zM1737.9 329.1h0.8v0.8h-0.8zM1744.7 312.6h0.7v0.7h-0.7zM1724.2 323.9h0.5v0.5h-0.5zM1731.5 330.4h1.0v1.0h-1.0zM1729.5 316.2h1.1v1.1h-1.1zM1737.0 313.7h0.7v0.7h-0.7zM1747.8 322.6h0.6v0.6h-0.6zM1740.9 309.5h0.9v0.9h-0.9zM1728.2 317.3h0.5v0.5h-0.5zM1733.6 319.1h0.8v0.8h-0.8zM1735.8 314.8h0.7v0.7h-0.7zM1729.4 318.6h0.6v0.6h-0.6zM1730.2 316.3h0.5v0.5h-0.5zM1737.6 333.3h1.0v1.0h-1.0zM1743.7 326.8h0.7v0.7h-0.7zM1742.4 321.4h0.9v0.9h-0.9zM1749.6 321.7h0.6v0.6h-0.6zM1726.6 331.1h0.5v0.5h-0.5zM1742.0 327.0h0.6v0.6h-0.6zM1730.2 329.7h1.0v1.0h-1.0zM1732.3 321.5h0.7v0.7h-0.7zM1740.9 312.6h0.5v0.5h-0.5zM1735.0 326.7h0.7v0.7h-0.7zM1729.9 330.4h0.9v0.9h-0.9zM1740.5 321.5h1.0v1.0h-1.0zM1744.5 311.2h0.5v0.5h-0.5zM1733.6 316.4h0.9v0.9h-0.9zM1737.5 332.6h1.0v1.0h-1.0zM1722.5 322.4h1.0v1.0h-1.0zM1744.4 313.0h0.8v0.8h-0.8zM1727.3 329.1h0.5v0.5h-0.5zM1730.8 321.1h0.5v0.5h-0.5zM1730.2 312.1h0.6v0.6h-0.6zM1742.7 317.6h0.8v0.8h-0.8zM1728.6 320.4h1.1v1.1h-1.1zM1735.8 306.8h0.6v0.6h-0.6zM1747.1 312.9h1.0v1.0h-1.0zM1737.6 325.0h0.5v0.5h-0.5zM1745.6 326.3h0.5v0.5h-0.5zM1726.3 321.8h0.9v0.9h-0.9zM1747.2 323.4h1.1v1.1h-1.1zM1732.2 328.5h0.9v0.9h-0.9zM1730.3 332.1h1.1v1.1h-1.1zM1736.8 329.5h0.5v0.5h-0.5zM1726.2 316.9h1.1v1.1h-1.1zM1732.9 306.2h1.0v1.0h-1.0zM1739.2 312.3h0.9v0.9h-0.9zM1741.7 325.4h1.0v1.0h-1.0zM1741.2 319.3h0.8v0.8h-0.8zM1725.2 326.2h0.8v0.8h-0.8zM1734.0 333.1h0.7v0.7h-0.7zM1737.0 308.3h1.1v1.1h-1.1zM1723.5 319.0h0.9v0.9h-0.9zM1735.4 322.9h1.0v1.0h-1.0zM1730.5 308.6h1.0v1.0h-1.0zM1739.3 332.5h0.8v0.8h-0.8zM1745.5 316.4h1.0v1.0h-1.0zM1740.7 322.0h0.8v0.8h-0.8zM1730.4 312.4h0.5v0.5h-0.5zM1738.0 317.5h1.0v1.0h-1.0zM1736.3 331.7h0.8v0.8h-0.8zM1735.7 328.0h0.6v0.6h-0.6zM1727.3 318.5h0.8v0.8h-0.8zM1734.0 324.8h0.9v0.9h-0.9zM1733.9 333.6h0.7v0.7h-0.7zM1734.0 331.8h1.0v1.0h-1.0zM1726.2 328.7h0.6v0.6h-0.6zM1743.2 319.7h0.5v0.5h-0.5zM1746.0 320.3h0.8v0.8h-0.8zM1732.8 328.8h0.7v0.7h-0.7zM1730.7 324.6h0.8v0.8h-0.8zM1733.8 318.0h1.0v1.0h-1.0zM1734.4 329.6h0.6v0.6h-0.6zM1730.6 312.1h0.8v0.8h-0.8zM1726.0 325.5h0.5v0.5h-0.5zM1744.7 318.9h0.6v0.6h-0.6zM1739.6 313.8h0.9v0.9h-0.9zM1730.4 322.2h0.8v0.8h-0.8zM1733.7 326.2h1.1v1.1h-1.1zM1744.5 316.3h1.0v1.0h-1.0zM1731.0 313.3h0.5v0.5h-0.5zM1729.3 317.0h0.9v0.9h-0.9zM1729.2 316.3h0.9v0.9h-0.9zM1745.2 318.0h1.1v1.1h-1.1zM1733.1 320.6h0.7v0.7h-0.7zM1726.4 330.7h0.8v0.8h-0.8zM1740.9 318.6h0.7v0.7h-0.7zM1738.4 320.3h0.9v0.9h-0.9zM1741.9 321.4h0.7v0.7h-0.7zM1741.4 316.8h0.4v0.4h-0.4zM1731.2 308.9h0.5v0.5h-0.5zM1747.5 314.3h1.0v1.0h-1.0zM1740.0 310.7h0.9v0.9h-0.9zM1743.6 327.9h0.7v0.7h-0.7zM1730.7 326.7h0.5v0.5h-0.5zM1739.9 308.6h0.4v0.4h-0.4zM1732.7 319.8h0.8v0.8h-0.8zM1742.3 331.9h0.6v0.6h-0.6zM1727.4 318.9h1.0v1.0h-1.0zM1743.2 320.4h0.6v0.6h-0.6zM1734.8 311.5h1.0v1.0h-1.0zM1732.5 324.4h0.7v0.7h-0.7zM1740.0 322.8h0.8v0.8h-0.8zM1728.8 317.1h0.5v0.5h-0.5zM1725.1 318.7h0.7v0.7h-0.7zM1732.3 315.4h0.4v0.4h-0.4zM1747.3 324.9h0.9v0.9h-0.9zM1739.9 326.6h0.6v0.6h-0.6zM1743.5 315.8h0.9v0.9h-0.9zM1737.6 321.5h0.6v0.6h-0.6zM1728.7 312.7h1.0v1.0h-1.0zM1740.4 309.7h1.1v1.1h-1.1zM1748.7 316.7h0.5v0.5h-0.5zM1730.4 323.1h0.8v0.8h-0.8zM1730.4 319.9h0.5v0.5h-0.5zM1723.4 322.4h0.7v0.7h-0.7zM1723.2 322.0h0.9v0.9h-0.9zM1732.5 311.3h0.5v0.5h-0.5zM1737.1 317.9h0.6v0.6h-0.6zM1739.2 330.0h0.8v0.8h-0.8zM1743.7 325.9h0.8v0.8h-0.8zM1733.4 316.5h0.9v0.9h-0.9zM1733.8 328.6h0.5v0.5h-0.5zM1741.5 310.8h1.0v1.0h-1.0zM1730.0 319.6h0.7v0.7h-0.7zM1739.1 322.1h1.0v1.0h-1.0zM1744.4 320.0h0.5v0.5h-0.5zM1736.3 306.1h0.5v0.5h-0.5zM1725.3 330.4h0.6v0.6h-0.6zM1729.5 332.9h1.0v1.0h-1.0zM1725.7 327.5h0.9v0.9h-0.9zM1734.6 320.5h0.7v0.7h-0.7zM1729.8 307.1h0.7v0.7h-0.7zM1727.2 324.6h0.8v0.8h-0.8zM1749.2 321.9h1.1v1.1h-1.1zM1736.1 320.2h0.6v0.6h-0.6zM1743.0 329.7h1.0v1.0h-1.0zM1721.0 316.1h0.6v0.6h-0.6zM1738.1 328.2h0.7v0.7h-0.7zM1739.6 332.7h0.9v0.9h-0.9zM1733.3 326.5h0.6v0.6h-0.6zM1725.4 326.9h0.9v0.9h-0.9zM1739.1 318.8h0.6v0.6h-0.6zM1724.3 329.4h0.7v0.7h-0.7zM1732.4 307.5h0.7v0.7h-0.7zM1725.5 328.6h0.8v0.8h-0.8zM1742.8 319.7h1.0v1.0h-1.0zM1721.1 321.1h0.8v0.8h-0.8zM1722.2 315.0h0.5v0.5h-0.5zM1733.0 329.6h1.0v1.0h-1.0zM1740.2 331.4h0.5v0.5h-0.5zM1729.0 327.7h0.9v0.9h-0.9zM1721.3 318.2h0.9v0.9h-0.9zM1726.9 326.7h0.7v0.7h-0.7zM1740.8 314.5h0.5v0.5h-0.5zM1735.3 327.0h1.0v1.0h-1.0zM1732.1 313.6h0.7v0.7h-0.7zM1746.6 311.6h0.6v0.6h-0.6zM1738.4 318.8h1.1v1.1h-1.1zM1728.7 332.3h0.5v0.5h-0.5zM1729.6 307.5h1.0v1.0h-1.0zM1729.7 317.6h0.6v0.6h-0.6zM1748.1 315.4h0.6v0.6h-0.6zM1728.5 329.1h0.6v0.6h-0.6zM1738.2 332.7h0.5v0.5h-0.5zM1728.6 313.4h0.7v0.7h-0.7zM1744.0 311.3h0.9v0.9h-0.9zM1748.4 321.3h0.9v0.9h-0.9zM1742.1 320.0h0.9v0.9h-0.9zM1742.5 312.5h1.0v1.0h-1.0zM1741.5 323.7h1.0v1.0h-1.0zM1736.9 313.6h0.8v0.8h-0.8zM1723.1 324.6h0.7v0.7h-0.7zM1729.5 331.1h0.9v0.9h-0.9zM1726.8 329.0h0.6v0.6h-0.6zM1728.5 320.0h0.7v0.7h-0.7zM1731.1 322.0h0.6v0.6h-0.6zM1729.9 326.4h0.8v0.8h-0.8zM1746.2 312.4h0.6v0.6h-0.6zM1737.9 323.1h1.0v1.0h-1.0zM1735.8 308.0h1.0v1.0h-1.0zM1730.0 323.4h0.5v0.5h-0.5zM1724.4 327.2h0.5v0.5h-0.5zM1731.0 321.5h0.6v0.6h-0.6zM1723.6 316.3h1.0v1.0h-1.0zM1731.9 326.1h0.5v0.5h-0.5zM1736.1 322.4h0.4v0.4h-0.4zM1743.2 326.8h0.7v0.7h-0.7zM1743.7 314.6h0.5v0.5h-0.5zM1742.6 329.3h1.1v1.1h-1.1zM1735.0 313.2h0.7v0.7h-0.7zM1725.9 323.5h0.6v0.6h-0.6zM1736.4 321.9h1.0v1.0h-1.0zM1749.7 317.9h0.7v0.7h-0.7zM1732.4 314.1h0.5v0.5h-0.5zM1743.7 320.1h0.9v0.9h-0.9zM1727.9 318.8h0.7v0.7h-0.7zM1728.6 318.4h0.7v0.7h-0.7zM1744.1 316.0h1.1v1.1h-1.1zM1734.1 315.1h1.0v1.0h-1.0zM1731.5 311.3h0.6v0.6h-0.6zM1731.4 314.9h0.7v0.7h-0.7zM1740.6 327.3h1.1v1.1h-1.1zM1726.2 314.2h0.8v0.8h-0.8zM1728.4 311.0h0.6v0.6h-0.6zM1737.7 330.6h1.0v1.0h-1.0zM1742.3 312.9h0.6v0.6h-0.6zM1732.2 318.4h0.8v0.8h-0.8zM1738.1 306.5h0.5v0.5h-0.5zM1738.2 329.2h0.8v0.8h-0.8zM1739.8 319.0h0.5v0.5h-0.5zM1721.7 321.2h0.5v0.5h-0.5zM1725.8 328.1h0.7v0.7h-0.7zM1736.7 323.4h0.9v0.9h-0.9zM1724.0 319.3h0.9v0.9h-0.9zM1735.8 311.2h0.7v0.7h-0.7zM1738.6 318.1h0.9v0.9h-0.9zM1724.4 322.5h0.6v0.6h-0.6zM1742.7 317.3h0.6v0.6h-0.6zM1748.2 324.8h1.0v1.0h-1.0zM1740.5 321.7h0.6v0.6h-0.6zM1745.4 321.8h1.0v1.0h-1.0zM1733.0 310.2h1.1v1.1h-1.1zM1732.2 327.4h0.6v0.6h-0.6zM1726.8 314.2h0.5v0.5h-0.5zM1720.3 320.7h1.0v1.0h-1.0zM1725.1 310.9h0.7v0.7h-0.7zM1722.5 320.3h0.6v0.6h-0.6zM1726.2 314.5h0.6v0.6h-0.6zM1728.7 320.1h0.8v0.8h-0.8zM1742.5 326.2h0.5v0.5h-0.5zM1730.5 318.9h1.0v1.0h-1.0zM1748.4 321.4h0.6v0.6h-0.6zM1743.2 317.7h0.5v0.5h-0.5zM1731.4 314.0h1.0v1.0h-1.0zM1727.3 321.0h0.8v0.8h-0.8zM1736.3 327.1h0.5v0.5h-0.5zM1735.5 326.5h0.5v0.5h-0.5zM1726.3 324.7h0.8v0.8h-0.8zM1723.2 316.3h0.8v0.8h-0.8zM1721.4 322.4h0.5v0.5h-0.5zM1734.7 321.5h1.0v1.0h-1.0zM1742.0 313.9h1.0v1.0h-1.0zM1721.6 314.9h1.0v1.0h-1.0zM1731.1 326.4h0.7v0.7h-0.7zM1744.9 317.4h0.7v0.7h-0.7zM1744.2 321.3h1.0v1.0h-1.0zM1723.3 326.1h1.0v1.0h-1.0zM1746.9 315.4h0.8v0.8h-0.8zM1730.5 332.9h1.0v1.0h-1.0zM1734.8 316.7h0.9v0.9h-0.9zM1733.0 315.2h0.6v0.6h-0.6zM1727.8 322.0h0.5v0.5h-0.5zM1740.9 327.7h0.4v0.4h-0.4zM1737.6 311.3h0.6v0.6h-0.6zM1734.9 327.9h0.8v0.8h-0.8zM1732.9 311.0h0.9v0.9h-0.9zM1722.9 314.4h0.9v0.9h-0.9zM1735.2 317.8h0.7v0.7h-0.7zM1745.2 328.5h0.5v0.5h-0.5zM1742.8 316.2h0.5v0.5h-0.5zM1732.9 314.3h0.7v0.7h-0.7zM1723.9 324.2h0.8v0.8h-0.8zM1728.1 309.3h1.1v1.1h-1.1zM1727.9 313.7h0.8v0.8h-0.8zM1727.1 330.5h0.8v0.8h-0.8zM1730.5 308.0h0.9v0.9h-0.9zM1742.7 313.8h0.9v0.9h-0.9zM1742.9 313.5h1.0v1.0h-1.0zM1733.9 325.5h1.0v1.0h-1.0zM1721.1 315.6h0.8v0.8h-0.8zM1734.7 324.9h1.0v1.0h-1.0zM1734.9 325.7h0.8v0.8h-0.8zM1732.7 309.6h0.5v0.5h-0.5zM1737.4 308.7h0.6v0.6h-0.6zM1744.3 315.4h0.9v0.9h-0.9zM1742.0 324.2h0.9v0.9h-0.9zM1729.9 309.3h0.9v0.9h-0.9zM1748.7 322.2h0.5v0.5h-0.5zM1735.4 327.7h0.8v0.8h-0.8zM1743.1 325.2h0.5v0.5h-0.5zM1730.5 327.1h0.5v0.5h-0.5zM1735.9 317.7h0.6v0.6h-0.6zM1742.5 314.4h1.0v1.0h-1.0zM1731.2 329.4h0.8v0.8h-0.8zM1722.7 327.8h0.7v0.7h-0.7zM1738.1 310.5h0.7v0.7h-0.7zM1743.2 308.9h0.4v0.4h-0.4zM1724.4 312.9h0.8v0.8h-0.8zM1724.5 326.7h0.5v0.5h-0.5zM1728.4 321.0h1.0v1.0h-1.0zM1737.1 311.4h0.9v0.9h-0.9zM1723.3 317.0h0.6v0.6h-0.6zM1736.7 308.8h1.1v1.1h-1.1zM1734.3 328.9h0.9v0.9h-0.9zM1734.3 332.2h1.0v1.0h-1.0zM1741.4 330.3h0.6v0.6h-0.6zM1733.7 328.2h0.9v0.9h-0.9zM1729.0 313.4h0.9v0.9h-0.9zM1737.5 314.3h1.0v1.0h-1.0zM1723.1 318.5h1.0v1.0h-1.0zM1737.3 329.3h0.9v0.9h-0.9zM1744.3 320.9h0.8v0.8h-0.8zM1724.9 323.1h1.0v1.0h-1.0zM1744.6 327.8h0.6v0.6h-0.6zM1743.8 324.8h0.5v0.5h-0.5zM1729.0 321.5h0.7v0.7h-0.7zM1744.8 330.6h0.6v0.6h-0.6zM1724.1 323.8h0.9v0.9h-0.9zM1744.5 329.4h0.7v0.7h-0.7zM1743.5 324.6h0.8v0.8h-0.8zM1726.8 329.2h0.6v0.6h-0.6zM1740.8 307.6h1.0v1.0h-1.0zM1744.0 323.5h0.8v0.8h-0.8zM1730.2 324.1h0.8v0.8h-0.8zM1739.5 323.9h0.7v0.7h-0.7zM1744.3 319.8h1.1v1.1h-1.1zM1729.4 310.0h1.0v1.0h-1.0zM1723.8 314.0h0.7v0.7h-0.7z"/><rect x="1747.5" y="333" width="5" height="5" fill="#ff8080" opacity="0.75"/><path d="M1747,334.5 L1752,334.5 M1749.5,332 L1749.5,337" stroke="#000" stroke-width="1.3"/><path fill="#000" opacity="1.0" d="M1773.3 308.9h0.5v0.5h-0.5zM1770.5 319.8h0.9v0.9h-0.9zM1779.1 324.5h0.8v0.8h-0.8zM1777.3 328.4h0.7v0.7h-0.7zM1774.5 316.8h0.9v0.9h-0.9zM1760.4 323.4h0.7v0.7h-0.7zM1766.5 319.7h0.7v0.7h-0.7zM1773.0 322.5h0.7v0.7h-0.7zM1769.2 317.9h0.6v0.6h-0.6zM1778.6 318.5h0.5v0.5h-0.5zM1776.7 312.4h0.9v0.9h-0.9zM1777.2 318.2h0.6v0.6h-0.6zM1771.5 320.1h0.8v0.8h-0.8zM1759.6 316.4h0.5v0.5h-0.5zM1771.4 320.7h0.7v0.7h-0.7zM1779.6 315.9h0.5v0.5h-0.5zM1767.7 318.5h0.6v0.6h-0.6zM1768.4 323.3h0.7v0.7h-0.7zM1770.8 324.9h0.9v0.9h-0.9zM1761.0 316.3h0.7v0.7h-0.7zM1777.7 321.3h0.7v0.7h-0.7zM1771.4 325.6h1.1v1.1h-1.1zM1762.2 314.4h0.5v0.5h-0.5zM1760.9 317.4h1.1v1.1h-1.1zM1770.1 319.1h1.2v1.2h-1.2zM1780.2 321.1h0.8v0.8h-0.8zM1781.1 314.6h1.0v1.0h-1.0zM1777.6 324.4h0.6v0.6h-0.6zM1768.2 320.9h0.7v0.7h-0.7zM1777.1 322.4h0.5v0.5h-0.5zM1770.4 330.4h0.7v0.7h-0.7zM1760.0 314.5h0.9v0.9h-0.9zM1775.1 308.9h0.7v0.7h-0.7zM1775.0 331.9h1.1v1.1h-1.1zM1764.7 330.9h0.5v0.5h-0.5zM1771.6 331.3h0.5v0.5h-0.5zM1772.2 317.4h1.0v1.0h-1.0zM1774.9 325.0h0.9v0.9h-0.9zM1759.4 315.9h0.5v0.5h-0.5zM1767.1 309.1h0.8v0.8h-0.8zM1771.0 330.6h0.8v0.8h-0.8zM1769.3 330.3h1.0v1.0h-1.0zM1773.1 313.8h0.5v0.5h-0.5zM1777.5 321.1h0.5v0.5h-0.5zM1768.5 318.5h1.0v1.0h-1.0zM1779.2 321.2h0.6v0.6h-0.6zM1776.6 320.0h0.8v0.8h-0.8zM1772.4 316.6h1.2v1.2h-1.2zM1769.8 320.6h0.7v0.7h-0.7zM1764.5 326.1h0.5v0.5h-0.5zM1778.6 314.2h1.0v1.0h-1.0zM1770.9 319.9h1.0v1.0h-1.0zM1771.7 317.8h0.8v0.8h-0.8zM1773.8 331.5h0.8v0.8h-0.8zM1771.8 316.7h0.9v0.9h-0.9zM1769.9 315.1h0.7v0.7h-0.7zM1777.4 324.3h0.8v0.8h-0.8zM1771.4 324.4h0.7v0.7h-0.7zM1775.7 325.7h0.6v0.6h-0.6zM1771.1 325.1h1.2v1.2h-1.2zM1769.2 316.9h1.1v1.1h-1.1zM1774.4 318.2h1.0v1.0h-1.0zM1764.8 314.4h1.1v1.1h-1.1zM1765.8 312.3h1.1v1.1h-1.1zM1768.4 320.5h0.5v0.5h-0.5zM1768.9 313.5h1.1v1.1h-1.1zM1773.7 319.3h0.6v0.6h-0.6zM1769.6 319.8h0.5v0.5h-0.5zM1773.9 322.0h0.8v0.8h-0.8zM1773.1 328.7h1.0v1.0h-1.0zM1773.7 313.4h1.0v1.0h-1.0zM1772.8 310.6h0.7v0.7h-0.7zM1760.3 315.0h0.7v0.7h-0.7zM1769.9 320.2h0.9v0.9h-0.9zM1774.7 324.1h0.6v0.6h-0.6zM1778.7 327.8h0.7v0.7h-0.7zM1779.5 317.4h0.9v0.9h-0.9zM1761.2 320.9h1.1v1.1h-1.1zM1772.7 327.0h0.7v0.7h-0.7zM1771.3 323.1h1.0v1.0h-1.0zM1775.6 317.5h0.6v0.6h-0.6zM1772.0 324.0h0.7v0.7h-0.7zM1775.4 315.1h0.8v0.8h-0.8zM1768.1 318.0h0.7v0.7h-0.7zM1769.0 320.4h0.7v0.7h-0.7zM1762.6 316.4h0.7v0.7h-0.7zM1777.1 323.5h0.6v0.6h-0.6zM1782.6 320.3h1.0v1.0h-1.0zM1774.3 318.2h1.0v1.0h-1.0zM1775.1 313.1h0.5v0.5h-0.5zM1769.2 325.3h0.8v0.8h-0.8zM1767.4 318.7h0.6v0.6h-0.6zM1775.7 320.8h0.6v0.6h-0.6zM1770.0 320.4h1.1v1.1h-1.1zM1771.0 327.0h0.9v0.9h-0.9zM1777.3 321.9h1.0v1.0h-1.0zM1770.6 328.6h1.0v1.0h-1.0zM1765.2 318.1h0.8v0.8h-0.8zM1766.9 314.6h1.0v1.0h-1.0zM1770.0 309.9h0.8v0.8h-0.8zM1771.6 322.1h0.7v0.7h-0.7zM1769.1 319.6h0.7v0.7h-0.7zM1774.4 325.9h0.6v0.6h-0.6zM1770.5 319.0h0.7v0.7h-0.7zM1769.8 309.0h0.8v0.8h-0.8zM1780.8 315.9h0.9v0.9h-0.9zM1768.6 322.6h1.0v1.0h-1.0zM1778.2 323.2h0.6v0.6h-0.6zM1773.2 327.8h0.8v0.8h-0.8zM1772.2 320.8h1.0v1.0h-1.0zM1762.0 326.7h0.9v0.9h-0.9zM1775.0 320.1h0.9v0.9h-0.9zM1770.1 322.1h1.2v1.2h-1.2zM1766.0 328.0h0.8v0.8h-0.8zM1773.4 319.8h0.5v0.5h-0.5zM1764.5 312.5h1.1v1.1h-1.1zM1772.1 321.7h0.8v0.8h-0.8zM1769.6 322.0h0.6v0.6h-0.6zM1775.8 321.6h0.6v0.6h-0.6zM1771.5 320.3h1.0v1.0h-1.0zM1767.0 316.0h1.0v1.0h-1.0zM1775.7 321.6h1.1v1.1h-1.1zM1772.2 320.8h0.8v0.8h-0.8zM1769.3 320.9h1.1v1.1h-1.1zM1772.0 312.2h0.8v0.8h-0.8zM1763.5 317.6h0.9v0.9h-0.9zM1765.4 329.8h0.8v0.8h-0.8zM1770.7 328.0h1.0v1.0h-1.0zM1765.3 320.0h0.9v0.9h-0.9zM1769.0 317.4h1.1v1.1h-1.1zM1765.0 323.2h0.8v0.8h-0.8zM1770.2 317.4h0.6v0.6h-0.6zM1769.7 320.0h0.8v0.8h-0.8zM1772.1 322.2h0.7v0.7h-0.7zM1776.6 314.9h0.7v0.7h-0.7zM1765.4 314.6h0.5v0.5h-0.5zM1761.2 323.5h1.1v1.1h-1.1zM1770.3 319.9h0.8v0.8h-0.8zM1765.4 324.3h1.1v1.1h-1.1zM1763.1 322.9h1.0v1.0h-1.0zM1775.4 314.1h0.9v0.9h-0.9zM1774.3 323.2h0.6v0.6h-0.6zM1771.3 311.0h0.6v0.6h-0.6zM1759.9 314.5h1.1v1.1h-1.1zM1766.2 323.7h0.9v0.9h-0.9zM1758.9 326.3h1.1v1.1h-1.1zM1780.2 311.9h0.6v0.6h-0.6zM1774.9 318.3h0.7v0.7h-0.7zM1765.4 316.6h0.6v0.6h-0.6zM1772.8 319.6h0.5v0.5h-0.5zM1761.5 326.8h1.0v1.0h-1.0zM1764.5 321.6h0.6v0.6h-0.6zM1773.0 310.3h0.6v0.6h-0.6zM1764.3 309.8h0.7v0.7h-0.7zM1771.2 329.9h0.9v0.9h-0.9zM1769.9 320.1h0.7v0.7h-0.7zM1769.2 317.2h0.8v0.8h-0.8zM1770.6 315.0h0.6v0.6h-0.6zM1765.8 311.7h0.9v0.9h-0.9zM1774.5 317.1h0.8v0.8h-0.8zM1759.2 323.3h0.7v0.7h-0.7zM1770.3 325.3h1.1v1.1h-1.1zM1769.9 317.1h1.1v1.1h-1.1zM1774.9 319.6h1.0v1.0h-1.0zM1767.1 312.1h0.6v0.6h-0.6zM1781.4 320.1h0.7v0.7h-0.7zM1775.0 309.9h1.1v1.1h-1.1zM1769.0 310.3h1.1v1.1h-1.1zM1781.3 315.7h1.1v1.1h-1.1zM1764.7 330.9h0.5v0.5h-0.5zM1774.6 330.5h0.9v0.9h-0.9zM1774.6 318.6h0.5v0.5h-0.5zM1776.8 329.4h1.1v1.1h-1.1zM1762.0 323.9h0.5v0.5h-0.5zM1773.9 318.4h0.6v0.6h-0.6zM1763.3 320.6h0.8v0.8h-0.8zM1769.4 317.2h1.0v1.0h-1.0zM1767.4 325.1h1.1v1.1h-1.1zM1769.3 310.2h1.0v1.0h-1.0zM1765.6 322.3h0.8v0.8h-0.8zM1771.6 317.8h1.0v1.0h-1.0zM1757.8 321.9h1.0v1.0h-1.0zM1775.2 317.2h0.8v0.8h-0.8zM1770.0 323.2h0.7v0.7h-0.7zM1771.9 328.3h0.9v0.9h-0.9zM1769.2 310.0h1.2v1.2h-1.2zM1761.7 318.5h0.9v0.9h-0.9zM1765.1 320.7h0.7v0.7h-0.7zM1766.5 326.2h0.8v0.8h-0.8zM1761.3 317.4h1.2v1.2h-1.2zM1758.8 313.6h0.7v0.7h-0.7zM1763.8 315.0h0.8v0.8h-0.8zM1766.6 320.9h1.2v1.2h-1.2zM1779.5 324.9h0.8v0.8h-0.8zM1767.4 323.7h1.1v1.1h-1.1zM1765.9 326.8h0.8v0.8h-0.8zM1766.0 313.5h0.9v0.9h-0.9zM1770.4 320.3h0.9v0.9h-0.9zM1777.2 320.1h0.7v0.7h-0.7zM1769.7 315.3h0.5v0.5h-0.5zM1772.6 324.0h0.9v0.9h-0.9zM1766.9 309.4h1.2v1.2h-1.2zM1769.2 319.7h0.9v0.9h-0.9zM1764.9 326.6h0.6v0.6h-0.6zM1767.1 322.2h1.0v1.0h-1.0zM1775.0 318.3h0.8v0.8h-0.8zM1763.3 312.3h0.7v0.7h-0.7zM1769.0 328.8h0.7v0.7h-0.7zM1761.4 320.2h0.9v0.9h-0.9zM1775.0 319.2h0.6v0.6h-0.6zM1760.2 326.5h1.1v1.1h-1.1zM1772.5 321.0h0.6v0.6h-0.6zM1771.7 310.8h0.6v0.6h-0.6zM1772.8 309.0h1.1v1.1h-1.1zM1763.7 328.9h0.7v0.7h-0.7zM1772.0 319.1h0.8v0.8h-0.8zM1766.4 330.3h1.0v1.0h-1.0zM1762.7 318.5h0.7v0.7h-0.7zM1769.3 319.6h1.0v1.0h-1.0zM1776.2 318.2h0.8v0.8h-0.8zM1765.3 317.2h1.1v1.1h-1.1zM1771.5 326.6h1.0v1.0h-1.0zM1769.9 315.5h0.6v0.6h-0.6zM1769.3 318.1h1.1v1.1h-1.1zM1781.5 321.4h1.1v1.1h-1.1zM1758.3 319.5h1.0v1.0h-1.0zM1768.2 316.6h0.5v0.5h-0.5zM1771.2 321.1h1.0v1.0h-1.0zM1766.3 308.2h0.7v0.7h-0.7zM1762.6 328.6h1.0v1.0h-1.0zM1770.2 320.0h1.2v1.2h-1.2zM1760.9 325.5h0.6v0.6h-0.6zM1760.3 317.4h1.0v1.0h-1.0zM1769.5 318.6h1.1v1.1h-1.1zM1780.2 323.7h0.9v0.9h-0.9zM1767.6 317.7h1.0v1.0h-1.0zM1770.2 316.3h1.1v1.1h-1.1zM1760.2 325.7h0.6v0.6h-0.6zM1767.7 322.3h0.5v0.5h-0.5zM1771.5 321.9h0.8v0.8h-0.8zM1768.3 320.2h1.1v1.1h-1.1zM1765.2 314.6h0.7v0.7h-0.7zM1759.6 325.9h0.8v0.8h-0.8zM1757.9 319.8h0.8v0.8h-0.8zM1770.7 319.1h1.0v1.0h-1.0zM1772.9 322.8h0.5v0.5h-0.5zM1778.6 312.0h1.0v1.0h-1.0zM1768.2 320.0h0.8v0.8h-0.8zM1777.8 314.2h0.5v0.5h-0.5zM1782.4 319.0h0.9v0.9h-0.9zM1779.5 321.3h0.9v0.9h-0.9zM1776.3 320.2h0.5v0.5h-0.5zM1778.5 323.5h1.0v1.0h-1.0zM1768.9 322.2h0.7v0.7h-0.7zM1771.1 327.6h0.7v0.7h-0.7zM1770.3 319.8h0.6v0.6h-0.6zM1765.5 315.6h0.5v0.5h-0.5zM1766.9 322.7h1.0v1.0h-1.0zM1770.6 328.7h1.0v1.0h-1.0zM1769.3 320.4h0.9v0.9h-0.9zM1772.8 322.3h1.1v1.1h-1.1zM1775.7 331.2h0.6v0.6h-0.6zM1770.6 320.1h1.1v1.1h-1.1zM1773.2 317.6h0.7v0.7h-0.7zM1765.3 327.3h0.7v0.7h-0.7zM1761.3 321.8h0.7v0.7h-0.7zM1775.9 326.6h0.9v0.9h-0.9zM1776.1 320.1h1.1v1.1h-1.1zM1762.4 314.9h1.2v1.2h-1.2zM1771.6 325.4h0.6v0.6h-0.6zM1776.5 315.2h1.1v1.1h-1.1zM1767.3 315.9h1.0v1.0h-1.0zM1769.1 327.0h0.9v0.9h-0.9zM1770.6 316.4h1.0v1.0h-1.0zM1761.8 317.7h0.5v0.5h-0.5zM1768.5 319.8h0.9v0.9h-0.9zM1771.4 314.7h0.8v0.8h-0.8zM1764.5 314.6h1.2v1.2h-1.2zM1775.1 312.3h0.7v0.7h-0.7zM1778.6 323.1h0.6v0.6h-0.6zM1767.5 311.5h1.1v1.1h-1.1zM1776.3 322.5h0.7v0.7h-0.7zM1767.9 323.2h1.1v1.1h-1.1zM1762.7 322.1h0.6v0.6h-0.6zM1761.9 317.0h0.6v0.6h-0.6zM1767.9 323.4h0.9v0.9h-0.9zM1781.2 326.1h0.8v0.8h-0.8zM1770.6 319.7h1.0v1.0h-1.0zM1775.0 316.3h0.7v0.7h-0.7zM1766.8 316.9h0.7v0.7h-0.7zM1777.5 315.5h0.8v0.8h-0.8zM1759.8 322.7h1.0v1.0h-1.0zM1769.1 324.5h0.8v0.8h-0.8zM1775.6 322.0h0.6v0.6h-0.6zM1767.6 315.8h0.7v0.7h-0.7zM1770.7 323.7h0.6v0.6h-0.6zM1774.8 315.8h0.9v0.9h-0.9zM1764.8 331.3h0.9v0.9h-0.9zM1774.4 328.1h0.5v0.5h-0.5zM1779.9 319.7h0.6v0.6h-0.6zM1759.2 325.1h1.0v1.0h-1.0zM1771.8 312.2h0.6v0.6h-0.6zM1765.4 313.5h0.6v0.6h-0.6zM1776.8 322.5h1.1v1.1h-1.1zM1765.9 327.7h0.5v0.5h-0.5zM1778.4 311.9h0.7v0.7h-0.7zM1768.1 310.3h0.8v0.8h-0.8zM1770.6 319.4h0.7v0.7h-0.7zM1778.1 327.3h1.0v1.0h-1.0zM1771.2 328.9h0.8v0.8h-0.8zM1764.6 317.6h0.9v0.9h-0.9zM1765.7 318.3h0.7v0.7h-0.7zM1774.5 327.3h1.1v1.1h-1.1zM1771.1 328.0h0.8v0.8h-0.8zM1770.4 321.0h0.5v0.5h-0.5zM1769.9 317.9h0.7v0.7h-0.7zM1767.0 319.8h0.9v0.9h-0.9zM1766.7 320.5h1.0v1.0h-1.0zM1762.1 310.4h0.7v0.7h-0.7zM1771.4 311.6h0.9v0.9h-0.9zM1774.4 321.0h0.8v0.8h-0.8zM1771.6 320.5h1.1v1.1h-1.1zM1775.9 325.0h0.6v0.6h-0.6zM1764.5 319.1h0.7v0.7h-0.7zM1766.0 321.1h1.1v1.1h-1.1zM1768.0 320.5h1.0v1.0h-1.0zM1775.1 328.6h1.0v1.0h-1.0zM1776.4 316.6h1.0v1.0h-1.0zM1772.8 309.6h0.9v0.9h-0.9zM1777.8 313.8h0.7v0.7h-0.7zM1762.5 328.2h1.1v1.1h-1.1zM1761.3 328.4h1.0v1.0h-1.0zM1768.4 315.4h0.7v0.7h-0.7zM1767.7 329.0h0.8v0.8h-0.8zM1770.4 322.3h1.1v1.1h-1.1zM1771.0 322.5h0.9v0.9h-0.9zM1775.4 321.9h0.6v0.6h-0.6zM1774.8 314.1h0.8v0.8h-0.8zM1769.7 320.1h1.1v1.1h-1.1zM1770.2 319.9h0.9v0.9h-0.9zM1772.5 309.1h1.2v1.2h-1.2zM1779.6 313.4h0.6v0.6h-0.6zM1782.8 319.6h0.9v0.9h-0.9zM1772.8 317.3h0.8v0.8h-0.8zM1775.1 324.2h1.2v1.2h-1.2zM1768.2 313.8h0.7v0.7h-0.7zM1771.4 325.9h0.7v0.7h-0.7zM1762.2 320.5h0.8v0.8h-0.8zM1765.1 316.7h0.8v0.8h-0.8zM1758.9 321.0h1.1v1.1h-1.1zM1761.3 314.9h0.7v0.7h-0.7zM1772.4 323.9h0.6v0.6h-0.6zM1771.2 308.0h0.9v0.9h-0.9zM1770.4 322.0h1.0v1.0h-1.0zM1767.9 319.0h1.2v1.2h-1.2zM1770.2 307.4h1.2v1.2h-1.2zM1772.6 308.1h1.1v1.1h-1.1zM1772.7 324.2h0.9v0.9h-0.9zM1768.5 318.2h0.7v0.7h-0.7zM1771.8 307.5h0.8v0.8h-0.8zM1780.5 315.3h1.1v1.1h-1.1zM1772.1 325.1h0.9v0.9h-0.9zM1774.2 309.8h0.6v0.6h-0.6zM1769.8 319.6h0.7v0.7h-0.7zM1776.7 322.3h0.6v0.6h-0.6zM1766.9 315.1h1.1v1.1h-1.1zM1764.2 331.5h0.6v0.6h-0.6zM1776.1 323.4h0.8v0.8h-0.8zM1770.3 319.6h0.6v0.6h-0.6zM1770.2 326.1h1.1v1.1h-1.1zM1768.2 317.0h0.8v0.8h-0.8zM1770.8 312.4h0.6v0.6h-0.6zM1769.7 320.4h0.8v0.8h-0.8zM1770.5 324.4h0.7v0.7h-0.7zM1770.9 319.0h0.5v0.5h-0.5zM1774.1 324.5h0.8v0.8h-0.8zM1778.8 315.9h0.7v0.7h-0.7zM1775.1 325.6h1.1v1.1h-1.1zM1771.6 330.1h0.7v0.7h-0.7zM1782.0 316.7h0.6v0.6h-0.6zM1772.8 312.4h0.8v0.8h-0.8zM1758.2 318.7h0.8v0.8h-0.8zM1763.7 317.3h0.5v0.5h-0.5zM1770.1 318.3h1.1v1.1h-1.1zM1777.8 320.4h0.7v0.7h-0.7zM1766.6 312.2h1.0v1.0h-1.0zM1775.5 308.4h0.6v0.6h-0.6zM1770.9 326.7h1.1v1.1h-1.1zM1767.5 321.9h0.8v0.8h-0.8zM1769.5 321.2h1.1v1.1h-1.1zM1759.3 323.1h0.5v0.5h-0.5zM1769.0 321.6h1.1v1.1h-1.1zM1762.2 322.7h0.5v0.5h-0.5zM1764.8 322.0h1.0v1.0h-1.0zM1771.1 332.8h0.7v0.7h-0.7zM1763.4 319.4h0.7v0.7h-0.7zM1770.7 320.2h1.1v1.1h-1.1zM1778.3 318.9h0.6v0.6h-0.6zM1771.6 324.4h0.5v0.5h-0.5zM1767.7 323.5h0.7v0.7h-0.7zM1774.0 313.4h1.2v1.2h-1.2zM1769.6 321.1h1.0v1.0h-1.0zM1768.5 309.3h0.7v0.7h-0.7zM1770.6 318.5h1.0v1.0h-1.0zM1767.3 312.7h0.9v0.9h-0.9zM1764.1 321.4h0.8v0.8h-0.8zM1761.3 313.0h0.7v0.7h-0.7zM1764.8 318.0h0.6v0.6h-0.6zM1770.0 319.9h1.1v1.1h-1.1zM1772.5 320.8h1.0v1.0h-1.0zM1766.0 321.8h0.8v0.8h-0.8zM1778.0 316.3h0.7v0.7h-0.7zM1773.5 318.8h0.5v0.5h-0.5zM1768.9 309.4h1.0v1.0h-1.0zM1762.7 325.6h0.6v0.6h-0.6zM1768.6 332.2h1.1v1.1h-1.1zM1777.2 317.4h1.0v1.0h-1.0zM1766.3 324.3h1.1v1.1h-1.1zM1769.6 307.7h0.6v0.6h-0.6zM1759.7 326.2h1.1v1.1h-1.1zM1774.9 309.4h0.7v0.7h-0.7zM1769.6 318.3h0.8v0.8h-0.8zM1776.1 320.5h0.6v0.6h-0.6zM1762.4 324.9h1.0v1.0h-1.0zM1779.0 311.7h0.7v0.7h-0.7zM1767.0 325.1h0.7v0.7h-0.7zM1775.8 311.2h0.9v0.9h-0.9zM1767.4 316.5h0.7v0.7h-0.7zM1770.1 318.5h1.2v1.2h-1.2zM1771.9 322.5h1.0v1.0h-1.0zM1772.1 318.7h1.1v1.1h-1.1zM1768.0 319.9h0.9v0.9h-0.9zM1771.0 328.7h0.9v0.9h-0.9zM1776.1 309.6h1.1v1.1h-1.1zM1765.5 311.3h1.1v1.1h-1.1zM1773.6 314.1h1.1v1.1h-1.1zM1772.9 319.3h0.6v0.6h-0.6zM1764.3 315.0h0.8v0.8h-0.8zM1766.8 320.0h0.8v0.8h-0.8zM1761.6 314.4h1.0v1.0h-1.0z"/><rect x="1781.5" y="333" width="5" height="5" fill="#ff8080" opacity="0.75"/><path d="M1781,334.5 L1786,334.5 M1783.5,332 L1783.5,337" stroke="#000" stroke-width="1.3"/><g stroke="#000" stroke-width="1.3"><path d="M1789,308.0 L1817,308.0"/><path d="M1791,311.6 L1813,311.6"/><path d="M1793,315.2 L1817,315.2"/><path d="M1789,318.8 L1813,318.8"/><path d="M1791,322.4 L1817,322.4"/><path d="M1793,326.0 L1813,326.0"/><path d="M1789,329.6 L1817,329.6"/><path d="M1791,333.2 L1813,333.2"/></g><path d="M1815,334.5 L1820,334.5 M1817.5,332 L1817.5,337" stroke="#000" stroke-width="1.3"/><path fill="#000" opacity="1.0" d="M1840.8 322.8h0.9v0.9h-0.9zM1837.8 314.5h1.1v1.1h-1.1zM1837.8 325.8h1.2v1.2h-1.2zM1840.6 330.2h0.9v0.9h-0.9zM1844.5 321.2h0.9v0.9h-0.9zM1841.7 324.7h0.9v0.9h-0.9zM1825.7 321.9h0.8v0.8h-0.8zM1841.6 316.5h1.1v1.1h-1.1zM1841.9 327.2h1.1v1.1h-1.1zM1837.9 318.2h1.1v1.1h-1.1zM1843.7 329.7h0.8v0.8h-0.8zM1839.5 316.8h1.3v1.3h-1.3zM1832.3 318.9h1.2v1.2h-1.2zM1839.5 310.4h0.9v0.9h-0.9zM1838.1 329.1h1.2v1.2h-1.2zM1836.2 310.3h0.6v0.6h-0.6zM1831.4 321.3h0.9v0.9h-0.9zM1832.7 312.3h0.5v0.5h-0.5zM1835.0 325.3h0.8v0.8h-0.8zM1836.0 324.4h0.7v0.7h-0.7zM1825.9 320.6h0.7v0.7h-0.7zM1846.1 317.7h1.2v1.2h-1.2zM1844.6 313.3h1.2v1.2h-1.2zM1840.2 328.5h0.8v0.8h-0.8zM1839.7 324.8h1.0v1.0h-1.0zM1839.1 322.3h1.2v1.2h-1.2zM1837.6 318.6h0.7v0.7h-0.7zM1845.2 320.2h1.3v1.3h-1.3zM1842.0 327.1h0.9v0.9h-0.9zM1835.8 311.3h1.1v1.1h-1.1zM1846.3 327.3h1.1v1.1h-1.1zM1837.6 320.5h1.1v1.1h-1.1zM1838.1 313.4h1.2v1.2h-1.2zM1831.6 314.1h0.6v0.6h-0.6zM1830.3 320.6h0.9v0.9h-0.9zM1830.9 329.0h0.8v0.8h-0.8zM1841.3 323.0h1.2v1.2h-1.2zM1830.6 319.3h1.2v1.2h-1.2zM1844.1 319.3h0.6v0.6h-0.6zM1835.6 322.9h1.2v1.2h-1.2zM1835.5 314.1h1.0v1.0h-1.0zM1843.9 310.2h0.7v0.7h-0.7zM1828.1 322.3h0.9v0.9h-0.9zM1829.6 318.6h0.8v0.8h-0.8zM1830.8 316.9h0.7v0.7h-0.7zM1828.1 325.2h0.6v0.6h-0.6zM1832.1 320.8h1.2v1.2h-1.2zM1843.4 320.3h1.3v1.3h-1.3zM1835.8 315.1h1.1v1.1h-1.1zM1834.1 320.0h0.6v0.6h-0.6zM1842.4 321.5h0.8v0.8h-0.8zM1848.0 318.0h0.9v0.9h-0.9zM1832.5 312.2h1.2v1.2h-1.2zM1830.6 326.7h0.7v0.7h-0.7zM1837.8 325.4h0.8v0.8h-0.8zM1834.5 328.4h0.5v0.5h-0.5zM1833.4 328.1h1.1v1.1h-1.1zM1838.7 313.0h1.0v1.0h-1.0zM1848.3 321.8h1.0v1.0h-1.0zM1837.8 317.0h0.8v0.8h-0.8zM1833.7 330.3h1.1v1.1h-1.1zM1843.4 329.9h0.7v0.7h-0.7zM1842.7 326.3h0.9v0.9h-0.9zM1838.8 319.5h1.2v1.2h-1.2zM1835.6 314.1h0.6v0.6h-0.6zM1836.6 318.6h0.7v0.7h-0.7zM1842.5 323.2h1.3v1.3h-1.3zM1841.7 313.1h1.0v1.0h-1.0zM1830.0 312.4h1.2v1.2h-1.2zM1848.3 317.4h0.8v0.8h-0.8zM1842.0 318.4h0.6v0.6h-0.6zM1835.9 318.4h1.2v1.2h-1.2zM1847.4 318.6h0.7v0.7h-0.7zM1835.0 319.6h0.9v0.9h-0.9zM1839.0 316.0h0.6v0.6h-0.6zM1833.1 325.1h0.8v0.8h-0.8zM1835.9 322.2h1.0v1.0h-1.0zM1828.1 320.5h0.8v0.8h-0.8zM1845.5 314.1h1.0v1.0h-1.0zM1828.9 327.3h0.9v0.9h-0.9zM1829.6 324.2h0.6v0.6h-0.6zM1834.3 320.1h1.2v1.2h-1.2zM1837.9 316.7h0.7v0.7h-0.7zM1832.8 312.8h0.8v0.8h-0.8zM1832.9 322.7h0.8v0.8h-0.8zM1839.2 320.7h0.7v0.7h-0.7zM1842.0 320.8h0.7v0.7h-0.7zM1831.6 326.9h1.3v1.3h-1.3zM1834.0 309.8h1.0v1.0h-1.0zM1837.7 310.9h0.5v0.5h-0.5zM1834.6 322.6h1.1v1.1h-1.1zM1832.2 325.5h0.6v0.6h-0.6zM1842.5 318.9h0.6v0.6h-0.6zM1832.8 324.3h0.7v0.7h-0.7zM1834.6 313.2h0.5v0.5h-0.5zM1840.2 318.9h1.2v1.2h-1.2zM1845.3 319.3h1.1v1.1h-1.1zM1841.6 320.2h1.1v1.1h-1.1zM1835.9 316.8h0.7v0.7h-0.7zM1846.3 324.8h1.0v1.0h-1.0zM1832.0 326.9h0.9v0.9h-0.9zM1836.4 328.2h0.5v0.5h-0.5zM1834.7 308.5h0.6v0.6h-0.6zM1828.9 323.4h1.1v1.1h-1.1zM1837.9 313.9h1.1v1.1h-1.1zM1830.4 328.0h0.9v0.9h-0.9zM1827.0 315.0h0.7v0.7h-0.7zM1830.6 320.1h0.6v0.6h-0.6zM1837.8 315.6h0.6v0.6h-0.6zM1843.8 327.8h1.1v1.1h-1.1zM1833.3 326.9h0.8v0.8h-0.8zM1835.3 320.1h0.7v0.7h-0.7zM1842.8 318.4h1.1v1.1h-1.1zM1831.5 314.8h1.0v1.0h-1.0zM1834.1 311.9h1.1v1.1h-1.1zM1835.5 324.7h0.9v0.9h-0.9zM1838.9 312.3h0.5v0.5h-0.5zM1826.1 322.5h0.6v0.6h-0.6zM1831.9 317.5h0.9v0.9h-0.9zM1837.5 313.9h0.7v0.7h-0.7zM1825.7 323.8h0.5v0.5h-0.5zM1835.4 324.5h0.9v0.9h-0.9zM1838.9 311.7h1.0v1.0h-1.0zM1838.3 328.1h1.1v1.1h-1.1zM1836.4 321.0h1.3v1.3h-1.3zM1825.3 319.6h1.0v1.0h-1.0zM1834.7 323.6h1.2v1.2h-1.2zM1837.7 311.4h0.5v0.5h-0.5zM1834.7 326.8h0.6v0.6h-0.6zM1829.5 321.3h0.7v0.7h-0.7zM1825.5 318.1h1.2v1.2h-1.2zM1839.6 314.7h0.7v0.7h-0.7zM1825.6 321.6h0.7v0.7h-0.7zM1846.7 324.9h0.5v0.5h-0.5zM1825.1 319.2h1.0v1.0h-1.0zM1842.9 320.3h1.1v1.1h-1.1zM1835.8 317.5h0.9v0.9h-0.9zM1833.0 320.5h0.6v0.6h-0.6zM1834.4 326.4h1.3v1.3h-1.3zM1831.8 329.9h0.5v0.5h-0.5zM1833.2 320.8h0.6v0.6h-0.6zM1834.6 329.3h1.0v1.0h-1.0zM1834.7 329.6h1.1v1.1h-1.1zM1843.4 312.8h0.6v0.6h-0.6zM1839.4 308.6h1.2v1.2h-1.2zM1835.1 317.1h1.2v1.2h-1.2zM1827.1 320.4h1.2v1.2h-1.2zM1837.3 321.2h1.2v1.2h-1.2zM1839.1 318.3h0.9v0.9h-0.9zM1842.6 313.0h0.9v0.9h-0.9zM1838.4 320.0h0.8v0.8h-0.8zM1843.5 329.8h1.0v1.0h-1.0zM1836.2 331.0h1.2v1.2h-1.2zM1825.4 321.3h0.7v0.7h-0.7zM1832.7 308.9h0.7v0.7h-0.7zM1833.9 309.7h1.2v1.2h-1.2zM1836.3 326.7h0.6v0.6h-0.6zM1826.0 319.6h0.7v0.7h-0.7zM1841.0 316.3h0.9v0.9h-0.9zM1831.4 311.0h1.3v1.3h-1.3zM1832.8 325.4h1.1v1.1h-1.1zM1840.0 310.0h0.7v0.7h-0.7zM1843.7 312.3h1.0v1.0h-1.0zM1832.0 328.5h0.6v0.6h-0.6zM1836.5 312.9h1.1v1.1h-1.1zM1831.5 316.6h0.8v0.8h-0.8zM1833.4 319.9h0.7v0.7h-0.7zM1834.1 316.6h1.2v1.2h-1.2zM1831.0 318.9h0.7v0.7h-0.7zM1835.9 326.8h0.6v0.6h-0.6zM1832.8 330.9h1.2v1.2h-1.2zM1846.9 313.9h1.1v1.1h-1.1zM1846.0 318.0h0.8v0.8h-0.8zM1841.5 328.1h1.3v1.3h-1.3zM1847.9 315.5h0.9v0.9h-0.9zM1832.2 309.0h1.1v1.1h-1.1zM1843.8 311.3h1.0v1.0h-1.0zM1841.5 315.4h1.2v1.2h-1.2zM1832.6 321.9h1.2v1.2h-1.2zM1839.4 311.2h0.9v0.9h-0.9zM1836.2 330.8h1.0v1.0h-1.0zM1831.9 310.7h0.5v0.5h-0.5zM1840.0 309.5h0.6v0.6h-0.6zM1847.5 323.2h0.7v0.7h-0.7zM1825.8 317.5h0.7v0.7h-0.7zM1834.8 320.1h1.2v1.2h-1.2zM1841.7 314.4h1.1v1.1h-1.1zM1843.2 328.6h1.1v1.1h-1.1zM1836.8 318.5h0.8v0.8h-0.8zM1831.4 310.8h0.9v0.9h-0.9zM1834.1 313.1h1.0v1.0h-1.0zM1836.0 324.5h1.2v1.2h-1.2zM1831.3 318.0h0.7v0.7h-0.7zM1832.8 326.9h0.6v0.6h-0.6zM1830.9 321.9h0.8v0.8h-0.8zM1835.8 321.4h1.2v1.2h-1.2zM1833.7 329.5h1.3v1.3h-1.3zM1832.3 324.4h1.0v1.0h-1.0zM1844.7 317.1h1.0v1.0h-1.0zM1841.6 323.8h0.9v0.9h-0.9zM1833.1 314.5h1.1v1.1h-1.1zM1839.7 315.6h0.9v0.9h-0.9zM1841.9 323.6h1.0v1.0h-1.0zM1839.1 316.1h1.1v1.1h-1.1zM1831.3 311.0h0.6v0.6h-0.6zM1833.3 319.6h1.1v1.1h-1.1zM1834.8 315.5h1.3v1.3h-1.3zM1842.4 315.9h0.7v0.7h-0.7zM1837.9 313.8h1.2v1.2h-1.2zM1835.1 330.7h0.8v0.8h-0.8zM1831.9 316.8h1.0v1.0h-1.0zM1843.1 322.4h0.8v0.8h-0.8zM1828.2 314.3h0.9v0.9h-0.9zM1840.7 318.8h1.1v1.1h-1.1zM1833.2 322.9h0.8v0.8h-0.8zM1831.5 325.5h0.9v0.9h-0.9zM1839.7 309.9h0.8v0.8h-0.8zM1838.0 311.3h0.5v0.5h-0.5zM1842.2 310.2h1.0v1.0h-1.0zM1825.7 319.5h1.3v1.3h-1.3zM1835.2 319.0h0.9v0.9h-0.9zM1839.2 327.3h1.0v1.0h-1.0zM1837.4 322.3h0.9v0.9h-0.9zM1833.5 312.6h1.2v1.2h-1.2zM1848.8 319.9h0.8v0.8h-0.8zM1828.8 322.7h0.7v0.7h-0.7zM1846.5 316.2h1.3v1.3h-1.3zM1831.0 325.2h0.9v0.9h-0.9zM1841.3 323.2h1.0v1.0h-1.0zM1839.0 319.0h0.8v0.8h-0.8zM1830.0 319.6h0.7v0.7h-0.7zM1839.8 325.2h0.6v0.6h-0.6zM1836.6 322.2h1.2v1.2h-1.2zM1832.2 313.8h0.8v0.8h-0.8zM1834.3 314.3h1.2v1.2h-1.2zM1839.8 315.9h0.9v0.9h-0.9zM1829.2 329.0h0.7v0.7h-0.7zM1841.7 321.2h1.3v1.3h-1.3zM1829.7 313.2h0.9v0.9h-0.9zM1835.0 313.1h0.9v0.9h-0.9zM1830.9 311.5h1.3v1.3h-1.3zM1830.1 311.8h0.6v0.6h-0.6zM1840.3 330.9h0.6v0.6h-0.6zM1832.0 321.3h0.9v0.9h-0.9zM1833.3 330.7h0.6v0.6h-0.6zM1842.3 309.6h0.8v0.8h-0.8zM1840.1 311.6h0.7v0.7h-0.7zM1833.6 319.6h0.8v0.8h-0.8zM1840.8 321.9h1.2v1.2h-1.2zM1826.0 319.4h0.9v0.9h-0.9zM1834.2 327.3h0.8v0.8h-0.8zM1838.6 319.7h0.7v0.7h-0.7zM1838.5 327.8h0.8v0.8h-0.8zM1843.5 326.2h1.2v1.2h-1.2zM1831.0 318.2h0.9v0.9h-0.9zM1837.0 321.8h0.8v0.8h-0.8zM1829.4 326.9h0.8v0.8h-0.8zM1839.3 317.6h0.8v0.8h-0.8zM1841.6 329.3h0.6v0.6h-0.6zM1829.6 316.9h1.1v1.1h-1.1zM1831.4 319.1h1.3v1.3h-1.3zM1833.0 320.4h0.9v0.9h-0.9zM1834.1 319.7h0.5v0.5h-0.5zM1827.2 320.2h0.8v0.8h-0.8zM1833.7 315.8h1.1v1.1h-1.1zM1839.3 312.1h1.2v1.2h-1.2zM1831.4 323.6h0.5v0.5h-0.5zM1829.7 327.1h1.1v1.1h-1.1zM1830.3 323.1h1.0v1.0h-1.0zM1844.6 322.7h1.2v1.2h-1.2zM1838.8 321.9h0.9v0.9h-0.9zM1831.9 315.7h0.8v0.8h-0.8zM1848.0 315.3h1.3v1.3h-1.3zM1839.9 325.3h0.7v0.7h-0.7zM1844.5 315.1h1.0v1.0h-1.0zM1845.9 325.4h1.3v1.3h-1.3zM1837.8 325.7h0.5v0.5h-0.5zM1839.8 315.8h0.7v0.7h-0.7zM1843.5 313.1h0.9v0.9h-0.9zM1837.6 331.7h0.8v0.8h-0.8zM1836.3 310.8h0.8v0.8h-0.8zM1844.0 318.8h0.7v0.7h-0.7zM1837.2 321.6h0.9v0.9h-0.9zM1846.0 315.8h0.8v0.8h-0.8zM1833.6 330.0h1.2v1.2h-1.2zM1835.0 324.8h0.7v0.7h-0.7zM1839.9 312.9h1.0v1.0h-1.0zM1832.4 310.6h0.9v0.9h-0.9zM1846.3 321.5h0.7v0.7h-0.7zM1842.3 313.1h1.1v1.1h-1.1zM1832.8 310.0h1.2v1.2h-1.2zM1846.3 314.7h0.7v0.7h-0.7zM1836.8 313.6h1.1v1.1h-1.1zM1828.9 317.0h0.6v0.6h-0.6zM1838.4 323.2h0.6v0.6h-0.6zM1844.7 311.6h0.8v0.8h-0.8zM1828.7 322.4h1.1v1.1h-1.1zM1847.1 326.0h0.5v0.5h-0.5zM1844.5 326.5h0.8v0.8h-0.8zM1831.6 313.5h0.9v0.9h-0.9zM1826.5 318.8h0.8v0.8h-0.8zM1837.8 311.3h1.2v1.2h-1.2zM1841.5 323.6h0.5v0.5h-0.5zM1845.2 321.5h0.9v0.9h-0.9zM1838.6 323.6h0.7v0.7h-0.7zM1843.6 314.6h0.8v0.8h-0.8zM1830.4 317.0h0.9v0.9h-0.9zM1847.6 325.3h1.0v1.0h-1.0zM1835.2 308.9h0.6v0.6h-0.6zM1841.5 321.8h0.7v0.7h-0.7zM1839.3 326.4h1.2v1.2h-1.2zM1828.8 314.6h0.9v0.9h-0.9zM1846.9 315.0h0.6v0.6h-0.6zM1831.7 309.7h1.2v1.2h-1.2zM1830.5 317.8h0.6v0.6h-0.6zM1836.6 322.8h0.6v0.6h-0.6zM1838.4 312.2h0.8v0.8h-0.8zM1835.5 314.1h1.2v1.2h-1.2zM1837.5 324.5h0.7v0.7h-0.7zM1847.7 316.8h0.7v0.7h-0.7zM1838.4 319.3h1.1v1.1h-1.1zM1832.2 321.3h1.0v1.0h-1.0zM1838.3 328.1h1.1v1.1h-1.1zM1827.1 325.3h1.2v1.2h-1.2zM1838.9 324.3h0.5v0.5h-0.5zM1835.5 322.0h0.8v0.8h-0.8zM1842.6 325.3h0.7v0.7h-0.7zM1846.4 315.3h0.8v0.8h-0.8zM1834.3 319.4h0.6v0.6h-0.6zM1838.2 317.5h0.8v0.8h-0.8zM1837.4 324.7h0.7v0.7h-0.7zM1839.1 331.3h0.7v0.7h-0.7zM1834.0 315.9h1.2v1.2h-1.2zM1843.3 315.1h1.3v1.3h-1.3zM1835.3 308.9h0.9v0.9h-0.9zM1839.2 321.2h1.2v1.2h-1.2zM1843.9 318.3h1.2v1.2h-1.2zM1842.0 316.7h1.1v1.1h-1.1zM1838.7 310.7h0.7v0.7h-0.7zM1842.9 322.0h0.7v0.7h-0.7zM1830.6 319.1h0.8v0.8h-0.8zM1835.6 323.4h0.7v0.7h-0.7zM1834.2 315.2h1.2v1.2h-1.2zM1842.2 314.6h0.7v0.7h-0.7zM1830.6 310.8h1.2v1.2h-1.2zM1838.1 324.6h0.6v0.6h-0.6zM1842.2 318.0h0.8v0.8h-0.8zM1837.6 314.3h1.1v1.1h-1.1zM1844.0 320.7h0.5v0.5h-0.5zM1839.4 314.9h1.2v1.2h-1.2zM1837.1 316.8h0.8v0.8h-0.8zM1839.6 310.8h0.8v0.8h-0.8zM1839.8 323.0h0.8v0.8h-0.8zM1827.7 320.5h1.2v1.2h-1.2zM1834.0 312.1h0.9v0.9h-0.9zM1835.5 318.7h0.6v0.6h-0.6zM1830.0 318.0h1.2v1.2h-1.2zM1837.7 326.3h0.7v0.7h-0.7zM1831.0 311.3h0.6v0.6h-0.6zM1829.8 326.3h1.1v1.1h-1.1zM1837.5 316.0h1.1v1.1h-1.1zM1826.4 323.4h0.7v0.7h-0.7zM1843.0 310.3h1.0v1.0h-1.0z"/><path d="M1849,334.5 L1854,334.5 M1851.5,332 L1851.5,337" stroke="#000" stroke-width="1.3"/><path fill="#000" opacity="0.6" d="M1874.9 324.9h0.7v0.7h-0.7zM1874.5 317.8h0.7v0.7h-0.7zM1866.3 325.7h0.9v0.9h-0.9zM1876.3 320.8h0.5v0.5h-0.5zM1862.1 320.4h0.9v0.9h-0.9zM1871.5 317.0h1.1v1.1h-1.1zM1875.8 320.4h0.8v0.8h-0.8zM1868.0 315.2h0.9v0.9h-0.9zM1866.7 321.5h0.6v0.6h-0.6zM1869.9 320.9h0.9v0.9h-0.9zM1876.4 327.3h1.0v1.0h-1.0zM1876.6 309.8h0.6v0.6h-0.6zM1872.1 319.6h0.6v0.6h-0.6zM1870.4 329.4h1.1v1.1h-1.1zM1873.8 327.3h0.6v0.6h-0.6zM1871.9 319.7h1.0v1.0h-1.0zM1870.9 323.1h1.0v1.0h-1.0zM1870.5 309.4h1.0v1.0h-1.0zM1865.2 321.9h0.9v0.9h-0.9zM1867.5 320.2h0.8v0.8h-0.8zM1861.6 324.0h1.0v1.0h-1.0zM1872.4 318.5h0.8v0.8h-0.8zM1870.9 320.4h0.6v0.6h-0.6zM1882.6 320.4h0.6v0.6h-0.6zM1877.5 330.4h0.6v0.6h-0.6zM1868.1 311.4h0.8v0.8h-0.8zM1875.6 321.8h1.0v1.0h-1.0zM1867.9 323.2h0.8v0.8h-0.8zM1882.4 322.1h0.9v0.9h-0.9zM1877.4 318.9h0.9v0.9h-0.9zM1883.5 315.6h0.7v0.7h-0.7zM1880.3 317.8h0.8v0.8h-0.8zM1868.8 318.5h0.7v0.7h-0.7zM1860.4 319.8h0.8v0.8h-0.8zM1864.2 330.5h0.5v0.5h-0.5zM1874.7 325.0h1.1v1.1h-1.1zM1865.4 321.3h1.0v1.0h-1.0zM1873.4 330.8h0.5v0.5h-0.5zM1860.9 313.1h0.8v0.8h-0.8zM1872.2 323.8h1.0v1.0h-1.0zM1870.7 332.2h0.7v0.7h-0.7zM1880.8 325.9h0.9v0.9h-0.9zM1871.8 319.7h0.7v0.7h-0.7zM1859.0 320.7h0.5v0.5h-0.5zM1866.5 322.4h0.8v0.8h-0.8zM1866.6 321.5h0.7v0.7h-0.7zM1871.0 319.7h0.6v0.6h-0.6zM1871.9 324.7h0.7v0.7h-0.7zM1871.0 325.8h0.9v0.9h-0.9zM1873.4 332.4h0.5v0.5h-0.5zM1869.0 329.7h0.9v0.9h-0.9zM1870.3 324.5h0.9v0.9h-0.9zM1863.6 327.7h1.0v1.0h-1.0zM1877.9 327.7h0.6v0.6h-0.6zM1860.3 315.2h0.8v0.8h-0.8zM1876.2 316.2h0.6v0.6h-0.6zM1866.0 318.5h0.8v0.8h-0.8zM1871.9 323.7h0.8v0.8h-0.8zM1875.3 322.6h0.5v0.5h-0.5zM1870.8 317.2h0.6v0.6h-0.6zM1877.2 314.0h0.7v0.7h-0.7zM1868.1 326.8h0.9v0.9h-0.9zM1870.2 322.0h0.6v0.6h-0.6zM1869.6 313.1h1.0v1.0h-1.0zM1874.0 329.8h0.7v0.7h-0.7zM1869.9 329.8h0.6v0.6h-0.6zM1873.3 326.7h0.7v0.7h-0.7zM1883.9 326.5h0.7v0.7h-0.7zM1870.2 321.9h0.5v0.5h-0.5zM1872.7 321.4h0.8v0.8h-0.8zM1864.5 310.9h0.6v0.6h-0.6zM1875.7 310.3h0.5v0.5h-0.5zM1873.3 323.4h1.0v1.0h-1.0zM1872.0 318.6h0.6v0.6h-0.6zM1877.1 327.6h0.7v0.7h-0.7zM1883.4 316.1h0.6v0.6h-0.6zM1870.9 327.4h0.7v0.7h-0.7zM1873.0 316.7h1.0v1.0h-1.0zM1866.4 316.7h1.1v1.1h-1.1zM1865.4 328.6h1.1v1.1h-1.1zM1882.8 312.0h0.7v0.7h-0.7zM1873.9 308.9h0.6v0.6h-0.6zM1859.5 323.5h0.9v0.9h-0.9zM1868.1 330.0h0.5v0.5h-0.5zM1865.0 325.2h0.6v0.6h-0.6zM1881.0 320.5h0.8v0.8h-0.8zM1870.3 317.4h0.5v0.5h-0.5zM1880.3 322.2h0.5v0.5h-0.5zM1874.3 327.1h0.7v0.7h-0.7zM1870.9 317.6h0.8v0.8h-0.8zM1868.6 321.7h1.0v1.0h-1.0zM1884.4 314.8h0.6v0.6h-0.6zM1882.4 321.5h1.0v1.0h-1.0zM1868.9 324.0h1.0v1.0h-1.0zM1863.3 317.2h0.9v0.9h-0.9zM1860.2 318.5h0.8v0.8h-0.8zM1872.0 319.7h0.7v0.7h-0.7zM1878.5 315.9h0.9v0.9h-0.9zM1859.0 317.6h0.5v0.5h-0.5zM1871.3 323.0h1.0v1.0h-1.0zM1875.7 319.5h0.6v0.6h-0.6zM1872.2 328.7h0.9v0.9h-0.9zM1871.6 331.2h0.7v0.7h-0.7zM1865.7 320.1h0.7v0.7h-0.7zM1873.0 320.2h1.1v1.1h-1.1zM1870.5 325.5h1.1v1.1h-1.1zM1871.2 321.8h1.0v1.0h-1.0zM1864.0 325.4h0.6v0.6h-0.6zM1874.9 322.8h0.9v0.9h-0.9zM1862.2 317.7h0.9v0.9h-0.9zM1862.8 315.8h0.6v0.6h-0.6zM1874.9 326.1h1.0v1.0h-1.0zM1873.9 330.5h1.0v1.0h-1.0zM1871.8 317.8h0.5v0.5h-0.5zM1873.5 316.4h0.4v0.4h-0.4zM1862.9 315.1h1.0v1.0h-1.0zM1869.9 311.6h0.7v0.7h-0.7zM1876.4 318.0h0.7v0.7h-0.7zM1878.9 325.4h0.9v0.9h-0.9zM1865.6 319.4h0.5v0.5h-0.5zM1871.3 319.2h0.9v0.9h-0.9zM1862.8 312.2h0.9v0.9h-0.9zM1872.4 315.3h1.0v1.0h-1.0zM1864.6 315.9h0.7v0.7h-0.7zM1877.4 312.5h0.8v0.8h-0.8zM1863.2 313.0h1.1v1.1h-1.1zM1876.4 331.9h0.6v0.6h-0.6zM1862.0 324.1h1.0v1.0h-1.0zM1869.0 324.2h0.8v0.8h-0.8zM1865.3 320.8h0.6v0.6h-0.6zM1885.2 320.9h0.7v0.7h-0.7zM1880.3 315.4h0.5v0.5h-0.5zM1874.8 325.3h0.6v0.6h-0.6zM1881.0 326.4h0.8v0.8h-0.8zM1876.7 326.3h0.9v0.9h-0.9zM1875.7 314.3h0.6v0.6h-0.6zM1880.9 322.0h0.8v0.8h-0.8zM1876.6 319.9h0.5v0.5h-0.5zM1861.7 318.2h0.6v0.6h-0.6zM1871.4 323.4h1.0v1.0h-1.0zM1867.6 317.9h0.7v0.7h-0.7zM1872.0 320.6h1.0v1.0h-1.0zM1872.6 314.9h0.7v0.7h-0.7zM1876.4 318.1h0.9v0.9h-0.9zM1876.7 317.5h0.9v0.9h-0.9zM1866.4 331.7h0.5v0.5h-0.5zM1876.8 328.7h0.7v0.7h-0.7zM1860.1 323.1h0.5v0.5h-0.5zM1873.5 328.7h0.6v0.6h-0.6zM1868.0 321.1h0.8v0.8h-0.8zM1871.3 319.0h0.9v0.9h-0.9zM1876.9 318.1h0.9v0.9h-0.9zM1867.4 331.1h1.1v1.1h-1.1zM1870.1 313.9h0.7v0.7h-0.7zM1877.1 330.8h1.0v1.0h-1.0zM1868.6 308.3h0.6v0.6h-0.6zM1878.8 323.6h1.1v1.1h-1.1zM1862.0 313.7h0.9v0.9h-0.9zM1865.3 323.9h0.6v0.6h-0.6zM1861.5 328.0h1.0v1.0h-1.0zM1863.9 313.6h0.6v0.6h-0.6zM1864.0 310.6h0.5v0.5h-0.5zM1875.4 319.5h0.5v0.5h-0.5zM1878.7 320.9h0.9v0.9h-0.9zM1872.7 332.4h0.9v0.9h-0.9zM1879.4 328.2h0.6v0.6h-0.6zM1871.7 318.9h1.0v1.0h-1.0zM1865.9 327.8h0.5v0.5h-0.5zM1865.5 320.0h0.5v0.5h-0.5zM1859.9 325.9h0.5v0.5h-0.5zM1877.7 318.7h1.0v1.0h-1.0zM1875.6 312.2h0.8v0.8h-0.8zM1879.2 318.7h1.0v1.0h-1.0zM1866.3 320.6h1.1v1.1h-1.1zM1880.6 329.6h0.9v0.9h-0.9zM1877.7 330.6h0.5v0.5h-0.5zM1869.4 307.6h0.9v0.9h-0.9zM1881.1 315.2h0.9v0.9h-0.9zM1883.0 313.2h0.7v0.7h-0.7zM1875.0 325.3h0.5v0.5h-0.5zM1877.9 316.3h1.1v1.1h-1.1zM1877.8 324.4h0.8v0.8h-0.8zM1864.7 327.2h0.6v0.6h-0.6zM1884.5 322.2h0.8v0.8h-0.8zM1866.7 329.5h0.5v0.5h-0.5zM1869.4 327.0h1.0v1.0h-1.0zM1865.5 316.4h0.8v0.8h-0.8zM1877.8 317.5h0.6v0.6h-0.6zM1869.3 319.4h0.6v0.6h-0.6zM1868.0 314.2h0.5v0.5h-0.5zM1885.7 320.1h1.0v1.0h-1.0zM1866.2 313.8h0.7v0.7h-0.7zM1885.6 317.5h1.0v1.0h-1.0zM1866.0 312.6h1.0v1.0h-1.0zM1872.9 327.3h0.8v0.8h-0.8zM1867.9 327.6h0.8v0.8h-0.8zM1878.7 316.8h0.7v0.7h-0.7zM1871.9 320.0h0.5v0.5h-0.5zM1884.4 322.1h1.0v1.0h-1.0zM1872.2 315.6h0.8v0.8h-0.8zM1877.0 326.4h0.8v0.8h-0.8zM1870.9 317.8h1.0v1.0h-1.0zM1860.1 313.1h0.5v0.5h-0.5zM1870.2 309.1h1.1v1.1h-1.1zM1872.5 325.3h1.0v1.0h-1.0zM1871.2 317.9h0.8v0.8h-0.8zM1868.5 330.4h0.5v0.5h-0.5zM1870.8 313.8h0.5v0.5h-0.5zM1871.7 330.9h1.0v1.0h-1.0zM1873.0 319.8h1.0v1.0h-1.0zM1867.4 315.6h0.5v0.5h-0.5zM1870.2 312.3h0.6v0.6h-0.6zM1870.2 319.6h1.0v1.0h-1.0zM1878.2 311.7h1.1v1.1h-1.1zM1875.4 326.5h1.1v1.1h-1.1zM1880.1 314.8h0.5v0.5h-0.5zM1863.3 320.3h0.8v0.8h-0.8zM1871.0 323.8h0.6v0.6h-0.6zM1872.3 332.6h0.5v0.5h-0.5zM1875.7 332.3h0.5v0.5h-0.5zM1878.5 321.3h0.8v0.8h-0.8zM1865.2 310.3h1.0v1.0h-1.0zM1883.7 321.0h0.6v0.6h-0.6zM1862.7 312.9h0.5v0.5h-0.5zM1859.2 316.8h0.7v0.7h-0.7zM1864.8 311.9h0.7v0.7h-0.7zM1880.1 326.1h0.4v0.4h-0.4zM1879.0 316.8h0.8v0.8h-0.8zM1877.3 326.2h0.7v0.7h-0.7zM1870.8 318.4h0.6v0.6h-0.6zM1861.0 317.3h0.9v0.9h-0.9zM1885.1 322.1h0.7v0.7h-0.7zM1863.0 310.3h1.0v1.0h-1.0zM1869.0 323.4h0.8v0.8h-0.8zM1869.2 320.0h0.8v0.8h-0.8zM1873.9 317.3h0.8v0.8h-0.8zM1868.1 319.1h1.0v1.0h-1.0zM1879.5 328.1h0.5v0.5h-0.5zM1875.8 317.1h0.9v0.9h-0.9zM1866.8 311.9h0.9v0.9h-0.9zM1871.0 326.7h0.8v0.8h-0.8zM1870.4 313.8h0.7v0.7h-0.7zM1870.5 318.6h0.8v0.8h-0.8zM1863.6 325.6h0.6v0.6h-0.6zM1881.8 323.4h0.6v0.6h-0.6zM1873.0 320.5h1.0v1.0h-1.0zM1869.1 320.0h0.5v0.5h-0.5zM1865.3 317.6h0.5v0.5h-0.5zM1864.1 318.0h0.8v0.8h-0.8zM1872.2 320.1h0.8v0.8h-0.8zM1880.2 320.1h0.7v0.7h-0.7zM1877.6 314.2h0.5v0.5h-0.5zM1879.3 328.8h0.6v0.6h-0.6zM1867.0 316.8h0.6v0.6h-0.6zM1865.6 326.6h0.7v0.7h-0.7zM1868.8 324.9h1.0v1.0h-1.0zM1883.1 318.4h0.9v0.9h-0.9zM1864.1 326.9h0.9v0.9h-0.9zM1876.5 319.7h0.4v0.4h-0.4zM1861.4 319.3h0.6v0.6h-0.6zM1875.8 319.4h0.8v0.8h-0.8zM1880.3 309.7h0.7v0.7h-0.7zM1871.6 317.3h0.8v0.8h-0.8zM1879.5 328.0h0.8v0.8h-0.8zM1884.8 324.5h0.8v0.8h-0.8zM1879.9 310.4h0.8v0.8h-0.8zM1862.5 323.6h0.8v0.8h-0.8zM1872.0 320.1h0.9v0.9h-0.9zM1881.3 315.0h0.8v0.8h-0.8zM1875.1 315.4h0.6v0.6h-0.6zM1874.8 308.5h0.8v0.8h-0.8zM1862.7 318.4h0.7v0.7h-0.7zM1870.5 320.7h0.8v0.8h-0.8zM1874.0 314.7h0.9v0.9h-0.9zM1870.8 310.4h0.5v0.5h-0.5z"/><path d="M1883,334.5 L1888,334.5 M1885.5,332 L1885.5,337" stroke="#000" stroke-width="1.3"/><path fill="#000" opacity="0.75" d="M1726.0 357.2h1.0v1.0h-1.0zM1738.3 354.4h0.6v0.6h-0.6zM1736.1 349.9h0.8v0.8h-0.8zM1731.6 363.9h0.7v0.7h-0.7zM1733.7 362.8h1.0v1.0h-1.0zM1740.8 347.2h0.9v0.9h-0.9zM1744.4 349.1h0.8v0.8h-0.8zM1735.4 350.5h0.8v0.8h-0.8zM1734.4 362.5h0.5v0.5h-0.5zM1733.0 362.5h1.0v1.0h-1.0zM1747.7 352.4h0.8v0.8h-0.8zM1737.7 347.1h0.5v0.5h-0.5zM1731.4 363.6h0.8v0.8h-0.8zM1738.9 357.4h0.9v0.9h-0.9zM1742.4 351.1h0.8v0.8h-0.8zM1743.6 347.4h0.9v0.9h-0.9zM1723.9 351.0h0.6v0.6h-0.6zM1745.8 357.8h0.9v0.9h-0.9zM1745.1 361.4h0.7v0.7h-0.7zM1732.3 354.7h0.5v0.5h-0.5zM1738.7 344.1h0.8v0.8h-0.8zM1728.1 352.7h0.9v0.9h-0.9zM1738.0 353.6h0.6v0.6h-0.6zM1736.5 343.7h0.9v0.9h-0.9zM1740.0 359.7h0.7v0.7h-0.7zM1744.2 355.3h0.5v0.5h-0.5zM1723.9 354.0h0.5v0.5h-0.5zM1745.1 349.8h0.7v0.7h-0.7zM1743.6 359.8h0.7v0.7h-0.7zM1743.3 353.8h0.8v0.8h-0.8zM1732.8 357.5h0.7v0.7h-0.7zM1736.6 362.5h0.6v0.6h-0.6zM1733.1 342.3h0.9v0.9h-0.9zM1734.5 356.2h0.9v0.9h-0.9zM1724.6 361.5h0.5v0.5h-0.5zM1726.1 346.1h0.6v0.6h-0.6zM1730.5 357.6h0.4v0.4h-0.4zM1742.3 352.2h1.0v1.0h-1.0zM1747.2 354.3h0.7v0.7h-0.7zM1738.1 348.4h0.6v0.6h-0.6zM1727.6 355.9h0.6v0.6h-0.6zM1735.7 355.4h0.4v0.4h-0.4zM1738.1 358.0h1.0v1.0h-1.0zM1730.3 346.1h0.5v0.5h-0.5zM1730.0 365.6h1.0v1.0h-1.0zM1740.6 349.8h0.9v0.9h-0.9zM1735.0 364.0h0.8v0.8h-0.8zM1733.1 352.8h0.6v0.6h-0.6zM1733.2 362.6h0.6v0.6h-0.6zM1729.0 360.0h0.8v0.8h-0.8zM1730.7 359.3h0.8v0.8h-0.8zM1727.3 346.3h0.8v0.8h-0.8zM1740.1 358.8h0.8v0.8h-0.8zM1732.1 342.1h0.9v0.9h-0.9zM1727.1 348.4h0.6v0.6h-0.6zM1728.7 350.8h0.6v0.6h-0.6zM1737.3 366.5h1.1v1.1h-1.1zM1732.0 362.2h0.5v0.5h-0.5zM1737.8 348.8h1.0v1.0h-1.0zM1735.9 362.7h0.9v0.9h-0.9zM1724.9 347.1h0.9v0.9h-0.9zM1727.7 355.0h0.7v0.7h-0.7zM1723.9 357.3h0.5v0.5h-0.5zM1731.5 363.9h0.5v0.5h-0.5zM1737.1 347.4h1.0v1.0h-1.0zM1735.9 365.1h1.0v1.0h-1.0zM1730.8 362.2h0.9v0.9h-0.9zM1743.7 350.7h1.0v1.0h-1.0zM1744.9 345.9h0.6v0.6h-0.6zM1725.7 356.6h0.8v0.8h-0.8zM1742.5 359.6h1.0v1.0h-1.0zM1730.5 352.8h0.6v0.6h-0.6zM1741.5 349.8h0.5v0.5h-0.5zM1733.0 363.1h0.5v0.5h-0.5zM1726.6 354.5h0.9v0.9h-0.9zM1734.2 358.7h0.7v0.7h-0.7zM1738.8 362.3h0.7v0.7h-0.7zM1737.8 350.2h0.8v0.8h-0.8zM1734.3 357.9h0.5v0.5h-0.5zM1726.8 350.8h0.8v0.8h-0.8zM1733.8 351.5h1.1v1.1h-1.1zM1740.4 351.8h0.5v0.5h-0.5zM1735.8 351.2h0.8v0.8h-0.8zM1730.4 365.9h0.5v0.5h-0.5zM1731.3 354.2h0.5v0.5h-0.5zM1732.6 343.0h0.5v0.5h-0.5zM1739.2 353.8h0.6v0.6h-0.6zM1735.1 359.7h0.8v0.8h-0.8zM1746.4 354.8h1.0v1.0h-1.0zM1744.6 351.3h0.5v0.5h-0.5zM1734.1 357.7h1.0v1.0h-1.0zM1726.6 347.5h0.9v0.9h-0.9zM1735.0 341.2h0.6v0.6h-0.6zM1729.5 360.2h0.8v0.8h-0.8zM1729.3 354.0h0.6v0.6h-0.6zM1733.7 351.5h1.0v1.0h-1.0zM1741.6 358.1h1.0v1.0h-1.0zM1738.5 362.0h0.6v0.6h-0.6zM1742.3 360.3h1.0v1.0h-1.0z"/><rect x="1747.5" y="367" width="5" height="5" fill="#ff8080" opacity="0.75"/><path d="M1747,368.5 L1752,368.5 M1749.5,366 L1749.5,371" stroke="#000" stroke-width="1.3"/><ellipse cx="1770" cy="353" rx="3" ry="9" fill="#999"/><path fill="#555" opacity="1.0" d="M1767.7 357.4h0.6v0.6h-0.6zM1768.9 346.0h0.5v0.5h-0.5zM1769.9 350.5h0.7v0.7h-0.7zM1771.7 359.3h0.6v0.6h-0.6zM1768.0 357.5h0.7v0.7h-0.7zM1768.4 350.5h0.9v0.9h-0.9zM1767.5 355.5h0.6v0.6h-0.6zM1770.0 353.0h1.0v1.0h-1.0zM1767.4 352.1h0.5v0.5h-0.5zM1772.0 356.7h0.7v0.7h-0.7zM1769.6 360.5h0.8v0.8h-0.8zM1770.4 358.0h0.8v0.8h-0.8zM1771.5 354.4h0.8v0.8h-0.8zM1771.0 360.5h0.7v0.7h-0.7zM1769.1 351.9h0.7v0.7h-0.7zM1771.1 352.6h0.7v0.7h-0.7zM1770.0 356.7h0.6v0.6h-0.6zM1772.7 351.0h0.5v0.5h-0.5zM1770.3 345.0h0.9v0.9h-0.9zM1770.8 352.1h1.0v1.0h-1.0zM1770.4 347.0h0.7v0.7h-0.7zM1769.5 344.6h0.5v0.5h-0.5zM1771.9 354.0h0.5v0.5h-0.5zM1772.1 348.4h1.1v1.1h-1.1zM1770.9 355.9h0.5v0.5h-0.5zM1769.9 352.0h0.5v0.5h-0.5zM1770.1 354.4h1.0v1.0h-1.0zM1771.8 350.0h0.9v0.9h-0.9zM1769.4 353.8h0.6v0.6h-0.6zM1770.2 353.4h0.6v0.6h-0.6zM1769.8 352.8h0.8v0.8h-0.8zM1769.1 353.0h0.5v0.5h-0.5zM1767.9 357.4h0.9v0.9h-0.9zM1769.8 350.4h0.5v0.5h-0.5zM1770.0 352.2h0.7v0.7h-0.7zM1769.6 354.3h0.5v0.5h-0.5zM1769.4 357.9h0.8v0.8h-0.8zM1770.8 347.7h1.1v1.1h-1.1zM1770.1 355.7h0.7v0.7h-0.7zM1770.5 355.0h0.8v0.8h-0.8zM1769.3 354.7h0.9v0.9h-0.9zM1769.6 344.8h0.8v0.8h-0.8zM1768.4 350.4h1.0v1.0h-1.0zM1768.8 359.7h0.8v0.8h-0.8z"/><rect x="1781.5" y="367" width="5" height="5" fill="#ff8080" opacity="0.75"/><path d="M1781,368.5 L1786,368.5 M1783.5,366 L1783.5,371" stroke="#000" stroke-width="1.3"/><path fill="#000" opacity="1.0" d="M1804.2 344.8h0.9v0.9h-0.9zM1802.9 350.1h0.8v0.8h-0.8zM1802.2 359.5h1.0v1.0h-1.0zM1805.3 358.4h1.1v1.1h-1.1zM1803.6 351.8h1.2v1.2h-1.2zM1802.5 355.0h1.1v1.1h-1.1zM1801.7 349.8h0.8v0.8h-0.8zM1805.0 354.4h0.8v0.8h-0.8zM1805.9 354.7h1.5v1.5h-1.5zM1804.7 353.1h0.9v0.9h-0.9zM1802.2 359.8h0.7v0.7h-0.7zM1802.9 356.9h0.8v0.8h-0.8zM1803.0 359.4h1.3v1.3h-1.3zM1804.5 345.8h1.0v1.0h-1.0zM1804.1 353.3h1.3v1.3h-1.3zM1804.5 345.8h1.2v1.2h-1.2zM1803.8 353.5h1.1v1.1h-1.1zM1804.7 355.4h1.4v1.4h-1.4zM1802.0 348.3h1.5v1.5h-1.5zM1803.6 343.7h0.8v0.8h-0.8zM1803.9 346.1h1.2v1.2h-1.2zM1805.0 357.0h1.5v1.5h-1.5zM1803.5 343.8h1.4v1.4h-1.4zM1805.1 354.9h1.5v1.5h-1.5z"/><rect x="1815.5" y="367" width="5" height="5" fill="#ff8080" opacity="0.75"/><path d="M1815,368.5 L1820,368.5 M1817.5,366 L1817.5,371" stroke="#000" stroke-width="1.3"/><ellipse cx="1838" cy="351" rx="3.5" ry="11" fill="#111"/><path d="M1854,366 L1854,371 L1848.5,371Z" fill="#ff8080"/><g stroke="#000" stroke-width="1.1"><path d="M1856,349.0 l20,15"/><path d="M1859,346.5 l20,15"/><path d="M1862,344.0 l20,15"/><path d="M1865,341.5 l20,15"/><path d="M1868,339.0 l20,15"/></g><path d="M1883,368.5 L1888,368.5 M1885.5,366 L1885.5,371" stroke="#000" stroke-width="1.3"/><path d="M1764,377 L1773,375" stroke="#ccc" stroke-width="3"/><ellipse cx="1804" cy="378" rx="9" ry="4" fill="#ffb090"/></g></svg><div class="a" style="left:1889px;top:100px;width:10px;height:279px;background:#3c3c3c;border-radius:0px;"></div><div class="a" style="left:1899px;top:100px;width:16px;height:279px;background:#262626;border-radius:0px;"></div><div class="a" style="left:1900px;top:100px;width:14px;height:190px;background:#5e5e5e;border:1px solid #1c1c1c;border-radius:3px;"></div><div class="a" style="left:1720px;top:383px;width:193px;height:21px;background:#1e1e1e;border-radius:0px;"></div><div class="t" style="left:1721.1px;top:385.90px;font-size:15px;line-height:15px;color:#dcdcdc;font-weight:400;font-style:normal;transform:scaleX(0.7832);transform-origin:0 0;">Basic,</div><svg class="a" style="left:1900px;top:390px" width="9" height="8"><path d="M1,1 L4.5,6 L8,1" fill="none" stroke="#e8e8e8" stroke-width="1.8"/></svg><div class="a" style="left:1718px;top:407px;width:197px;height:38px;background:#2b2b2b;border:1px solid #6a6a6a;border-radius:0px;"></div><div class="a" style="left:1719px;top:408px;width:5px;height:36px;background:#4a4a4a;border-radius:0px;"></div><div class="a" style="left:1724px;top:408px;width:1px;height:36px;background:#111;border-radius:0px;"></div><div class="t" style="left:1719.5px;top:417.70px;font-size:15px;line-height:15px;color:#dcdcdc;font-weight:400;font-style:normal;transform:scaleX(0.8761);transform-origin:0 0;">Spacing</div><div class="t" style="left:1872.6px;top:417.70px;font-size:15px;line-height:15px;color:#dcdcdc;font-weight:400;font-style:normal;transform:scaleX(0.9417);transform-origin:0 0;">10.0</div><div class="a" style="left:1903px;top:409px;width:11px;height:34px;background:#333;border-radius:0px;"></div><svg class="a" style="left:1903px;top:409px" width="11" height="34"><path d="M2,10 L5.5,5.5 L9,10" fill="none" stroke="#cfcfcf" stroke-width="1.4"/><path d="M2,24 L5.5,28.5 L9,24" fill="none" stroke="#cfcfcf" stroke-width="1.4"/></svg><svg class="a" style="left:1716px;top:448px" width="199" height="20"><g stroke="#c0c0c0" fill="none" stroke-width="1.2"><path d="M14,8 L20,8 M14,11.5 L18,11.5 M14,15 L20,15"/><path d="M18.5,13 L25,6.5 L26.5,8 L20,14.5 L18,15Z" fill="#c0c0c0"/></g><g stroke="#c0c0c0" fill="none" stroke-width="1.2"><path d="M56.5,7 L62,7 L65,10 L65,16.5 L56.5,16.5Z"/><path d="M53,6 L58,6 M55.5,3.5 L55.5,8.5"/></g><g stroke="#c0c0c0" fill="none" stroke-width="1.1"><rect x="93" y="5" width="7.5" height="6.5"/><path d="M96,11.5 L96,15 L104,15 L104,8.5 L100.5,8.5"/></g><rect x="131" y="3.5" width="13.5" height="13.5" fill="#b0b0b0"/><path d="M133.5,6 L142,14.5 M142,6 L133.5,14.5" stroke="#2a2a2a" stroke-width="2"/><path d="M180.5,9 A5,5 0 1 0 178,14.5" fill="none" stroke="#c0c0c0" stroke-width="1.6"/><path d="M176,5 L181.5,5.5 L180.5,10.5Z" fill="#c0c0c0"/></svg><div class="a" style="left:1716px;top:470px;width:199px;height:1px;background:#2f2f2f;border-radius:0px;"></div><svg class="a" style="left:1806px;top:471px" width="20" height="3"><g fill="#888"><rect x="0.5" y="0" width="4" height="2"/><rect x="8" y="0" width="4" height="2"/><rect x="15.5" y="0" width="4" height="2"/></g></svg><div class="a" style="left:1716px;top:475px;width:20px;height:22px;background:#454545;border-radius:0px;border-top:1px solid #5a5a5a;border-right:1px solid #5a5a5a"></div><div class="a" style="left:1736px;top:478px;width:18px;height:18px;background:#282828;border-radius:0px;"></div><div class="a" style="left:1755px;top:478px;width:18px;height:18px;background:#282828;border-radius:0px;"></div><div class="a" style="left:1736px;top:496px;width:179px;height:1px;background:#5a5a5a;border-radius:0px;"></div><svg class="a" style="left:1716px;top:475px" width="60" height="22"><g fill="#bdbdbd"><path d="M5,5 L16,5 L14,8 L3,8Z"/><path d="M5,10 L16,10 L14,13 L3,13Z"/><path d="M5,15 L16,15 L14,18 L3,18Z"/></g><rect x="22" y="6.5" width="11.5" height="11.5" fill="none" stroke="#bdbdbd" stroke-width="1.2"/><path d="M25.5,8 L25.5,16.5 M28,8 L28,16.5 M30.5,8 L30.5,16.5" stroke="#bdbdbd" stroke-width="1.2"/><path d="M41,9 L53,9 M42.5,15.5 Q47,8.5 51.5,15.5" fill="none" stroke="#bdbdbd" stroke-width="1.7"/><rect x="40.5" y="7.5" width="2.5" height="3" fill="#bdbdbd"/><rect x="51" y="7.5" width="2.5" height="3" fill="#bdbdbd"/></svg><svg class="a" style="left:1903px;top:481px" width="12" height="12"><rect x="0.5" y="0.5" width="10.5" height="10.5" fill="#3a3a3a" stroke="#cfcfcf" stroke-width="1"/><path d="M3,5.8 L8.5,2.8 L8.5,8.8Z" fill="#cfcfcf"/></svg><div class="a" style="left:1718px;top:499px;width:151px;height:31px;background:#2b2b2b;border:1px solid #1c1c1c;border-radius:5px;"></div><div class="t" style="left:1724.5px;top:506.70px;font-size:15px;line-height:15px;color:#dcdcdc;font-weight:400;font-style:normal;transform:scaleX(0.8659);transform-origin:0 0;">Mode</div><div class="t" style="left:1797.7px;top:506.70px;font-size:15px;line-height:15px;color:#dcdcdc;font-weight:400;font-style:normal;transform:scaleX(0.8874);transform-origin:0 0;">Normal</div><svg class="a" style="left:1850px;top:511px" width="12" height="8"><path d="M1,1 L6.0,6 L11,1" fill="none" stroke="#e0e0e0" stroke-width="1.6"/></svg><div class="a" style="left:1870px;top:499px;width:45px;height:31px;background:#2b2b2b;border:1px solid #1c1c1c;border-radius:5px;"></div><svg class="a" style="left:1874px;top:507px" width="16" height="16"><path d="M4.5,5 A4.5,4.5 0 1 1 5.5,11.5" fill="none" stroke="#c8c8c8" stroke-width="1.6"/><path d="M2,4 L6.5,2.5 L6.5,7.5Z" fill="#c8c8c8"/><circle cx="5" cy="12.5" r="1.7" fill="#c8c8c8"/></svg><svg class="a" style="left:1896px;top:511px" width="12" height="8"><path d="M1,1 L6.0,6 L11,1" fill="none" stroke="#e0e0e0" stroke-width="1.6"/></svg><div class="a" style="left:1718px;top:531px;width:197px;height:38px;background:#5a5a5a;border:1px solid #777;border-radius:0px;"></div><div class="t" style="left:1719.6px;top:541.50px;font-size:15px;line-height:15px;color:#dcdcdc;font-weight:400;font-style:normal;transform:scaleX(0.9045);transform-origin:0 0;">Opacity</div><div class="t" style="left:1865.1px;top:541.50px;font-size:15px;line-height:15px;color:#dcdcdc;font-weight:400;font-style:normal;transform:scaleX(0.9215);transform-origin:0 0;">100.0</div><div class="a" style="left:1902px;top:532px;width:13px;height:36px;background:#3c3c3c;border-radius:0px;border-left:1px solid #1c1c1c"></div><svg class="a" style="left:1903px;top:532px" width="11" height="36"><path d="M2,11 L5.5,6.5 L9,11" fill="none" stroke="#6a6a6a" stroke-width="1.4"/><path d="M2,26 L5.5,30.5 L9,26" fill="none" stroke="#cfcfcf" stroke-width="1.4"/></svg><div class="t" style="left:1717.4px;top:574.10px;font-size:15px;line-height:15px;color:#dcdcdc;font-weight:400;font-style:normal;transform:scaleX(0.9119);transform-origin:0 0;">Lock:</div><svg class="a" style="left:1756px;top:572px" width="70" height="18"><path d="M4,16 Q3,13 6,12 L14,3 L15,4 L8,13.5 Q6.5,16 4,16Z" fill="#bdbdbd"/><path d="M32,3 L32,16 M25.5,9.5 L38.5,9.5" stroke="#bdbdbd" stroke-width="1.4"/><path d="M32,2 L34.5,5 L29.5,5Z M32,17 L34.5,14 L29.5,14Z M25,9.5 L28,7 L28,12Z M39,9.5 L36,7 L36,12Z" fill="#bdbdbd"/><g fill="#9a9a9a"><rect x="50" y="3" width="3.4" height="3.4"/><rect x="56.8" y="3" width="3.4" height="3.4"/><rect x="53.4" y="6.4" width="3.4" height="3.4"/><rect x="60.2" y="6.4" width="3.4" height="3.4"/><rect x="50" y="9.8" width="3.4" height="3.4"/><rect x="56.8" y="9.8" width="3.4" height="3.4"/><rect x="53.4" y="13.2" width="3.4" height="3.4"/><rect x="60.2" y="13.2" width="3.4" height="3.4"/></g><g fill="#6a6a6a"><rect x="53.4" y="3" width="3.4" height="3.4"/><rect x="60.2" y="3" width="3.4" height="3.4"/><rect x="50" y="6.4" width="3.4" height="3.4"/><rect x="56.8" y="6.4" width="3.4" height="3.4"/><rect x="53.4" y="9.8" width="3.4" height="3.4"/><rect x="60.2" y="9.8" width="3.4" height="3.4"/><rect x="50" y="13.2" width="3.4" height="3.4"/><rect x="56.8" y="13.2" width="3.4" height="3.4"/></g></svg><div class="a" style="left:1718px;top:594px;width:197px;height:365px;background:#2f2f2f;border-radius:0px;"></div><div class="a" style="left:1719px;top:594px;width:196px;height:41px;background:#1e1e1e;border-radius:0px;"></div><svg class="a" style="left:1722px;top:605px" width="22" height="20"><path d="M1,10 Q11,0 21,10 Q11,20 1,10Z" fill="none" stroke="#c8c8c8" stroke-width="1.8"/><circle cx="11" cy="10" r="3.3" fill="none" stroke="#c8c8c8" stroke-width="1.8"/></svg><div class="a" style="left:1794px;top:597px;width:36px;height:36px;background:#fff;border-radius:0px;"></div><div class="t" style="left:1833.9px;top:607.10px;font-size:15px;line-height:15px;color:#e8e8e8;font-weight:700;font-style:normal;transform:scaleX(0.9827);transform-origin:0 0;">Background</div><div class="a" style="left:1718px;top:960px;width:197px;height:14px;background:#262626;border-radius:0px;"></div><div class="a" style="left:1719px;top:960px;width:188px;height:14px;background:#5e5e5e;border:1px solid #1c1c1c;border-radius:3px;"></div><svg class="a" style="left:1716px;top:978px" width="199" height="18"><g stroke="#c0c0c0" fill="none" stroke-width="1.2"><path d="M10,4 L15,4 L18.5,7.5 L18.5,15 L10,15Z"/><path d="M6.5,3.5 L11.5,3.5 M9,1 L9,6"/></g><path d="M31,3 L36,3 L37.5,5 L44,5 L44,15 L31,15Z" fill="#c0c0c0"/><path d="M37,11 L43,11 M40,8 L40,14" stroke="#333" stroke-width="1.8"/><path d="M56,11 L61.5,5.5 L67,11" fill="none" stroke="#c0c0c0" stroke-width="1.6"/><path d="M79.5,6 L85,11.5 L90.5,6" fill="none" stroke="#c0c0c0" stroke-width="1.6"/><g stroke="#c0c0c0" fill="none" stroke-width="1.1"><rect x="104" y="3.5" width="8" height="6.5"/><path d="M107,10 L107,14.5 L115,14.5 L115,7 L112,7"/></g><g stroke="#c0c0c0" fill="none" stroke-width="1.2"><path d="M133.5,5 L133.5,15 M130,8.5 L137,8.5 M128.5,12 Q133.5,17 138.5,12"/><circle cx="133.5" cy="3.5" r="1.5"/></g><g fill="#c0c0c0"><path d="M153,3 L160,3 L160,7.5 Q156.5,10 153,7.5Z"/><path d="M151,15.5 L154,10.5 L164,10.5 L161,15.5Z"/></g><rect x="178" y="2.5" width="13" height="13" fill="#c8c8c8"/><path d="M180.5,5 L188.5,13 M188.5,5 L180.5,13" stroke="#2a2a2a" stroke-width="2.2"/></svg><svg class="a" style="left:1713px;top:506px" width="2" height="18"><g fill="#bdbdbd"><rect x="0" y="0" width="2" height="4"/><rect x="0" y="7" width="2" height="4"/><rect x="0" y="14" width="2" height="4"/></g></svg>
<div class="a" style="left:0;top:1000px;width:1915px;height:1px;background:#5a5a5a"></div>
<div class="a" style="left:0;top:1001px;width:1915px;height:6px;background:#1c1c1c"></div>
<div class="a" style="left:554px;top:1001px;width:61px;height:6px;background:#4a4a4a"></div>
</body></html>
